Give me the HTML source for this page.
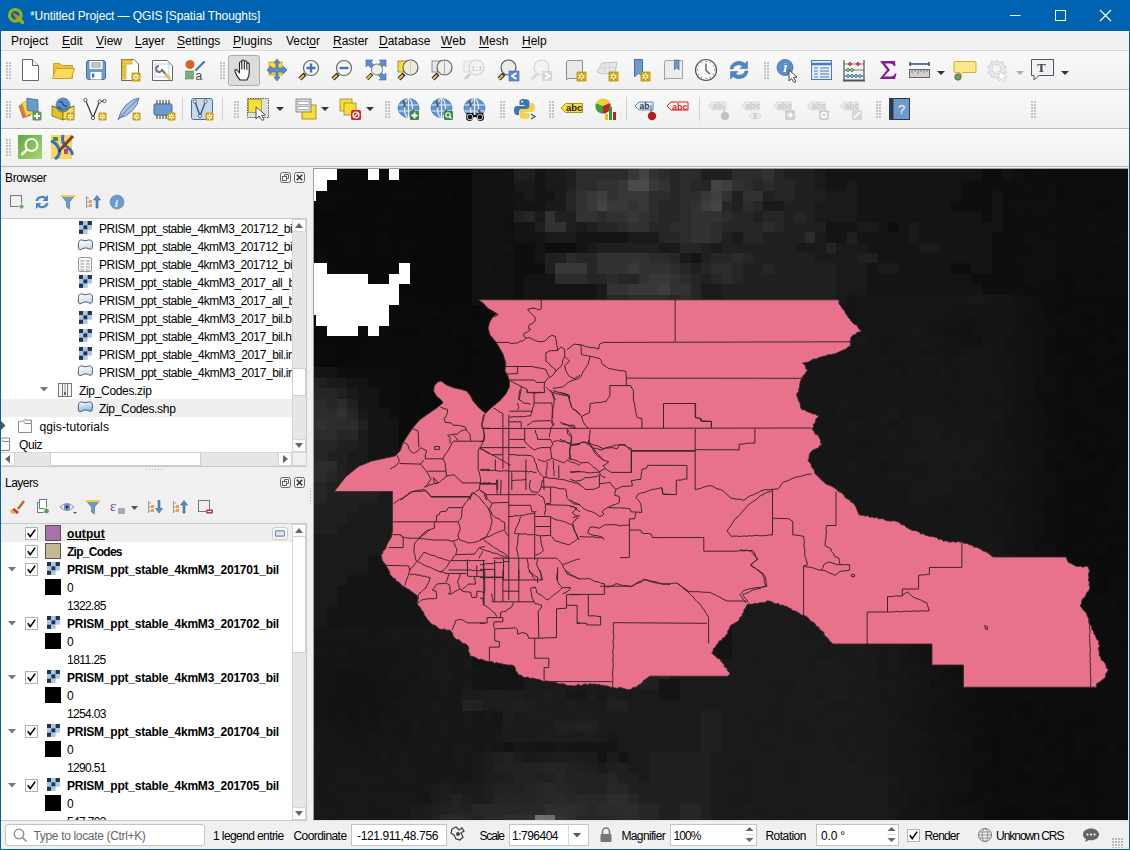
<!DOCTYPE html>
<html><head><meta charset="utf-8">
<style>
*{margin:0;padding:0;box-sizing:border-box}
html,body{width:1130px;height:850px;overflow:hidden;background:#f0f0f0;font-family:"Liberation Sans",sans-serif;font-size:12px;color:#000}
.a{position:absolute}
svg{position:absolute;overflow:visible}
#title{left:0;top:0;width:1130px;height:31px;background:#0063b1;color:#fff}
#menu{left:1px;top:31px;width:1128px;height:20px;background:#f0f0f0;border-top:1px solid #fbf8f3}
#menu span{position:absolute;top:2px;white-space:nowrap}
#menu u{text-decoration:none;border-bottom:1px solid #000;display:inline-block;line-height:11px}
.tb{left:1px;width:1128px;background:linear-gradient(#f9f9f9,#f0f0f0);border-top:1px solid #fff}
.sep{position:absolute;left:1px;width:1128px;height:1px;background:#c4c4c4}
.grip{position:absolute;width:5px;height:17px;background-image:radial-gradient(circle at 1px 1px,#c2c2c2 0.8px,transparent 1px);background-size:3px 3px}
.vsep{position:absolute;width:1px;height:24px;background:#d0d0d0}

</style></head><body>
<div id="title" class="a">
  <svg style="left:7px;top:7px" width="18" height="18" viewBox="0 0 18 18"><circle cx="8.3" cy="8.3" r="5.8" fill="none" stroke="#93b023" stroke-width="3.2"/><path d="M9.5 9.5 L15.5 15.5" stroke="#93b023" stroke-width="3.4" stroke-linecap="round"/><path d="M6.5 6.5 L11 11" stroke="#ee7913" stroke-width="2"/></svg>
  <div class="a" style="left:30px;top:9px;font-size:12px;white-space:nowrap;letter-spacing:-0.1px">*Untitled Project — QGIS [Spatial Thoughts]</div>
  <svg style="left:1010px;top:15px" width="11" height="2"><path d="M0 0.5H10.5" stroke="#fff" stroke-width="1"/></svg>
  <svg style="left:1055px;top:10px" width="11" height="11"><rect x="0.5" y="0.5" width="10" height="10" fill="none" stroke="#fff"/></svg>
  <svg style="left:1100px;top:10px" width="11" height="11"><path d="M0 0L11 11M11 0L0 11" stroke="#fff" stroke-width="1.1"/></svg>
</div>
<div class="a" style="left:0;top:31px;width:1px;height:819px;background:#0063b1"></div>
<div class="a" style="left:1129px;top:31px;width:1px;height:819px;background:#0063b1"></div>
<div id="menu" class="a">
  <span style="left:10px">Pro<u>j</u>ect</span><span style="left:61px"><u>E</u>dit</span><span style="left:95px"><u>V</u>iew</span><span style="left:134px"><u>L</u>ayer</span><span style="left:176px"><u>S</u>ettings</span><span style="left:232px"><u>P</u>lugins</span><span style="left:285px">Vect<u>o</u>r</span><span style="left:332px"><u>R</u>aster</span><span style="left:378px"><u>D</u>atabase</span><span style="left:440px"><u>W</u>eb</span><span style="left:478px"><u>M</u>esh</span><span style="left:521px"><u>H</u>elp</span>
</div>
<div class="sep" style="top:50px;background:#d8d8d8"></div>
<div class="a tb" style="top:51px;height:38px"></div>
<div class="sep" style="top:89px;background:#b9b9b9"></div>
<div class="a tb" style="top:90px;height:38px"></div>
<div class="sep" style="top:128px;background:#b9b9b9"></div>
<div class="a tb" style="top:129px;height:37px"></div>
<div class="sep" style="top:166px;background:#b9b9b9"></div>
<div class="grip" style="left:6px;top:62px"></div>
<svg style="left:18px;top:58px" width="24" height="24" viewBox="0 0 24 24"><path d="M4.5 1.5H14.5L20.5 7.5V22.5H4.5Z" fill="#fff" stroke="#666" stroke-width="1"/><path d="M14.5 1.5V7.5H20.5" fill="#f0f0f0" stroke="#666"/></svg>
<svg style="left:51px;top:58px" width="24" height="24" viewBox="0 0 24 24"><path d="M2.5 5.5H9L11 7.5H21.5V20.5H2.5Z" fill="#e8c440" stroke="#c9a227"/><path d="M4.5 10.5H23.5L20.5 20.5H1.5Z" fill="#fad858" stroke="#c9a227"/></svg>
<svg style="left:84px;top:58px" width="24" height="24" viewBox="0 0 24 24"><rect x="2.5" y="2.5" width="19" height="19" rx="2.5" fill="#6e9acb" stroke="#3f6fa5"/><rect x="5.5" y="3" width="13" height="8" fill="#fff"/><path d="M7 5H17M7 7H17M7 9H17" stroke="#666" stroke-width="0.8"/><rect x="6.5" y="14" width="11" height="7.5" fill="#fff"/><rect x="8" y="15.5" width="2.2" height="4" fill="#3f6fa5"/></svg>
<svg style="left:117px;top:58px" width="24" height="24" viewBox="0 0 24 24"><path d="M4.5 1.5H17L21.5 6V22.5H4.5Z" fill="#fff" stroke="#666"/><path d="M5 2H9V21H5Z" fill="#f2cc3c" stroke="#c9a227" stroke-width="0.8"/><path d="M5 2H15V6H9" fill="#f2cc3c" stroke="#c9a227" stroke-width="0.8"/><path d="M5.5 5H7.5M5.5 8H7.5M5.5 11H7.5M5.5 14H7.5M5.5 17H7.5" stroke="#b08a10" stroke-width="0.6"/><rect x="14.5" y="14.5" width="9" height="9" rx="1.2" fill="#c9a010"/><path d="M19 15.76V22.24M16.21 17.38L21.79 20.62M16.21 20.62L21.79 17.38" stroke="#fff" stroke-width="1.2"/><circle cx="19" cy="19" r="1.53" fill="#c9a010" stroke="#fff" stroke-width="0.8"/></svg>
<svg style="left:151px;top:58px" width="24" height="24" viewBox="0 0 24 24"><path d="M1.5 2.5H16L21.5 8V22.5H1.5Z" fill="#fff" stroke="#666"/><rect x="4" y="6" width="14" height="13" fill="#fff" stroke="#a9c1ea" stroke-width="0.8"/><path d="M8 8A3 3 0 1 0 11 12L19 21" stroke="#777" stroke-width="2.2" fill="none"/><path d="M14 16L19.5 21.5" stroke="#e0c060" stroke-width="2.6"/></svg>
<svg style="left:183px;top:58px" width="24" height="24" viewBox="0 0 24 24"><circle cx="7" cy="6.5" r="4.5" fill="#d9622b"/><path d="M13 12L21 4" stroke="#4a7bbd" stroke-width="2.4" stroke-linecap="round"/><rect x="2.5" y="13" width="8" height="8" fill="#7bac7b" stroke="#5c8c5c" stroke-width="0.6"/><text x="12.5" y="21.5" font-size="12" font-family="Liberation Sans, sans-serif" fill="#444">a</text></svg>
<div class="grip" style="left:220px;top:62px"></div>
<div class="a" style="left:228px;top:55px;width:32px;height:31px;background:#dcdcdc;border:1px solid #adadad;border-radius:3px"></div>
<svg style="left:232px;top:58px" width="24" height="24" viewBox="0 0 24 24"><path d="M8 22C5 19 3.5 15.5 3 13.2C2.6 11.5 4.2 11 5.5 12.5L7.5 15V5C7.5 3.3 9.8 3.3 9.8 5V11V3.2C9.8 1.5 12.3 1.5 12.3 3.2V11V4C12.3 2.3 14.8 2.3 14.8 4V11.5V6C14.8 4.5 17.2 4.5 17.2 6V15C17.2 18 16 20 15 22Z" fill="#fff" stroke="#222" stroke-width="1.1" stroke-linejoin="round"/></svg>
<svg style="left:265px;top:58px" width="24" height="24" viewBox="0 0 24 24"><rect x="4" y="4" width="13" height="13" fill="#f7df35" stroke="#b89a10" stroke-width="0.8"/><path d="M12 1L15 5H13V10H18V8L22 12L18 16V14H13V19H15L12 23L9 19H11V14H6V16L2 12L6 8V10H11V5H9Z" fill="#5b8ccd" stroke="#3b6aa8" stroke-width="0.7"/></svg>
<svg style="left:297px;top:58px" width="24" height="24" viewBox="0 0 24 24"><path d="M8 16L3 21" stroke="#222" stroke-width="4"/><path d="M7 17L3 21" stroke="#e8c547" stroke-width="2.2"/><circle cx="14" cy="10" r="7.5" fill="#f4f4f4" stroke="#666" stroke-width="1.2"/><path d="M14 5.5V14.5M9.5 10H18.5" stroke="#3f75b8" stroke-width="2.4"/></svg>
<svg style="left:330px;top:58px" width="24" height="24" viewBox="0 0 24 24"><path d="M8 16L3 21" stroke="#222" stroke-width="4"/><path d="M7 17L3 21" stroke="#e8c547" stroke-width="2.2"/><circle cx="14" cy="10" r="7.5" fill="#f4f4f4" stroke="#666" stroke-width="1.2"/><path d="M9.5 10H18.5" stroke="#3f75b8" stroke-width="2.4"/></svg>
<svg style="left:364px;top:58px" width="24" height="24" viewBox="0 0 24 24"><path d="M2 2H9L7 4L10 7L7 10L4 7L2 9Z M22 2H15L17 4L14 7L17 10L20 7L22 9Z M22 22H15L17 20L14 17L17 14L20 17L22 15Z" fill="#5b8ccd" stroke="#3b6aa8" stroke-width="0.6"/><circle cx="13" cy="11.5" r="5.5" fill="#eee" stroke="#777"/><path d="M8 16L3 21" stroke="#222" stroke-width="3.6"/><path d="M7.2 16.8L3 21" stroke="#e8c547" stroke-width="2"/></svg>
<svg style="left:396px;top:58px" width="24" height="24" viewBox="0 0 24 24"><rect x="2" y="3" width="9" height="11" fill="#f7df35" stroke="#8a7a20" stroke-width="0.8"/><path d="M8 16L3 21" stroke="#222" stroke-width="4"/><path d="M7 17L3 21" stroke="#e8c547" stroke-width="2.2"/><circle cx="14.5" cy="9.5" r="7.5" fill="#ececdc" stroke="#666" stroke-width="1.2"/><path d="M14.5 2.5V16.5" stroke="#ccc" stroke-width="1"/></svg>
<svg style="left:430px;top:58px" width="24" height="24" viewBox="0 0 24 24"><rect x="2" y="3" width="9" height="11" fill="#e6e6e6" stroke="#777" stroke-width="0.8"/><path d="M8 16L3 21" stroke="#222" stroke-width="4"/><path d="M7 17L3 21" stroke="#e8c547" stroke-width="2.2"/><circle cx="14.5" cy="9.5" r="7.5" fill="#eee" stroke="#666" stroke-width="1.2"/><path d="M14.5 2.5V16.5" stroke="#aaa" stroke-width="1"/></svg>
<svg style="left:462px;top:58px" width="24" height="24" viewBox="0 0 24 24"><rect x="2" y="3" width="9" height="11" fill="#f0f0f0" stroke="#d4d4d4" stroke-width="0.8"/><path d="M8 16L3 21" stroke="#d0d0d0" stroke-width="3"/><circle cx="14.5" cy="9.5" r="7.5" fill="#f3f3f3" stroke="#d0d0d0" stroke-width="1.2"/><text x="9" y="13" font-size="8" font-weight="bold" fill="#d0d0d0" font-family="Liberation Sans">1:1</text></svg>
<svg style="left:496px;top:58px" width="24" height="24" viewBox="0 0 24 24"><path d="M8 16L3 21" stroke="#222" stroke-width="4"/><path d="M7 17L3 21" stroke="#e8c547" stroke-width="2.2"/><circle cx="12.5" cy="9.5" r="7.5" fill="#ececec" stroke="#555" stroke-width="1.2"/><rect x="13" y="13" width="10" height="10" fill="#5b8ccd" stroke="#3b6aa8" stroke-width="0.6"/><path d="M20.5 15L16 18L20.5 21" stroke="#fff" stroke-width="1.8" fill="none"/></svg>
<svg style="left:529px;top:58px" width="24" height="24" viewBox="0 0 24 24"><path d="M8 16L3 21" stroke="#d8d8d8" stroke-width="3"/><circle cx="12.5" cy="9.5" r="7.5" fill="#f3f3f3" stroke="#d4d4d4" stroke-width="1.2"/><rect x="13" y="13" width="10" height="10" fill="#d8d8d8"/><path d="M16 15L20.5 18L16 21" stroke="#fff" stroke-width="1.8" fill="none"/></svg>
<svg style="left:563px;top:58px" width="24" height="24" viewBox="0 0 24 24"><path d="M3.5 4.5Q3.5 2.5 6 2.5H19.5V20.5H6Q3.5 20.5 3.5 22Z" fill="#e9e9e9" stroke="#888" stroke-width="0.9"/><path d="M3.5 4.5V21" stroke="#888" stroke-width="0.9"/><rect x="13.5" y="13.5" width="10" height="10" rx="1.2" fill="#c9a010"/><path d="M18.5 14.9V22.1M15.4 16.7L21.6 20.3M15.4 20.3L21.6 16.7" stroke="#fff" stroke-width="1.2"/><circle cx="18.5" cy="18.5" r="1.7000000000000002" fill="#c9a010" stroke="#fff" stroke-width="0.8"/></svg>
<svg style="left:595px;top:58px" width="24" height="24" viewBox="0 0 24 24"><path d="M2 14L7 5L22 4L20 15L7 16Z" fill="#e6e6e6" stroke="#bbb" stroke-width="0.8"/><path d="M5 10L21 9M10 5L9 16M15 5L14 16" stroke="#ccc" stroke-width="0.6"/><rect x="13.5" y="13.5" width="10" height="10" rx="1.2" fill="#c9a010"/><path d="M18.5 14.9V22.1M15.4 16.7L21.6 20.3M15.4 20.3L21.6 16.7" stroke="#fff" stroke-width="1.2"/><circle cx="18.5" cy="18.5" r="1.7000000000000002" fill="#c9a010" stroke="#fff" stroke-width="0.8"/></svg>
<svg style="left:631px;top:58px" width="24" height="24" viewBox="0 0 24 24"><path d="M3.5 1.5H11.5V19L7.5 15L3.5 19Z" fill="#6e9acb" stroke="#3f6fa5"/><rect x="9.5" y="13.5" width="10" height="10" rx="1.2" fill="#c9a010"/><path d="M14.5 14.9V22.1M11.4 16.7L17.6 20.3M11.4 20.3L17.6 16.7" stroke="#fff" stroke-width="1.2"/><circle cx="14.5" cy="18.5" r="1.7000000000000002" fill="#c9a010" stroke="#fff" stroke-width="0.8"/></svg>
<svg style="left:661px;top:58px" width="24" height="24" viewBox="0 0 24 24"><path d="M3.5 4.5Q3.5 2.5 6 2.5H21.5V20.5H6Q3.5 20.5 3.5 22Z" fill="#ececec" stroke="#999" stroke-width="0.9"/><path d="M13.5 2H18V12L15.8 9.5L13.5 12Z" fill="#6e9acb" stroke="#3f6fa5" stroke-width="0.7"/></svg>
<svg style="left:694px;top:58px" width="24" height="24" viewBox="0 0 24 24"><circle cx="12" cy="12" r="10.5" fill="#fafafa" stroke="#555" stroke-width="1.2"/><path d="M12 5.5V12.5L16 16" stroke="#555" stroke-width="1.3" fill="none"/><g fill="#4a7bbd"><circle cx="12" cy="3.5" r="0.7"/><circle cx="20.5" cy="12" r="0.7"/><circle cx="12" cy="20.5" r="0.7"/><circle cx="3.5" cy="12" r="0.7"/><circle cx="16.2" cy="4.6" r="0.6"/><circle cx="19.4" cy="7.8" r="0.6"/><circle cx="19.4" cy="16.2" r="0.6"/><circle cx="16.2" cy="19.4" r="0.6"/><circle cx="7.8" cy="19.4" r="0.6"/><circle cx="4.6" cy="16.2" r="0.6"/><circle cx="4.6" cy="7.8" r="0.6"/><circle cx="7.8" cy="4.6" r="0.6"/></g></svg>
<svg style="left:727px;top:58px" width="24" height="24" viewBox="0 0 24 24"><path d="M3 11A9 8.5 0 0 1 18 5.5L20.5 3V10.5H13L15.5 8A6 5.5 0 0 0 6 11Z" fill="#4d86c8" stroke="#3b6aa8" stroke-width="0.5"/><path d="M21 13A9 8.5 0 0 1 6 18.5L3.5 21V13.5H11L8.5 16A6 5.5 0 0 0 18 13Z" fill="#4d86c8" stroke="#3b6aa8" stroke-width="0.5"/></svg>
<div class="grip" style="left:764px;top:62px"></div>
<svg style="left:775px;top:58px" width="24" height="24" viewBox="0 0 24 24"><circle cx="10" cy="9.5" r="8" fill="#5b8fcb" stroke="#3f6fa5" stroke-width="0.8"/><path d="M10.5 5.5V5M9.5 8H11L9.5 13H11" stroke="#fff" stroke-width="1.8" fill="none"/><path d="M14 12L14 23L16.5 20.5L19 24.5L21 23.5L18.5 19.5L22 19Z" fill="#fff" stroke="#333" stroke-width="0.9"/></svg>
<svg style="left:809px;top:58px" width="24" height="24" viewBox="0 0 24 24"><rect x="2.5" y="2.5" width="20" height="19" fill="#e4eef9" stroke="#4a7bbd"/><path d="M2.5 6H22.5" stroke="#4a7bbd" stroke-width="2.5"/><path d="M5 10H9M11 10H20M5 13H9M11 13H20M5 16H9M11 16H20M5 19H9M11 19H20" stroke="#4a7bbd" stroke-width="1.2"/></svg>
<svg style="left:842px;top:58px" width="24" height="24" viewBox="0 0 24 24"><path d="M2 2V22M22 2V22" stroke="#555" stroke-width="1.2"/><path d="M1 22.5H23" stroke="#555" stroke-width="2"/><path d="M2 6H22M2 12H22M2 18H22" stroke="#555" stroke-width="0.8"/><g stroke-width="0.8"><path d="M8 4L10 6L8 8L6 6Z M16 4L18 6L16 8L14 6Z" fill="#e05050" stroke="#b03030"/><path d="M6 10L8 12L6 14L4 12Z M10 10L12 12L10 14L8 12Z" fill="#80c080" stroke="#408040"/><path d="M6 16L8 18L6 20L4 18Z M10 16L12 18L10 20L8 18Z M14 16L16 18L14 20L12 18Z M18 16L20 18L18 20L16 18Z" fill="#80b0e0" stroke="#4070b0"/></g></svg>
<svg style="left:876px;top:58px" width="24" height="24" viewBox="0 0 24 24"><path d="M4 3H19L19.5 8H18Q17 5.5 14 5.5H9L14 12L8 18.5H14.5Q18 18.5 19 15.5H20.5L19 21H3.5L11 12Z" fill="#8b1a9c"/></svg>
<svg style="left:907px;top:58px" width="24" height="24" viewBox="0 0 24 24"><path d="M3 6H22M3 4V8M22 4V8" stroke="#2f4f7f" stroke-width="1.5"/><rect x="2.5" y="11.5" width="20" height="8" fill="#d0d0d0" stroke="#666"/><path d="M5 12V15M8 12V14M11 12V16M14 12V14M17 12V15M20 12V14" stroke="#666" stroke-width="0.8"/></svg>
<svg style="left:937px;top:71px" width="8" height="4" viewBox="0 0 8 4"><path d="M0 0H8L4 4Z" fill="#333"/></svg>
<svg style="left:952px;top:58px" width="24" height="24" viewBox="0 0 24 24"><path d="M3 3.5H23Q24 3.5 24 5V13Q24 14.5 23 14.5H11L8 18V14.5H3Q2 14.5 2 13V5Q2 3.5 3 3.5Z" fill="#fbe88a" stroke="#d0b030"/><circle cx="6" cy="19" r="3.2" fill="#6aa06a" stroke="#3a6a3a" stroke-width="0.8"/></svg>
<svg style="left:985px;top:58px" width="24" height="24" viewBox="0 0 24 24"><path d="M12 2L14 4.5L17.5 3.5L18 7L21.5 8.5L19.5 11.5L21.5 14.5L18 16L17 19.5L14 18.5L12 21L10 18.5L6.5 19.5L6 16L2.5 14.5L4.5 11.5L2.5 8.5L6 7L6.5 3.5L10 4.5Z" fill="#e8e8e8" stroke="#d0d0d0"/><circle cx="11.5" cy="11" r="4.5" fill="#f4f4f4" stroke="#d0d0d0"/><path d="M14 13L14 23L16.5 20.5L19 24L21 23L18.5 19.5L22 19Z" fill="#fff" stroke="#ccc" stroke-width="0.9"/></svg>
<svg style="left:1016px;top:71px" width="8" height="4" viewBox="0 0 8 4"><path d="M0 0H8L4 4Z" fill="#aaa"/></svg>
<svg style="left:1030px;top:58px" width="24" height="24" viewBox="0 0 24 24"><path d="M1.5 1.5H23.5V17.5H9L4 22V17.5H1.5Z" fill="#eef2f6" stroke="#555" stroke-width="1"/><text x="7" y="14" font-size="13" font-family="Liberation Serif" font-weight="bold" fill="#444">T</text></svg>
<svg style="left:1061px;top:71px" width="8" height="4" viewBox="0 0 8 4"><path d="M0 0H8L4 4Z" fill="#333"/></svg>
<div class="grip" style="left:6px;top:101px"></div>
<svg style="left:18px;top:97px" width="24" height="24" viewBox="0 0 24 24"><path d="M1 9L8 5L13 18L5 21Z" fill="#e07a3a" stroke="#b05020" stroke-width="0.6"/><path d="M4 6L11 3L15 16L8 19Z" fill="#f7d84a" stroke="#c0a020" stroke-width="0.6"/><path d="M8 2H19L21 14H10Z" fill="#6e9acb" stroke="#3f6fa5" stroke-width="0.8" transform="rotate(8 14 8)"/><rect x="14.5" y="14.5" width="9" height="9" rx="1.5" fill="#5a9a5a"/><path d="M19 16V22M16 19H22" stroke="#fff" stroke-width="1.8"/></svg>
<svg style="left:51px;top:97px" width="24" height="24" viewBox="0 0 24 24"><path d="M1 9L12 13V23L1 19Z" fill="#e4c020" stroke="#706010" stroke-width="0.7"/><path d="M12 13L23 9V19L12 23Z" fill="#f7de4a" stroke="#706010" stroke-width="0.7"/><circle cx="12" cy="8" r="7" fill="#5b8ccd" stroke="#3f6fa5" stroke-width="0.7"/><path d="M8 5Q11 4 12 7T16 9M7 10Q10 11 11 13" stroke="#2f4f7f" stroke-width="1.4" fill="none"/><path d="M1 9L12 13L23 9" fill="none" stroke="#706010" stroke-width="0.7"/><rect x="15.5" y="15.5" width="8" height="8" rx="1.2" fill="#c9a010"/><path d="M19.5 16.62V22.38M17.02 18.06L21.98 20.94M17.02 20.94L21.98 18.06" stroke="#fff" stroke-width="1.2"/><circle cx="19.5" cy="19.5" r="1.36" fill="#c9a010" stroke="#fff" stroke-width="0.8"/></svg>
<svg style="left:83px;top:97px" width="24" height="24" viewBox="0 0 24 24"><path d="M2.5 3L10 21L16.5 4.5L21.5 4" fill="none" stroke="#333" stroke-width="1.2"/><circle cx="2.5" cy="3" r="1.6" fill="#fff" stroke="#333" stroke-width="0.8"/><circle cx="10" cy="21" r="1.6" fill="#fff" stroke="#333" stroke-width="0.8"/><circle cx="16.5" cy="4.5" r="1.6" fill="#fff" stroke="#333" stroke-width="0.8"/><circle cx="21.5" cy="4" r="1.6" fill="#fff" stroke="#333" stroke-width="0.8"/><rect x="15.5" y="15.5" width="8" height="8" rx="1.2" fill="#c9a010"/><path d="M19.5 16.62V22.38M17.02 18.06L21.98 20.94M17.02 20.94L21.98 18.06" stroke="#fff" stroke-width="1.2"/><circle cx="19.5" cy="19.5" r="1.36" fill="#c9a010" stroke="#fff" stroke-width="0.8"/></svg>
<svg style="left:117px;top:97px" width="24" height="24" viewBox="0 0 24 24"><path d="M1 23Q3 14 9 8Q15 2 22 1Q21 8 15 14Q9 20 2 21Z" fill="#a9bfe0" stroke="#4a6a9a" stroke-width="0.8"/><path d="M2 22Q10 12 20 3" stroke="#4a6a9a" stroke-width="0.8" fill="none"/><rect x="15.5" y="15.5" width="8" height="8" rx="1.2" fill="#c9a010"/><path d="M19.5 16.62V22.38M17.02 18.06L21.98 20.94M17.02 20.94L21.98 18.06" stroke="#fff" stroke-width="1.2"/><circle cx="19.5" cy="19.5" r="1.36" fill="#c9a010" stroke="#fff" stroke-width="0.8"/></svg>
<svg style="left:152px;top:97px" width="24" height="24" viewBox="0 0 24 24"><rect x="2" y="7" width="18" height="11" rx="1" fill="#6e9acb" stroke="#3f6fa5"/><path d="M5 3V7M8 3V7M11 3V7M14 3V7M17 3V7M5 18V22M8 18V22M11 18V22M14 18V22" stroke="#333" stroke-width="1"/><rect x="15.5" y="15.5" width="8" height="8" rx="1.2" fill="#c9a010"/><path d="M19.5 16.62V22.38M17.02 18.06L21.98 20.94M17.02 20.94L21.98 18.06" stroke="#fff" stroke-width="1.2"/><circle cx="19.5" cy="19.5" r="1.36" fill="#c9a010" stroke="#fff" stroke-width="0.8"/></svg>
<div class="vsep" style="left:182px;top:97px"></div>
<svg style="left:190px;top:97px" width="24" height="24" viewBox="0 0 24 24"><rect x="1.5" y="1.5" width="21" height="21" rx="2" fill="#c8d8ea" stroke="#3f6fa5" stroke-width="1"/><path d="M5 4.5L10 19L15.5 4.5" fill="none" stroke="#2f4f7f" stroke-width="1.3"/><circle cx="5" cy="4.5" r="1.6" fill="#fff" stroke="#333" stroke-width="0.7"/><circle cx="10" cy="19" r="1.6" fill="#fff" stroke="#333" stroke-width="0.7"/><circle cx="15.5" cy="4.5" r="1.6" fill="#fff" stroke="#333" stroke-width="0.7"/><rect x="15.5" y="15.5" width="8" height="8" rx="1.2" fill="#c9a010"/><path d="M19.5 16.62V22.38M17.02 18.06L21.98 20.94M17.02 20.94L21.98 18.06" stroke="#fff" stroke-width="1.2"/><circle cx="19.5" cy="19.5" r="1.36" fill="#c9a010" stroke="#fff" stroke-width="0.8"/></svg>
<div class="vsep" style="left:222px;top:97px"></div>
<div class="grip" style="left:234px;top:101px"></div>
<svg style="left:246px;top:97px" width="24" height="24" viewBox="0 0 24 24"><rect x="1.5" y="1.5" width="21" height="19" fill="#e0e0e0" stroke="#333" stroke-width="0.8" stroke-dasharray="1.5 1"/><rect x="2.5" y="2.5" width="13" height="13" fill="#f7df35" stroke="#8a7a20" stroke-width="0.6"/><path d="M10 10L10 22L13 19L16 23.5L18 22.5L15.5 18.5L19.5 18Z" fill="#fff" stroke="#444" stroke-width="0.9"/></svg>
<svg style="left:276px;top:107px" width="8" height="4" viewBox="0 0 8 4"><path d="M0 0H8L4 4Z" fill="#333"/></svg>
<svg style="left:294px;top:97px" width="24" height="24" viewBox="0 0 24 24"><rect x="8" y="8" width="14" height="14" fill="#f7df35" stroke="#8a7a20" stroke-width="0.8"/><rect x="2" y="2" width="15" height="13" fill="#dcdcdc" stroke="#777" stroke-width="0.8"/><rect x="4" y="4.5" width="11" height="3" fill="#fff" stroke="#888" stroke-width="0.6"/><rect x="4" y="9.5" width="11" height="3" fill="#fff" stroke="#888" stroke-width="0.6"/></svg>
<svg style="left:321px;top:107px" width="8" height="4" viewBox="0 0 8 4"><path d="M0 0H8L4 4Z" fill="#333"/></svg>
<svg style="left:338px;top:97px" width="24" height="24" viewBox="0 0 24 24"><rect x="2" y="2" width="12" height="12" fill="#f7df35" stroke="#8a7a20" stroke-width="0.7"/><rect x="6" y="6" width="12" height="12" fill="#f7df35" stroke="#8a7a20" stroke-width="0.7"/><rect x="13" y="13" width="10" height="10" rx="1.5" fill="#d02828"/><circle cx="18" cy="18" r="3" fill="none" stroke="#fff" stroke-width="1.2"/><path d="M16 20L20 16" stroke="#fff" stroke-width="1.2"/></svg>
<svg style="left:366px;top:107px" width="8" height="4" viewBox="0 0 8 4"><path d="M0 0H8L4 4Z" fill="#333"/></svg>
<div class="grip" style="left:385px;top:101px"></div>
<svg style="left:397px;top:97px" width="24" height="24" viewBox="0 0 24 24"><ellipse cx="11.5" cy="11" rx="10.5" ry="9.5" fill="#5b95d8" stroke="#3b6aa8" stroke-width="0.7"/><ellipse cx="11.5" cy="11" rx="4" ry="9.5" fill="none" stroke="#eee" stroke-width="1.2"/><path d="M1.5 8H21.5M1.5 14H21.5M11.5 1.5V20.5" stroke="#eee" stroke-width="1.2"/><path d="M6 4Q9 6 7 10M15 13Q18 15 17 18" stroke="#555" stroke-width="2" fill="none"/><rect x="13" y="14" width="9" height="9" rx="1" fill="#3f8a4a"/><path d="M17.5 15.5V21.5M14.5 18.5H20.5" stroke="#fff" stroke-width="1.8"/></svg>
<svg style="left:430px;top:97px" width="24" height="24" viewBox="0 0 24 24"><ellipse cx="11.5" cy="11" rx="10.5" ry="9.5" fill="#5b95d8" stroke="#3b6aa8" stroke-width="0.7"/><ellipse cx="11.5" cy="11" rx="4" ry="9.5" fill="none" stroke="#eee" stroke-width="1.2"/><path d="M1.5 8H21.5M1.5 14H21.5M11.5 1.5V20.5" stroke="#eee" stroke-width="1.2"/><path d="M6 4Q9 6 7 10M15 13Q18 15 17 18" stroke="#555" stroke-width="2" fill="none"/><rect x="14" y="14" width="9" height="9" rx="1" fill="#3f8a4a"/><circle cx="18" cy="18" r="2.2" fill="none" stroke="#fff" stroke-width="1.1"/><path d="M19.5 19.5L21.5 21.5" stroke="#fff" stroke-width="1.2"/></svg>
<svg style="left:463px;top:97px" width="24" height="24" viewBox="0 0 24 24"><ellipse cx="11.5" cy="11" rx="10.5" ry="9.5" fill="#5b95d8" stroke="#3b6aa8" stroke-width="0.7"/><ellipse cx="11.5" cy="11" rx="4" ry="9.5" fill="none" stroke="#eee" stroke-width="1.2"/><path d="M1.5 8H21.5M1.5 14H21.5M11.5 1.5V20.5" stroke="#eee" stroke-width="1.2"/><path d="M6 4Q9 6 7 10M15 13Q18 15 17 18" stroke="#555" stroke-width="2" fill="none"/><path d="M4 16H10L11 18H13L14 16H20L21 20A3.5 3.5 0 0 1 14 21L13 20H11L10 21A3.5 3.5 0 0 1 3 20Z" fill="#111"/><circle cx="7" cy="20" r="2.8" fill="#111" stroke="#fff" stroke-width="0.8"/><circle cx="17" cy="20" r="2.8" fill="#111" stroke="#fff" stroke-width="0.8"/></svg>
<div class="grip" style="left:500px;top:101px"></div>
<svg style="left:513px;top:97px" width="24" height="24" viewBox="0 0 24 24"><path d="M11 2C6 2 6.5 4 6.5 6V8H11.5V9H4C1.5 9 1 11 1 13.5S2 18 4 18H6V15C6 13 7.5 12 9.5 12H14C16 12 16.5 10.5 16.5 9V5C16.5 3 14.5 2 11 2Z" fill="#3d75b0"/><path d="M12 22C17 22 16.5 20 16.5 18V16H11.5V15H19C21.5 15 22 13 22 10.5S21 6 19 6H17V9C17 11 15.5 12 13.5 12H9C7 12 6.5 13.5 6.5 15V19C6.5 21 8.5 22 12 22Z" fill="#f5d24a"/><circle cx="9" cy="4.5" r="0.9" fill="#fff"/><path d="M18 17L22 19.5L18 22" stroke="#444" stroke-width="1.1" fill="none"/></svg>
<div class="grip" style="left:549px;top:101px"></div>
<svg style="left:560px;top:97px" width="24" height="24" viewBox="0 0 24 24"><path d="M1 11L5.5 6.5H22.5V15.5H5.5Z" fill="#f7df35" stroke="#a08a10" stroke-width="0.9"/><text x="6" y="14" font-size="9.5" font-weight="bold" fill="#222" font-family="Liberation Sans">abc</text></svg>
<svg style="left:594px;top:97px" width="24" height="24" viewBox="0 0 24 24"><path d="M9 9L9 1.5A7.5 7.5 0 0 1 16 6Z" fill="#e8d030"/><path d="M9 9L16 6A7.5 7.5 0 0 1 9 16.5Z" fill="#c02020"/><path d="M9 9L9 16.5A7.5 7.5 0 0 1 2 6Z" fill="#3aa040"/><path d="M9 9L2 6A7.5 7.5 0 0 1 9 1.5Z" fill="#e8d030"/><rect x="11" y="17" width="3" height="6" fill="#e8c020"/><rect x="15" y="10" width="3" height="13" fill="#2a9a3a"/><rect x="19" y="15" width="3" height="8" fill="#c02020"/></svg>
<div class="vsep" style="left:626px;top:97px"></div>
<svg style="left:634px;top:97px" width="24" height="24" viewBox="0 0 24 24"><path d="M1 9L5 5H19V13H5Z" fill="#e4eefa" stroke="#4a7bbd" stroke-width="0.9"/><text x="5.5" y="12" font-size="8.5" font-weight="bold" fill="#333" font-family="Liberation Sans">ab</text><path d="M17 8V15" stroke="#888" stroke-width="1.5"/><circle cx="18" cy="19" r="4.2" fill="#b02020"/></svg>
<svg style="left:666px;top:97px" width="24" height="24" viewBox="0 0 24 24"><path d="M1 9L5 5H22V13H5Z" fill="#fff" stroke="#d02020" stroke-width="1"/><text x="6" y="12.5" font-size="9" font-weight="bold" fill="#d02020" font-family="Liberation Sans">abc</text></svg>
<div class="vsep" style="left:699px;top:97px"></div>
<svg style="left:707px;top:97px" width="24" height="24" viewBox="0 0 24 24"><path d="M1 9L5 5H19V13H5Z" fill="#e8e8e0" stroke="#ddd" stroke-width="0.9"/><text x="5.5" y="12" font-size="8.5" font-weight="bold" fill="#c8c8c8" font-family="Liberation Sans">ab</text><path d="M17 8V15" stroke="#ccc" stroke-width="1.5"/><circle cx="18" cy="19" r="4.2" fill="#c8c0c0"/></svg>
<svg style="left:740px;top:97px" width="24" height="24" viewBox="0 0 24 24"><path d="M1 9L5 5H19V13H5Z" fill="#e8e8e0" stroke="#ddd" stroke-width="0.9"/><text x="5.5" y="12" font-size="8.5" font-weight="bold" fill="#c8c8c8" font-family="Liberation Sans">abc</text><path d="M9 19Q15 13 21 19Q15 25 9 19Z" fill="#f6f6f6" stroke="#ccc" stroke-width="0.9"/><circle cx="15" cy="19" r="2" fill="#ccc"/></svg>
<svg style="left:772px;top:97px" width="24" height="24" viewBox="0 0 24 24"><path d="M1 9L5 5H19V13H5Z" fill="#e8e8e0" stroke="#ddd" stroke-width="0.9"/><text x="5.5" y="12" font-size="8.5" font-weight="bold" fill="#c8c8c8" font-family="Liberation Sans">abc</text><rect x="13" y="13" width="10" height="10" rx="1.5" fill="#d0d0d0"/><path d="M15 18H19M17.5 15.5L20 18L17.5 20.5" stroke="#fff" stroke-width="1.6" fill="none"/></svg>
<svg style="left:806px;top:97px" width="24" height="24" viewBox="0 0 24 24"><path d="M1 9L5 5H19V13H5Z" fill="#e8e8e0" stroke="#ddd" stroke-width="0.9"/><text x="5.5" y="12" font-size="8.5" font-weight="bold" fill="#c8c8c8" font-family="Liberation Sans">abc</text><rect x="13" y="13" width="10" height="10" rx="1.5" fill="#d0d0d0"/><circle cx="18" cy="18" r="2.5" fill="none" stroke="#fff" stroke-width="1.4"/></svg>
<svg style="left:839px;top:97px" width="24" height="24" viewBox="0 0 24 24"><path d="M1 9L5 5H19V13H5Z" fill="#e8e8e0" stroke="#ddd" stroke-width="0.9"/><text x="5.5" y="12" font-size="8.5" font-weight="bold" fill="#c8c8c8" font-family="Liberation Sans">abc</text><rect x="13" y="13" width="10" height="10" rx="1.5" fill="#d8d8d0"/><path d="M15 21L21 15" stroke="#fff" stroke-width="1.6"/></svg>
<div class="grip" style="left:876px;top:101px"></div>
<svg style="left:888px;top:97px" width="24" height="24" viewBox="0 0 24 24"><rect x="1.5" y="1.5" width="20" height="21" fill="#6e9acb" stroke="#2a3a4a"/><rect x="1.5" y="1.5" width="4" height="21" fill="#2a3a4a"/><text x="10" y="17" font-size="13" fill="#fff" font-family="Liberation Sans">?</text></svg>
<div class="grip" style="left:1031px;top:101px"></div>
<div class="grip" style="left:6px;top:139px"></div>
<svg style="left:18px;top:135px" width="24" height="24" viewBox="0 0 24 24"><defs><linearGradient id="lg1" x1="0" y1="0" x2="1" y2="1"><stop offset="0" stop-color="#5fa840"/><stop offset="1" stop-color="#a8d870"/></linearGradient></defs><rect x="0" y="0" width="24" height="24" fill="url(#lg1)"/><circle cx="13.5" cy="10" r="6" fill="none" stroke="#fff" stroke-width="2"/><path d="M9 14.5L3.5 20" stroke="#fff" stroke-width="2.5"/></svg>
<svg style="left:51px;top:135px" width="24" height="24" viewBox="0 0 24 24"><rect x="0" y="0" width="21" height="24" fill="#f5d860"/><path d="M0 6Q6 8 8 14T4 24M12 0Q10 8 16 12T21 20" stroke="#3a6ad0" stroke-width="3" fill="none"/><rect x="2" y="2" width="5" height="4" fill="#3a9a3a"/><rect x="13" y="14" width="4" height="5" fill="#c03a8a"/><path d="M10 14L22 1" stroke="#8a4010" stroke-width="3"/><path d="M8 17L10 14" stroke="#222" stroke-width="1.5"/></svg>
<div class="a" style="left:1px;top:167px;width:311px;height:655px;background:#f0f0f0"></div>
<div class="a" style="left:5px;top:171px;font-size:12px;font-weight:400;letter-spacing:-0.359px;white-space:nowrap;color:#000;line-height:14px;">Browser</div>
<svg style="left:280px;top:172px" width="11" height="11" viewBox="0 0 11 11"><rect x="0.5" y="0.5" width="10" height="10" rx="2" fill="#f4f4f4" stroke="#666"/><rect x="2.5" y="4.5" width="4" height="4" fill="none" stroke="#555" stroke-width="0.9"/><path d="M4.5 4.5V2.5H8.5V6.5H6.5" fill="none" stroke="#555" stroke-width="0.9"/></svg>
<svg style="left:294px;top:172px" width="11" height="11" viewBox="0 0 11 11"><rect x="0.5" y="0.5" width="10" height="10" rx="2" fill="#f4f4f4" stroke="#666"/><path d="M2.8 2.8L8.2 8.2M8.2 2.8L2.8 8.2" stroke="#333" stroke-width="1.6"/></svg>
<svg style="left:9px;top:194px" width="16" height="16" viewBox="0 0 16 16"><rect x="1.5" y="1.5" width="11" height="11" fill="none" stroke="#777"/><circle cx="12.5" cy="12.5" r="2.6" fill="#6aaa6a" stroke="#fff" stroke-width="0.8"/></svg>
<svg style="left:34px;top:194px" width="16" height="16" viewBox="0 0 16 16"><path d="M1.5 7A6.5 6 0 0 1 12 3L14 1V7H8.5L10.5 5A4 3.7 0 0 0 4 7Z" fill="#4d86c8"/><path d="M14.5 9A6.5 6 0 0 1 4 13L2 15V9H7.5L5.5 11A4 3.7 0 0 0 12 9Z" fill="#4d86c8"/></svg>
<svg style="left:60px;top:194px" width="16" height="16" viewBox="0 0 16 16"><path d="M1 1.5H15L9.5 8V15L6.5 13V8Z" fill="#6e9acb" stroke="#3f6fa5" stroke-width="0.6"/><rect x="1" y="1" width="14" height="2" fill="#f0d040"/></svg>
<svg style="left:85px;top:194px" width="16" height="16" viewBox="0 0 16 16"><path d="M1.5 2V14M1.5 4H4M1.5 8H4M1.5 12H4" stroke="#999"/><rect x="4" y="6" width="3" height="3" fill="#f0a040"/><rect x="4" y="10" width="3" height="3" fill="#f0a040"/><path d="M11 14V6H8.5L12 1.5L15.5 6H13V14Z" fill="#5b8ccd" stroke="#2f5f95" stroke-width="0.6"/></svg>
<svg style="left:109px;top:194px" width="16" height="16" viewBox="0 0 16 16"><circle cx="8" cy="8" r="7" fill="#6e9acb" stroke="#5a86b8" stroke-width="0.6"/><text x="6" y="12.5" font-size="10" font-style="italic" font-weight="bold" fill="#fff" font-family="Liberation Serif">i</text></svg>
<div class="a" style="left:1px;top:218px;width:306px;height:249px;background:#fff;border:1px solid #c8c8c8;border-left:none"></div>
<div class="a" style="left:1px;top:399px;width:291px;height:18px;background:#efefef"></div>
<div class="a" style="left:1px;top:219px;width:291px;height:233px;overflow:hidden">
<svg style="left:76px;top:1px" width="16" height="16" viewBox="0 0 16 16"><g transform="translate(2 1)"><rect x="0" y="0" width="4.3" height="4.3" fill="#1e3350"/><rect x="4.3" y="0" width="4.3" height="4.3" fill="#a9c6e8"/><rect x="8.6" y="0" width="4.3" height="4.3" fill="#1e3350"/><rect x="0" y="4.3" width="4.3" height="4.3" fill="#a9c6e8"/><rect x="4.3" y="4.3" width="4.3" height="4.3" fill="#1e3350"/><rect x="8.6" y="4.3" width="4.3" height="4.3" fill="#a9c6e8"/><rect x="0" y="8.6" width="4.3" height="4.3" fill="#1e3350"/><rect x="4.3" y="8.6" width="4.3" height="4.3" fill="#a9c6e8"/></g></svg>
<div class="a" style="left:98px;top:3px;font-size:12px;font-weight:400;letter-spacing:-0.489px;white-space:nowrap;color:#000;line-height:14px;">PRISM_ppt_stable_4kmM3_201712_bi</div>
<svg style="left:76px;top:19px" width="16" height="16" viewBox="0 0 16 16"><defs><linearGradient id="vgc9dcf0" x1="0" y1="0" x2="0.3" y2="1"><stop offset="0" stop-color="#fff"/><stop offset="1" stop-color="#c9dcf0"/></linearGradient></defs><path d="M1.5 5.5Q1.5 1.5 5 2Q8 3.5 11.5 2Q15.5 1.5 15.5 5.5Q15.5 9 15 10.5Q14.5 12 12.5 11Q9 9 6 10.5Q2 13 1.5 10.5Q1 8 1.5 5.5Z" fill="url(#vgc9dcf0)" stroke="#3a4a5a" stroke-width="0.9"/></svg>
<div class="a" style="left:98px;top:21px;font-size:12px;font-weight:400;letter-spacing:-0.489px;white-space:nowrap;color:#000;line-height:14px;">PRISM_ppt_stable_4kmM3_201712_bi</div>
<svg style="left:76px;top:37px" width="16" height="16" viewBox="0 0 16 16"><rect x="1.5" y="1.5" width="13" height="14" rx="1.5" fill="#f4f4f4" stroke="#999"/><path d="M3.5 5H7M9 5H12.5M3.5 8H7M9 8H12.5M3.5 11H7M9 11H12.5M3.5 14H7M9 14H12.5" stroke="#999" stroke-width="1"/></svg>
<div class="a" style="left:98px;top:39px;font-size:12px;font-weight:400;letter-spacing:-0.489px;white-space:nowrap;color:#000;line-height:14px;">PRISM_ppt_stable_4kmM3_201712_bi</div>
<svg style="left:76px;top:55px" width="16" height="16" viewBox="0 0 16 16"><g transform="translate(2 1)"><rect x="0" y="0" width="4.3" height="4.3" fill="#1e3350"/><rect x="4.3" y="0" width="4.3" height="4.3" fill="#a9c6e8"/><rect x="8.6" y="0" width="4.3" height="4.3" fill="#1e3350"/><rect x="0" y="4.3" width="4.3" height="4.3" fill="#a9c6e8"/><rect x="4.3" y="4.3" width="4.3" height="4.3" fill="#1e3350"/><rect x="8.6" y="4.3" width="4.3" height="4.3" fill="#a9c6e8"/><rect x="0" y="8.6" width="4.3" height="4.3" fill="#1e3350"/><rect x="4.3" y="8.6" width="4.3" height="4.3" fill="#a9c6e8"/></g></svg>
<div class="a" style="left:98px;top:57px;font-size:12px;font-weight:400;letter-spacing:-0.481px;white-space:nowrap;color:#000;line-height:14px;">PRISM_ppt_stable_4kmM3_2017_all_b</div>
<svg style="left:76px;top:73px" width="16" height="16" viewBox="0 0 16 16"><defs><linearGradient id="vgc9dcf0" x1="0" y1="0" x2="0.3" y2="1"><stop offset="0" stop-color="#fff"/><stop offset="1" stop-color="#c9dcf0"/></linearGradient></defs><path d="M1.5 5.5Q1.5 1.5 5 2Q8 3.5 11.5 2Q15.5 1.5 15.5 5.5Q15.5 9 15 10.5Q14.5 12 12.5 11Q9 9 6 10.5Q2 13 1.5 10.5Q1 8 1.5 5.5Z" fill="url(#vgc9dcf0)" stroke="#3a4a5a" stroke-width="0.9"/></svg>
<div class="a" style="left:98px;top:75px;font-size:12px;font-weight:400;letter-spacing:-0.481px;white-space:nowrap;color:#000;line-height:14px;">PRISM_ppt_stable_4kmM3_2017_all_b</div>
<svg style="left:76px;top:91px" width="16" height="16" viewBox="0 0 16 16"><g transform="translate(2 1)"><rect x="0" y="0" width="4.3" height="4.3" fill="#1e3350"/><rect x="4.3" y="0" width="4.3" height="4.3" fill="#a9c6e8"/><rect x="8.6" y="0" width="4.3" height="4.3" fill="#1e3350"/><rect x="0" y="4.3" width="4.3" height="4.3" fill="#a9c6e8"/><rect x="4.3" y="4.3" width="4.3" height="4.3" fill="#1e3350"/><rect x="8.6" y="4.3" width="4.3" height="4.3" fill="#a9c6e8"/><rect x="0" y="8.6" width="4.3" height="4.3" fill="#1e3350"/><rect x="4.3" y="8.6" width="4.3" height="4.3" fill="#a9c6e8"/></g></svg>
<div class="a" style="left:98px;top:93px;font-size:12px;font-weight:400;letter-spacing:-0.473px;white-space:nowrap;color:#000;line-height:14px;">PRISM_ppt_stable_4kmM3_2017_bil.b</div>
<svg style="left:76px;top:109px" width="16" height="16" viewBox="0 0 16 16"><g transform="translate(2 1)"><rect x="0" y="0" width="4.3" height="4.3" fill="#1e3350"/><rect x="4.3" y="0" width="4.3" height="4.3" fill="#a9c6e8"/><rect x="8.6" y="0" width="4.3" height="4.3" fill="#1e3350"/><rect x="0" y="4.3" width="4.3" height="4.3" fill="#a9c6e8"/><rect x="4.3" y="4.3" width="4.3" height="4.3" fill="#1e3350"/><rect x="8.6" y="4.3" width="4.3" height="4.3" fill="#a9c6e8"/><rect x="0" y="8.6" width="4.3" height="4.3" fill="#1e3350"/><rect x="4.3" y="8.6" width="4.3" height="4.3" fill="#a9c6e8"/></g></svg>
<div class="a" style="left:98px;top:111px;font-size:12px;font-weight:400;letter-spacing:-0.473px;white-space:nowrap;color:#000;line-height:14px;">PRISM_ppt_stable_4kmM3_2017_bil.h</div>
<svg style="left:76px;top:127px" width="16" height="16" viewBox="0 0 16 16"><g transform="translate(2 1)"><rect x="0" y="0" width="4.3" height="4.3" fill="#1e3350"/><rect x="4.3" y="0" width="4.3" height="4.3" fill="#a9c6e8"/><rect x="8.6" y="0" width="4.3" height="4.3" fill="#1e3350"/><rect x="0" y="4.3" width="4.3" height="4.3" fill="#a9c6e8"/><rect x="4.3" y="4.3" width="4.3" height="4.3" fill="#1e3350"/><rect x="8.6" y="4.3" width="4.3" height="4.3" fill="#a9c6e8"/><rect x="0" y="8.6" width="4.3" height="4.3" fill="#1e3350"/><rect x="4.3" y="8.6" width="4.3" height="4.3" fill="#a9c6e8"/></g></svg>
<div class="a" style="left:98px;top:129px;font-size:12px;font-weight:400;letter-spacing:-0.459px;white-space:nowrap;color:#000;line-height:14px;">PRISM_ppt_stable_4kmM3_2017_bil.ir</div>
<svg style="left:76px;top:145px" width="16" height="16" viewBox="0 0 16 16"><defs><linearGradient id="vgc9dcf0" x1="0" y1="0" x2="0.3" y2="1"><stop offset="0" stop-color="#fff"/><stop offset="1" stop-color="#c9dcf0"/></linearGradient></defs><path d="M1.5 5.5Q1.5 1.5 5 2Q8 3.5 11.5 2Q15.5 1.5 15.5 5.5Q15.5 9 15 10.5Q14.5 12 12.5 11Q9 9 6 10.5Q2 13 1.5 10.5Q1 8 1.5 5.5Z" fill="url(#vgc9dcf0)" stroke="#3a4a5a" stroke-width="0.9"/></svg>
<div class="a" style="left:98px;top:147px;font-size:12px;font-weight:400;letter-spacing:-0.459px;white-space:nowrap;color:#000;line-height:14px;">PRISM_ppt_stable_4kmM3_2017_bil.ir</div>
<svg style="left:39px;top:168px" width="8" height="5" viewBox="0 0 8 5"><path d="M0 0H8L4 4.5Z" fill="#777"/></svg>
<svg style="left:56px;top:163px" width="16" height="16" viewBox="0 0 16 16"><rect x="1.5" y="1.5" width="13" height="13" fill="#f4f4f4" stroke="#777"/><path d="M5.5 1.5V14.5M10.5 1.5V14.5" stroke="#777"/><path d="M7 3H9M7 5H9M7 7H9M7 9H9" stroke="#999"/><rect x="7" y="10" width="2" height="3" fill="#666"/></svg>
<div class="a" style="left:78px;top:165px;font-size:12px;font-weight:400;letter-spacing:-0.325px;white-space:nowrap;color:#000;line-height:14px;">Zip_Codes.zip</div>
<svg style="left:76px;top:181px" width="16" height="16" viewBox="0 0 16 16"><defs><linearGradient id="vg8ab6e4" x1="0" y1="0" x2="0.3" y2="1"><stop offset="0" stop-color="#fff"/><stop offset="1" stop-color="#8ab6e4"/></linearGradient></defs><path d="M1.5 5.5Q1.5 1.5 5 2Q8 3.5 11.5 2Q15.5 1.5 15.5 5.5Q15.5 9 15 10.5Q14.5 12 12.5 11Q9 9 6 10.5Q2 13 1.5 10.5Q1 8 1.5 5.5Z" fill="url(#vg8ab6e4)" stroke="#3a4a5a" stroke-width="0.9"/></svg>
<div class="a" style="left:98px;top:183px;font-size:12px;font-weight:400;letter-spacing:-0.325px;white-space:nowrap;color:#000;line-height:14px;">Zip_Codes.shp</div>
<svg style="left:0px;top:202px" width="5" height="9" viewBox="0 0 5 9"><path d="M0 0V9L4.5 4.5Z" fill="#555"/></svg>
<svg style="left:16px;top:199px" width="16" height="16" viewBox="0 0 16 16"><path d="M1.5 3.5H6L7 2H14.5V5" fill="none" stroke="#888"/><path d="M1.5 3.5V14.5H14.5V5.5H8L7 4" fill="#fafafa" stroke="#888"/></svg>
<div class="a" style="left:38.5px;top:201px;font-size:12px;font-weight:400;letter-spacing:0.105px;white-space:nowrap;color:#000;line-height:14px;">qgis-tutorials</div>
<svg style="left:-6px;top:217px" width="16" height="16" viewBox="0 0 16 16"><path d="M1.5 3.5H6L7 2H14.5V5" fill="none" stroke="#888"/><path d="M1.5 3.5V14.5H14.5V5.5H8L7 4" fill="#fafafa" stroke="#888"/></svg>
<div class="a" style="left:18px;top:219px;font-size:12px;font-weight:400;letter-spacing:-0.422px;white-space:nowrap;color:#000;line-height:14px;">Quiz</div>
</div>
<div class="a" style="left:292px;top:219px;width:14px;height:233px;background:#e6e6e6;border-left:1px solid #d6d6d6"></div>
<div class="a" style="left:292px;top:219px;width:14px;height:13px;background:#fdfdfd;border:1px solid #d6d6d6"></div>
<svg style="left:295px;top:223px" width="8" height="5" viewBox="0 0 8 5"><path d="M0 5H8L4 0Z" fill="#666"/></svg>
<div class="a" style="left:292px;top:439px;width:14px;height:13px;background:#fdfdfd;border:1px solid #d6d6d6"></div>
<svg style="left:295px;top:443px" width="8" height="5" viewBox="0 0 8 5"><path d="M0 0H8L4 5Z" fill="#666"/></svg>
<div class="a" style="left:292px;top:368px;width:14px;height:28px;background:#fdfdfd;border:1px solid #d0d0d0"></div>
<div class="a" style="left:1px;top:452px;width:291px;height:14px;background:#e6e6e6;border-top:1px solid #d6d6d6"></div>
<div class="a" style="left:1px;top:452px;width:14px;height:14px;background:#fdfdfd;border:1px solid #d6d6d6;border-left:none"></div>
<svg style="left:5px;top:455px" width="5" height="8" viewBox="0 0 5 8"><path d="M5 0V8L0 4Z" fill="#666"/></svg>
<div class="a" style="left:50px;top:452px;width:151px;height:14px;background:#fdfdfd;border:1px solid #d0d0d0"></div>
<div class="a" style="left:278px;top:452px;width:14px;height:14px;background:#fdfdfd;border:1px solid #d6d6d6"></div>
<svg style="left:283px;top:455px" width="5" height="8" viewBox="0 0 5 8"><path d="M0 0V8L5 4Z" fill="#666"/></svg>
<div class="a" style="left:292px;top:452px;width:15px;height:14px;background:#f0f0f0;border:1px solid #d6d6d6"></div>
<svg style="left:146px;top:469px" width="18" height="2" viewBox="0 0 18 2"><rect x="0" y="0" width="1" height="1" fill="#b8b8b8"/><rect x="3" y="0" width="1" height="1" fill="#b8b8b8"/><rect x="6" y="0" width="1" height="1" fill="#b8b8b8"/><rect x="9" y="0" width="1" height="1" fill="#b8b8b8"/><rect x="12" y="0" width="1" height="1" fill="#b8b8b8"/><rect x="15" y="0" width="1" height="1" fill="#b8b8b8"/></svg>
<svg style="left:310px;top:488px" width="2" height="18" viewBox="0 0 2 18"><rect x="0" y="0" width="1" height="1" fill="#a8a8a8"/><rect x="0" y="3" width="1" height="1" fill="#a8a8a8"/><rect x="0" y="6" width="1" height="1" fill="#a8a8a8"/><rect x="0" y="9" width="1" height="1" fill="#a8a8a8"/><rect x="0" y="12" width="1" height="1" fill="#a8a8a8"/><rect x="0" y="15" width="1" height="1" fill="#a8a8a8"/></svg>
<div class="a" style="left:5px;top:476px;font-size:12px;font-weight:400;letter-spacing:-0.505px;white-space:nowrap;color:#000;line-height:14px;">Layers</div>
<svg style="left:280px;top:477px" width="11" height="11" viewBox="0 0 11 11"><rect x="0.5" y="0.5" width="10" height="10" rx="2" fill="#f4f4f4" stroke="#666"/><rect x="2.5" y="4.5" width="4" height="4" fill="none" stroke="#555" stroke-width="0.9"/><path d="M4.5 4.5V2.5H8.5V6.5H6.5" fill="none" stroke="#555" stroke-width="0.9"/></svg>
<svg style="left:294px;top:477px" width="11" height="11" viewBox="0 0 11 11"><rect x="0.5" y="0.5" width="10" height="10" rx="2" fill="#f4f4f4" stroke="#666"/><path d="M2.8 2.8L8.2 8.2M8.2 2.8L2.8 8.2" stroke="#333" stroke-width="1.6"/></svg>
<svg style="left:9px;top:499px" width="16" height="16" viewBox="0 0 16 16"><path d="M3 11L8 15L10 13L5 9Z" fill="#d03030"/><path d="M2 10L7 14L5 15Q2 15 1 12Z" fill="#e8b040"/><path d="M9 10L15 2" stroke="#b07020" stroke-width="2.4"/></svg>
<svg style="left:34px;top:498px" width="16" height="16" viewBox="0 0 16 16"><rect x="3.5" y="4.5" width="9" height="10" fill="#f4f4f4" stroke="#777"/><rect x="5.5" y="1.5" width="7" height="9" fill="#fff" stroke="#777"/><circle cx="12.5" cy="13" r="2.8" fill="#5aa05a" stroke="#fff" stroke-width="0.7"/></svg>
<svg style="left:59px;top:499px" width="18" height="16" viewBox="0 0 18 16"><path d="M1 8Q8 1 15 8Q8 15 1 8Z" fill="#f0f0f0" stroke="#888"/><circle cx="8" cy="8" r="3.2" fill="#5b8ccd"/><circle cx="8" cy="8" r="1.2" fill="#223"/><path d="M14 13H18L16 15Z" fill="#555"/></svg>
<svg style="left:85px;top:499px" width="16" height="16" viewBox="0 0 16 16"><path d="M1 1.5H15L9.5 8V15L6.5 13V8Z" fill="#6e9acb" stroke="#3f6fa5" stroke-width="0.6"/><rect x="1" y="1" width="14" height="2" fill="#f0d040"/></svg>
<svg style="left:110px;top:499px" width="16" height="16" viewBox="0 0 16 16"><text x="0" y="12" font-size="15" fill="#7a3a9a" font-family="Liberation Serif">ε</text><rect x="8" y="9" width="7" height="6" rx="1" fill="#aaa"/></svg>
<svg style="left:131px;top:506px" width="7" height="4" viewBox="0 0 7 4"><path d="M0 0H7L3.5 4Z" fill="#555"/></svg>
<svg style="left:147px;top:499px" width="16" height="16" viewBox="0 0 16 16"><path d="M1.5 2V14M1.5 4H4M1.5 8H4M1.5 12H4" stroke="#999"/><rect x="4" y="6" width="3" height="3" fill="#f0a040"/><rect x="4" y="10" width="3" height="3" fill="#f0a040"/><path d="M11 1.5V9.5H8.5L12 14L15.5 9.5H13V1.5Z" fill="#5b8ccd" stroke="#2f5f95" stroke-width="0.6"/></svg>
<svg style="left:172px;top:499px" width="16" height="16" viewBox="0 0 16 16"><path d="M1.5 2V14M1.5 4H4M1.5 8H4M1.5 12H4" stroke="#999"/><rect x="4" y="6" width="3" height="3" fill="#f0a040"/><rect x="4" y="10" width="3" height="3" fill="#f0a040"/><path d="M11 14V6H8.5L12 1.5L15.5 6H13V14Z" fill="#5b8ccd" stroke="#2f5f95" stroke-width="0.6"/></svg>
<svg style="left:197px;top:499px" width="16" height="16" viewBox="0 0 16 16"><rect x="1.5" y="1.5" width="11" height="11" fill="none" stroke="#777"/><rect x="9" y="10.5" width="7" height="4" rx="1" fill="#d03030"/><path d="M10.5 12.5H14.5" stroke="#fff"/></svg>
<div class="a" style="left:1px;top:523px;width:306px;height:298px;background:#fff;border:1px solid #c8c8c8;border-left:none"></div>
<div class="a" style="left:1px;top:524px;width:291px;height:18px;background:#efefef"></div>
<div class="a" style="left:1px;top:524px;width:291px;height:296px;overflow:hidden">
<svg style="left:24px;top:3px" width="13" height="13" viewBox="0 0 13 13"><rect x="0.5" y="0.5" width="12" height="12" fill="#fff" stroke="#b0b0b0"/><path d="M2.8 6.2L5.2 9.6L10.2 2.6" fill="none" stroke="#000" stroke-width="1.6"/></svg>
<div class="a" style="left:44px;top:1px;width:16px;height:16px;background:#a971a4;border:1px solid #555"></div>
<div class="a" style="left:66px;top:3px;font-size:12px;font-weight:700;letter-spacing:0.081px;white-space:nowrap;color:#000;line-height:14px;text-decoration:underline;">output</div>
<svg style="left:271px;top:3px" width="16" height="13" viewBox="0 0 16 13"><rect x="0.5" y="0.5" width="15" height="12" rx="2" fill="#f4f4f4" stroke="#ccc"/><rect x="3.5" y="4" width="9" height="5" fill="#dde6ef" stroke="#5a7aa0" stroke-width="0.8"/><path d="M5 3V4M7 3V4M9 3V4M11 3V4M5 9V10M7 9V10M9 9V10M11 9V10" stroke="#5a7aa0" stroke-width="0.7"/></svg>
<svg style="left:24px;top:21px" width="13" height="13" viewBox="0 0 13 13"><rect x="0.5" y="0.5" width="12" height="12" fill="#fff" stroke="#b0b0b0"/><path d="M2.8 6.2L5.2 9.6L10.2 2.6" fill="none" stroke="#000" stroke-width="1.6"/></svg>
<div class="a" style="left:44px;top:19px;width:16px;height:16px;background:#c5b895;border:1px solid #555"></div>
<div class="a" style="left:66px;top:21px;font-size:12px;font-weight:700;letter-spacing:-0.727px;white-space:nowrap;color:#000;line-height:14px;">Zip_Codes</div>
<svg style="left:7px;top:43px" width="8" height="5" viewBox="0 0 8 5"><path d="M0 0H8L4 4.5Z" fill="#777"/></svg>
<svg style="left:24px;top:39px" width="13" height="13" viewBox="0 0 13 13"><rect x="0.5" y="0.5" width="12" height="12" fill="#fff" stroke="#b0b0b0"/><path d="M2.8 6.2L5.2 9.6L10.2 2.6" fill="none" stroke="#000" stroke-width="1.6"/></svg>
<svg style="left:44px;top:37px" width="16" height="16" viewBox="0 0 16 16"><g transform="translate(2 1)"><rect x="0" y="0" width="4.3" height="4.3" fill="#1e3350"/><rect x="4.3" y="0" width="4.3" height="4.3" fill="#a9c6e8"/><rect x="8.6" y="0" width="4.3" height="4.3" fill="#1e3350"/><rect x="0" y="4.3" width="4.3" height="4.3" fill="#a9c6e8"/><rect x="4.3" y="4.3" width="4.3" height="4.3" fill="#1e3350"/><rect x="8.6" y="4.3" width="4.3" height="4.3" fill="#a9c6e8"/><rect x="0" y="8.6" width="4.3" height="4.3" fill="#1e3350"/><rect x="4.3" y="8.6" width="4.3" height="4.3" fill="#a9c6e8"/></g></svg>
<div class="a" style="left:66px;top:39px;font-size:12px;font-weight:700;letter-spacing:-0.226px;white-space:nowrap;color:#000;line-height:14px;">PRISM_ppt_stable_4kmM3_201701_bil</div>
<div class="a" style="left:44px;top:55px;width:16px;height:16px;background:#000"></div>
<div class="a" style="left:66px;top:57px;font-size:12px;font-weight:400;letter-spacing:-0.188px;white-space:nowrap;color:#000;line-height:14px;">0</div>
<div class="a" style="left:66px;top:75px;font-size:12px;font-weight:400;letter-spacing:-0.670px;white-space:nowrap;color:#000;line-height:14px;">1322.85</div>
<svg style="left:7px;top:97px" width="8" height="5" viewBox="0 0 8 5"><path d="M0 0H8L4 4.5Z" fill="#777"/></svg>
<svg style="left:24px;top:93px" width="13" height="13" viewBox="0 0 13 13"><rect x="0.5" y="0.5" width="12" height="12" fill="#fff" stroke="#b0b0b0"/><path d="M2.8 6.2L5.2 9.6L10.2 2.6" fill="none" stroke="#000" stroke-width="1.6"/></svg>
<svg style="left:44px;top:91px" width="16" height="16" viewBox="0 0 16 16"><g transform="translate(2 1)"><rect x="0" y="0" width="4.3" height="4.3" fill="#1e3350"/><rect x="4.3" y="0" width="4.3" height="4.3" fill="#a9c6e8"/><rect x="8.6" y="0" width="4.3" height="4.3" fill="#1e3350"/><rect x="0" y="4.3" width="4.3" height="4.3" fill="#a9c6e8"/><rect x="4.3" y="4.3" width="4.3" height="4.3" fill="#1e3350"/><rect x="8.6" y="4.3" width="4.3" height="4.3" fill="#a9c6e8"/><rect x="0" y="8.6" width="4.3" height="4.3" fill="#1e3350"/><rect x="4.3" y="8.6" width="4.3" height="4.3" fill="#a9c6e8"/></g></svg>
<div class="a" style="left:66px;top:93px;font-size:12px;font-weight:700;letter-spacing:-0.226px;white-space:nowrap;color:#000;line-height:14px;">PRISM_ppt_stable_4kmM3_201702_bil</div>
<div class="a" style="left:44px;top:109px;width:16px;height:16px;background:#000"></div>
<div class="a" style="left:66px;top:111px;font-size:12px;font-weight:400;letter-spacing:-0.188px;white-space:nowrap;color:#000;line-height:14px;">0</div>
<div class="a" style="left:66px;top:129px;font-size:12px;font-weight:400;letter-spacing:-0.543px;white-space:nowrap;color:#000;line-height:14px;">1811.25</div>
<svg style="left:7px;top:151px" width="8" height="5" viewBox="0 0 8 5"><path d="M0 0H8L4 4.5Z" fill="#777"/></svg>
<svg style="left:24px;top:147px" width="13" height="13" viewBox="0 0 13 13"><rect x="0.5" y="0.5" width="12" height="12" fill="#fff" stroke="#b0b0b0"/><path d="M2.8 6.2L5.2 9.6L10.2 2.6" fill="none" stroke="#000" stroke-width="1.6"/></svg>
<svg style="left:44px;top:145px" width="16" height="16" viewBox="0 0 16 16"><g transform="translate(2 1)"><rect x="0" y="0" width="4.3" height="4.3" fill="#1e3350"/><rect x="4.3" y="0" width="4.3" height="4.3" fill="#a9c6e8"/><rect x="8.6" y="0" width="4.3" height="4.3" fill="#1e3350"/><rect x="0" y="4.3" width="4.3" height="4.3" fill="#a9c6e8"/><rect x="4.3" y="4.3" width="4.3" height="4.3" fill="#1e3350"/><rect x="8.6" y="4.3" width="4.3" height="4.3" fill="#a9c6e8"/><rect x="0" y="8.6" width="4.3" height="4.3" fill="#1e3350"/><rect x="4.3" y="8.6" width="4.3" height="4.3" fill="#a9c6e8"/></g></svg>
<div class="a" style="left:66px;top:147px;font-size:12px;font-weight:700;letter-spacing:-0.226px;white-space:nowrap;color:#000;line-height:14px;">PRISM_ppt_stable_4kmM3_201703_bil</div>
<div class="a" style="left:44px;top:163px;width:16px;height:16px;background:#000"></div>
<div class="a" style="left:66px;top:165px;font-size:12px;font-weight:400;letter-spacing:-0.188px;white-space:nowrap;color:#000;line-height:14px;">0</div>
<div class="a" style="left:66px;top:183px;font-size:12px;font-weight:400;letter-spacing:-0.670px;white-space:nowrap;color:#000;line-height:14px;">1254.03</div>
<svg style="left:7px;top:205px" width="8" height="5" viewBox="0 0 8 5"><path d="M0 0H8L4 4.5Z" fill="#777"/></svg>
<svg style="left:24px;top:201px" width="13" height="13" viewBox="0 0 13 13"><rect x="0.5" y="0.5" width="12" height="12" fill="#fff" stroke="#b0b0b0"/><path d="M2.8 6.2L5.2 9.6L10.2 2.6" fill="none" stroke="#000" stroke-width="1.6"/></svg>
<svg style="left:44px;top:199px" width="16" height="16" viewBox="0 0 16 16"><g transform="translate(2 1)"><rect x="0" y="0" width="4.3" height="4.3" fill="#1e3350"/><rect x="4.3" y="0" width="4.3" height="4.3" fill="#a9c6e8"/><rect x="8.6" y="0" width="4.3" height="4.3" fill="#1e3350"/><rect x="0" y="4.3" width="4.3" height="4.3" fill="#a9c6e8"/><rect x="4.3" y="4.3" width="4.3" height="4.3" fill="#1e3350"/><rect x="8.6" y="4.3" width="4.3" height="4.3" fill="#a9c6e8"/><rect x="0" y="8.6" width="4.3" height="4.3" fill="#1e3350"/><rect x="4.3" y="8.6" width="4.3" height="4.3" fill="#a9c6e8"/></g></svg>
<div class="a" style="left:66px;top:201px;font-size:12px;font-weight:700;letter-spacing:-0.226px;white-space:nowrap;color:#000;line-height:14px;">PRISM_ppt_stable_4kmM3_201704_bil</div>
<div class="a" style="left:44px;top:217px;width:16px;height:16px;background:#000"></div>
<div class="a" style="left:66px;top:219px;font-size:12px;font-weight:400;letter-spacing:-0.188px;white-space:nowrap;color:#000;line-height:14px;">0</div>
<div class="a" style="left:66px;top:237px;font-size:12px;font-weight:400;letter-spacing:-0.670px;white-space:nowrap;color:#000;line-height:14px;">1290.51</div>
<svg style="left:7px;top:259px" width="8" height="5" viewBox="0 0 8 5"><path d="M0 0H8L4 4.5Z" fill="#777"/></svg>
<svg style="left:24px;top:255px" width="13" height="13" viewBox="0 0 13 13"><rect x="0.5" y="0.5" width="12" height="12" fill="#fff" stroke="#b0b0b0"/><path d="M2.8 6.2L5.2 9.6L10.2 2.6" fill="none" stroke="#000" stroke-width="1.6"/></svg>
<svg style="left:44px;top:253px" width="16" height="16" viewBox="0 0 16 16"><g transform="translate(2 1)"><rect x="0" y="0" width="4.3" height="4.3" fill="#1e3350"/><rect x="4.3" y="0" width="4.3" height="4.3" fill="#a9c6e8"/><rect x="8.6" y="0" width="4.3" height="4.3" fill="#1e3350"/><rect x="0" y="4.3" width="4.3" height="4.3" fill="#a9c6e8"/><rect x="4.3" y="4.3" width="4.3" height="4.3" fill="#1e3350"/><rect x="8.6" y="4.3" width="4.3" height="4.3" fill="#a9c6e8"/><rect x="0" y="8.6" width="4.3" height="4.3" fill="#1e3350"/><rect x="4.3" y="8.6" width="4.3" height="4.3" fill="#a9c6e8"/></g></svg>
<div class="a" style="left:66px;top:255px;font-size:12px;font-weight:700;letter-spacing:-0.226px;white-space:nowrap;color:#000;line-height:14px;">PRISM_ppt_stable_4kmM3_201705_bil</div>
<div class="a" style="left:44px;top:271px;width:16px;height:16px;background:#000"></div>
<div class="a" style="left:66px;top:273px;font-size:12px;font-weight:400;letter-spacing:-0.188px;white-space:nowrap;color:#000;line-height:14px;">0</div>
<div class="a" style="left:66px;top:291px;font-size:12px;font-weight:400;letter-spacing:-0.670px;white-space:nowrap;color:#000;line-height:14px;">547.703</div>
</div>
<div class="a" style="left:292px;top:524px;width:14px;height:296px;background:#e6e6e6;border-left:1px solid #d6d6d6"></div>
<div class="a" style="left:292px;top:524px;width:14px;height:13px;background:#fdfdfd;border:1px solid #d6d6d6"></div>
<svg style="left:295px;top:528px" width="8" height="5" viewBox="0 0 8 5"><path d="M0 5H8L4 0Z" fill="#666"/></svg>
<div class="a" style="left:292px;top:807px;width:14px;height:13px;background:#fdfdfd;border:1px solid #d6d6d6"></div>
<svg style="left:295px;top:811px" width="8" height="5" viewBox="0 0 8 5"><path d="M0 0H8L4 5Z" fill="#666"/></svg>
<div class="a" style="left:292px;top:536px;width:14px;height:117px;background:#fdfdfd;border:1px solid #d0d0d0"></div>
<div class="a" style="left:313px;top:168px;width:816px;height:653px;overflow:hidden;background:#101010">
<svg style="left:0;top:0" width="816" height="653" shape-rendering="crispEdges"><path d="M-7.2 -1h10.4v13.1h-10.4zM3.2 -1h10.4v13.1h-10.4zM13.6 -1h10.4v13.1h-10.4zM55.2 -1h10.4v13.1h-10.4zM76.0 -1h10.4v13.1h-10.4zM-7.2 12.1h10.4v10.4h-10.4zM3.2 12.1h10.4v10.4h-10.4zM-7.2 22.5h10.4v10.4h-10.4zM-7.2 95.3h10.4v10.4h-10.4zM3.2 95.3h10.4v10.4h-10.4zM86.4 95.3h10.4v10.4h-10.4zM-7.2 105.7h10.4v10.4h-10.4zM3.2 105.7h10.4v10.4h-10.4zM13.6 105.7h10.4v10.4h-10.4zM24.0 105.7h10.4v10.4h-10.4zM34.4 105.7h10.4v10.4h-10.4zM44.8 105.7h10.4v10.4h-10.4zM76.0 105.7h10.4v10.4h-10.4zM86.4 105.7h10.4v10.4h-10.4zM-7.2 116.1h10.4v10.4h-10.4zM3.2 116.1h10.4v10.4h-10.4zM13.6 116.1h10.4v10.4h-10.4zM24.0 116.1h10.4v10.4h-10.4zM34.4 116.1h10.4v10.4h-10.4zM44.8 116.1h10.4v10.4h-10.4zM55.2 116.1h10.4v10.4h-10.4zM65.6 116.1h10.4v10.4h-10.4zM76.0 116.1h10.4v10.4h-10.4zM-7.2 126.5h10.4v10.4h-10.4zM3.2 126.5h10.4v10.4h-10.4zM13.6 126.5h10.4v10.4h-10.4zM24.0 126.5h10.4v10.4h-10.4zM34.4 126.5h10.4v10.4h-10.4zM44.8 126.5h10.4v10.4h-10.4zM55.2 126.5h10.4v10.4h-10.4zM65.6 126.5h10.4v10.4h-10.4zM76.0 126.5h10.4v10.4h-10.4zM-7.2 136.9h10.4v10.4h-10.4zM3.2 136.9h10.4v10.4h-10.4zM13.6 136.9h10.4v10.4h-10.4zM24.0 136.9h10.4v10.4h-10.4zM34.4 136.9h10.4v10.4h-10.4zM44.8 136.9h10.4v10.4h-10.4zM55.2 136.9h10.4v10.4h-10.4zM65.6 136.9h10.4v10.4h-10.4zM3.2 147.3h10.4v10.4h-10.4zM13.6 147.3h10.4v10.4h-10.4zM24.0 147.3h10.4v10.4h-10.4zM34.4 147.3h10.4v10.4h-10.4zM44.8 147.3h10.4v10.4h-10.4zM55.2 147.3h10.4v10.4h-10.4zM65.6 147.3h10.4v10.4h-10.4zM13.6 157.7h10.4v10.4h-10.4zM24.0 157.7h10.4v10.4h-10.4zM34.4 157.7h10.4v10.4h-10.4zM55.2 157.7h10.4v10.4h-10.4z" fill="#ffffff"/><path d="M24.0 -1h10.4v13.1h-10.4zM44.8 -1h10.4v13.1h-10.4zM117.6 -1h10.4v13.1h-10.4zM148.8 -1h10.4v13.1h-10.4zM13.6 12.1h10.4v10.4h-10.4zM24.0 12.1h10.4v10.4h-10.4zM55.2 12.1h10.4v10.4h-10.4zM86.4 12.1h10.4v10.4h-10.4zM117.6 12.1h10.4v10.4h-10.4zM128.0 12.1h10.4v10.4h-10.4zM138.4 12.1h10.4v10.4h-10.4zM55.2 22.5h10.4v10.4h-10.4zM107.2 22.5h10.4v10.4h-10.4zM117.6 22.5h10.4v10.4h-10.4zM148.8 22.5h10.4v10.4h-10.4zM-7.2 32.9h10.4v10.4h-10.4zM24.0 32.9h10.4v10.4h-10.4zM34.4 32.9h10.4v10.4h-10.4zM44.8 32.9h10.4v10.4h-10.4zM55.2 32.9h10.4v10.4h-10.4zM86.4 32.9h10.4v10.4h-10.4zM107.2 32.9h10.4v10.4h-10.4zM117.6 32.9h10.4v10.4h-10.4zM128.0 32.9h10.4v10.4h-10.4zM-7.2 43.3h10.4v10.4h-10.4zM3.2 43.3h10.4v10.4h-10.4zM13.6 43.3h10.4v10.4h-10.4zM24.0 43.3h10.4v10.4h-10.4zM34.4 43.3h10.4v10.4h-10.4zM44.8 43.3h10.4v10.4h-10.4zM55.2 43.3h10.4v10.4h-10.4zM86.4 43.3h10.4v10.4h-10.4zM96.8 43.3h10.4v10.4h-10.4zM107.2 43.3h10.4v10.4h-10.4zM117.6 43.3h10.4v10.4h-10.4zM13.6 53.7h10.4v10.4h-10.4zM24.0 53.7h10.4v10.4h-10.4zM34.4 53.7h10.4v10.4h-10.4zM76.0 53.7h10.4v10.4h-10.4zM86.4 53.7h10.4v10.4h-10.4zM-7.2 64.1h10.4v10.4h-10.4zM3.2 64.1h10.4v10.4h-10.4zM76.0 64.1h10.4v10.4h-10.4zM128.0 64.1h10.4v10.4h-10.4zM-7.2 74.5h10.4v10.4h-10.4zM13.6 74.5h10.4v10.4h-10.4zM24.0 74.5h10.4v10.4h-10.4zM107.2 74.5h10.4v10.4h-10.4zM117.6 74.5h10.4v10.4h-10.4zM128.0 74.5h10.4v10.4h-10.4zM138.4 74.5h10.4v10.4h-10.4zM148.8 74.5h10.4v10.4h-10.4zM-7.2 84.9h10.4v10.4h-10.4zM13.6 84.9h10.4v10.4h-10.4zM55.2 84.9h10.4v10.4h-10.4zM107.2 84.9h10.4v10.4h-10.4zM117.6 84.9h10.4v10.4h-10.4zM128.0 84.9h10.4v10.4h-10.4zM148.8 84.9h10.4v10.4h-10.4zM24.0 95.3h10.4v10.4h-10.4zM34.4 95.3h10.4v10.4h-10.4zM55.2 95.3h10.4v10.4h-10.4zM65.6 95.3h10.4v10.4h-10.4zM76.0 95.3h10.4v10.4h-10.4zM55.2 105.7h10.4v10.4h-10.4zM107.2 105.7h10.4v10.4h-10.4zM138.4 105.7h10.4v10.4h-10.4zM86.4 116.1h10.4v10.4h-10.4zM96.8 116.1h10.4v10.4h-10.4zM107.2 116.1h10.4v10.4h-10.4zM117.6 126.5h10.4v10.4h-10.4zM128.0 126.5h10.4v10.4h-10.4zM-7.2 157.7h10.4v10.4h-10.4zM-7.2 168.1h10.4v10.4h-10.4zM3.2 168.1h10.4v10.4h-10.4zM-7.2 178.5h10.4v10.4h-10.4zM34.4 178.5h10.4v10.4h-10.4zM3.2 188.9h10.4v10.4h-10.4zM24.0 188.9h10.4v10.4h-10.4z" fill="#090909"/><path d="M34.4 -1h10.4v13.1h-10.4zM65.6 -1h10.4v13.1h-10.4zM86.4 -1h10.4v13.1h-10.4zM128.0 -1h10.4v13.1h-10.4zM34.4 12.1h10.4v10.4h-10.4zM44.8 12.1h10.4v10.4h-10.4zM65.6 12.1h10.4v10.4h-10.4zM76.0 12.1h10.4v10.4h-10.4zM96.8 12.1h10.4v10.4h-10.4zM107.2 12.1h10.4v10.4h-10.4zM148.8 12.1h10.4v10.4h-10.4zM3.2 22.5h10.4v10.4h-10.4zM34.4 22.5h10.4v10.4h-10.4zM44.8 22.5h10.4v10.4h-10.4zM65.6 22.5h10.4v10.4h-10.4zM76.0 22.5h10.4v10.4h-10.4zM96.8 22.5h10.4v10.4h-10.4zM128.0 22.5h10.4v10.4h-10.4zM65.6 32.9h10.4v10.4h-10.4zM76.0 32.9h10.4v10.4h-10.4zM138.4 32.9h10.4v10.4h-10.4zM148.8 32.9h10.4v10.4h-10.4zM76.0 43.3h10.4v10.4h-10.4zM138.4 43.3h10.4v10.4h-10.4zM148.8 43.3h10.4v10.4h-10.4zM3.2 53.7h10.4v10.4h-10.4zM44.8 53.7h10.4v10.4h-10.4zM55.2 53.7h10.4v10.4h-10.4zM65.6 53.7h10.4v10.4h-10.4zM96.8 53.7h10.4v10.4h-10.4zM107.2 53.7h10.4v10.4h-10.4zM117.6 53.7h10.4v10.4h-10.4zM128.0 53.7h10.4v10.4h-10.4zM138.4 53.7h10.4v10.4h-10.4zM148.8 53.7h10.4v10.4h-10.4zM13.6 64.1h10.4v10.4h-10.4zM44.8 64.1h10.4v10.4h-10.4zM55.2 64.1h10.4v10.4h-10.4zM86.4 64.1h10.4v10.4h-10.4zM96.8 64.1h10.4v10.4h-10.4zM107.2 64.1h10.4v10.4h-10.4zM117.6 64.1h10.4v10.4h-10.4zM148.8 64.1h10.4v10.4h-10.4zM3.2 74.5h10.4v10.4h-10.4zM44.8 74.5h10.4v10.4h-10.4zM55.2 74.5h10.4v10.4h-10.4zM76.0 74.5h10.4v10.4h-10.4zM96.8 74.5h10.4v10.4h-10.4zM24.0 84.9h10.4v10.4h-10.4zM34.4 84.9h10.4v10.4h-10.4zM44.8 84.9h10.4v10.4h-10.4zM65.6 84.9h10.4v10.4h-10.4zM76.0 84.9h10.4v10.4h-10.4zM86.4 84.9h10.4v10.4h-10.4zM138.4 84.9h10.4v10.4h-10.4zM44.8 95.3h10.4v10.4h-10.4zM96.8 95.3h10.4v10.4h-10.4zM107.2 95.3h10.4v10.4h-10.4zM128.0 95.3h10.4v10.4h-10.4zM138.4 95.3h10.4v10.4h-10.4zM128.0 105.7h10.4v10.4h-10.4zM96.8 126.5h10.4v10.4h-10.4zM107.2 126.5h10.4v10.4h-10.4zM128.0 136.9h10.4v10.4h-10.4zM159.2 136.9h10.4v10.4h-10.4zM-7.2 147.3h10.4v10.4h-10.4zM107.2 147.3h10.4v10.4h-10.4zM117.6 147.3h10.4v10.4h-10.4zM138.4 147.3h10.4v10.4h-10.4zM159.2 147.3h10.4v10.4h-10.4zM190.4 147.3h10.4v10.4h-10.4zM3.2 157.7h10.4v10.4h-10.4zM76.0 157.7h10.4v10.4h-10.4zM86.4 157.7h10.4v10.4h-10.4zM96.8 157.7h10.4v10.4h-10.4zM128.0 157.7h10.4v10.4h-10.4zM169.6 157.7h10.4v10.4h-10.4zM180.0 157.7h10.4v10.4h-10.4zM190.4 157.7h10.4v10.4h-10.4zM13.6 168.1h10.4v10.4h-10.4zM24.0 168.1h10.4v10.4h-10.4zM34.4 168.1h10.4v10.4h-10.4zM44.8 168.1h10.4v10.4h-10.4zM65.6 168.1h10.4v10.4h-10.4zM138.4 168.1h10.4v10.4h-10.4zM148.8 168.1h10.4v10.4h-10.4zM190.4 168.1h10.4v10.4h-10.4zM24.0 178.5h10.4v10.4h-10.4zM76.0 178.5h10.4v10.4h-10.4zM107.2 178.5h10.4v10.4h-10.4zM148.8 178.5h10.4v10.4h-10.4zM159.2 178.5h10.4v10.4h-10.4zM169.6 178.5h10.4v10.4h-10.4zM190.4 178.5h10.4v10.4h-10.4zM13.6 188.9h10.4v10.4h-10.4zM34.4 188.9h10.4v10.4h-10.4zM44.8 188.9h10.4v10.4h-10.4zM55.2 188.9h10.4v10.4h-10.4zM65.6 188.9h10.4v10.4h-10.4zM76.0 188.9h10.4v10.4h-10.4zM148.8 188.9h10.4v10.4h-10.4zM190.4 188.9h10.4v10.4h-10.4zM138.4 199.3h10.4v10.4h-10.4zM148.8 199.3h10.4v10.4h-10.4zM190.4 199.3h10.4v10.4h-10.4zM86.4 209.7h10.4v10.4h-10.4zM107.2 209.7h10.4v10.4h-10.4zM117.6 209.7h10.4v10.4h-10.4zM138.4 209.7h10.4v10.4h-10.4zM169.6 209.7h10.4v10.4h-10.4zM190.4 209.7h10.4v10.4h-10.4zM96.8 220.1h10.4v10.4h-10.4zM117.6 220.1h10.4v10.4h-10.4zM138.4 220.1h10.4v10.4h-10.4zM117.6 230.5h10.4v10.4h-10.4zM180.0 230.5h10.4v10.4h-10.4zM190.4 230.5h10.4v10.4h-10.4zM107.2 240.9h10.4v10.4h-10.4zM148.8 240.9h10.4v10.4h-10.4zM159.2 240.9h10.4v10.4h-10.4zM169.6 240.9h10.4v10.4h-10.4zM180.0 240.9h10.4v10.4h-10.4zM107.2 251.3h10.4v10.4h-10.4zM128.0 251.3h10.4v10.4h-10.4zM138.4 251.3h10.4v10.4h-10.4zM148.8 251.3h10.4v10.4h-10.4zM117.6 261.7h10.4v10.4h-10.4zM86.4 272.1h10.4v10.4h-10.4zM96.8 272.1h10.4v10.4h-10.4zM159.2 272.1h10.4v10.4h-10.4zM96.8 282.5h10.4v10.4h-10.4zM107.2 282.5h10.4v10.4h-10.4zM117.6 282.5h10.4v10.4h-10.4zM138.4 282.5h10.4v10.4h-10.4zM159.2 282.5h10.4v10.4h-10.4zM190.4 292.9h10.4v10.4h-10.4zM107.2 303.3h10.4v10.4h-10.4zM138.4 303.3h10.4v10.4h-10.4zM148.8 303.3h10.4v10.4h-10.4zM180.0 303.3h10.4v10.4h-10.4zM107.2 313.7h10.4v10.4h-10.4zM148.8 313.7h10.4v10.4h-10.4zM159.2 313.7h10.4v10.4h-10.4z" fill="#0a0a0a"/><path d="M96.8 -1h10.4v13.1h-10.4zM107.2 -1h10.4v13.1h-10.4zM138.4 -1h10.4v13.1h-10.4zM138.4 22.5h10.4v10.4h-10.4zM96.8 32.9h10.4v10.4h-10.4zM128.0 43.3h10.4v10.4h-10.4zM138.4 64.1h10.4v10.4h-10.4zM96.8 84.9h10.4v10.4h-10.4zM117.6 95.3h10.4v10.4h-10.4zM148.8 95.3h10.4v10.4h-10.4zM96.8 105.7h10.4v10.4h-10.4zM117.6 105.7h10.4v10.4h-10.4zM148.8 105.7h10.4v10.4h-10.4zM117.6 116.1h10.4v10.4h-10.4zM128.0 116.1h10.4v10.4h-10.4zM138.4 116.1h10.4v10.4h-10.4zM148.8 116.1h10.4v10.4h-10.4zM138.4 126.5h10.4v10.4h-10.4zM148.8 126.5h10.4v10.4h-10.4z" fill="#080808"/><path d="M159.2 -1h10.4v13.1h-10.4zM180.0 -1h10.4v13.1h-10.4zM159.2 12.1h10.4v10.4h-10.4zM190.4 22.5h10.4v10.4h-10.4zM159.2 32.9h10.4v10.4h-10.4zM169.6 32.9h10.4v10.4h-10.4zM180.0 32.9h10.4v10.4h-10.4zM159.2 43.3h10.4v10.4h-10.4zM169.6 43.3h10.4v10.4h-10.4zM169.6 53.7h10.4v10.4h-10.4zM169.6 64.1h10.4v10.4h-10.4zM159.2 84.9h10.4v10.4h-10.4zM169.6 84.9h10.4v10.4h-10.4zM180.0 105.7h10.4v10.4h-10.4zM180.0 116.1h10.4v10.4h-10.4zM169.6 126.5h10.4v10.4h-10.4zM700.0 126.5h10.4v10.4h-10.4zM637.6 157.7h10.4v10.4h-10.4zM648.0 168.1h10.4v10.4h-10.4zM658.4 168.1h10.4v10.4h-10.4zM700.0 178.5h10.4v10.4h-10.4zM700.0 188.9h10.4v10.4h-10.4zM710.4 209.7h10.4v10.4h-10.4zM710.4 220.1h10.4v10.4h-10.4zM700.0 230.5h10.4v10.4h-10.4zM700.0 240.9h10.4v10.4h-10.4zM710.4 240.9h10.4v10.4h-10.4zM700.0 251.3h10.4v10.4h-10.4zM710.4 251.3h10.4v10.4h-10.4zM700.0 261.7h10.4v10.4h-10.4zM710.4 272.1h10.4v10.4h-10.4zM710.4 282.5h10.4v10.4h-10.4zM710.4 313.7h10.4v10.4h-10.4zM700.0 324.1h10.4v10.4h-10.4zM710.4 324.1h10.4v10.4h-10.4zM710.4 334.5h10.4v10.4h-10.4zM700.0 376.1h10.4v10.4h-10.4zM710.4 376.1h10.4v10.4h-10.4zM700.0 386.5h10.4v10.4h-10.4zM710.4 386.5h10.4v10.4h-10.4zM700.0 396.9h10.4v10.4h-10.4zM710.4 396.9h10.4v10.4h-10.4zM710.4 417.7h10.4v10.4h-10.4zM616.8 428.1h10.4v10.4h-10.4zM627.2 428.1h10.4v10.4h-10.4zM616.8 438.5h10.4v10.4h-10.4zM627.2 438.5h10.4v10.4h-10.4zM616.8 448.9h10.4v10.4h-10.4zM637.6 459.3h10.4v10.4h-10.4zM616.8 490.5h10.4v10.4h-10.4zM627.2 490.5h10.4v10.4h-10.4zM24.0 500.9h10.4v10.4h-10.4zM24.0 511.3h10.4v10.4h-10.4zM44.8 511.3h10.4v10.4h-10.4zM616.8 511.3h10.4v10.4h-10.4zM627.2 511.3h10.4v10.4h-10.4zM637.6 511.3h10.4v10.4h-10.4zM24.0 521.7h10.4v10.4h-10.4zM44.8 521.7h10.4v10.4h-10.4zM13.6 532.1h10.4v10.4h-10.4zM24.0 532.1h10.4v10.4h-10.4zM55.2 532.1h10.4v10.4h-10.4zM616.8 532.1h10.4v10.4h-10.4zM34.4 542.5h10.4v10.4h-10.4zM616.8 542.5h10.4v10.4h-10.4zM627.2 542.5h10.4v10.4h-10.4zM616.8 552.9h10.4v10.4h-10.4zM627.2 563.3h10.4v10.4h-10.4zM637.6 563.3h10.4v10.4h-10.4zM616.8 573.7h10.4v10.4h-10.4zM627.2 573.7h10.4v10.4h-10.4zM637.6 573.7h10.4v10.4h-10.4zM616.8 594.5h10.4v10.4h-10.4zM627.2 594.5h10.4v10.4h-10.4zM637.6 594.5h10.4v10.4h-10.4zM627.2 625.7h10.4v10.4h-10.4z" fill="#121212"/><path d="M169.6 -1h10.4v13.1h-10.4zM180.0 12.1h10.4v10.4h-10.4zM180.0 64.1h10.4v10.4h-10.4zM190.4 74.5h10.4v10.4h-10.4zM180.0 84.9h10.4v10.4h-10.4zM159.2 95.3h10.4v10.4h-10.4zM169.6 95.3h10.4v10.4h-10.4zM190.4 95.3h10.4v10.4h-10.4zM169.6 105.7h10.4v10.4h-10.4zM221.6 136.9h10.4v10.4h-10.4zM325.6 136.9h10.4v10.4h-10.4zM336.0 136.9h10.4v10.4h-10.4zM346.4 136.9h10.4v10.4h-10.4zM367.2 136.9h10.4v10.4h-10.4zM440.0 136.9h10.4v10.4h-10.4zM689.6 136.9h10.4v10.4h-10.4zM700.0 136.9h10.4v10.4h-10.4zM242.4 147.3h10.4v10.4h-10.4zM273.6 147.3h10.4v10.4h-10.4zM284.0 147.3h10.4v10.4h-10.4zM325.6 147.3h10.4v10.4h-10.4zM367.2 147.3h10.4v10.4h-10.4zM398.4 147.3h10.4v10.4h-10.4zM440.0 147.3h10.4v10.4h-10.4zM648.0 147.3h10.4v10.4h-10.4zM658.4 147.3h10.4v10.4h-10.4zM700.0 147.3h10.4v10.4h-10.4zM211.2 157.7h10.4v10.4h-10.4zM221.6 157.7h10.4v10.4h-10.4zM232.0 157.7h10.4v10.4h-10.4zM325.6 157.7h10.4v10.4h-10.4zM336.0 157.7h10.4v10.4h-10.4zM356.8 157.7h10.4v10.4h-10.4zM398.4 157.7h10.4v10.4h-10.4zM408.8 157.7h10.4v10.4h-10.4zM419.2 157.7h10.4v10.4h-10.4zM627.2 157.7h10.4v10.4h-10.4zM658.4 157.7h10.4v10.4h-10.4zM700.0 157.7h10.4v10.4h-10.4zM232.0 168.1h10.4v10.4h-10.4zM263.2 168.1h10.4v10.4h-10.4zM273.6 168.1h10.4v10.4h-10.4zM315.2 168.1h10.4v10.4h-10.4zM356.8 168.1h10.4v10.4h-10.4zM398.4 168.1h10.4v10.4h-10.4zM408.8 168.1h10.4v10.4h-10.4zM460.8 168.1h10.4v10.4h-10.4zM689.6 168.1h10.4v10.4h-10.4zM700.0 168.1h10.4v10.4h-10.4zM232.0 178.5h10.4v10.4h-10.4zM263.2 178.5h10.4v10.4h-10.4zM294.4 178.5h10.4v10.4h-10.4zM304.8 178.5h10.4v10.4h-10.4zM356.8 178.5h10.4v10.4h-10.4zM367.2 178.5h10.4v10.4h-10.4zM419.2 178.5h10.4v10.4h-10.4zM460.8 178.5h10.4v10.4h-10.4zM689.6 178.5h10.4v10.4h-10.4zM242.4 188.9h10.4v10.4h-10.4zM263.2 188.9h10.4v10.4h-10.4zM273.6 188.9h10.4v10.4h-10.4zM346.4 188.9h10.4v10.4h-10.4zM377.6 188.9h10.4v10.4h-10.4zM408.8 188.9h10.4v10.4h-10.4zM429.6 188.9h10.4v10.4h-10.4zM440.0 188.9h10.4v10.4h-10.4zM450.4 188.9h10.4v10.4h-10.4zM232.0 199.3h10.4v10.4h-10.4zM242.4 199.3h10.4v10.4h-10.4zM273.6 199.3h10.4v10.4h-10.4zM315.2 199.3h10.4v10.4h-10.4zM325.6 199.3h10.4v10.4h-10.4zM367.2 199.3h10.4v10.4h-10.4zM429.6 199.3h10.4v10.4h-10.4zM450.4 199.3h10.4v10.4h-10.4zM700.0 199.3h10.4v10.4h-10.4zM232.0 209.7h10.4v10.4h-10.4zM273.6 209.7h10.4v10.4h-10.4zM325.6 209.7h10.4v10.4h-10.4zM377.6 209.7h10.4v10.4h-10.4zM408.8 209.7h10.4v10.4h-10.4zM440.0 209.7h10.4v10.4h-10.4zM460.8 209.7h10.4v10.4h-10.4zM700.0 209.7h10.4v10.4h-10.4zM200.8 220.1h10.4v10.4h-10.4zM211.2 220.1h10.4v10.4h-10.4zM221.6 220.1h10.4v10.4h-10.4zM273.6 220.1h10.4v10.4h-10.4zM284.0 220.1h10.4v10.4h-10.4zM304.8 220.1h10.4v10.4h-10.4zM315.2 220.1h10.4v10.4h-10.4zM336.0 220.1h10.4v10.4h-10.4zM356.8 220.1h10.4v10.4h-10.4zM388.0 220.1h10.4v10.4h-10.4zM419.2 220.1h10.4v10.4h-10.4zM440.0 220.1h10.4v10.4h-10.4zM450.4 220.1h10.4v10.4h-10.4zM460.8 220.1h10.4v10.4h-10.4zM689.6 220.1h10.4v10.4h-10.4zM700.0 220.1h10.4v10.4h-10.4zM200.8 230.5h10.4v10.4h-10.4zM211.2 230.5h10.4v10.4h-10.4zM273.6 230.5h10.4v10.4h-10.4zM325.6 230.5h10.4v10.4h-10.4zM356.8 230.5h10.4v10.4h-10.4zM377.6 230.5h10.4v10.4h-10.4zM388.0 230.5h10.4v10.4h-10.4zM398.4 230.5h10.4v10.4h-10.4zM242.4 240.9h10.4v10.4h-10.4zM252.8 240.9h10.4v10.4h-10.4zM263.2 240.9h10.4v10.4h-10.4zM284.0 240.9h10.4v10.4h-10.4zM315.2 240.9h10.4v10.4h-10.4zM325.6 240.9h10.4v10.4h-10.4zM336.0 240.9h10.4v10.4h-10.4zM419.2 240.9h10.4v10.4h-10.4zM200.8 251.3h10.4v10.4h-10.4zM284.0 251.3h10.4v10.4h-10.4zM325.6 251.3h10.4v10.4h-10.4zM367.2 251.3h10.4v10.4h-10.4zM398.4 251.3h10.4v10.4h-10.4zM408.8 251.3h10.4v10.4h-10.4zM450.4 251.3h10.4v10.4h-10.4zM460.8 251.3h10.4v10.4h-10.4zM689.6 251.3h10.4v10.4h-10.4zM232.0 261.7h10.4v10.4h-10.4zM284.0 261.7h10.4v10.4h-10.4zM356.8 261.7h10.4v10.4h-10.4zM419.2 261.7h10.4v10.4h-10.4zM440.0 261.7h10.4v10.4h-10.4zM689.6 261.7h10.4v10.4h-10.4zM252.8 272.1h10.4v10.4h-10.4zM294.4 272.1h10.4v10.4h-10.4zM315.2 272.1h10.4v10.4h-10.4zM336.0 272.1h10.4v10.4h-10.4zM346.4 272.1h10.4v10.4h-10.4zM367.2 272.1h10.4v10.4h-10.4zM377.6 272.1h10.4v10.4h-10.4zM700.0 272.1h10.4v10.4h-10.4zM211.2 282.5h10.4v10.4h-10.4zM304.8 282.5h10.4v10.4h-10.4zM336.0 282.5h10.4v10.4h-10.4zM429.6 282.5h10.4v10.4h-10.4zM700.0 282.5h10.4v10.4h-10.4zM232.0 292.9h10.4v10.4h-10.4zM242.4 292.9h10.4v10.4h-10.4zM252.8 292.9h10.4v10.4h-10.4zM336.0 292.9h10.4v10.4h-10.4zM408.8 292.9h10.4v10.4h-10.4zM429.6 292.9h10.4v10.4h-10.4zM440.0 292.9h10.4v10.4h-10.4zM689.6 292.9h10.4v10.4h-10.4zM700.0 292.9h10.4v10.4h-10.4zM211.2 303.3h10.4v10.4h-10.4zM242.4 303.3h10.4v10.4h-10.4zM294.4 303.3h10.4v10.4h-10.4zM419.2 303.3h10.4v10.4h-10.4zM200.8 313.7h10.4v10.4h-10.4zM232.0 313.7h10.4v10.4h-10.4zM304.8 313.7h10.4v10.4h-10.4zM315.2 313.7h10.4v10.4h-10.4zM325.6 313.7h10.4v10.4h-10.4zM388.0 313.7h10.4v10.4h-10.4zM398.4 313.7h10.4v10.4h-10.4zM429.6 313.7h10.4v10.4h-10.4zM460.8 313.7h10.4v10.4h-10.4zM689.6 313.7h10.4v10.4h-10.4zM700.0 313.7h10.4v10.4h-10.4zM138.4 324.1h10.4v10.4h-10.4zM169.6 324.1h10.4v10.4h-10.4zM180.0 324.1h10.4v10.4h-10.4zM190.4 324.1h10.4v10.4h-10.4zM242.4 324.1h10.4v10.4h-10.4zM294.4 324.1h10.4v10.4h-10.4zM304.8 324.1h10.4v10.4h-10.4zM377.6 324.1h10.4v10.4h-10.4zM398.4 324.1h10.4v10.4h-10.4zM408.8 324.1h10.4v10.4h-10.4zM429.6 324.1h10.4v10.4h-10.4zM440.0 324.1h10.4v10.4h-10.4zM450.4 324.1h10.4v10.4h-10.4zM689.6 324.1h10.4v10.4h-10.4zM117.6 334.5h10.4v10.4h-10.4zM138.4 334.5h10.4v10.4h-10.4zM169.6 334.5h10.4v10.4h-10.4zM190.4 334.5h10.4v10.4h-10.4zM200.8 334.5h10.4v10.4h-10.4zM211.2 334.5h10.4v10.4h-10.4zM263.2 334.5h10.4v10.4h-10.4zM273.6 334.5h10.4v10.4h-10.4zM294.4 334.5h10.4v10.4h-10.4zM336.0 334.5h10.4v10.4h-10.4zM367.2 334.5h10.4v10.4h-10.4zM377.6 334.5h10.4v10.4h-10.4zM408.8 334.5h10.4v10.4h-10.4zM440.0 334.5h10.4v10.4h-10.4zM460.8 334.5h10.4v10.4h-10.4zM700.0 334.5h10.4v10.4h-10.4zM107.2 344.9h10.4v10.4h-10.4zM148.8 344.9h10.4v10.4h-10.4zM232.0 344.9h10.4v10.4h-10.4zM304.8 344.9h10.4v10.4h-10.4zM325.6 344.9h10.4v10.4h-10.4zM336.0 344.9h10.4v10.4h-10.4zM346.4 344.9h10.4v10.4h-10.4zM356.8 344.9h10.4v10.4h-10.4zM377.6 344.9h10.4v10.4h-10.4zM388.0 344.9h10.4v10.4h-10.4zM408.8 344.9h10.4v10.4h-10.4zM419.2 344.9h10.4v10.4h-10.4zM700.0 344.9h10.4v10.4h-10.4zM96.8 355.3h10.4v10.4h-10.4zM138.4 355.3h10.4v10.4h-10.4zM190.4 355.3h10.4v10.4h-10.4zM221.6 355.3h10.4v10.4h-10.4zM232.0 355.3h10.4v10.4h-10.4zM315.2 355.3h10.4v10.4h-10.4zM336.0 355.3h10.4v10.4h-10.4zM356.8 355.3h10.4v10.4h-10.4zM398.4 355.3h10.4v10.4h-10.4zM440.0 355.3h10.4v10.4h-10.4zM700.0 355.3h10.4v10.4h-10.4zM96.8 365.7h10.4v10.4h-10.4zM128.0 365.7h10.4v10.4h-10.4zM169.6 365.7h10.4v10.4h-10.4zM180.0 365.7h10.4v10.4h-10.4zM211.2 365.7h10.4v10.4h-10.4zM252.8 365.7h10.4v10.4h-10.4zM263.2 365.7h10.4v10.4h-10.4zM294.4 365.7h10.4v10.4h-10.4zM450.4 365.7h10.4v10.4h-10.4zM700.0 365.7h10.4v10.4h-10.4zM86.4 376.1h10.4v10.4h-10.4zM117.6 376.1h10.4v10.4h-10.4zM128.0 376.1h10.4v10.4h-10.4zM304.8 376.1h10.4v10.4h-10.4zM450.4 376.1h10.4v10.4h-10.4zM689.6 376.1h10.4v10.4h-10.4zM86.4 386.5h10.4v10.4h-10.4zM148.8 386.5h10.4v10.4h-10.4zM159.2 386.5h10.4v10.4h-10.4zM180.0 386.5h10.4v10.4h-10.4zM190.4 386.5h10.4v10.4h-10.4zM200.8 386.5h10.4v10.4h-10.4zM252.8 386.5h10.4v10.4h-10.4zM263.2 386.5h10.4v10.4h-10.4zM315.2 386.5h10.4v10.4h-10.4zM325.6 386.5h10.4v10.4h-10.4zM336.0 386.5h10.4v10.4h-10.4zM398.4 386.5h10.4v10.4h-10.4zM460.8 386.5h10.4v10.4h-10.4zM86.4 396.9h10.4v10.4h-10.4zM96.8 396.9h10.4v10.4h-10.4zM107.2 396.9h10.4v10.4h-10.4zM117.6 396.9h10.4v10.4h-10.4zM128.0 396.9h10.4v10.4h-10.4zM159.2 396.9h10.4v10.4h-10.4zM180.0 396.9h10.4v10.4h-10.4zM190.4 396.9h10.4v10.4h-10.4zM211.2 396.9h10.4v10.4h-10.4zM252.8 396.9h10.4v10.4h-10.4zM304.8 396.9h10.4v10.4h-10.4zM336.0 396.9h10.4v10.4h-10.4zM356.8 396.9h10.4v10.4h-10.4zM377.6 396.9h10.4v10.4h-10.4zM419.2 396.9h10.4v10.4h-10.4zM440.0 396.9h10.4v10.4h-10.4zM460.8 396.9h10.4v10.4h-10.4zM689.6 396.9h10.4v10.4h-10.4zM138.4 407.3h10.4v10.4h-10.4zM180.0 407.3h10.4v10.4h-10.4zM190.4 407.3h10.4v10.4h-10.4zM232.0 407.3h10.4v10.4h-10.4zM242.4 407.3h10.4v10.4h-10.4zM252.8 407.3h10.4v10.4h-10.4zM263.2 407.3h10.4v10.4h-10.4zM294.4 407.3h10.4v10.4h-10.4zM325.6 407.3h10.4v10.4h-10.4zM367.2 407.3h10.4v10.4h-10.4zM408.8 407.3h10.4v10.4h-10.4zM440.0 407.3h10.4v10.4h-10.4zM450.4 407.3h10.4v10.4h-10.4zM700.0 407.3h10.4v10.4h-10.4zM128.0 417.7h10.4v10.4h-10.4zM138.4 417.7h10.4v10.4h-10.4zM169.6 417.7h10.4v10.4h-10.4zM190.4 417.7h10.4v10.4h-10.4zM221.6 417.7h10.4v10.4h-10.4zM232.0 417.7h10.4v10.4h-10.4zM304.8 417.7h10.4v10.4h-10.4zM367.2 417.7h10.4v10.4h-10.4zM689.6 417.7h10.4v10.4h-10.4zM700.0 417.7h10.4v10.4h-10.4zM107.2 428.1h10.4v10.4h-10.4zM117.6 428.1h10.4v10.4h-10.4zM128.0 428.1h10.4v10.4h-10.4zM138.4 428.1h10.4v10.4h-10.4zM180.0 428.1h10.4v10.4h-10.4zM221.6 428.1h10.4v10.4h-10.4zM273.6 428.1h10.4v10.4h-10.4zM346.4 428.1h10.4v10.4h-10.4zM356.8 428.1h10.4v10.4h-10.4zM606.4 428.1h10.4v10.4h-10.4zM117.6 438.5h10.4v10.4h-10.4zM128.0 438.5h10.4v10.4h-10.4zM232.0 438.5h10.4v10.4h-10.4zM346.4 438.5h10.4v10.4h-10.4zM356.8 438.5h10.4v10.4h-10.4zM388.0 438.5h10.4v10.4h-10.4zM606.4 438.5h10.4v10.4h-10.4zM96.8 448.9h10.4v10.4h-10.4zM128.0 448.9h10.4v10.4h-10.4zM169.6 448.9h10.4v10.4h-10.4zM190.4 448.9h10.4v10.4h-10.4zM200.8 448.9h10.4v10.4h-10.4zM221.6 448.9h10.4v10.4h-10.4zM242.4 448.9h10.4v10.4h-10.4zM346.4 448.9h10.4v10.4h-10.4zM408.8 448.9h10.4v10.4h-10.4zM169.6 459.3h10.4v10.4h-10.4zM190.4 459.3h10.4v10.4h-10.4zM221.6 459.3h10.4v10.4h-10.4zM232.0 459.3h10.4v10.4h-10.4zM294.4 459.3h10.4v10.4h-10.4zM325.6 459.3h10.4v10.4h-10.4zM356.8 459.3h10.4v10.4h-10.4zM367.2 459.3h10.4v10.4h-10.4zM388.0 459.3h10.4v10.4h-10.4zM398.4 459.3h10.4v10.4h-10.4zM616.8 459.3h10.4v10.4h-10.4zM200.8 469.7h10.4v10.4h-10.4zM211.2 469.7h10.4v10.4h-10.4zM284.0 469.7h10.4v10.4h-10.4zM315.2 469.7h10.4v10.4h-10.4zM325.6 469.7h10.4v10.4h-10.4zM336.0 469.7h10.4v10.4h-10.4zM346.4 469.7h10.4v10.4h-10.4zM356.8 469.7h10.4v10.4h-10.4zM377.6 469.7h10.4v10.4h-10.4zM398.4 469.7h10.4v10.4h-10.4zM606.4 469.7h10.4v10.4h-10.4zM616.8 469.7h10.4v10.4h-10.4zM627.2 469.7h10.4v10.4h-10.4zM221.6 480.1h10.4v10.4h-10.4zM304.8 480.1h10.4v10.4h-10.4zM336.0 480.1h10.4v10.4h-10.4zM346.4 480.1h10.4v10.4h-10.4zM408.8 480.1h10.4v10.4h-10.4zM606.4 480.1h10.4v10.4h-10.4zM627.2 480.1h10.4v10.4h-10.4zM159.2 490.5h10.4v10.4h-10.4zM180.0 490.5h10.4v10.4h-10.4zM211.2 490.5h10.4v10.4h-10.4zM242.4 490.5h10.4v10.4h-10.4zM284.0 490.5h10.4v10.4h-10.4zM606.4 490.5h10.4v10.4h-10.4zM3.2 500.9h10.4v10.4h-10.4zM34.4 500.9h10.4v10.4h-10.4zM44.8 500.9h10.4v10.4h-10.4zM65.6 500.9h10.4v10.4h-10.4zM190.4 500.9h10.4v10.4h-10.4zM200.8 500.9h10.4v10.4h-10.4zM211.2 500.9h10.4v10.4h-10.4zM221.6 500.9h10.4v10.4h-10.4zM232.0 500.9h10.4v10.4h-10.4zM284.0 500.9h10.4v10.4h-10.4zM616.8 500.9h10.4v10.4h-10.4zM34.4 511.3h10.4v10.4h-10.4zM55.2 511.3h10.4v10.4h-10.4zM13.6 521.7h10.4v10.4h-10.4zM55.2 521.7h10.4v10.4h-10.4zM76.0 521.7h10.4v10.4h-10.4zM627.2 521.7h10.4v10.4h-10.4zM44.8 532.1h10.4v10.4h-10.4zM65.6 532.1h10.4v10.4h-10.4zM627.2 532.1h10.4v10.4h-10.4zM13.6 542.5h10.4v10.4h-10.4zM55.2 542.5h10.4v10.4h-10.4zM34.4 552.9h10.4v10.4h-10.4zM44.8 552.9h10.4v10.4h-10.4zM606.4 552.9h10.4v10.4h-10.4zM627.2 552.9h10.4v10.4h-10.4zM616.8 563.3h10.4v10.4h-10.4zM190.4 573.7h10.4v10.4h-10.4zM627.2 604.9h10.4v10.4h-10.4zM627.2 615.3h10.4v10.4h-10.4zM606.4 625.7h10.4v10.4h-10.4zM616.8 625.7h10.4v10.4h-10.4zM606.4 636.1h10.4v10.4h-10.4zM616.8 646.5h10.4v10.4h-10.4z" fill="#131313"/><path d="M190.4 -1h10.4v13.1h-10.4zM169.6 12.1h10.4v10.4h-10.4zM190.4 12.1h10.4v10.4h-10.4zM159.2 22.5h10.4v10.4h-10.4zM169.6 22.5h10.4v10.4h-10.4zM180.0 22.5h10.4v10.4h-10.4zM190.4 32.9h10.4v10.4h-10.4zM180.0 43.3h10.4v10.4h-10.4zM190.4 43.3h10.4v10.4h-10.4zM159.2 53.7h10.4v10.4h-10.4zM180.0 53.7h10.4v10.4h-10.4zM159.2 64.1h10.4v10.4h-10.4zM190.4 64.1h10.4v10.4h-10.4zM159.2 74.5h10.4v10.4h-10.4zM169.6 74.5h10.4v10.4h-10.4zM180.0 74.5h10.4v10.4h-10.4zM190.4 84.9h10.4v10.4h-10.4zM180.0 95.3h10.4v10.4h-10.4zM159.2 105.7h10.4v10.4h-10.4zM190.4 105.7h10.4v10.4h-10.4zM159.2 116.1h10.4v10.4h-10.4zM169.6 116.1h10.4v10.4h-10.4zM190.4 116.1h10.4v10.4h-10.4zM159.2 126.5h10.4v10.4h-10.4zM180.0 126.5h10.4v10.4h-10.4zM190.4 126.5h10.4v10.4h-10.4zM710.4 126.5h10.4v10.4h-10.4zM710.4 136.9h10.4v10.4h-10.4zM648.0 157.7h10.4v10.4h-10.4zM710.4 157.7h10.4v10.4h-10.4zM710.4 168.1h10.4v10.4h-10.4zM710.4 178.5h10.4v10.4h-10.4zM710.4 188.9h10.4v10.4h-10.4zM710.4 199.3h10.4v10.4h-10.4zM710.4 261.7h10.4v10.4h-10.4zM720.8 282.5h10.4v10.4h-10.4zM710.4 292.9h10.4v10.4h-10.4zM710.4 303.3h10.4v10.4h-10.4zM710.4 344.9h10.4v10.4h-10.4zM720.8 344.9h10.4v10.4h-10.4zM710.4 355.3h10.4v10.4h-10.4zM710.4 365.7h10.4v10.4h-10.4zM627.2 448.9h10.4v10.4h-10.4zM637.6 448.9h10.4v10.4h-10.4zM648.0 448.9h10.4v10.4h-10.4zM627.2 459.3h10.4v10.4h-10.4zM648.0 459.3h10.4v10.4h-10.4zM637.6 469.7h10.4v10.4h-10.4zM648.0 469.7h10.4v10.4h-10.4zM627.2 500.9h10.4v10.4h-10.4zM648.0 511.3h10.4v10.4h-10.4zM34.4 521.7h10.4v10.4h-10.4zM34.4 532.1h10.4v10.4h-10.4zM637.6 532.1h10.4v10.4h-10.4zM648.0 563.3h10.4v10.4h-10.4zM627.2 584.1h10.4v10.4h-10.4zM637.6 584.1h10.4v10.4h-10.4zM637.6 604.9h10.4v10.4h-10.4zM648.0 604.9h10.4v10.4h-10.4zM637.6 615.3h10.4v10.4h-10.4zM648.0 615.3h10.4v10.4h-10.4zM627.2 636.1h10.4v10.4h-10.4zM637.6 636.1h10.4v10.4h-10.4zM648.0 636.1h10.4v10.4h-10.4zM627.2 646.5h10.4v10.4h-10.4zM637.6 646.5h10.4v10.4h-10.4zM648.0 646.5h10.4v10.4h-10.4z" fill="#111111"/><path d="M200.8 -1h10.4v13.1h-10.4zM211.2 -1h10.4v13.1h-10.4zM252.8 -1h10.4v13.1h-10.4zM388.0 -1h10.4v13.1h-10.4zM398.4 -1h10.4v13.1h-10.4zM408.8 -1h10.4v13.1h-10.4zM471.2 -1h10.4v13.1h-10.4zM481.6 -1h10.4v13.1h-10.4zM492.0 -1h10.4v13.1h-10.4zM252.8 12.1h10.4v10.4h-10.4zM481.6 12.1h10.4v10.4h-10.4zM492.0 12.1h10.4v10.4h-10.4zM419.2 22.5h10.4v10.4h-10.4zM450.4 22.5h10.4v10.4h-10.4zM481.6 22.5h10.4v10.4h-10.4zM492.0 22.5h10.4v10.4h-10.4zM502.4 22.5h10.4v10.4h-10.4zM419.2 32.9h10.4v10.4h-10.4zM471.2 32.9h10.4v10.4h-10.4zM481.6 32.9h10.4v10.4h-10.4zM492.0 32.9h10.4v10.4h-10.4zM200.8 43.3h10.4v10.4h-10.4zM242.4 43.3h10.4v10.4h-10.4zM252.8 43.3h10.4v10.4h-10.4zM440.0 43.3h10.4v10.4h-10.4zM471.2 43.3h10.4v10.4h-10.4zM492.0 43.3h10.4v10.4h-10.4zM221.6 53.7h10.4v10.4h-10.4zM252.8 53.7h10.4v10.4h-10.4zM273.6 53.7h10.4v10.4h-10.4zM471.2 53.7h10.4v10.4h-10.4zM481.6 53.7h10.4v10.4h-10.4zM492.0 53.7h10.4v10.4h-10.4zM502.4 53.7h10.4v10.4h-10.4zM408.8 64.1h10.4v10.4h-10.4zM450.4 64.1h10.4v10.4h-10.4zM460.8 64.1h10.4v10.4h-10.4zM471.2 64.1h10.4v10.4h-10.4zM481.6 64.1h10.4v10.4h-10.4zM533.6 64.1h10.4v10.4h-10.4zM284.0 74.5h10.4v10.4h-10.4zM294.4 74.5h10.4v10.4h-10.4zM304.8 74.5h10.4v10.4h-10.4zM315.2 74.5h10.4v10.4h-10.4zM325.6 74.5h10.4v10.4h-10.4zM336.0 74.5h10.4v10.4h-10.4zM388.0 74.5h10.4v10.4h-10.4zM408.8 74.5h10.4v10.4h-10.4zM419.2 74.5h10.4v10.4h-10.4zM429.6 74.5h10.4v10.4h-10.4zM440.0 74.5h10.4v10.4h-10.4zM450.4 74.5h10.4v10.4h-10.4zM460.8 74.5h10.4v10.4h-10.4zM471.2 74.5h10.4v10.4h-10.4zM232.0 84.9h10.4v10.4h-10.4zM242.4 84.9h10.4v10.4h-10.4zM388.0 84.9h10.4v10.4h-10.4zM440.0 84.9h10.4v10.4h-10.4zM450.4 84.9h10.4v10.4h-10.4zM460.8 84.9h10.4v10.4h-10.4zM471.2 84.9h10.4v10.4h-10.4zM481.6 84.9h10.4v10.4h-10.4zM492.0 84.9h10.4v10.4h-10.4zM544.0 84.9h10.4v10.4h-10.4zM554.4 84.9h10.4v10.4h-10.4zM232.0 95.3h10.4v10.4h-10.4zM377.6 95.3h10.4v10.4h-10.4zM429.6 95.3h10.4v10.4h-10.4zM440.0 95.3h10.4v10.4h-10.4zM460.8 95.3h10.4v10.4h-10.4zM471.2 95.3h10.4v10.4h-10.4zM481.6 95.3h10.4v10.4h-10.4zM492.0 95.3h10.4v10.4h-10.4zM502.4 95.3h10.4v10.4h-10.4zM512.8 95.3h10.4v10.4h-10.4zM388.0 105.7h10.4v10.4h-10.4zM429.6 105.7h10.4v10.4h-10.4zM440.0 105.7h10.4v10.4h-10.4zM450.4 105.7h10.4v10.4h-10.4zM460.8 105.7h10.4v10.4h-10.4zM471.2 105.7h10.4v10.4h-10.4zM481.6 105.7h10.4v10.4h-10.4zM492.0 105.7h10.4v10.4h-10.4zM502.4 105.7h10.4v10.4h-10.4zM512.8 105.7h10.4v10.4h-10.4zM408.8 116.1h10.4v10.4h-10.4zM419.2 116.1h10.4v10.4h-10.4zM429.6 116.1h10.4v10.4h-10.4zM440.0 116.1h10.4v10.4h-10.4zM450.4 116.1h10.4v10.4h-10.4zM460.8 116.1h10.4v10.4h-10.4zM471.2 116.1h10.4v10.4h-10.4zM481.6 116.1h10.4v10.4h-10.4zM492.0 116.1h10.4v10.4h-10.4zM502.4 116.1h10.4v10.4h-10.4zM512.8 116.1h10.4v10.4h-10.4zM408.8 126.5h10.4v10.4h-10.4zM419.2 126.5h10.4v10.4h-10.4zM429.6 126.5h10.4v10.4h-10.4zM440.0 126.5h10.4v10.4h-10.4zM450.4 126.5h10.4v10.4h-10.4zM460.8 126.5h10.4v10.4h-10.4zM471.2 126.5h10.4v10.4h-10.4zM481.6 126.5h10.4v10.4h-10.4zM492.0 126.5h10.4v10.4h-10.4zM502.4 126.5h10.4v10.4h-10.4zM512.8 126.5h10.4v10.4h-10.4zM-7.2 209.7h10.4v10.4h-10.4zM3.2 209.7h10.4v10.4h-10.4zM24.0 220.1h10.4v10.4h-10.4zM34.4 230.5h10.4v10.4h-10.4zM44.8 251.3h10.4v10.4h-10.4zM24.0 272.1h10.4v10.4h-10.4zM34.4 272.1h10.4v10.4h-10.4zM13.6 282.5h10.4v10.4h-10.4zM24.0 282.5h10.4v10.4h-10.4zM24.0 292.9h10.4v10.4h-10.4zM24.0 303.3h10.4v10.4h-10.4zM13.6 313.7h10.4v10.4h-10.4zM13.6 324.1h10.4v10.4h-10.4zM24.0 324.1h10.4v10.4h-10.4zM34.4 324.1h10.4v10.4h-10.4zM44.8 324.1h10.4v10.4h-10.4zM55.2 324.1h10.4v10.4h-10.4zM-7.2 334.5h10.4v10.4h-10.4zM3.2 334.5h10.4v10.4h-10.4zM13.6 334.5h10.4v10.4h-10.4zM24.0 334.5h10.4v10.4h-10.4zM34.4 334.5h10.4v10.4h-10.4zM-7.2 344.9h10.4v10.4h-10.4zM3.2 344.9h10.4v10.4h-10.4zM13.6 344.9h10.4v10.4h-10.4zM24.0 344.9h10.4v10.4h-10.4zM-7.2 355.3h10.4v10.4h-10.4zM3.2 355.3h10.4v10.4h-10.4zM13.6 355.3h10.4v10.4h-10.4zM346.4 490.5h10.4v10.4h-10.4zM356.8 490.5h10.4v10.4h-10.4zM325.6 500.9h10.4v10.4h-10.4zM336.0 500.9h10.4v10.4h-10.4zM325.6 511.3h10.4v10.4h-10.4zM336.0 511.3h10.4v10.4h-10.4zM200.8 532.1h10.4v10.4h-10.4zM304.8 532.1h10.4v10.4h-10.4zM388.0 542.5h10.4v10.4h-10.4zM398.4 542.5h10.4v10.4h-10.4zM388.0 552.9h10.4v10.4h-10.4zM398.4 552.9h10.4v10.4h-10.4zM388.0 563.3h10.4v10.4h-10.4zM398.4 563.3h10.4v10.4h-10.4zM388.0 573.7h10.4v10.4h-10.4zM398.4 573.7h10.4v10.4h-10.4zM336.0 584.1h10.4v10.4h-10.4zM346.4 584.1h10.4v10.4h-10.4zM356.8 584.1h10.4v10.4h-10.4zM367.2 584.1h10.4v10.4h-10.4zM377.6 584.1h10.4v10.4h-10.4zM388.0 584.1h10.4v10.4h-10.4zM263.2 594.5h10.4v10.4h-10.4zM304.8 594.5h10.4v10.4h-10.4zM336.0 594.5h10.4v10.4h-10.4zM346.4 594.5h10.4v10.4h-10.4zM356.8 594.5h10.4v10.4h-10.4zM367.2 594.5h10.4v10.4h-10.4zM377.6 594.5h10.4v10.4h-10.4zM388.0 594.5h10.4v10.4h-10.4zM304.8 604.9h10.4v10.4h-10.4zM315.2 604.9h10.4v10.4h-10.4zM336.0 604.9h10.4v10.4h-10.4zM346.4 604.9h10.4v10.4h-10.4zM356.8 604.9h10.4v10.4h-10.4zM367.2 604.9h10.4v10.4h-10.4zM377.6 604.9h10.4v10.4h-10.4zM388.0 604.9h10.4v10.4h-10.4zM315.2 615.3h10.4v10.4h-10.4zM325.6 615.3h10.4v10.4h-10.4zM336.0 615.3h10.4v10.4h-10.4zM346.4 615.3h10.4v10.4h-10.4zM356.8 615.3h10.4v10.4h-10.4zM367.2 615.3h10.4v10.4h-10.4zM377.6 615.3h10.4v10.4h-10.4zM388.0 615.3h10.4v10.4h-10.4zM325.6 625.7h10.4v10.4h-10.4zM336.0 625.7h10.4v10.4h-10.4zM346.4 625.7h10.4v10.4h-10.4zM356.8 625.7h10.4v10.4h-10.4zM367.2 625.7h10.4v10.4h-10.4zM377.6 625.7h10.4v10.4h-10.4zM388.0 625.7h10.4v10.4h-10.4zM346.4 636.1h10.4v10.4h-10.4zM356.8 636.1h10.4v10.4h-10.4zM388.0 636.1h10.4v10.4h-10.4zM346.4 646.5h10.4v10.4h-10.4zM356.8 646.5h10.4v10.4h-10.4zM388.0 646.5h10.4v10.4h-10.4z" fill="#202020"/><path d="M221.6 -1h10.4v13.1h-10.4zM512.8 -1h10.4v13.1h-10.4zM523.2 -1h10.4v13.1h-10.4zM533.6 -1h10.4v13.1h-10.4zM544.0 -1h10.4v13.1h-10.4zM554.4 -1h10.4v13.1h-10.4zM564.8 -1h10.4v13.1h-10.4zM575.2 -1h10.4v13.1h-10.4zM585.6 -1h10.4v13.1h-10.4zM596.0 -1h10.4v13.1h-10.4zM606.4 -1h10.4v13.1h-10.4zM616.8 -1h10.4v13.1h-10.4zM627.2 -1h10.4v13.1h-10.4zM637.6 -1h10.4v13.1h-10.4zM648.0 -1h10.4v13.1h-10.4zM658.4 -1h10.4v13.1h-10.4zM689.6 -1h10.4v13.1h-10.4zM221.6 12.1h10.4v10.4h-10.4zM512.8 12.1h10.4v10.4h-10.4zM523.2 12.1h10.4v10.4h-10.4zM544.0 12.1h10.4v10.4h-10.4zM554.4 12.1h10.4v10.4h-10.4zM564.8 12.1h10.4v10.4h-10.4zM575.2 12.1h10.4v10.4h-10.4zM585.6 12.1h10.4v10.4h-10.4zM596.0 12.1h10.4v10.4h-10.4zM606.4 12.1h10.4v10.4h-10.4zM616.8 12.1h10.4v10.4h-10.4zM627.2 12.1h10.4v10.4h-10.4zM637.6 12.1h10.4v10.4h-10.4zM200.8 22.5h10.4v10.4h-10.4zM221.6 22.5h10.4v10.4h-10.4zM232.0 22.5h10.4v10.4h-10.4zM544.0 22.5h10.4v10.4h-10.4zM554.4 22.5h10.4v10.4h-10.4zM564.8 22.5h10.4v10.4h-10.4zM575.2 22.5h10.4v10.4h-10.4zM585.6 22.5h10.4v10.4h-10.4zM596.0 22.5h10.4v10.4h-10.4zM606.4 22.5h10.4v10.4h-10.4zM616.8 22.5h10.4v10.4h-10.4zM627.2 22.5h10.4v10.4h-10.4zM637.6 22.5h10.4v10.4h-10.4zM679.2 22.5h10.4v10.4h-10.4zM200.8 32.9h10.4v10.4h-10.4zM211.2 32.9h10.4v10.4h-10.4zM221.6 32.9h10.4v10.4h-10.4zM544.0 32.9h10.4v10.4h-10.4zM554.4 32.9h10.4v10.4h-10.4zM564.8 32.9h10.4v10.4h-10.4zM575.2 32.9h10.4v10.4h-10.4zM585.6 32.9h10.4v10.4h-10.4zM596.0 32.9h10.4v10.4h-10.4zM606.4 32.9h10.4v10.4h-10.4zM616.8 32.9h10.4v10.4h-10.4zM627.2 32.9h10.4v10.4h-10.4zM679.2 32.9h10.4v10.4h-10.4zM544.0 43.3h10.4v10.4h-10.4zM554.4 43.3h10.4v10.4h-10.4zM564.8 43.3h10.4v10.4h-10.4zM575.2 43.3h10.4v10.4h-10.4zM585.6 43.3h10.4v10.4h-10.4zM596.0 43.3h10.4v10.4h-10.4zM606.4 43.3h10.4v10.4h-10.4zM616.8 43.3h10.4v10.4h-10.4zM627.2 43.3h10.4v10.4h-10.4zM637.6 43.3h10.4v10.4h-10.4zM648.0 43.3h10.4v10.4h-10.4zM658.4 43.3h10.4v10.4h-10.4zM679.2 43.3h10.4v10.4h-10.4zM200.8 53.7h10.4v10.4h-10.4zM211.2 53.7h10.4v10.4h-10.4zM512.8 53.7h10.4v10.4h-10.4zM523.2 53.7h10.4v10.4h-10.4zM533.6 53.7h10.4v10.4h-10.4zM564.8 53.7h10.4v10.4h-10.4zM585.6 53.7h10.4v10.4h-10.4zM606.4 53.7h10.4v10.4h-10.4zM616.8 53.7h10.4v10.4h-10.4zM627.2 53.7h10.4v10.4h-10.4zM637.6 53.7h10.4v10.4h-10.4zM648.0 53.7h10.4v10.4h-10.4zM658.4 53.7h10.4v10.4h-10.4zM668.8 53.7h10.4v10.4h-10.4zM679.2 53.7h10.4v10.4h-10.4zM200.8 64.1h10.4v10.4h-10.4zM211.2 64.1h10.4v10.4h-10.4zM221.6 64.1h10.4v10.4h-10.4zM263.2 64.1h10.4v10.4h-10.4zM273.6 64.1h10.4v10.4h-10.4zM284.0 64.1h10.4v10.4h-10.4zM294.4 64.1h10.4v10.4h-10.4zM304.8 64.1h10.4v10.4h-10.4zM512.8 64.1h10.4v10.4h-10.4zM523.2 64.1h10.4v10.4h-10.4zM544.0 64.1h10.4v10.4h-10.4zM554.4 64.1h10.4v10.4h-10.4zM564.8 64.1h10.4v10.4h-10.4zM575.2 64.1h10.4v10.4h-10.4zM585.6 64.1h10.4v10.4h-10.4zM606.4 64.1h10.4v10.4h-10.4zM616.8 64.1h10.4v10.4h-10.4zM627.2 64.1h10.4v10.4h-10.4zM637.6 64.1h10.4v10.4h-10.4zM648.0 64.1h10.4v10.4h-10.4zM658.4 64.1h10.4v10.4h-10.4zM668.8 64.1h10.4v10.4h-10.4zM221.6 74.5h10.4v10.4h-10.4zM263.2 74.5h10.4v10.4h-10.4zM554.4 74.5h10.4v10.4h-10.4zM564.8 74.5h10.4v10.4h-10.4zM575.2 74.5h10.4v10.4h-10.4zM585.6 74.5h10.4v10.4h-10.4zM596.0 74.5h10.4v10.4h-10.4zM627.2 74.5h10.4v10.4h-10.4zM637.6 74.5h10.4v10.4h-10.4zM648.0 74.5h10.4v10.4h-10.4zM658.4 74.5h10.4v10.4h-10.4zM668.8 74.5h10.4v10.4h-10.4zM221.6 84.9h10.4v10.4h-10.4zM377.6 84.9h10.4v10.4h-10.4zM564.8 84.9h10.4v10.4h-10.4zM575.2 84.9h10.4v10.4h-10.4zM585.6 84.9h10.4v10.4h-10.4zM596.0 84.9h10.4v10.4h-10.4zM606.4 84.9h10.4v10.4h-10.4zM616.8 84.9h10.4v10.4h-10.4zM627.2 84.9h10.4v10.4h-10.4zM637.6 84.9h10.4v10.4h-10.4zM648.0 84.9h10.4v10.4h-10.4zM658.4 84.9h10.4v10.4h-10.4zM668.8 84.9h10.4v10.4h-10.4zM554.4 95.3h10.4v10.4h-10.4zM585.6 95.3h10.4v10.4h-10.4zM596.0 95.3h10.4v10.4h-10.4zM606.4 95.3h10.4v10.4h-10.4zM616.8 95.3h10.4v10.4h-10.4zM627.2 95.3h10.4v10.4h-10.4zM658.4 95.3h10.4v10.4h-10.4zM668.8 95.3h10.4v10.4h-10.4zM211.2 105.7h10.4v10.4h-10.4zM221.6 105.7h10.4v10.4h-10.4zM232.0 105.7h10.4v10.4h-10.4zM554.4 105.7h10.4v10.4h-10.4zM564.8 105.7h10.4v10.4h-10.4zM575.2 105.7h10.4v10.4h-10.4zM585.6 105.7h10.4v10.4h-10.4zM596.0 105.7h10.4v10.4h-10.4zM606.4 105.7h10.4v10.4h-10.4zM616.8 105.7h10.4v10.4h-10.4zM627.2 105.7h10.4v10.4h-10.4zM637.6 105.7h10.4v10.4h-10.4zM648.0 105.7h10.4v10.4h-10.4zM211.2 116.1h10.4v10.4h-10.4zM221.6 116.1h10.4v10.4h-10.4zM232.0 116.1h10.4v10.4h-10.4zM242.4 116.1h10.4v10.4h-10.4zM252.8 116.1h10.4v10.4h-10.4zM263.2 116.1h10.4v10.4h-10.4zM273.6 116.1h10.4v10.4h-10.4zM554.4 116.1h10.4v10.4h-10.4zM564.8 116.1h10.4v10.4h-10.4zM575.2 116.1h10.4v10.4h-10.4zM585.6 116.1h10.4v10.4h-10.4zM596.0 116.1h10.4v10.4h-10.4zM606.4 116.1h10.4v10.4h-10.4zM616.8 116.1h10.4v10.4h-10.4zM627.2 116.1h10.4v10.4h-10.4zM637.6 116.1h10.4v10.4h-10.4zM648.0 116.1h10.4v10.4h-10.4zM658.4 116.1h10.4v10.4h-10.4zM211.2 126.5h10.4v10.4h-10.4zM221.6 126.5h10.4v10.4h-10.4zM232.0 126.5h10.4v10.4h-10.4zM242.4 126.5h10.4v10.4h-10.4zM252.8 126.5h10.4v10.4h-10.4zM263.2 126.5h10.4v10.4h-10.4zM273.6 126.5h10.4v10.4h-10.4zM232.0 136.9h10.4v10.4h-10.4zM242.4 136.9h10.4v10.4h-10.4zM284.0 136.9h10.4v10.4h-10.4zM304.8 136.9h10.4v10.4h-10.4zM315.2 136.9h10.4v10.4h-10.4zM356.8 136.9h10.4v10.4h-10.4zM388.0 136.9h10.4v10.4h-10.4zM398.4 136.9h10.4v10.4h-10.4zM408.8 136.9h10.4v10.4h-10.4zM419.2 136.9h10.4v10.4h-10.4zM429.6 136.9h10.4v10.4h-10.4zM668.8 136.9h10.4v10.4h-10.4zM211.2 147.3h10.4v10.4h-10.4zM232.0 147.3h10.4v10.4h-10.4zM263.2 147.3h10.4v10.4h-10.4zM294.4 147.3h10.4v10.4h-10.4zM304.8 147.3h10.4v10.4h-10.4zM315.2 147.3h10.4v10.4h-10.4zM336.0 147.3h10.4v10.4h-10.4zM346.4 147.3h10.4v10.4h-10.4zM450.4 147.3h10.4v10.4h-10.4zM460.8 147.3h10.4v10.4h-10.4zM637.6 147.3h10.4v10.4h-10.4zM689.6 147.3h10.4v10.4h-10.4zM200.8 157.7h10.4v10.4h-10.4zM242.4 157.7h10.4v10.4h-10.4zM273.6 157.7h10.4v10.4h-10.4zM284.0 157.7h10.4v10.4h-10.4zM294.4 157.7h10.4v10.4h-10.4zM304.8 157.7h10.4v10.4h-10.4zM315.2 157.7h10.4v10.4h-10.4zM367.2 157.7h10.4v10.4h-10.4zM377.6 157.7h10.4v10.4h-10.4zM429.6 157.7h10.4v10.4h-10.4zM440.0 157.7h10.4v10.4h-10.4zM616.8 157.7h10.4v10.4h-10.4zM668.8 157.7h10.4v10.4h-10.4zM679.2 157.7h10.4v10.4h-10.4zM200.8 168.1h10.4v10.4h-10.4zM211.2 168.1h10.4v10.4h-10.4zM221.6 168.1h10.4v10.4h-10.4zM242.4 168.1h10.4v10.4h-10.4zM284.0 168.1h10.4v10.4h-10.4zM294.4 168.1h10.4v10.4h-10.4zM304.8 168.1h10.4v10.4h-10.4zM346.4 168.1h10.4v10.4h-10.4zM377.6 168.1h10.4v10.4h-10.4zM429.6 168.1h10.4v10.4h-10.4zM450.4 168.1h10.4v10.4h-10.4zM637.6 168.1h10.4v10.4h-10.4zM221.6 178.5h10.4v10.4h-10.4zM252.8 178.5h10.4v10.4h-10.4zM284.0 178.5h10.4v10.4h-10.4zM336.0 178.5h10.4v10.4h-10.4zM377.6 178.5h10.4v10.4h-10.4zM408.8 178.5h10.4v10.4h-10.4zM429.6 178.5h10.4v10.4h-10.4zM440.0 178.5h10.4v10.4h-10.4zM637.6 178.5h10.4v10.4h-10.4zM200.8 188.9h10.4v10.4h-10.4zM252.8 188.9h10.4v10.4h-10.4zM294.4 188.9h10.4v10.4h-10.4zM315.2 188.9h10.4v10.4h-10.4zM336.0 188.9h10.4v10.4h-10.4zM388.0 188.9h10.4v10.4h-10.4zM398.4 188.9h10.4v10.4h-10.4zM419.2 188.9h10.4v10.4h-10.4zM460.8 188.9h10.4v10.4h-10.4zM-7.2 199.3h10.4v10.4h-10.4zM3.2 199.3h10.4v10.4h-10.4zM13.6 199.3h10.4v10.4h-10.4zM200.8 199.3h10.4v10.4h-10.4zM211.2 199.3h10.4v10.4h-10.4zM221.6 199.3h10.4v10.4h-10.4zM252.8 199.3h10.4v10.4h-10.4zM284.0 199.3h10.4v10.4h-10.4zM356.8 199.3h10.4v10.4h-10.4zM388.0 199.3h10.4v10.4h-10.4zM408.8 199.3h10.4v10.4h-10.4zM460.8 199.3h10.4v10.4h-10.4zM689.6 199.3h10.4v10.4h-10.4zM34.4 209.7h10.4v10.4h-10.4zM44.8 209.7h10.4v10.4h-10.4zM221.6 209.7h10.4v10.4h-10.4zM242.4 209.7h10.4v10.4h-10.4zM252.8 209.7h10.4v10.4h-10.4zM346.4 209.7h10.4v10.4h-10.4zM419.2 209.7h10.4v10.4h-10.4zM689.6 209.7h10.4v10.4h-10.4zM44.8 220.1h10.4v10.4h-10.4zM55.2 220.1h10.4v10.4h-10.4zM232.0 220.1h10.4v10.4h-10.4zM242.4 220.1h10.4v10.4h-10.4zM252.8 220.1h10.4v10.4h-10.4zM294.4 220.1h10.4v10.4h-10.4zM325.6 220.1h10.4v10.4h-10.4zM346.4 220.1h10.4v10.4h-10.4zM367.2 220.1h10.4v10.4h-10.4zM377.6 220.1h10.4v10.4h-10.4zM398.4 220.1h10.4v10.4h-10.4zM408.8 220.1h10.4v10.4h-10.4zM44.8 230.5h10.4v10.4h-10.4zM55.2 230.5h10.4v10.4h-10.4zM221.6 230.5h10.4v10.4h-10.4zM242.4 230.5h10.4v10.4h-10.4zM284.0 230.5h10.4v10.4h-10.4zM294.4 230.5h10.4v10.4h-10.4zM315.2 230.5h10.4v10.4h-10.4zM336.0 230.5h10.4v10.4h-10.4zM440.0 230.5h10.4v10.4h-10.4zM460.8 230.5h10.4v10.4h-10.4zM679.2 230.5h10.4v10.4h-10.4zM55.2 240.9h10.4v10.4h-10.4zM65.6 240.9h10.4v10.4h-10.4zM211.2 240.9h10.4v10.4h-10.4zM232.0 240.9h10.4v10.4h-10.4zM294.4 240.9h10.4v10.4h-10.4zM304.8 240.9h10.4v10.4h-10.4zM356.8 240.9h10.4v10.4h-10.4zM367.2 240.9h10.4v10.4h-10.4zM388.0 240.9h10.4v10.4h-10.4zM408.8 240.9h10.4v10.4h-10.4zM429.6 240.9h10.4v10.4h-10.4zM440.0 240.9h10.4v10.4h-10.4zM460.8 240.9h10.4v10.4h-10.4zM689.6 240.9h10.4v10.4h-10.4zM55.2 251.3h10.4v10.4h-10.4zM65.6 251.3h10.4v10.4h-10.4zM76.0 251.3h10.4v10.4h-10.4zM211.2 251.3h10.4v10.4h-10.4zM221.6 251.3h10.4v10.4h-10.4zM252.8 251.3h10.4v10.4h-10.4zM263.2 251.3h10.4v10.4h-10.4zM273.6 251.3h10.4v10.4h-10.4zM304.8 251.3h10.4v10.4h-10.4zM336.0 251.3h10.4v10.4h-10.4zM356.8 251.3h10.4v10.4h-10.4zM377.6 251.3h10.4v10.4h-10.4zM419.2 251.3h10.4v10.4h-10.4zM429.6 251.3h10.4v10.4h-10.4zM55.2 261.7h10.4v10.4h-10.4zM65.6 261.7h10.4v10.4h-10.4zM76.0 261.7h10.4v10.4h-10.4zM200.8 261.7h10.4v10.4h-10.4zM211.2 261.7h10.4v10.4h-10.4zM221.6 261.7h10.4v10.4h-10.4zM242.4 261.7h10.4v10.4h-10.4zM273.6 261.7h10.4v10.4h-10.4zM294.4 261.7h10.4v10.4h-10.4zM304.8 261.7h10.4v10.4h-10.4zM315.2 261.7h10.4v10.4h-10.4zM325.6 261.7h10.4v10.4h-10.4zM336.0 261.7h10.4v10.4h-10.4zM367.2 261.7h10.4v10.4h-10.4zM388.0 261.7h10.4v10.4h-10.4zM398.4 261.7h10.4v10.4h-10.4zM429.6 261.7h10.4v10.4h-10.4zM55.2 272.1h10.4v10.4h-10.4zM65.6 272.1h10.4v10.4h-10.4zM76.0 272.1h10.4v10.4h-10.4zM221.6 272.1h10.4v10.4h-10.4zM232.0 272.1h10.4v10.4h-10.4zM242.4 272.1h10.4v10.4h-10.4zM273.6 272.1h10.4v10.4h-10.4zM304.8 272.1h10.4v10.4h-10.4zM325.6 272.1h10.4v10.4h-10.4zM388.0 272.1h10.4v10.4h-10.4zM398.4 272.1h10.4v10.4h-10.4zM408.8 272.1h10.4v10.4h-10.4zM419.2 272.1h10.4v10.4h-10.4zM429.6 272.1h10.4v10.4h-10.4zM440.0 272.1h10.4v10.4h-10.4zM55.2 282.5h10.4v10.4h-10.4zM65.6 282.5h10.4v10.4h-10.4zM76.0 282.5h10.4v10.4h-10.4zM232.0 282.5h10.4v10.4h-10.4zM242.4 282.5h10.4v10.4h-10.4zM252.8 282.5h10.4v10.4h-10.4zM273.6 282.5h10.4v10.4h-10.4zM284.0 282.5h10.4v10.4h-10.4zM315.2 282.5h10.4v10.4h-10.4zM325.6 282.5h10.4v10.4h-10.4zM346.4 282.5h10.4v10.4h-10.4zM356.8 282.5h10.4v10.4h-10.4zM377.6 282.5h10.4v10.4h-10.4zM398.4 282.5h10.4v10.4h-10.4zM408.8 282.5h10.4v10.4h-10.4zM450.4 282.5h10.4v10.4h-10.4zM460.8 282.5h10.4v10.4h-10.4zM689.6 282.5h10.4v10.4h-10.4zM55.2 292.9h10.4v10.4h-10.4zM65.6 292.9h10.4v10.4h-10.4zM76.0 292.9h10.4v10.4h-10.4zM200.8 292.9h10.4v10.4h-10.4zM211.2 292.9h10.4v10.4h-10.4zM284.0 292.9h10.4v10.4h-10.4zM294.4 292.9h10.4v10.4h-10.4zM325.6 292.9h10.4v10.4h-10.4zM346.4 292.9h10.4v10.4h-10.4zM356.8 292.9h10.4v10.4h-10.4zM367.2 292.9h10.4v10.4h-10.4zM377.6 292.9h10.4v10.4h-10.4zM388.0 292.9h10.4v10.4h-10.4zM419.2 292.9h10.4v10.4h-10.4zM460.8 292.9h10.4v10.4h-10.4zM55.2 303.3h10.4v10.4h-10.4zM65.6 303.3h10.4v10.4h-10.4zM76.0 303.3h10.4v10.4h-10.4zM232.0 303.3h10.4v10.4h-10.4zM252.8 303.3h10.4v10.4h-10.4zM263.2 303.3h10.4v10.4h-10.4zM273.6 303.3h10.4v10.4h-10.4zM284.0 303.3h10.4v10.4h-10.4zM315.2 303.3h10.4v10.4h-10.4zM325.6 303.3h10.4v10.4h-10.4zM336.0 303.3h10.4v10.4h-10.4zM346.4 303.3h10.4v10.4h-10.4zM356.8 303.3h10.4v10.4h-10.4zM398.4 303.3h10.4v10.4h-10.4zM408.8 303.3h10.4v10.4h-10.4zM440.0 303.3h10.4v10.4h-10.4zM460.8 303.3h10.4v10.4h-10.4zM700.0 303.3h10.4v10.4h-10.4zM55.2 313.7h10.4v10.4h-10.4zM65.6 313.7h10.4v10.4h-10.4zM76.0 313.7h10.4v10.4h-10.4zM242.4 313.7h10.4v10.4h-10.4zM273.6 313.7h10.4v10.4h-10.4zM284.0 313.7h10.4v10.4h-10.4zM294.4 313.7h10.4v10.4h-10.4zM336.0 313.7h10.4v10.4h-10.4zM346.4 313.7h10.4v10.4h-10.4zM356.8 313.7h10.4v10.4h-10.4zM367.2 313.7h10.4v10.4h-10.4zM377.6 313.7h10.4v10.4h-10.4zM419.2 313.7h10.4v10.4h-10.4zM440.0 313.7h10.4v10.4h-10.4zM679.2 313.7h10.4v10.4h-10.4zM86.4 324.1h10.4v10.4h-10.4zM107.2 324.1h10.4v10.4h-10.4zM117.6 324.1h10.4v10.4h-10.4zM128.0 324.1h10.4v10.4h-10.4zM200.8 324.1h10.4v10.4h-10.4zM273.6 324.1h10.4v10.4h-10.4zM336.0 324.1h10.4v10.4h-10.4zM346.4 324.1h10.4v10.4h-10.4zM356.8 324.1h10.4v10.4h-10.4zM388.0 324.1h10.4v10.4h-10.4zM419.2 324.1h10.4v10.4h-10.4zM460.8 324.1h10.4v10.4h-10.4zM86.4 334.5h10.4v10.4h-10.4zM96.8 334.5h10.4v10.4h-10.4zM159.2 334.5h10.4v10.4h-10.4zM180.0 334.5h10.4v10.4h-10.4zM221.6 334.5h10.4v10.4h-10.4zM315.2 334.5h10.4v10.4h-10.4zM356.8 334.5h10.4v10.4h-10.4zM398.4 334.5h10.4v10.4h-10.4zM419.2 334.5h10.4v10.4h-10.4zM450.4 334.5h10.4v10.4h-10.4zM689.6 334.5h10.4v10.4h-10.4zM86.4 344.9h10.4v10.4h-10.4zM96.8 344.9h10.4v10.4h-10.4zM117.6 344.9h10.4v10.4h-10.4zM128.0 344.9h10.4v10.4h-10.4zM138.4 344.9h10.4v10.4h-10.4zM190.4 344.9h10.4v10.4h-10.4zM211.2 344.9h10.4v10.4h-10.4zM263.2 344.9h10.4v10.4h-10.4zM273.6 344.9h10.4v10.4h-10.4zM284.0 344.9h10.4v10.4h-10.4zM294.4 344.9h10.4v10.4h-10.4zM398.4 344.9h10.4v10.4h-10.4zM429.6 344.9h10.4v10.4h-10.4zM440.0 344.9h10.4v10.4h-10.4zM450.4 344.9h10.4v10.4h-10.4zM460.8 344.9h10.4v10.4h-10.4zM107.2 355.3h10.4v10.4h-10.4zM148.8 355.3h10.4v10.4h-10.4zM159.2 355.3h10.4v10.4h-10.4zM169.6 355.3h10.4v10.4h-10.4zM180.0 355.3h10.4v10.4h-10.4zM200.8 355.3h10.4v10.4h-10.4zM211.2 355.3h10.4v10.4h-10.4zM273.6 355.3h10.4v10.4h-10.4zM325.6 355.3h10.4v10.4h-10.4zM346.4 355.3h10.4v10.4h-10.4zM367.2 355.3h10.4v10.4h-10.4zM388.0 355.3h10.4v10.4h-10.4zM408.8 355.3h10.4v10.4h-10.4zM419.2 355.3h10.4v10.4h-10.4zM450.4 355.3h10.4v10.4h-10.4zM460.8 355.3h10.4v10.4h-10.4zM107.2 365.7h10.4v10.4h-10.4zM117.6 365.7h10.4v10.4h-10.4zM148.8 365.7h10.4v10.4h-10.4zM200.8 365.7h10.4v10.4h-10.4zM221.6 365.7h10.4v10.4h-10.4zM232.0 365.7h10.4v10.4h-10.4zM304.8 365.7h10.4v10.4h-10.4zM315.2 365.7h10.4v10.4h-10.4zM325.6 365.7h10.4v10.4h-10.4zM336.0 365.7h10.4v10.4h-10.4zM367.2 365.7h10.4v10.4h-10.4zM408.8 365.7h10.4v10.4h-10.4zM689.6 365.7h10.4v10.4h-10.4zM96.8 376.1h10.4v10.4h-10.4zM138.4 376.1h10.4v10.4h-10.4zM148.8 376.1h10.4v10.4h-10.4zM180.0 376.1h10.4v10.4h-10.4zM200.8 376.1h10.4v10.4h-10.4zM211.2 376.1h10.4v10.4h-10.4zM221.6 376.1h10.4v10.4h-10.4zM232.0 376.1h10.4v10.4h-10.4zM242.4 376.1h10.4v10.4h-10.4zM252.8 376.1h10.4v10.4h-10.4zM263.2 376.1h10.4v10.4h-10.4zM284.0 376.1h10.4v10.4h-10.4zM294.4 376.1h10.4v10.4h-10.4zM315.2 376.1h10.4v10.4h-10.4zM325.6 376.1h10.4v10.4h-10.4zM336.0 376.1h10.4v10.4h-10.4zM346.4 376.1h10.4v10.4h-10.4zM377.6 376.1h10.4v10.4h-10.4zM388.0 376.1h10.4v10.4h-10.4zM398.4 376.1h10.4v10.4h-10.4zM419.2 376.1h10.4v10.4h-10.4zM429.6 376.1h10.4v10.4h-10.4zM460.8 376.1h10.4v10.4h-10.4zM55.2 386.5h10.4v10.4h-10.4zM65.6 386.5h10.4v10.4h-10.4zM76.0 386.5h10.4v10.4h-10.4zM96.8 386.5h10.4v10.4h-10.4zM107.2 386.5h10.4v10.4h-10.4zM128.0 386.5h10.4v10.4h-10.4zM138.4 386.5h10.4v10.4h-10.4zM211.2 386.5h10.4v10.4h-10.4zM232.0 386.5h10.4v10.4h-10.4zM284.0 386.5h10.4v10.4h-10.4zM304.8 386.5h10.4v10.4h-10.4zM356.8 386.5h10.4v10.4h-10.4zM367.2 386.5h10.4v10.4h-10.4zM377.6 386.5h10.4v10.4h-10.4zM388.0 386.5h10.4v10.4h-10.4zM419.2 386.5h10.4v10.4h-10.4zM440.0 386.5h10.4v10.4h-10.4zM450.4 386.5h10.4v10.4h-10.4zM689.6 386.5h10.4v10.4h-10.4zM55.2 396.9h10.4v10.4h-10.4zM65.6 396.9h10.4v10.4h-10.4zM76.0 396.9h10.4v10.4h-10.4zM138.4 396.9h10.4v10.4h-10.4zM148.8 396.9h10.4v10.4h-10.4zM169.6 396.9h10.4v10.4h-10.4zM221.6 396.9h10.4v10.4h-10.4zM263.2 396.9h10.4v10.4h-10.4zM284.0 396.9h10.4v10.4h-10.4zM325.6 396.9h10.4v10.4h-10.4zM346.4 396.9h10.4v10.4h-10.4zM367.2 396.9h10.4v10.4h-10.4zM398.4 396.9h10.4v10.4h-10.4zM408.8 396.9h10.4v10.4h-10.4zM429.6 396.9h10.4v10.4h-10.4zM34.4 407.3h10.4v10.4h-10.4zM44.8 407.3h10.4v10.4h-10.4zM55.2 407.3h10.4v10.4h-10.4zM65.6 407.3h10.4v10.4h-10.4zM76.0 407.3h10.4v10.4h-10.4zM86.4 407.3h10.4v10.4h-10.4zM96.8 407.3h10.4v10.4h-10.4zM107.2 407.3h10.4v10.4h-10.4zM117.6 407.3h10.4v10.4h-10.4zM128.0 407.3h10.4v10.4h-10.4zM159.2 407.3h10.4v10.4h-10.4zM169.6 407.3h10.4v10.4h-10.4zM273.6 407.3h10.4v10.4h-10.4zM284.0 407.3h10.4v10.4h-10.4zM304.8 407.3h10.4v10.4h-10.4zM315.2 407.3h10.4v10.4h-10.4zM346.4 407.3h10.4v10.4h-10.4zM377.6 407.3h10.4v10.4h-10.4zM388.0 407.3h10.4v10.4h-10.4zM398.4 407.3h10.4v10.4h-10.4zM689.6 407.3h10.4v10.4h-10.4zM24.0 417.7h10.4v10.4h-10.4zM34.4 417.7h10.4v10.4h-10.4zM44.8 417.7h10.4v10.4h-10.4zM55.2 417.7h10.4v10.4h-10.4zM65.6 417.7h10.4v10.4h-10.4zM76.0 417.7h10.4v10.4h-10.4zM86.4 417.7h10.4v10.4h-10.4zM107.2 417.7h10.4v10.4h-10.4zM117.6 417.7h10.4v10.4h-10.4zM148.8 417.7h10.4v10.4h-10.4zM159.2 417.7h10.4v10.4h-10.4zM180.0 417.7h10.4v10.4h-10.4zM200.8 417.7h10.4v10.4h-10.4zM211.2 417.7h10.4v10.4h-10.4zM242.4 417.7h10.4v10.4h-10.4zM252.8 417.7h10.4v10.4h-10.4zM273.6 417.7h10.4v10.4h-10.4zM284.0 417.7h10.4v10.4h-10.4zM315.2 417.7h10.4v10.4h-10.4zM325.6 417.7h10.4v10.4h-10.4zM346.4 417.7h10.4v10.4h-10.4zM377.6 417.7h10.4v10.4h-10.4zM388.0 417.7h10.4v10.4h-10.4zM398.4 417.7h10.4v10.4h-10.4zM24.0 428.1h10.4v10.4h-10.4zM34.4 428.1h10.4v10.4h-10.4zM44.8 428.1h10.4v10.4h-10.4zM55.2 428.1h10.4v10.4h-10.4zM65.6 428.1h10.4v10.4h-10.4zM76.0 428.1h10.4v10.4h-10.4zM96.8 428.1h10.4v10.4h-10.4zM169.6 428.1h10.4v10.4h-10.4zM190.4 428.1h10.4v10.4h-10.4zM263.2 428.1h10.4v10.4h-10.4zM294.4 428.1h10.4v10.4h-10.4zM304.8 428.1h10.4v10.4h-10.4zM315.2 428.1h10.4v10.4h-10.4zM325.6 428.1h10.4v10.4h-10.4zM367.2 428.1h10.4v10.4h-10.4zM377.6 428.1h10.4v10.4h-10.4zM398.4 428.1h10.4v10.4h-10.4zM13.6 438.5h10.4v10.4h-10.4zM24.0 438.5h10.4v10.4h-10.4zM34.4 438.5h10.4v10.4h-10.4zM44.8 438.5h10.4v10.4h-10.4zM55.2 438.5h10.4v10.4h-10.4zM65.6 438.5h10.4v10.4h-10.4zM76.0 438.5h10.4v10.4h-10.4zM86.4 438.5h10.4v10.4h-10.4zM96.8 438.5h10.4v10.4h-10.4zM107.2 438.5h10.4v10.4h-10.4zM138.4 438.5h10.4v10.4h-10.4zM148.8 438.5h10.4v10.4h-10.4zM211.2 438.5h10.4v10.4h-10.4zM242.4 438.5h10.4v10.4h-10.4zM252.8 438.5h10.4v10.4h-10.4zM263.2 438.5h10.4v10.4h-10.4zM273.6 438.5h10.4v10.4h-10.4zM294.4 438.5h10.4v10.4h-10.4zM304.8 438.5h10.4v10.4h-10.4zM315.2 438.5h10.4v10.4h-10.4zM325.6 438.5h10.4v10.4h-10.4zM367.2 438.5h10.4v10.4h-10.4zM377.6 438.5h10.4v10.4h-10.4zM398.4 438.5h10.4v10.4h-10.4zM408.8 438.5h10.4v10.4h-10.4zM13.6 448.9h10.4v10.4h-10.4zM24.0 448.9h10.4v10.4h-10.4zM34.4 448.9h10.4v10.4h-10.4zM44.8 448.9h10.4v10.4h-10.4zM55.2 448.9h10.4v10.4h-10.4zM65.6 448.9h10.4v10.4h-10.4zM76.0 448.9h10.4v10.4h-10.4zM117.6 448.9h10.4v10.4h-10.4zM148.8 448.9h10.4v10.4h-10.4zM211.2 448.9h10.4v10.4h-10.4zM232.0 448.9h10.4v10.4h-10.4zM252.8 448.9h10.4v10.4h-10.4zM263.2 448.9h10.4v10.4h-10.4zM273.6 448.9h10.4v10.4h-10.4zM294.4 448.9h10.4v10.4h-10.4zM315.2 448.9h10.4v10.4h-10.4zM367.2 448.9h10.4v10.4h-10.4zM388.0 448.9h10.4v10.4h-10.4zM606.4 448.9h10.4v10.4h-10.4zM159.2 459.3h10.4v10.4h-10.4zM180.0 459.3h10.4v10.4h-10.4zM211.2 459.3h10.4v10.4h-10.4zM242.4 459.3h10.4v10.4h-10.4zM252.8 459.3h10.4v10.4h-10.4zM263.2 459.3h10.4v10.4h-10.4zM273.6 459.3h10.4v10.4h-10.4zM284.0 459.3h10.4v10.4h-10.4zM304.8 459.3h10.4v10.4h-10.4zM315.2 459.3h10.4v10.4h-10.4zM336.0 459.3h10.4v10.4h-10.4zM377.6 459.3h10.4v10.4h-10.4zM408.8 459.3h10.4v10.4h-10.4zM606.4 459.3h10.4v10.4h-10.4zM34.4 469.7h10.4v10.4h-10.4zM169.6 469.7h10.4v10.4h-10.4zM190.4 469.7h10.4v10.4h-10.4zM221.6 469.7h10.4v10.4h-10.4zM242.4 469.7h10.4v10.4h-10.4zM263.2 469.7h10.4v10.4h-10.4zM294.4 469.7h10.4v10.4h-10.4zM367.2 469.7h10.4v10.4h-10.4zM388.0 469.7h10.4v10.4h-10.4zM408.8 469.7h10.4v10.4h-10.4zM596.0 469.7h10.4v10.4h-10.4zM34.4 480.1h10.4v10.4h-10.4zM159.2 480.1h10.4v10.4h-10.4zM169.6 480.1h10.4v10.4h-10.4zM180.0 480.1h10.4v10.4h-10.4zM190.4 480.1h10.4v10.4h-10.4zM200.8 480.1h10.4v10.4h-10.4zM263.2 480.1h10.4v10.4h-10.4zM294.4 480.1h10.4v10.4h-10.4zM315.2 480.1h10.4v10.4h-10.4zM356.8 480.1h10.4v10.4h-10.4zM367.2 480.1h10.4v10.4h-10.4zM388.0 480.1h10.4v10.4h-10.4zM596.0 480.1h10.4v10.4h-10.4zM616.8 480.1h10.4v10.4h-10.4zM-7.2 490.5h10.4v10.4h-10.4zM13.6 490.5h10.4v10.4h-10.4zM44.8 490.5h10.4v10.4h-10.4zM55.2 490.5h10.4v10.4h-10.4zM65.6 490.5h10.4v10.4h-10.4zM169.6 490.5h10.4v10.4h-10.4zM252.8 490.5h10.4v10.4h-10.4zM263.2 490.5h10.4v10.4h-10.4zM294.4 490.5h10.4v10.4h-10.4zM304.8 490.5h10.4v10.4h-10.4zM315.2 490.5h10.4v10.4h-10.4zM13.6 500.9h10.4v10.4h-10.4zM55.2 500.9h10.4v10.4h-10.4zM242.4 500.9h10.4v10.4h-10.4zM252.8 500.9h10.4v10.4h-10.4zM263.2 500.9h10.4v10.4h-10.4zM273.6 500.9h10.4v10.4h-10.4zM294.4 500.9h10.4v10.4h-10.4zM304.8 500.9h10.4v10.4h-10.4zM315.2 500.9h10.4v10.4h-10.4zM606.4 500.9h10.4v10.4h-10.4zM-7.2 511.3h10.4v10.4h-10.4zM3.2 511.3h10.4v10.4h-10.4zM13.6 511.3h10.4v10.4h-10.4zM65.6 511.3h10.4v10.4h-10.4zM159.2 511.3h10.4v10.4h-10.4zM169.6 511.3h10.4v10.4h-10.4zM180.0 511.3h10.4v10.4h-10.4zM190.4 511.3h10.4v10.4h-10.4zM200.8 511.3h10.4v10.4h-10.4zM346.4 511.3h10.4v10.4h-10.4zM356.8 511.3h10.4v10.4h-10.4zM-7.2 521.7h10.4v10.4h-10.4zM3.2 521.7h10.4v10.4h-10.4zM65.6 521.7h10.4v10.4h-10.4zM346.4 521.7h10.4v10.4h-10.4zM356.8 521.7h10.4v10.4h-10.4zM606.4 521.7h10.4v10.4h-10.4zM616.8 521.7h10.4v10.4h-10.4zM24.0 542.5h10.4v10.4h-10.4zM44.8 542.5h10.4v10.4h-10.4zM606.4 542.5h10.4v10.4h-10.4zM24.0 552.9h10.4v10.4h-10.4zM55.2 552.9h10.4v10.4h-10.4zM44.8 563.3h10.4v10.4h-10.4zM221.6 573.7h10.4v10.4h-10.4zM263.2 573.7h10.4v10.4h-10.4zM294.4 573.7h10.4v10.4h-10.4zM606.4 573.7h10.4v10.4h-10.4zM284.0 584.1h10.4v10.4h-10.4zM304.8 584.1h10.4v10.4h-10.4zM616.8 584.1h10.4v10.4h-10.4zM616.8 604.9h10.4v10.4h-10.4zM616.8 615.3h10.4v10.4h-10.4zM596.0 625.7h10.4v10.4h-10.4zM596.0 636.1h10.4v10.4h-10.4zM616.8 636.1h10.4v10.4h-10.4zM606.4 646.5h10.4v10.4h-10.4z" fill="#141414"/><path d="M232.0 -1h10.4v13.1h-10.4zM242.4 -1h10.4v13.1h-10.4zM502.4 -1h10.4v13.1h-10.4zM200.8 12.1h10.4v10.4h-10.4zM211.2 12.1h10.4v10.4h-10.4zM232.0 12.1h10.4v10.4h-10.4zM242.4 12.1h10.4v10.4h-10.4zM502.4 12.1h10.4v10.4h-10.4zM533.6 12.1h10.4v10.4h-10.4zM211.2 22.5h10.4v10.4h-10.4zM242.4 22.5h10.4v10.4h-10.4zM512.8 22.5h10.4v10.4h-10.4zM523.2 22.5h10.4v10.4h-10.4zM533.6 22.5h10.4v10.4h-10.4zM232.0 32.9h10.4v10.4h-10.4zM242.4 32.9h10.4v10.4h-10.4zM450.4 32.9h10.4v10.4h-10.4zM460.8 32.9h10.4v10.4h-10.4zM502.4 32.9h10.4v10.4h-10.4zM512.8 32.9h10.4v10.4h-10.4zM523.2 32.9h10.4v10.4h-10.4zM533.6 32.9h10.4v10.4h-10.4zM221.6 43.3h10.4v10.4h-10.4zM502.4 43.3h10.4v10.4h-10.4zM512.8 43.3h10.4v10.4h-10.4zM523.2 43.3h10.4v10.4h-10.4zM533.6 43.3h10.4v10.4h-10.4zM263.2 53.7h10.4v10.4h-10.4zM544.0 53.7h10.4v10.4h-10.4zM554.4 53.7h10.4v10.4h-10.4zM596.0 53.7h10.4v10.4h-10.4zM232.0 64.1h10.4v10.4h-10.4zM242.4 64.1h10.4v10.4h-10.4zM252.8 64.1h10.4v10.4h-10.4zM315.2 64.1h10.4v10.4h-10.4zM325.6 64.1h10.4v10.4h-10.4zM336.0 64.1h10.4v10.4h-10.4zM419.2 64.1h10.4v10.4h-10.4zM502.4 64.1h10.4v10.4h-10.4zM596.0 64.1h10.4v10.4h-10.4zM273.6 74.5h10.4v10.4h-10.4zM346.4 74.5h10.4v10.4h-10.4zM356.8 74.5h10.4v10.4h-10.4zM398.4 74.5h10.4v10.4h-10.4zM481.6 74.5h10.4v10.4h-10.4zM492.0 74.5h10.4v10.4h-10.4zM502.4 74.5h10.4v10.4h-10.4zM523.2 74.5h10.4v10.4h-10.4zM533.6 74.5h10.4v10.4h-10.4zM544.0 74.5h10.4v10.4h-10.4zM606.4 74.5h10.4v10.4h-10.4zM616.8 74.5h10.4v10.4h-10.4zM367.2 84.9h10.4v10.4h-10.4zM502.4 84.9h10.4v10.4h-10.4zM512.8 84.9h10.4v10.4h-10.4zM523.2 84.9h10.4v10.4h-10.4zM533.6 84.9h10.4v10.4h-10.4zM523.2 95.3h10.4v10.4h-10.4zM533.6 95.3h10.4v10.4h-10.4zM544.0 95.3h10.4v10.4h-10.4zM564.8 95.3h10.4v10.4h-10.4zM575.2 95.3h10.4v10.4h-10.4zM523.2 105.7h10.4v10.4h-10.4zM533.6 105.7h10.4v10.4h-10.4zM544.0 105.7h10.4v10.4h-10.4zM284.0 116.1h10.4v10.4h-10.4zM388.0 116.1h10.4v10.4h-10.4zM398.4 116.1h10.4v10.4h-10.4zM523.2 116.1h10.4v10.4h-10.4zM533.6 116.1h10.4v10.4h-10.4zM544.0 116.1h10.4v10.4h-10.4zM284.0 126.5h10.4v10.4h-10.4zM388.0 126.5h10.4v10.4h-10.4zM398.4 126.5h10.4v10.4h-10.4zM523.2 126.5h10.4v10.4h-10.4zM13.6 209.7h10.4v10.4h-10.4zM24.0 209.7h10.4v10.4h-10.4zM34.4 220.1h10.4v10.4h-10.4zM44.8 240.9h10.4v10.4h-10.4zM44.8 261.7h10.4v10.4h-10.4zM44.8 272.1h10.4v10.4h-10.4zM34.4 282.5h10.4v10.4h-10.4zM44.8 282.5h10.4v10.4h-10.4zM34.4 292.9h10.4v10.4h-10.4zM44.8 292.9h10.4v10.4h-10.4zM34.4 303.3h10.4v10.4h-10.4zM44.8 303.3h10.4v10.4h-10.4zM24.0 313.7h10.4v10.4h-10.4zM34.4 313.7h10.4v10.4h-10.4zM44.8 313.7h10.4v10.4h-10.4zM65.6 324.1h10.4v10.4h-10.4zM76.0 324.1h10.4v10.4h-10.4zM44.8 334.5h10.4v10.4h-10.4zM55.2 334.5h10.4v10.4h-10.4zM65.6 334.5h10.4v10.4h-10.4zM76.0 334.5h10.4v10.4h-10.4zM34.4 344.9h10.4v10.4h-10.4zM44.8 344.9h10.4v10.4h-10.4zM55.2 344.9h10.4v10.4h-10.4zM65.6 344.9h10.4v10.4h-10.4zM76.0 344.9h10.4v10.4h-10.4zM24.0 355.3h10.4v10.4h-10.4zM34.4 355.3h10.4v10.4h-10.4zM44.8 355.3h10.4v10.4h-10.4zM55.2 355.3h10.4v10.4h-10.4zM65.6 355.3h10.4v10.4h-10.4zM76.0 355.3h10.4v10.4h-10.4zM-7.2 365.7h10.4v10.4h-10.4zM3.2 365.7h10.4v10.4h-10.4zM13.6 365.7h10.4v10.4h-10.4zM24.0 365.7h10.4v10.4h-10.4zM34.4 365.7h10.4v10.4h-10.4zM44.8 365.7h10.4v10.4h-10.4zM55.2 365.7h10.4v10.4h-10.4zM65.6 365.7h10.4v10.4h-10.4zM76.0 365.7h10.4v10.4h-10.4zM-7.2 376.1h10.4v10.4h-10.4zM3.2 376.1h10.4v10.4h-10.4zM13.6 376.1h10.4v10.4h-10.4zM24.0 376.1h10.4v10.4h-10.4zM34.4 376.1h10.4v10.4h-10.4zM44.8 376.1h10.4v10.4h-10.4zM55.2 376.1h10.4v10.4h-10.4zM65.6 376.1h10.4v10.4h-10.4zM76.0 376.1h10.4v10.4h-10.4zM-7.2 386.5h10.4v10.4h-10.4zM3.2 386.5h10.4v10.4h-10.4zM13.6 386.5h10.4v10.4h-10.4zM24.0 386.5h10.4v10.4h-10.4zM34.4 386.5h10.4v10.4h-10.4zM44.8 386.5h10.4v10.4h-10.4zM-7.2 396.9h10.4v10.4h-10.4zM3.2 396.9h10.4v10.4h-10.4zM13.6 396.9h10.4v10.4h-10.4zM24.0 396.9h10.4v10.4h-10.4zM34.4 396.9h10.4v10.4h-10.4zM44.8 396.9h10.4v10.4h-10.4zM-7.2 407.3h10.4v10.4h-10.4zM3.2 407.3h10.4v10.4h-10.4zM13.6 407.3h10.4v10.4h-10.4zM24.0 407.3h10.4v10.4h-10.4zM-7.2 417.7h10.4v10.4h-10.4zM3.2 417.7h10.4v10.4h-10.4zM13.6 417.7h10.4v10.4h-10.4zM419.2 417.7h10.4v10.4h-10.4zM429.6 417.7h10.4v10.4h-10.4zM440.0 417.7h10.4v10.4h-10.4zM450.4 417.7h10.4v10.4h-10.4zM460.8 417.7h10.4v10.4h-10.4zM471.2 417.7h10.4v10.4h-10.4zM481.6 417.7h10.4v10.4h-10.4zM-7.2 428.1h10.4v10.4h-10.4zM3.2 428.1h10.4v10.4h-10.4zM13.6 428.1h10.4v10.4h-10.4zM419.2 428.1h10.4v10.4h-10.4zM429.6 428.1h10.4v10.4h-10.4zM440.0 428.1h10.4v10.4h-10.4zM450.4 428.1h10.4v10.4h-10.4zM460.8 428.1h10.4v10.4h-10.4zM471.2 428.1h10.4v10.4h-10.4zM481.6 428.1h10.4v10.4h-10.4zM502.4 428.1h10.4v10.4h-10.4zM512.8 428.1h10.4v10.4h-10.4zM533.6 428.1h10.4v10.4h-10.4zM544.0 428.1h10.4v10.4h-10.4zM-7.2 438.5h10.4v10.4h-10.4zM3.2 438.5h10.4v10.4h-10.4zM419.2 438.5h10.4v10.4h-10.4zM429.6 438.5h10.4v10.4h-10.4zM440.0 438.5h10.4v10.4h-10.4zM450.4 438.5h10.4v10.4h-10.4zM460.8 438.5h10.4v10.4h-10.4zM471.2 438.5h10.4v10.4h-10.4zM481.6 438.5h10.4v10.4h-10.4zM492.0 438.5h10.4v10.4h-10.4zM502.4 438.5h10.4v10.4h-10.4zM512.8 438.5h10.4v10.4h-10.4zM523.2 438.5h10.4v10.4h-10.4zM533.6 438.5h10.4v10.4h-10.4zM-7.2 448.9h10.4v10.4h-10.4zM3.2 448.9h10.4v10.4h-10.4zM419.2 448.9h10.4v10.4h-10.4zM429.6 448.9h10.4v10.4h-10.4zM440.0 448.9h10.4v10.4h-10.4zM450.4 448.9h10.4v10.4h-10.4zM460.8 448.9h10.4v10.4h-10.4zM471.2 448.9h10.4v10.4h-10.4zM481.6 448.9h10.4v10.4h-10.4zM492.0 448.9h10.4v10.4h-10.4zM544.0 448.9h10.4v10.4h-10.4zM419.2 459.3h10.4v10.4h-10.4zM429.6 459.3h10.4v10.4h-10.4zM440.0 459.3h10.4v10.4h-10.4zM450.4 459.3h10.4v10.4h-10.4zM460.8 459.3h10.4v10.4h-10.4zM471.2 459.3h10.4v10.4h-10.4zM481.6 459.3h10.4v10.4h-10.4zM502.4 459.3h10.4v10.4h-10.4zM512.8 459.3h10.4v10.4h-10.4zM419.2 469.7h10.4v10.4h-10.4zM429.6 469.7h10.4v10.4h-10.4zM440.0 469.7h10.4v10.4h-10.4zM450.4 469.7h10.4v10.4h-10.4zM460.8 469.7h10.4v10.4h-10.4zM471.2 469.7h10.4v10.4h-10.4zM481.6 469.7h10.4v10.4h-10.4zM502.4 469.7h10.4v10.4h-10.4zM544.0 469.7h10.4v10.4h-10.4zM419.2 480.1h10.4v10.4h-10.4zM429.6 480.1h10.4v10.4h-10.4zM440.0 480.1h10.4v10.4h-10.4zM450.4 480.1h10.4v10.4h-10.4zM460.8 480.1h10.4v10.4h-10.4zM471.2 480.1h10.4v10.4h-10.4zM481.6 480.1h10.4v10.4h-10.4zM544.0 480.1h10.4v10.4h-10.4zM367.2 490.5h10.4v10.4h-10.4zM377.6 490.5h10.4v10.4h-10.4zM388.0 490.5h10.4v10.4h-10.4zM398.4 490.5h10.4v10.4h-10.4zM408.8 490.5h10.4v10.4h-10.4zM419.2 490.5h10.4v10.4h-10.4zM460.8 490.5h10.4v10.4h-10.4zM523.2 490.5h10.4v10.4h-10.4zM554.4 490.5h10.4v10.4h-10.4zM356.8 500.9h10.4v10.4h-10.4zM367.2 500.9h10.4v10.4h-10.4zM377.6 500.9h10.4v10.4h-10.4zM388.0 500.9h10.4v10.4h-10.4zM398.4 500.9h10.4v10.4h-10.4zM408.8 500.9h10.4v10.4h-10.4zM419.2 500.9h10.4v10.4h-10.4zM429.6 500.9h10.4v10.4h-10.4zM471.2 500.9h10.4v10.4h-10.4zM481.6 500.9h10.4v10.4h-10.4zM492.0 500.9h10.4v10.4h-10.4zM512.8 500.9h10.4v10.4h-10.4zM523.2 500.9h10.4v10.4h-10.4zM533.6 500.9h10.4v10.4h-10.4zM554.4 500.9h10.4v10.4h-10.4zM211.2 511.3h10.4v10.4h-10.4zM221.6 511.3h10.4v10.4h-10.4zM232.0 511.3h10.4v10.4h-10.4zM242.4 511.3h10.4v10.4h-10.4zM252.8 511.3h10.4v10.4h-10.4zM263.2 511.3h10.4v10.4h-10.4zM273.6 511.3h10.4v10.4h-10.4zM284.0 511.3h10.4v10.4h-10.4zM294.4 511.3h10.4v10.4h-10.4zM304.8 511.3h10.4v10.4h-10.4zM315.2 511.3h10.4v10.4h-10.4zM367.2 511.3h10.4v10.4h-10.4zM377.6 511.3h10.4v10.4h-10.4zM388.0 511.3h10.4v10.4h-10.4zM398.4 511.3h10.4v10.4h-10.4zM408.8 511.3h10.4v10.4h-10.4zM419.2 511.3h10.4v10.4h-10.4zM440.0 511.3h10.4v10.4h-10.4zM450.4 511.3h10.4v10.4h-10.4zM492.0 511.3h10.4v10.4h-10.4zM502.4 511.3h10.4v10.4h-10.4zM512.8 511.3h10.4v10.4h-10.4zM554.4 511.3h10.4v10.4h-10.4zM304.8 521.7h10.4v10.4h-10.4zM315.2 521.7h10.4v10.4h-10.4zM325.6 521.7h10.4v10.4h-10.4zM336.0 521.7h10.4v10.4h-10.4zM367.2 521.7h10.4v10.4h-10.4zM377.6 521.7h10.4v10.4h-10.4zM388.0 521.7h10.4v10.4h-10.4zM398.4 521.7h10.4v10.4h-10.4zM408.8 521.7h10.4v10.4h-10.4zM419.2 521.7h10.4v10.4h-10.4zM429.6 521.7h10.4v10.4h-10.4zM440.0 521.7h10.4v10.4h-10.4zM460.8 521.7h10.4v10.4h-10.4zM471.2 521.7h10.4v10.4h-10.4zM481.6 521.7h10.4v10.4h-10.4zM533.6 521.7h10.4v10.4h-10.4zM544.0 521.7h10.4v10.4h-10.4zM315.2 532.1h10.4v10.4h-10.4zM325.6 532.1h10.4v10.4h-10.4zM336.0 532.1h10.4v10.4h-10.4zM346.4 532.1h10.4v10.4h-10.4zM356.8 532.1h10.4v10.4h-10.4zM367.2 532.1h10.4v10.4h-10.4zM377.6 532.1h10.4v10.4h-10.4zM388.0 532.1h10.4v10.4h-10.4zM398.4 532.1h10.4v10.4h-10.4zM408.8 532.1h10.4v10.4h-10.4zM429.6 532.1h10.4v10.4h-10.4zM440.0 532.1h10.4v10.4h-10.4zM450.4 532.1h10.4v10.4h-10.4zM471.2 532.1h10.4v10.4h-10.4zM544.0 532.1h10.4v10.4h-10.4zM304.8 542.5h10.4v10.4h-10.4zM315.2 542.5h10.4v10.4h-10.4zM325.6 542.5h10.4v10.4h-10.4zM336.0 542.5h10.4v10.4h-10.4zM346.4 542.5h10.4v10.4h-10.4zM356.8 542.5h10.4v10.4h-10.4zM367.2 542.5h10.4v10.4h-10.4zM377.6 542.5h10.4v10.4h-10.4zM408.8 542.5h10.4v10.4h-10.4zM419.2 542.5h10.4v10.4h-10.4zM450.4 542.5h10.4v10.4h-10.4zM471.2 542.5h10.4v10.4h-10.4zM481.6 542.5h10.4v10.4h-10.4zM492.0 542.5h10.4v10.4h-10.4zM523.2 542.5h10.4v10.4h-10.4zM554.4 542.5h10.4v10.4h-10.4zM304.8 552.9h10.4v10.4h-10.4zM315.2 552.9h10.4v10.4h-10.4zM325.6 552.9h10.4v10.4h-10.4zM336.0 552.9h10.4v10.4h-10.4zM346.4 552.9h10.4v10.4h-10.4zM356.8 552.9h10.4v10.4h-10.4zM367.2 552.9h10.4v10.4h-10.4zM377.6 552.9h10.4v10.4h-10.4zM408.8 552.9h10.4v10.4h-10.4zM419.2 552.9h10.4v10.4h-10.4zM429.6 552.9h10.4v10.4h-10.4zM450.4 552.9h10.4v10.4h-10.4zM471.2 552.9h10.4v10.4h-10.4zM492.0 552.9h10.4v10.4h-10.4zM502.4 552.9h10.4v10.4h-10.4zM512.8 552.9h10.4v10.4h-10.4zM523.2 552.9h10.4v10.4h-10.4zM554.4 552.9h10.4v10.4h-10.4zM304.8 563.3h10.4v10.4h-10.4zM315.2 563.3h10.4v10.4h-10.4zM325.6 563.3h10.4v10.4h-10.4zM336.0 563.3h10.4v10.4h-10.4zM346.4 563.3h10.4v10.4h-10.4zM356.8 563.3h10.4v10.4h-10.4zM367.2 563.3h10.4v10.4h-10.4zM377.6 563.3h10.4v10.4h-10.4zM408.8 563.3h10.4v10.4h-10.4zM419.2 563.3h10.4v10.4h-10.4zM460.8 563.3h10.4v10.4h-10.4zM471.2 563.3h10.4v10.4h-10.4zM512.8 563.3h10.4v10.4h-10.4zM533.6 563.3h10.4v10.4h-10.4zM304.8 573.7h10.4v10.4h-10.4zM315.2 573.7h10.4v10.4h-10.4zM325.6 573.7h10.4v10.4h-10.4zM336.0 573.7h10.4v10.4h-10.4zM346.4 573.7h10.4v10.4h-10.4zM356.8 573.7h10.4v10.4h-10.4zM367.2 573.7h10.4v10.4h-10.4zM377.6 573.7h10.4v10.4h-10.4zM408.8 573.7h10.4v10.4h-10.4zM440.0 573.7h10.4v10.4h-10.4zM460.8 573.7h10.4v10.4h-10.4zM481.6 573.7h10.4v10.4h-10.4zM492.0 573.7h10.4v10.4h-10.4zM533.6 573.7h10.4v10.4h-10.4zM315.2 584.1h10.4v10.4h-10.4zM325.6 584.1h10.4v10.4h-10.4zM398.4 584.1h10.4v10.4h-10.4zM408.8 584.1h10.4v10.4h-10.4zM429.6 584.1h10.4v10.4h-10.4zM440.0 584.1h10.4v10.4h-10.4zM450.4 584.1h10.4v10.4h-10.4zM460.8 584.1h10.4v10.4h-10.4zM471.2 584.1h10.4v10.4h-10.4zM481.6 584.1h10.4v10.4h-10.4zM502.4 584.1h10.4v10.4h-10.4zM512.8 584.1h10.4v10.4h-10.4zM554.4 584.1h10.4v10.4h-10.4zM315.2 594.5h10.4v10.4h-10.4zM325.6 594.5h10.4v10.4h-10.4zM398.4 594.5h10.4v10.4h-10.4zM408.8 594.5h10.4v10.4h-10.4zM440.0 594.5h10.4v10.4h-10.4zM450.4 594.5h10.4v10.4h-10.4zM502.4 594.5h10.4v10.4h-10.4zM523.2 594.5h10.4v10.4h-10.4zM544.0 594.5h10.4v10.4h-10.4zM325.6 604.9h10.4v10.4h-10.4zM398.4 604.9h10.4v10.4h-10.4zM408.8 604.9h10.4v10.4h-10.4zM419.2 604.9h10.4v10.4h-10.4zM481.6 604.9h10.4v10.4h-10.4zM492.0 604.9h10.4v10.4h-10.4zM502.4 604.9h10.4v10.4h-10.4zM512.8 604.9h10.4v10.4h-10.4zM523.2 604.9h10.4v10.4h-10.4zM533.6 604.9h10.4v10.4h-10.4zM544.0 604.9h10.4v10.4h-10.4zM554.4 604.9h10.4v10.4h-10.4zM564.8 604.9h10.4v10.4h-10.4zM398.4 615.3h10.4v10.4h-10.4zM408.8 615.3h10.4v10.4h-10.4zM419.2 615.3h10.4v10.4h-10.4zM440.0 615.3h10.4v10.4h-10.4zM460.8 615.3h10.4v10.4h-10.4zM471.2 615.3h10.4v10.4h-10.4zM481.6 615.3h10.4v10.4h-10.4zM492.0 615.3h10.4v10.4h-10.4zM502.4 615.3h10.4v10.4h-10.4zM512.8 615.3h10.4v10.4h-10.4zM523.2 615.3h10.4v10.4h-10.4zM533.6 615.3h10.4v10.4h-10.4zM544.0 615.3h10.4v10.4h-10.4zM554.4 615.3h10.4v10.4h-10.4zM564.8 615.3h10.4v10.4h-10.4zM398.4 625.7h10.4v10.4h-10.4zM408.8 625.7h10.4v10.4h-10.4zM450.4 625.7h10.4v10.4h-10.4zM492.0 625.7h10.4v10.4h-10.4zM502.4 625.7h10.4v10.4h-10.4zM512.8 625.7h10.4v10.4h-10.4zM523.2 625.7h10.4v10.4h-10.4zM533.6 625.7h10.4v10.4h-10.4zM544.0 625.7h10.4v10.4h-10.4zM554.4 625.7h10.4v10.4h-10.4zM564.8 625.7h10.4v10.4h-10.4zM398.4 636.1h10.4v10.4h-10.4zM408.8 636.1h10.4v10.4h-10.4zM419.2 636.1h10.4v10.4h-10.4zM450.4 636.1h10.4v10.4h-10.4zM460.8 636.1h10.4v10.4h-10.4zM471.2 636.1h10.4v10.4h-10.4zM492.0 636.1h10.4v10.4h-10.4zM502.4 636.1h10.4v10.4h-10.4zM512.8 636.1h10.4v10.4h-10.4zM523.2 636.1h10.4v10.4h-10.4zM533.6 636.1h10.4v10.4h-10.4zM544.0 636.1h10.4v10.4h-10.4zM554.4 636.1h10.4v10.4h-10.4zM564.8 636.1h10.4v10.4h-10.4zM398.4 646.5h10.4v10.4h-10.4zM408.8 646.5h10.4v10.4h-10.4zM450.4 646.5h10.4v10.4h-10.4zM471.2 646.5h10.4v10.4h-10.4zM492.0 646.5h10.4v10.4h-10.4zM502.4 646.5h10.4v10.4h-10.4zM512.8 646.5h10.4v10.4h-10.4zM523.2 646.5h10.4v10.4h-10.4zM533.6 646.5h10.4v10.4h-10.4zM544.0 646.5h10.4v10.4h-10.4zM554.4 646.5h10.4v10.4h-10.4zM564.8 646.5h10.4v10.4h-10.4z" fill="#1a1a1a"/><path d="M263.2 -1h10.4v13.1h-10.4zM273.6 -1h10.4v13.1h-10.4zM284.0 -1h10.4v13.1h-10.4zM294.4 -1h10.4v13.1h-10.4zM304.8 -1h10.4v13.1h-10.4zM346.4 -1h10.4v13.1h-10.4zM367.2 -1h10.4v13.1h-10.4zM377.6 -1h10.4v13.1h-10.4zM419.2 -1h10.4v13.1h-10.4zM429.6 -1h10.4v13.1h-10.4zM440.0 -1h10.4v13.1h-10.4zM263.2 12.1h10.4v10.4h-10.4zM273.6 12.1h10.4v10.4h-10.4zM367.2 12.1h10.4v10.4h-10.4zM429.6 12.1h10.4v10.4h-10.4zM450.4 12.1h10.4v10.4h-10.4zM336.0 22.5h10.4v10.4h-10.4zM346.4 22.5h10.4v10.4h-10.4zM367.2 22.5h10.4v10.4h-10.4zM377.6 22.5h10.4v10.4h-10.4zM336.0 32.9h10.4v10.4h-10.4zM367.2 32.9h10.4v10.4h-10.4zM429.6 32.9h10.4v10.4h-10.4zM284.0 43.3h10.4v10.4h-10.4zM336.0 43.3h10.4v10.4h-10.4zM367.2 43.3h10.4v10.4h-10.4zM408.8 43.3h10.4v10.4h-10.4zM304.8 53.7h10.4v10.4h-10.4zM356.8 53.7h10.4v10.4h-10.4zM367.2 53.7h10.4v10.4h-10.4zM398.4 53.7h10.4v10.4h-10.4zM450.4 53.7h10.4v10.4h-10.4zM367.2 64.1h10.4v10.4h-10.4zM398.4 64.1h10.4v10.4h-10.4zM492.0 64.1h10.4v10.4h-10.4zM252.8 84.9h10.4v10.4h-10.4zM336.0 84.9h10.4v10.4h-10.4zM346.4 84.9h10.4v10.4h-10.4zM419.2 84.9h10.4v10.4h-10.4zM356.8 95.3h10.4v10.4h-10.4zM398.4 95.3h10.4v10.4h-10.4zM408.8 95.3h10.4v10.4h-10.4zM242.4 105.7h10.4v10.4h-10.4zM252.8 105.7h10.4v10.4h-10.4zM263.2 105.7h10.4v10.4h-10.4zM294.4 105.7h10.4v10.4h-10.4zM367.2 105.7h10.4v10.4h-10.4zM408.8 105.7h10.4v10.4h-10.4zM315.2 126.5h10.4v10.4h-10.4zM325.6 126.5h10.4v10.4h-10.4zM336.0 126.5h10.4v10.4h-10.4zM346.4 126.5h10.4v10.4h-10.4zM367.2 126.5h10.4v10.4h-10.4zM-7.2 230.5h10.4v10.4h-10.4zM3.2 230.5h10.4v10.4h-10.4zM24.0 230.5h10.4v10.4h-10.4zM-7.2 240.9h10.4v10.4h-10.4zM3.2 240.9h10.4v10.4h-10.4zM13.6 240.9h10.4v10.4h-10.4zM-7.2 251.3h10.4v10.4h-10.4zM13.6 251.3h10.4v10.4h-10.4zM24.0 251.3h10.4v10.4h-10.4zM34.4 251.3h10.4v10.4h-10.4zM-7.2 261.7h10.4v10.4h-10.4zM3.2 261.7h10.4v10.4h-10.4zM13.6 261.7h10.4v10.4h-10.4zM-7.2 292.9h10.4v10.4h-10.4zM3.2 292.9h10.4v10.4h-10.4zM13.6 292.9h10.4v10.4h-10.4zM-7.2 303.3h10.4v10.4h-10.4zM3.2 303.3h10.4v10.4h-10.4zM304.8 625.7h10.4v10.4h-10.4zM304.8 636.1h10.4v10.4h-10.4zM315.2 636.1h10.4v10.4h-10.4zM304.8 646.5h10.4v10.4h-10.4zM315.2 646.5h10.4v10.4h-10.4z" fill="#2c2c2c"/><path d="M315.2 -1h10.4v13.1h-10.4zM304.8 12.1h10.4v10.4h-10.4zM336.0 12.1h10.4v10.4h-10.4zM273.6 22.5h10.4v10.4h-10.4zM304.8 22.5h10.4v10.4h-10.4zM315.2 22.5h10.4v10.4h-10.4zM325.6 22.5h10.4v10.4h-10.4zM388.0 22.5h10.4v10.4h-10.4zM273.6 32.9h10.4v10.4h-10.4zM294.4 32.9h10.4v10.4h-10.4zM304.8 32.9h10.4v10.4h-10.4zM325.6 32.9h10.4v10.4h-10.4zM315.2 43.3h10.4v10.4h-10.4zM242.4 95.3h10.4v10.4h-10.4zM252.8 95.3h10.4v10.4h-10.4zM263.2 95.3h10.4v10.4h-10.4zM315.2 95.3h10.4v10.4h-10.4zM336.0 105.7h10.4v10.4h-10.4zM346.4 105.7h10.4v10.4h-10.4zM315.2 116.1h10.4v10.4h-10.4zM325.6 116.1h10.4v10.4h-10.4zM336.0 116.1h10.4v10.4h-10.4z" fill="#383838"/><path d="M325.6 -1h10.4v13.1h-10.4zM398.4 12.1h10.4v10.4h-10.4zM284.0 32.9h10.4v10.4h-10.4zM398.4 32.9h10.4v10.4h-10.4z" fill="#444444"/><path d="M336.0 -1h10.4v13.1h-10.4zM450.4 -1h10.4v13.1h-10.4zM284.0 12.1h10.4v10.4h-10.4zM294.4 12.1h10.4v10.4h-10.4zM346.4 12.1h10.4v10.4h-10.4zM419.2 12.1h10.4v10.4h-10.4zM263.2 22.5h10.4v10.4h-10.4zM294.4 22.5h10.4v10.4h-10.4zM408.8 22.5h10.4v10.4h-10.4zM429.6 22.5h10.4v10.4h-10.4zM440.0 22.5h10.4v10.4h-10.4zM263.2 32.9h10.4v10.4h-10.4zM315.2 32.9h10.4v10.4h-10.4zM377.6 32.9h10.4v10.4h-10.4zM232.0 43.3h10.4v10.4h-10.4zM263.2 43.3h10.4v10.4h-10.4zM273.6 43.3h10.4v10.4h-10.4zM294.4 43.3h10.4v10.4h-10.4zM304.8 43.3h10.4v10.4h-10.4zM325.6 43.3h10.4v10.4h-10.4zM377.6 43.3h10.4v10.4h-10.4zM388.0 43.3h10.4v10.4h-10.4zM398.4 43.3h10.4v10.4h-10.4zM232.0 53.7h10.4v10.4h-10.4zM242.4 53.7h10.4v10.4h-10.4zM315.2 53.7h10.4v10.4h-10.4zM325.6 53.7h10.4v10.4h-10.4zM377.6 53.7h10.4v10.4h-10.4zM388.0 53.7h10.4v10.4h-10.4zM377.6 64.1h10.4v10.4h-10.4zM388.0 64.1h10.4v10.4h-10.4zM284.0 84.9h10.4v10.4h-10.4zM294.4 84.9h10.4v10.4h-10.4zM304.8 84.9h10.4v10.4h-10.4zM315.2 84.9h10.4v10.4h-10.4zM325.6 84.9h10.4v10.4h-10.4zM284.0 95.3h10.4v10.4h-10.4zM294.4 95.3h10.4v10.4h-10.4zM304.8 95.3h10.4v10.4h-10.4zM325.6 95.3h10.4v10.4h-10.4zM336.0 95.3h10.4v10.4h-10.4zM346.4 95.3h10.4v10.4h-10.4zM325.6 105.7h10.4v10.4h-10.4zM356.8 105.7h10.4v10.4h-10.4zM294.4 116.1h10.4v10.4h-10.4zM304.8 116.1h10.4v10.4h-10.4zM356.8 116.1h10.4v10.4h-10.4zM367.2 116.1h10.4v10.4h-10.4zM24.0 240.9h10.4v10.4h-10.4zM3.2 251.3h10.4v10.4h-10.4z" fill="#323232"/><path d="M356.8 -1h10.4v13.1h-10.4zM460.8 -1h10.4v13.1h-10.4zM356.8 12.1h10.4v10.4h-10.4zM377.6 12.1h10.4v10.4h-10.4zM388.0 12.1h10.4v10.4h-10.4zM440.0 12.1h10.4v10.4h-10.4zM460.8 12.1h10.4v10.4h-10.4zM471.2 12.1h10.4v10.4h-10.4zM252.8 22.5h10.4v10.4h-10.4zM356.8 22.5h10.4v10.4h-10.4zM460.8 22.5h10.4v10.4h-10.4zM471.2 22.5h10.4v10.4h-10.4zM252.8 32.9h10.4v10.4h-10.4zM346.4 32.9h10.4v10.4h-10.4zM356.8 32.9h10.4v10.4h-10.4zM408.8 32.9h10.4v10.4h-10.4zM440.0 32.9h10.4v10.4h-10.4zM211.2 43.3h10.4v10.4h-10.4zM346.4 43.3h10.4v10.4h-10.4zM356.8 43.3h10.4v10.4h-10.4zM419.2 43.3h10.4v10.4h-10.4zM429.6 43.3h10.4v10.4h-10.4zM450.4 43.3h10.4v10.4h-10.4zM460.8 43.3h10.4v10.4h-10.4zM481.6 43.3h10.4v10.4h-10.4zM284.0 53.7h10.4v10.4h-10.4zM294.4 53.7h10.4v10.4h-10.4zM336.0 53.7h10.4v10.4h-10.4zM346.4 53.7h10.4v10.4h-10.4zM408.8 53.7h10.4v10.4h-10.4zM419.2 53.7h10.4v10.4h-10.4zM429.6 53.7h10.4v10.4h-10.4zM440.0 53.7h10.4v10.4h-10.4zM460.8 53.7h10.4v10.4h-10.4zM346.4 64.1h10.4v10.4h-10.4zM356.8 64.1h10.4v10.4h-10.4zM429.6 64.1h10.4v10.4h-10.4zM440.0 64.1h10.4v10.4h-10.4zM367.2 74.5h10.4v10.4h-10.4zM377.6 74.5h10.4v10.4h-10.4zM512.8 74.5h10.4v10.4h-10.4zM263.2 84.9h10.4v10.4h-10.4zM273.6 84.9h10.4v10.4h-10.4zM356.8 84.9h10.4v10.4h-10.4zM398.4 84.9h10.4v10.4h-10.4zM408.8 84.9h10.4v10.4h-10.4zM429.6 84.9h10.4v10.4h-10.4zM273.6 95.3h10.4v10.4h-10.4zM367.2 95.3h10.4v10.4h-10.4zM388.0 95.3h10.4v10.4h-10.4zM419.2 95.3h10.4v10.4h-10.4zM450.4 95.3h10.4v10.4h-10.4zM273.6 105.7h10.4v10.4h-10.4zM284.0 105.7h10.4v10.4h-10.4zM304.8 105.7h10.4v10.4h-10.4zM315.2 105.7h10.4v10.4h-10.4zM377.6 105.7h10.4v10.4h-10.4zM398.4 105.7h10.4v10.4h-10.4zM419.2 105.7h10.4v10.4h-10.4zM377.6 116.1h10.4v10.4h-10.4zM294.4 126.5h10.4v10.4h-10.4zM304.8 126.5h10.4v10.4h-10.4zM356.8 126.5h10.4v10.4h-10.4zM377.6 126.5h10.4v10.4h-10.4zM-7.2 220.1h10.4v10.4h-10.4zM3.2 220.1h10.4v10.4h-10.4zM13.6 220.1h10.4v10.4h-10.4zM13.6 230.5h10.4v10.4h-10.4zM34.4 240.9h10.4v10.4h-10.4zM24.0 261.7h10.4v10.4h-10.4zM34.4 261.7h10.4v10.4h-10.4zM-7.2 272.1h10.4v10.4h-10.4zM3.2 272.1h10.4v10.4h-10.4zM13.6 272.1h10.4v10.4h-10.4zM-7.2 282.5h10.4v10.4h-10.4zM3.2 282.5h10.4v10.4h-10.4zM13.6 303.3h10.4v10.4h-10.4zM-7.2 313.7h10.4v10.4h-10.4zM3.2 313.7h10.4v10.4h-10.4zM-7.2 324.1h10.4v10.4h-10.4zM3.2 324.1h10.4v10.4h-10.4zM325.6 490.5h10.4v10.4h-10.4zM336.0 490.5h10.4v10.4h-10.4zM346.4 500.9h10.4v10.4h-10.4zM232.0 594.5h10.4v10.4h-10.4zM242.4 615.3h10.4v10.4h-10.4zM304.8 615.3h10.4v10.4h-10.4zM315.2 625.7h10.4v10.4h-10.4zM325.6 636.1h10.4v10.4h-10.4zM336.0 636.1h10.4v10.4h-10.4zM367.2 636.1h10.4v10.4h-10.4zM377.6 636.1h10.4v10.4h-10.4zM325.6 646.5h10.4v10.4h-10.4zM336.0 646.5h10.4v10.4h-10.4zM367.2 646.5h10.4v10.4h-10.4zM377.6 646.5h10.4v10.4h-10.4z" fill="#262626"/><path d="M668.8 -1h10.4v13.1h-10.4zM679.2 -1h10.4v13.1h-10.4zM710.4 -1h10.4v13.1h-10.4zM731.2 -1h10.4v13.1h-10.4zM772.8 -1h10.4v13.1h-10.4zM793.6 -1h10.4v13.1h-10.4zM804.0 -1h10.4v13.1h-10.4zM648.0 12.1h10.4v10.4h-10.4zM658.4 12.1h10.4v10.4h-10.4zM668.8 12.1h10.4v10.4h-10.4zM679.2 12.1h10.4v10.4h-10.4zM689.6 12.1h10.4v10.4h-10.4zM700.0 12.1h10.4v10.4h-10.4zM720.8 12.1h10.4v10.4h-10.4zM752.0 12.1h10.4v10.4h-10.4zM762.4 12.1h10.4v10.4h-10.4zM772.8 12.1h10.4v10.4h-10.4zM783.2 12.1h10.4v10.4h-10.4zM804.0 12.1h10.4v10.4h-10.4zM814.4 12.1h10.4v10.4h-10.4zM648.0 22.5h10.4v10.4h-10.4zM658.4 22.5h10.4v10.4h-10.4zM668.8 22.5h10.4v10.4h-10.4zM689.6 22.5h10.4v10.4h-10.4zM700.0 22.5h10.4v10.4h-10.4zM710.4 22.5h10.4v10.4h-10.4zM720.8 22.5h10.4v10.4h-10.4zM762.4 22.5h10.4v10.4h-10.4zM772.8 22.5h10.4v10.4h-10.4zM783.2 22.5h10.4v10.4h-10.4zM793.6 22.5h10.4v10.4h-10.4zM637.6 32.9h10.4v10.4h-10.4zM648.0 32.9h10.4v10.4h-10.4zM658.4 32.9h10.4v10.4h-10.4zM668.8 32.9h10.4v10.4h-10.4zM689.6 32.9h10.4v10.4h-10.4zM772.8 32.9h10.4v10.4h-10.4zM668.8 43.3h10.4v10.4h-10.4zM689.6 43.3h10.4v10.4h-10.4zM700.0 43.3h10.4v10.4h-10.4zM710.4 43.3h10.4v10.4h-10.4zM731.2 43.3h10.4v10.4h-10.4zM752.0 43.3h10.4v10.4h-10.4zM783.2 43.3h10.4v10.4h-10.4zM575.2 53.7h10.4v10.4h-10.4zM689.6 53.7h10.4v10.4h-10.4zM710.4 53.7h10.4v10.4h-10.4zM720.8 53.7h10.4v10.4h-10.4zM741.6 53.7h10.4v10.4h-10.4zM762.4 53.7h10.4v10.4h-10.4zM783.2 53.7h10.4v10.4h-10.4zM679.2 64.1h10.4v10.4h-10.4zM689.6 64.1h10.4v10.4h-10.4zM700.0 64.1h10.4v10.4h-10.4zM731.2 64.1h10.4v10.4h-10.4zM762.4 64.1h10.4v10.4h-10.4zM772.8 64.1h10.4v10.4h-10.4zM793.6 64.1h10.4v10.4h-10.4zM814.4 64.1h10.4v10.4h-10.4zM200.8 74.5h10.4v10.4h-10.4zM211.2 74.5h10.4v10.4h-10.4zM232.0 74.5h10.4v10.4h-10.4zM242.4 74.5h10.4v10.4h-10.4zM252.8 74.5h10.4v10.4h-10.4zM679.2 74.5h10.4v10.4h-10.4zM689.6 74.5h10.4v10.4h-10.4zM700.0 74.5h10.4v10.4h-10.4zM710.4 74.5h10.4v10.4h-10.4zM752.0 74.5h10.4v10.4h-10.4zM200.8 84.9h10.4v10.4h-10.4zM211.2 84.9h10.4v10.4h-10.4zM679.2 84.9h10.4v10.4h-10.4zM689.6 84.9h10.4v10.4h-10.4zM772.8 84.9h10.4v10.4h-10.4zM783.2 84.9h10.4v10.4h-10.4zM793.6 84.9h10.4v10.4h-10.4zM804.0 84.9h10.4v10.4h-10.4zM200.8 95.3h10.4v10.4h-10.4zM211.2 95.3h10.4v10.4h-10.4zM221.6 95.3h10.4v10.4h-10.4zM637.6 95.3h10.4v10.4h-10.4zM648.0 95.3h10.4v10.4h-10.4zM679.2 95.3h10.4v10.4h-10.4zM689.6 95.3h10.4v10.4h-10.4zM700.0 95.3h10.4v10.4h-10.4zM804.0 95.3h10.4v10.4h-10.4zM200.8 105.7h10.4v10.4h-10.4zM658.4 105.7h10.4v10.4h-10.4zM668.8 105.7h10.4v10.4h-10.4zM679.2 105.7h10.4v10.4h-10.4zM689.6 105.7h10.4v10.4h-10.4zM700.0 105.7h10.4v10.4h-10.4zM762.4 105.7h10.4v10.4h-10.4zM793.6 105.7h10.4v10.4h-10.4zM804.0 105.7h10.4v10.4h-10.4zM814.4 105.7h10.4v10.4h-10.4zM200.8 116.1h10.4v10.4h-10.4zM668.8 116.1h10.4v10.4h-10.4zM679.2 116.1h10.4v10.4h-10.4zM689.6 116.1h10.4v10.4h-10.4zM710.4 116.1h10.4v10.4h-10.4zM720.8 116.1h10.4v10.4h-10.4zM762.4 116.1h10.4v10.4h-10.4zM772.8 116.1h10.4v10.4h-10.4zM804.0 116.1h10.4v10.4h-10.4zM200.8 126.5h10.4v10.4h-10.4zM731.2 126.5h10.4v10.4h-10.4zM731.2 147.3h10.4v10.4h-10.4zM741.6 147.3h10.4v10.4h-10.4zM731.2 168.1h10.4v10.4h-10.4zM731.2 178.5h10.4v10.4h-10.4zM731.2 188.9h10.4v10.4h-10.4zM741.6 188.9h10.4v10.4h-10.4zM24.0 199.3h10.4v10.4h-10.4zM34.4 199.3h10.4v10.4h-10.4zM44.8 199.3h10.4v10.4h-10.4zM55.2 199.3h10.4v10.4h-10.4zM65.6 199.3h10.4v10.4h-10.4zM76.0 199.3h10.4v10.4h-10.4zM731.2 199.3h10.4v10.4h-10.4zM55.2 209.7h10.4v10.4h-10.4zM65.6 209.7h10.4v10.4h-10.4zM76.0 209.7h10.4v10.4h-10.4zM65.6 220.1h10.4v10.4h-10.4zM76.0 220.1h10.4v10.4h-10.4zM731.2 220.1h10.4v10.4h-10.4zM65.6 230.5h10.4v10.4h-10.4zM76.0 230.5h10.4v10.4h-10.4zM741.6 230.5h10.4v10.4h-10.4zM76.0 240.9h10.4v10.4h-10.4zM731.2 240.9h10.4v10.4h-10.4zM731.2 261.7h10.4v10.4h-10.4zM741.6 272.1h10.4v10.4h-10.4zM741.6 282.5h10.4v10.4h-10.4zM731.2 292.9h10.4v10.4h-10.4zM741.6 303.3h10.4v10.4h-10.4zM741.6 313.7h10.4v10.4h-10.4zM731.2 324.1h10.4v10.4h-10.4zM741.6 324.1h10.4v10.4h-10.4zM741.6 334.5h10.4v10.4h-10.4zM731.2 355.3h10.4v10.4h-10.4zM731.2 365.7h10.4v10.4h-10.4zM731.2 396.9h10.4v10.4h-10.4zM741.6 396.9h10.4v10.4h-10.4zM731.2 407.3h10.4v10.4h-10.4zM731.2 417.7h10.4v10.4h-10.4zM658.4 428.1h10.4v10.4h-10.4zM679.2 428.1h10.4v10.4h-10.4zM783.2 428.1h10.4v10.4h-10.4zM793.6 428.1h10.4v10.4h-10.4zM762.4 438.5h10.4v10.4h-10.4zM814.4 438.5h10.4v10.4h-10.4zM700.0 448.9h10.4v10.4h-10.4zM772.8 448.9h10.4v10.4h-10.4zM804.0 448.9h10.4v10.4h-10.4zM814.4 448.9h10.4v10.4h-10.4zM668.8 459.3h10.4v10.4h-10.4zM793.6 459.3h10.4v10.4h-10.4zM658.4 469.7h10.4v10.4h-10.4zM679.2 480.1h10.4v10.4h-10.4zM720.8 480.1h10.4v10.4h-10.4zM752.0 480.1h10.4v10.4h-10.4zM814.4 480.1h10.4v10.4h-10.4zM668.8 490.5h10.4v10.4h-10.4zM679.2 490.5h10.4v10.4h-10.4zM689.6 490.5h10.4v10.4h-10.4zM720.8 490.5h10.4v10.4h-10.4zM804.0 490.5h10.4v10.4h-10.4zM679.2 500.9h10.4v10.4h-10.4zM752.0 500.9h10.4v10.4h-10.4zM783.2 500.9h10.4v10.4h-10.4zM814.4 500.9h10.4v10.4h-10.4zM658.4 511.3h10.4v10.4h-10.4zM710.4 511.3h10.4v10.4h-10.4zM762.4 511.3h10.4v10.4h-10.4zM804.0 511.3h10.4v10.4h-10.4zM668.8 521.7h10.4v10.4h-10.4zM679.2 521.7h10.4v10.4h-10.4zM710.4 521.7h10.4v10.4h-10.4zM752.0 521.7h10.4v10.4h-10.4zM658.4 532.1h10.4v10.4h-10.4zM668.8 532.1h10.4v10.4h-10.4zM720.8 532.1h10.4v10.4h-10.4zM752.0 532.1h10.4v10.4h-10.4zM783.2 532.1h10.4v10.4h-10.4zM804.0 532.1h10.4v10.4h-10.4zM668.8 542.5h10.4v10.4h-10.4zM700.0 542.5h10.4v10.4h-10.4zM720.8 542.5h10.4v10.4h-10.4zM731.2 542.5h10.4v10.4h-10.4zM741.6 542.5h10.4v10.4h-10.4zM804.0 542.5h10.4v10.4h-10.4zM783.2 552.9h10.4v10.4h-10.4zM804.0 552.9h10.4v10.4h-10.4zM668.8 563.3h10.4v10.4h-10.4zM700.0 563.3h10.4v10.4h-10.4zM762.4 563.3h10.4v10.4h-10.4zM804.0 563.3h10.4v10.4h-10.4zM814.4 563.3h10.4v10.4h-10.4zM658.4 573.7h10.4v10.4h-10.4zM720.8 573.7h10.4v10.4h-10.4zM762.4 573.7h10.4v10.4h-10.4zM793.6 573.7h10.4v10.4h-10.4zM804.0 584.1h10.4v10.4h-10.4zM658.4 594.5h10.4v10.4h-10.4zM668.8 594.5h10.4v10.4h-10.4zM710.4 594.5h10.4v10.4h-10.4zM741.6 594.5h10.4v10.4h-10.4zM658.4 604.9h10.4v10.4h-10.4zM668.8 604.9h10.4v10.4h-10.4zM731.2 604.9h10.4v10.4h-10.4zM793.6 604.9h10.4v10.4h-10.4zM804.0 604.9h10.4v10.4h-10.4zM658.4 615.3h10.4v10.4h-10.4zM668.8 615.3h10.4v10.4h-10.4zM658.4 625.7h10.4v10.4h-10.4zM689.6 625.7h10.4v10.4h-10.4zM700.0 625.7h10.4v10.4h-10.4zM741.6 625.7h10.4v10.4h-10.4zM752.0 625.7h10.4v10.4h-10.4zM668.8 636.1h10.4v10.4h-10.4zM710.4 636.1h10.4v10.4h-10.4zM720.8 636.1h10.4v10.4h-10.4zM762.4 636.1h10.4v10.4h-10.4zM793.6 636.1h10.4v10.4h-10.4zM814.4 636.1h10.4v10.4h-10.4zM731.2 646.5h10.4v10.4h-10.4z" fill="#0e0e0e"/><path d="M700.0 -1h10.4v13.1h-10.4zM700.0 32.9h10.4v10.4h-10.4zM190.4 53.7h10.4v10.4h-10.4zM710.4 64.1h10.4v10.4h-10.4zM731.2 74.5h10.4v10.4h-10.4zM720.8 95.3h10.4v10.4h-10.4zM710.4 105.7h10.4v10.4h-10.4zM720.8 136.9h10.4v10.4h-10.4zM710.4 147.3h10.4v10.4h-10.4zM720.8 147.3h10.4v10.4h-10.4zM720.8 168.1h10.4v10.4h-10.4zM720.8 178.5h10.4v10.4h-10.4zM720.8 188.9h10.4v10.4h-10.4zM720.8 199.3h10.4v10.4h-10.4zM731.2 209.7h10.4v10.4h-10.4zM710.4 230.5h10.4v10.4h-10.4zM720.8 240.9h10.4v10.4h-10.4zM720.8 251.3h10.4v10.4h-10.4zM720.8 261.7h10.4v10.4h-10.4zM720.8 272.1h10.4v10.4h-10.4zM720.8 292.9h10.4v10.4h-10.4zM720.8 313.7h10.4v10.4h-10.4zM731.2 313.7h10.4v10.4h-10.4zM720.8 324.1h10.4v10.4h-10.4zM720.8 334.5h10.4v10.4h-10.4zM720.8 355.3h10.4v10.4h-10.4zM710.4 407.3h10.4v10.4h-10.4zM720.8 407.3h10.4v10.4h-10.4zM720.8 417.7h10.4v10.4h-10.4zM637.6 428.1h10.4v10.4h-10.4zM648.0 428.1h10.4v10.4h-10.4zM637.6 438.5h10.4v10.4h-10.4zM648.0 438.5h10.4v10.4h-10.4zM658.4 459.3h10.4v10.4h-10.4zM637.6 480.1h10.4v10.4h-10.4zM658.4 480.1h10.4v10.4h-10.4zM637.6 490.5h10.4v10.4h-10.4zM648.0 490.5h10.4v10.4h-10.4zM658.4 490.5h10.4v10.4h-10.4zM637.6 500.9h10.4v10.4h-10.4zM658.4 500.9h10.4v10.4h-10.4zM637.6 521.7h10.4v10.4h-10.4zM648.0 521.7h10.4v10.4h-10.4zM637.6 542.5h10.4v10.4h-10.4zM648.0 542.5h10.4v10.4h-10.4zM637.6 552.9h10.4v10.4h-10.4zM648.0 552.9h10.4v10.4h-10.4zM648.0 573.7h10.4v10.4h-10.4zM658.4 584.1h10.4v10.4h-10.4zM648.0 594.5h10.4v10.4h-10.4zM637.6 625.7h10.4v10.4h-10.4zM658.4 636.1h10.4v10.4h-10.4zM658.4 646.5h10.4v10.4h-10.4z" fill="#101010"/><path d="M720.8 -1h10.4v13.1h-10.4zM710.4 12.1h10.4v10.4h-10.4zM731.2 12.1h10.4v10.4h-10.4zM731.2 22.5h10.4v10.4h-10.4zM710.4 32.9h10.4v10.4h-10.4zM720.8 32.9h10.4v10.4h-10.4zM731.2 32.9h10.4v10.4h-10.4zM720.8 43.3h10.4v10.4h-10.4zM814.4 43.3h10.4v10.4h-10.4zM731.2 53.7h10.4v10.4h-10.4zM772.8 53.7h10.4v10.4h-10.4zM720.8 64.1h10.4v10.4h-10.4zM804.0 64.1h10.4v10.4h-10.4zM720.8 74.5h10.4v10.4h-10.4zM700.0 84.9h10.4v10.4h-10.4zM710.4 84.9h10.4v10.4h-10.4zM720.8 84.9h10.4v10.4h-10.4zM731.2 84.9h10.4v10.4h-10.4zM710.4 95.3h10.4v10.4h-10.4zM731.2 95.3h10.4v10.4h-10.4zM720.8 105.7h10.4v10.4h-10.4zM731.2 105.7h10.4v10.4h-10.4zM700.0 116.1h10.4v10.4h-10.4zM720.8 126.5h10.4v10.4h-10.4zM720.8 157.7h10.4v10.4h-10.4zM731.2 157.7h10.4v10.4h-10.4zM720.8 209.7h10.4v10.4h-10.4zM720.8 220.1h10.4v10.4h-10.4zM720.8 230.5h10.4v10.4h-10.4zM731.2 251.3h10.4v10.4h-10.4zM731.2 272.1h10.4v10.4h-10.4zM720.8 303.3h10.4v10.4h-10.4zM731.2 303.3h10.4v10.4h-10.4zM731.2 344.9h10.4v10.4h-10.4zM720.8 365.7h10.4v10.4h-10.4zM720.8 376.1h10.4v10.4h-10.4zM731.2 376.1h10.4v10.4h-10.4zM720.8 386.5h10.4v10.4h-10.4zM731.2 386.5h10.4v10.4h-10.4zM720.8 396.9h10.4v10.4h-10.4zM668.8 428.1h10.4v10.4h-10.4zM658.4 438.5h10.4v10.4h-10.4zM658.4 448.9h10.4v10.4h-10.4zM648.0 480.1h10.4v10.4h-10.4zM648.0 500.9h10.4v10.4h-10.4zM668.8 500.9h10.4v10.4h-10.4zM658.4 521.7h10.4v10.4h-10.4zM648.0 532.1h10.4v10.4h-10.4zM658.4 542.5h10.4v10.4h-10.4zM658.4 552.9h10.4v10.4h-10.4zM658.4 563.3h10.4v10.4h-10.4zM648.0 584.1h10.4v10.4h-10.4zM668.8 584.1h10.4v10.4h-10.4zM648.0 625.7h10.4v10.4h-10.4zM668.8 625.7h10.4v10.4h-10.4z" fill="#0f0f0f"/><path d="M741.6 -1h10.4v13.1h-10.4zM762.4 -1h10.4v13.1h-10.4zM783.2 -1h10.4v13.1h-10.4zM814.4 -1h10.4v13.1h-10.4zM793.6 12.1h10.4v10.4h-10.4zM752.0 22.5h10.4v10.4h-10.4zM804.0 22.5h10.4v10.4h-10.4zM814.4 22.5h10.4v10.4h-10.4zM741.6 32.9h10.4v10.4h-10.4zM752.0 32.9h10.4v10.4h-10.4zM804.0 32.9h10.4v10.4h-10.4zM814.4 32.9h10.4v10.4h-10.4zM762.4 43.3h10.4v10.4h-10.4zM772.8 43.3h10.4v10.4h-10.4zM804.0 43.3h10.4v10.4h-10.4zM700.0 53.7h10.4v10.4h-10.4zM752.0 53.7h10.4v10.4h-10.4zM793.6 53.7h10.4v10.4h-10.4zM804.0 53.7h10.4v10.4h-10.4zM814.4 53.7h10.4v10.4h-10.4zM741.6 64.1h10.4v10.4h-10.4zM752.0 64.1h10.4v10.4h-10.4zM783.2 64.1h10.4v10.4h-10.4zM741.6 74.5h10.4v10.4h-10.4zM762.4 74.5h10.4v10.4h-10.4zM772.8 74.5h10.4v10.4h-10.4zM783.2 74.5h10.4v10.4h-10.4zM804.0 74.5h10.4v10.4h-10.4zM814.4 74.5h10.4v10.4h-10.4zM741.6 84.9h10.4v10.4h-10.4zM752.0 84.9h10.4v10.4h-10.4zM762.4 84.9h10.4v10.4h-10.4zM814.4 84.9h10.4v10.4h-10.4zM741.6 95.3h10.4v10.4h-10.4zM752.0 95.3h10.4v10.4h-10.4zM762.4 95.3h10.4v10.4h-10.4zM772.8 95.3h10.4v10.4h-10.4zM783.2 95.3h10.4v10.4h-10.4zM793.6 95.3h10.4v10.4h-10.4zM772.8 105.7h10.4v10.4h-10.4zM731.2 116.1h10.4v10.4h-10.4zM741.6 116.1h10.4v10.4h-10.4zM783.2 116.1h10.4v10.4h-10.4zM793.6 116.1h10.4v10.4h-10.4zM741.6 126.5h10.4v10.4h-10.4zM731.2 136.9h10.4v10.4h-10.4zM762.4 136.9h10.4v10.4h-10.4zM772.8 136.9h10.4v10.4h-10.4zM783.2 136.9h10.4v10.4h-10.4zM752.0 147.3h10.4v10.4h-10.4zM783.2 147.3h10.4v10.4h-10.4zM752.0 157.7h10.4v10.4h-10.4zM762.4 157.7h10.4v10.4h-10.4zM804.0 157.7h10.4v10.4h-10.4zM814.4 157.7h10.4v10.4h-10.4zM783.2 168.1h10.4v10.4h-10.4zM804.0 168.1h10.4v10.4h-10.4zM772.8 178.5h10.4v10.4h-10.4zM783.2 178.5h10.4v10.4h-10.4zM793.6 178.5h10.4v10.4h-10.4zM804.0 178.5h10.4v10.4h-10.4zM752.0 188.9h10.4v10.4h-10.4zM783.2 188.9h10.4v10.4h-10.4zM814.4 188.9h10.4v10.4h-10.4zM741.6 199.3h10.4v10.4h-10.4zM793.6 199.3h10.4v10.4h-10.4zM804.0 199.3h10.4v10.4h-10.4zM741.6 209.7h10.4v10.4h-10.4zM762.4 209.7h10.4v10.4h-10.4zM783.2 209.7h10.4v10.4h-10.4zM814.4 209.7h10.4v10.4h-10.4zM741.6 220.1h10.4v10.4h-10.4zM762.4 220.1h10.4v10.4h-10.4zM772.8 220.1h10.4v10.4h-10.4zM731.2 230.5h10.4v10.4h-10.4zM752.0 230.5h10.4v10.4h-10.4zM762.4 230.5h10.4v10.4h-10.4zM772.8 230.5h10.4v10.4h-10.4zM814.4 230.5h10.4v10.4h-10.4zM741.6 240.9h10.4v10.4h-10.4zM762.4 240.9h10.4v10.4h-10.4zM772.8 240.9h10.4v10.4h-10.4zM783.2 240.9h10.4v10.4h-10.4zM793.6 240.9h10.4v10.4h-10.4zM741.6 251.3h10.4v10.4h-10.4zM793.6 251.3h10.4v10.4h-10.4zM804.0 251.3h10.4v10.4h-10.4zM741.6 261.7h10.4v10.4h-10.4zM762.4 261.7h10.4v10.4h-10.4zM772.8 261.7h10.4v10.4h-10.4zM804.0 261.7h10.4v10.4h-10.4zM752.0 272.1h10.4v10.4h-10.4zM772.8 272.1h10.4v10.4h-10.4zM793.6 272.1h10.4v10.4h-10.4zM814.4 272.1h10.4v10.4h-10.4zM731.2 282.5h10.4v10.4h-10.4zM752.0 282.5h10.4v10.4h-10.4zM814.4 282.5h10.4v10.4h-10.4zM752.0 292.9h10.4v10.4h-10.4zM762.4 292.9h10.4v10.4h-10.4zM772.8 292.9h10.4v10.4h-10.4zM783.2 292.9h10.4v10.4h-10.4zM804.0 292.9h10.4v10.4h-10.4zM814.4 292.9h10.4v10.4h-10.4zM752.0 303.3h10.4v10.4h-10.4zM762.4 303.3h10.4v10.4h-10.4zM804.0 303.3h10.4v10.4h-10.4zM793.6 313.7h10.4v10.4h-10.4zM793.6 324.1h10.4v10.4h-10.4zM731.2 334.5h10.4v10.4h-10.4zM762.4 334.5h10.4v10.4h-10.4zM793.6 334.5h10.4v10.4h-10.4zM741.6 344.9h10.4v10.4h-10.4zM783.2 344.9h10.4v10.4h-10.4zM793.6 344.9h10.4v10.4h-10.4zM804.0 344.9h10.4v10.4h-10.4zM814.4 344.9h10.4v10.4h-10.4zM741.6 355.3h10.4v10.4h-10.4zM741.6 365.7h10.4v10.4h-10.4zM772.8 365.7h10.4v10.4h-10.4zM793.6 365.7h10.4v10.4h-10.4zM804.0 365.7h10.4v10.4h-10.4zM814.4 365.7h10.4v10.4h-10.4zM762.4 376.1h10.4v10.4h-10.4zM783.2 376.1h10.4v10.4h-10.4zM804.0 386.5h10.4v10.4h-10.4zM752.0 396.9h10.4v10.4h-10.4zM762.4 396.9h10.4v10.4h-10.4zM772.8 396.9h10.4v10.4h-10.4zM814.4 396.9h10.4v10.4h-10.4zM741.6 407.3h10.4v10.4h-10.4zM752.0 407.3h10.4v10.4h-10.4zM772.8 407.3h10.4v10.4h-10.4zM793.6 407.3h10.4v10.4h-10.4zM804.0 407.3h10.4v10.4h-10.4zM741.6 417.7h10.4v10.4h-10.4zM793.6 417.7h10.4v10.4h-10.4zM804.0 417.7h10.4v10.4h-10.4zM814.4 417.7h10.4v10.4h-10.4zM689.6 428.1h10.4v10.4h-10.4zM700.0 428.1h10.4v10.4h-10.4zM720.8 428.1h10.4v10.4h-10.4zM731.2 428.1h10.4v10.4h-10.4zM741.6 428.1h10.4v10.4h-10.4zM762.4 428.1h10.4v10.4h-10.4zM772.8 428.1h10.4v10.4h-10.4zM668.8 438.5h10.4v10.4h-10.4zM679.2 438.5h10.4v10.4h-10.4zM700.0 438.5h10.4v10.4h-10.4zM710.4 438.5h10.4v10.4h-10.4zM731.2 438.5h10.4v10.4h-10.4zM752.0 438.5h10.4v10.4h-10.4zM772.8 438.5h10.4v10.4h-10.4zM783.2 438.5h10.4v10.4h-10.4zM793.6 438.5h10.4v10.4h-10.4zM668.8 448.9h10.4v10.4h-10.4zM720.8 448.9h10.4v10.4h-10.4zM741.6 448.9h10.4v10.4h-10.4zM752.0 448.9h10.4v10.4h-10.4zM783.2 448.9h10.4v10.4h-10.4zM793.6 448.9h10.4v10.4h-10.4zM689.6 459.3h10.4v10.4h-10.4zM700.0 459.3h10.4v10.4h-10.4zM710.4 459.3h10.4v10.4h-10.4zM720.8 459.3h10.4v10.4h-10.4zM741.6 459.3h10.4v10.4h-10.4zM752.0 459.3h10.4v10.4h-10.4zM804.0 459.3h10.4v10.4h-10.4zM668.8 469.7h10.4v10.4h-10.4zM679.2 469.7h10.4v10.4h-10.4zM689.6 469.7h10.4v10.4h-10.4zM700.0 469.7h10.4v10.4h-10.4zM710.4 469.7h10.4v10.4h-10.4zM741.6 469.7h10.4v10.4h-10.4zM762.4 469.7h10.4v10.4h-10.4zM783.2 469.7h10.4v10.4h-10.4zM793.6 469.7h10.4v10.4h-10.4zM814.4 469.7h10.4v10.4h-10.4zM668.8 480.1h10.4v10.4h-10.4zM689.6 480.1h10.4v10.4h-10.4zM700.0 480.1h10.4v10.4h-10.4zM731.2 480.1h10.4v10.4h-10.4zM772.8 480.1h10.4v10.4h-10.4zM793.6 480.1h10.4v10.4h-10.4zM804.0 480.1h10.4v10.4h-10.4zM731.2 490.5h10.4v10.4h-10.4zM752.0 490.5h10.4v10.4h-10.4zM772.8 490.5h10.4v10.4h-10.4zM700.0 500.9h10.4v10.4h-10.4zM720.8 500.9h10.4v10.4h-10.4zM731.2 500.9h10.4v10.4h-10.4zM772.8 500.9h10.4v10.4h-10.4zM793.6 500.9h10.4v10.4h-10.4zM804.0 500.9h10.4v10.4h-10.4zM668.8 511.3h10.4v10.4h-10.4zM720.8 511.3h10.4v10.4h-10.4zM731.2 511.3h10.4v10.4h-10.4zM752.0 511.3h10.4v10.4h-10.4zM772.8 511.3h10.4v10.4h-10.4zM783.2 511.3h10.4v10.4h-10.4zM793.6 511.3h10.4v10.4h-10.4zM814.4 511.3h10.4v10.4h-10.4zM689.6 521.7h10.4v10.4h-10.4zM700.0 521.7h10.4v10.4h-10.4zM720.8 521.7h10.4v10.4h-10.4zM731.2 521.7h10.4v10.4h-10.4zM741.6 521.7h10.4v10.4h-10.4zM762.4 521.7h10.4v10.4h-10.4zM772.8 521.7h10.4v10.4h-10.4zM783.2 521.7h10.4v10.4h-10.4zM804.0 521.7h10.4v10.4h-10.4zM814.4 521.7h10.4v10.4h-10.4zM679.2 532.1h10.4v10.4h-10.4zM689.6 532.1h10.4v10.4h-10.4zM741.6 532.1h10.4v10.4h-10.4zM762.4 532.1h10.4v10.4h-10.4zM772.8 532.1h10.4v10.4h-10.4zM793.6 532.1h10.4v10.4h-10.4zM679.2 542.5h10.4v10.4h-10.4zM752.0 542.5h10.4v10.4h-10.4zM783.2 542.5h10.4v10.4h-10.4zM793.6 542.5h10.4v10.4h-10.4zM668.8 552.9h10.4v10.4h-10.4zM679.2 552.9h10.4v10.4h-10.4zM700.0 552.9h10.4v10.4h-10.4zM710.4 552.9h10.4v10.4h-10.4zM741.6 552.9h10.4v10.4h-10.4zM793.6 552.9h10.4v10.4h-10.4zM689.6 563.3h10.4v10.4h-10.4zM710.4 563.3h10.4v10.4h-10.4zM731.2 563.3h10.4v10.4h-10.4zM772.8 563.3h10.4v10.4h-10.4zM783.2 563.3h10.4v10.4h-10.4zM668.8 573.7h10.4v10.4h-10.4zM689.6 573.7h10.4v10.4h-10.4zM700.0 573.7h10.4v10.4h-10.4zM710.4 573.7h10.4v10.4h-10.4zM741.6 573.7h10.4v10.4h-10.4zM689.6 584.1h10.4v10.4h-10.4zM700.0 584.1h10.4v10.4h-10.4zM720.8 584.1h10.4v10.4h-10.4zM731.2 584.1h10.4v10.4h-10.4zM741.6 584.1h10.4v10.4h-10.4zM762.4 584.1h10.4v10.4h-10.4zM783.2 584.1h10.4v10.4h-10.4zM793.6 584.1h10.4v10.4h-10.4zM814.4 584.1h10.4v10.4h-10.4zM689.6 594.5h10.4v10.4h-10.4zM720.8 594.5h10.4v10.4h-10.4zM783.2 594.5h10.4v10.4h-10.4zM793.6 594.5h10.4v10.4h-10.4zM804.0 594.5h10.4v10.4h-10.4zM814.4 594.5h10.4v10.4h-10.4zM679.2 604.9h10.4v10.4h-10.4zM689.6 604.9h10.4v10.4h-10.4zM720.8 604.9h10.4v10.4h-10.4zM783.2 604.9h10.4v10.4h-10.4zM689.6 615.3h10.4v10.4h-10.4zM700.0 615.3h10.4v10.4h-10.4zM710.4 615.3h10.4v10.4h-10.4zM720.8 615.3h10.4v10.4h-10.4zM752.0 615.3h10.4v10.4h-10.4zM783.2 615.3h10.4v10.4h-10.4zM793.6 615.3h10.4v10.4h-10.4zM804.0 615.3h10.4v10.4h-10.4zM679.2 625.7h10.4v10.4h-10.4zM710.4 625.7h10.4v10.4h-10.4zM720.8 625.7h10.4v10.4h-10.4zM731.2 625.7h10.4v10.4h-10.4zM793.6 625.7h10.4v10.4h-10.4zM804.0 625.7h10.4v10.4h-10.4zM679.2 636.1h10.4v10.4h-10.4zM783.2 636.1h10.4v10.4h-10.4zM804.0 636.1h10.4v10.4h-10.4zM668.8 646.5h10.4v10.4h-10.4zM700.0 646.5h10.4v10.4h-10.4zM720.8 646.5h10.4v10.4h-10.4zM741.6 646.5h10.4v10.4h-10.4zM783.2 646.5h10.4v10.4h-10.4zM793.6 646.5h10.4v10.4h-10.4zM804.0 646.5h10.4v10.4h-10.4zM814.4 646.5h10.4v10.4h-10.4z" fill="#0d0d0d"/><path d="M752.0 -1h10.4v13.1h-10.4zM741.6 12.1h10.4v10.4h-10.4zM741.6 22.5h10.4v10.4h-10.4zM762.4 32.9h10.4v10.4h-10.4zM783.2 32.9h10.4v10.4h-10.4zM793.6 32.9h10.4v10.4h-10.4zM741.6 43.3h10.4v10.4h-10.4zM793.6 43.3h10.4v10.4h-10.4zM793.6 74.5h10.4v10.4h-10.4zM814.4 95.3h10.4v10.4h-10.4zM741.6 105.7h10.4v10.4h-10.4zM752.0 105.7h10.4v10.4h-10.4zM783.2 105.7h10.4v10.4h-10.4zM752.0 116.1h10.4v10.4h-10.4zM814.4 116.1h10.4v10.4h-10.4zM86.4 126.5h10.4v10.4h-10.4zM752.0 126.5h10.4v10.4h-10.4zM772.8 126.5h10.4v10.4h-10.4zM793.6 126.5h10.4v10.4h-10.4zM814.4 126.5h10.4v10.4h-10.4zM76.0 136.9h10.4v10.4h-10.4zM86.4 136.9h10.4v10.4h-10.4zM117.6 136.9h10.4v10.4h-10.4zM138.4 136.9h10.4v10.4h-10.4zM169.6 136.9h10.4v10.4h-10.4zM180.0 136.9h10.4v10.4h-10.4zM741.6 136.9h10.4v10.4h-10.4zM752.0 136.9h10.4v10.4h-10.4zM793.6 136.9h10.4v10.4h-10.4zM804.0 136.9h10.4v10.4h-10.4zM814.4 136.9h10.4v10.4h-10.4zM76.0 147.3h10.4v10.4h-10.4zM86.4 147.3h10.4v10.4h-10.4zM128.0 147.3h10.4v10.4h-10.4zM180.0 147.3h10.4v10.4h-10.4zM762.4 147.3h10.4v10.4h-10.4zM804.0 147.3h10.4v10.4h-10.4zM814.4 147.3h10.4v10.4h-10.4zM107.2 157.7h10.4v10.4h-10.4zM138.4 157.7h10.4v10.4h-10.4zM148.8 157.7h10.4v10.4h-10.4zM741.6 157.7h10.4v10.4h-10.4zM772.8 157.7h10.4v10.4h-10.4zM793.6 157.7h10.4v10.4h-10.4zM96.8 168.1h10.4v10.4h-10.4zM117.6 168.1h10.4v10.4h-10.4zM159.2 168.1h10.4v10.4h-10.4zM741.6 168.1h10.4v10.4h-10.4zM762.4 168.1h10.4v10.4h-10.4zM772.8 168.1h10.4v10.4h-10.4zM65.6 178.5h10.4v10.4h-10.4zM96.8 178.5h10.4v10.4h-10.4zM128.0 178.5h10.4v10.4h-10.4zM138.4 178.5h10.4v10.4h-10.4zM180.0 178.5h10.4v10.4h-10.4zM741.6 178.5h10.4v10.4h-10.4zM752.0 178.5h10.4v10.4h-10.4zM762.4 178.5h10.4v10.4h-10.4zM86.4 188.9h10.4v10.4h-10.4zM128.0 188.9h10.4v10.4h-10.4zM159.2 188.9h10.4v10.4h-10.4zM180.0 188.9h10.4v10.4h-10.4zM762.4 188.9h10.4v10.4h-10.4zM96.8 199.3h10.4v10.4h-10.4zM117.6 199.3h10.4v10.4h-10.4zM180.0 199.3h10.4v10.4h-10.4zM762.4 199.3h10.4v10.4h-10.4zM772.8 199.3h10.4v10.4h-10.4zM783.2 199.3h10.4v10.4h-10.4zM814.4 199.3h10.4v10.4h-10.4zM752.0 209.7h10.4v10.4h-10.4zM772.8 209.7h10.4v10.4h-10.4zM793.6 209.7h10.4v10.4h-10.4zM804.0 209.7h10.4v10.4h-10.4zM107.2 220.1h10.4v10.4h-10.4zM128.0 220.1h10.4v10.4h-10.4zM159.2 220.1h10.4v10.4h-10.4zM752.0 220.1h10.4v10.4h-10.4zM793.6 220.1h10.4v10.4h-10.4zM804.0 220.1h10.4v10.4h-10.4zM86.4 230.5h10.4v10.4h-10.4zM96.8 230.5h10.4v10.4h-10.4zM107.2 230.5h10.4v10.4h-10.4zM128.0 230.5h10.4v10.4h-10.4zM138.4 230.5h10.4v10.4h-10.4zM159.2 230.5h10.4v10.4h-10.4zM793.6 230.5h10.4v10.4h-10.4zM804.0 230.5h10.4v10.4h-10.4zM86.4 240.9h10.4v10.4h-10.4zM96.8 240.9h10.4v10.4h-10.4zM117.6 240.9h10.4v10.4h-10.4zM128.0 240.9h10.4v10.4h-10.4zM138.4 240.9h10.4v10.4h-10.4zM190.4 240.9h10.4v10.4h-10.4zM804.0 240.9h10.4v10.4h-10.4zM814.4 240.9h10.4v10.4h-10.4zM96.8 251.3h10.4v10.4h-10.4zM117.6 251.3h10.4v10.4h-10.4zM159.2 251.3h10.4v10.4h-10.4zM190.4 251.3h10.4v10.4h-10.4zM752.0 251.3h10.4v10.4h-10.4zM772.8 251.3h10.4v10.4h-10.4zM783.2 251.3h10.4v10.4h-10.4zM814.4 251.3h10.4v10.4h-10.4zM96.8 261.7h10.4v10.4h-10.4zM128.0 261.7h10.4v10.4h-10.4zM138.4 261.7h10.4v10.4h-10.4zM148.8 261.7h10.4v10.4h-10.4zM169.6 261.7h10.4v10.4h-10.4zM752.0 261.7h10.4v10.4h-10.4zM783.2 261.7h10.4v10.4h-10.4zM793.6 261.7h10.4v10.4h-10.4zM814.4 261.7h10.4v10.4h-10.4zM107.2 272.1h10.4v10.4h-10.4zM117.6 272.1h10.4v10.4h-10.4zM169.6 272.1h10.4v10.4h-10.4zM783.2 272.1h10.4v10.4h-10.4zM804.0 272.1h10.4v10.4h-10.4zM762.4 282.5h10.4v10.4h-10.4zM783.2 282.5h10.4v10.4h-10.4zM107.2 292.9h10.4v10.4h-10.4zM117.6 292.9h10.4v10.4h-10.4zM741.6 292.9h10.4v10.4h-10.4zM96.8 303.3h10.4v10.4h-10.4zM117.6 303.3h10.4v10.4h-10.4zM128.0 303.3h10.4v10.4h-10.4zM169.6 303.3h10.4v10.4h-10.4zM772.8 303.3h10.4v10.4h-10.4zM793.6 303.3h10.4v10.4h-10.4zM86.4 313.7h10.4v10.4h-10.4zM96.8 313.7h10.4v10.4h-10.4zM169.6 313.7h10.4v10.4h-10.4zM180.0 313.7h10.4v10.4h-10.4zM762.4 313.7h10.4v10.4h-10.4zM772.8 313.7h10.4v10.4h-10.4zM804.0 313.7h10.4v10.4h-10.4zM814.4 313.7h10.4v10.4h-10.4zM752.0 324.1h10.4v10.4h-10.4zM762.4 324.1h10.4v10.4h-10.4zM783.2 324.1h10.4v10.4h-10.4zM804.0 324.1h10.4v10.4h-10.4zM752.0 334.5h10.4v10.4h-10.4zM772.8 334.5h10.4v10.4h-10.4zM804.0 334.5h10.4v10.4h-10.4zM752.0 344.9h10.4v10.4h-10.4zM762.4 344.9h10.4v10.4h-10.4zM772.8 344.9h10.4v10.4h-10.4zM752.0 355.3h10.4v10.4h-10.4zM762.4 355.3h10.4v10.4h-10.4zM772.8 355.3h10.4v10.4h-10.4zM783.2 355.3h10.4v10.4h-10.4zM793.6 355.3h10.4v10.4h-10.4zM814.4 355.3h10.4v10.4h-10.4zM752.0 365.7h10.4v10.4h-10.4zM783.2 365.7h10.4v10.4h-10.4zM741.6 376.1h10.4v10.4h-10.4zM752.0 376.1h10.4v10.4h-10.4zM772.8 376.1h10.4v10.4h-10.4zM804.0 376.1h10.4v10.4h-10.4zM814.4 376.1h10.4v10.4h-10.4zM741.6 386.5h10.4v10.4h-10.4zM752.0 386.5h10.4v10.4h-10.4zM762.4 386.5h10.4v10.4h-10.4zM772.8 386.5h10.4v10.4h-10.4zM814.4 386.5h10.4v10.4h-10.4zM793.6 396.9h10.4v10.4h-10.4zM814.4 407.3h10.4v10.4h-10.4zM752.0 417.7h10.4v10.4h-10.4zM772.8 417.7h10.4v10.4h-10.4zM710.4 428.1h10.4v10.4h-10.4zM752.0 428.1h10.4v10.4h-10.4zM804.0 428.1h10.4v10.4h-10.4zM814.4 428.1h10.4v10.4h-10.4zM689.6 438.5h10.4v10.4h-10.4zM720.8 438.5h10.4v10.4h-10.4zM741.6 438.5h10.4v10.4h-10.4zM804.0 438.5h10.4v10.4h-10.4zM679.2 448.9h10.4v10.4h-10.4zM689.6 448.9h10.4v10.4h-10.4zM710.4 448.9h10.4v10.4h-10.4zM731.2 448.9h10.4v10.4h-10.4zM762.4 448.9h10.4v10.4h-10.4zM679.2 459.3h10.4v10.4h-10.4zM731.2 459.3h10.4v10.4h-10.4zM762.4 459.3h10.4v10.4h-10.4zM772.8 459.3h10.4v10.4h-10.4zM783.2 459.3h10.4v10.4h-10.4zM814.4 459.3h10.4v10.4h-10.4zM720.8 469.7h10.4v10.4h-10.4zM731.2 469.7h10.4v10.4h-10.4zM752.0 469.7h10.4v10.4h-10.4zM772.8 469.7h10.4v10.4h-10.4zM804.0 469.7h10.4v10.4h-10.4zM710.4 480.1h10.4v10.4h-10.4zM741.6 480.1h10.4v10.4h-10.4zM762.4 480.1h10.4v10.4h-10.4zM783.2 480.1h10.4v10.4h-10.4zM700.0 490.5h10.4v10.4h-10.4zM710.4 490.5h10.4v10.4h-10.4zM741.6 490.5h10.4v10.4h-10.4zM762.4 490.5h10.4v10.4h-10.4zM783.2 490.5h10.4v10.4h-10.4zM793.6 490.5h10.4v10.4h-10.4zM814.4 490.5h10.4v10.4h-10.4zM689.6 500.9h10.4v10.4h-10.4zM710.4 500.9h10.4v10.4h-10.4zM741.6 500.9h10.4v10.4h-10.4zM762.4 500.9h10.4v10.4h-10.4zM679.2 511.3h10.4v10.4h-10.4zM689.6 511.3h10.4v10.4h-10.4zM700.0 511.3h10.4v10.4h-10.4zM741.6 511.3h10.4v10.4h-10.4zM793.6 521.7h10.4v10.4h-10.4zM700.0 532.1h10.4v10.4h-10.4zM710.4 532.1h10.4v10.4h-10.4zM731.2 532.1h10.4v10.4h-10.4zM814.4 532.1h10.4v10.4h-10.4zM689.6 542.5h10.4v10.4h-10.4zM710.4 542.5h10.4v10.4h-10.4zM762.4 542.5h10.4v10.4h-10.4zM772.8 542.5h10.4v10.4h-10.4zM814.4 542.5h10.4v10.4h-10.4zM689.6 552.9h10.4v10.4h-10.4zM720.8 552.9h10.4v10.4h-10.4zM731.2 552.9h10.4v10.4h-10.4zM752.0 552.9h10.4v10.4h-10.4zM762.4 552.9h10.4v10.4h-10.4zM772.8 552.9h10.4v10.4h-10.4zM814.4 552.9h10.4v10.4h-10.4zM679.2 563.3h10.4v10.4h-10.4zM720.8 563.3h10.4v10.4h-10.4zM741.6 563.3h10.4v10.4h-10.4zM752.0 563.3h10.4v10.4h-10.4zM793.6 563.3h10.4v10.4h-10.4zM679.2 573.7h10.4v10.4h-10.4zM731.2 573.7h10.4v10.4h-10.4zM752.0 573.7h10.4v10.4h-10.4zM772.8 573.7h10.4v10.4h-10.4zM783.2 573.7h10.4v10.4h-10.4zM804.0 573.7h10.4v10.4h-10.4zM814.4 573.7h10.4v10.4h-10.4zM679.2 584.1h10.4v10.4h-10.4zM710.4 584.1h10.4v10.4h-10.4zM752.0 584.1h10.4v10.4h-10.4zM772.8 584.1h10.4v10.4h-10.4zM679.2 594.5h10.4v10.4h-10.4zM700.0 594.5h10.4v10.4h-10.4zM731.2 594.5h10.4v10.4h-10.4zM752.0 594.5h10.4v10.4h-10.4zM762.4 594.5h10.4v10.4h-10.4zM772.8 594.5h10.4v10.4h-10.4zM700.0 604.9h10.4v10.4h-10.4zM710.4 604.9h10.4v10.4h-10.4zM741.6 604.9h10.4v10.4h-10.4zM752.0 604.9h10.4v10.4h-10.4zM762.4 604.9h10.4v10.4h-10.4zM772.8 604.9h10.4v10.4h-10.4zM814.4 604.9h10.4v10.4h-10.4zM679.2 615.3h10.4v10.4h-10.4zM731.2 615.3h10.4v10.4h-10.4zM741.6 615.3h10.4v10.4h-10.4zM762.4 615.3h10.4v10.4h-10.4zM772.8 615.3h10.4v10.4h-10.4zM814.4 615.3h10.4v10.4h-10.4zM762.4 625.7h10.4v10.4h-10.4zM772.8 625.7h10.4v10.4h-10.4zM783.2 625.7h10.4v10.4h-10.4zM814.4 625.7h10.4v10.4h-10.4zM689.6 636.1h10.4v10.4h-10.4zM700.0 636.1h10.4v10.4h-10.4zM731.2 636.1h10.4v10.4h-10.4zM741.6 636.1h10.4v10.4h-10.4zM752.0 636.1h10.4v10.4h-10.4zM772.8 636.1h10.4v10.4h-10.4zM679.2 646.5h10.4v10.4h-10.4zM689.6 646.5h10.4v10.4h-10.4zM710.4 646.5h10.4v10.4h-10.4zM752.0 646.5h10.4v10.4h-10.4zM762.4 646.5h10.4v10.4h-10.4zM772.8 646.5h10.4v10.4h-10.4z" fill="#0c0c0c"/><path d="M315.2 12.1h10.4v10.4h-10.4zM325.6 12.1h10.4v10.4h-10.4z" fill="#4a4a4a"/><path d="M408.8 12.1h10.4v10.4h-10.4zM284.0 22.5h10.4v10.4h-10.4zM398.4 22.5h10.4v10.4h-10.4zM388.0 32.9h10.4v10.4h-10.4zM346.4 116.1h10.4v10.4h-10.4z" fill="#3e3e3e"/><path d="M13.6 22.5h10.4v10.4h-10.4zM24.0 22.5h10.4v10.4h-10.4zM86.4 22.5h10.4v10.4h-10.4zM3.2 32.9h10.4v10.4h-10.4zM13.6 32.9h10.4v10.4h-10.4zM65.6 43.3h10.4v10.4h-10.4zM-7.2 53.7h10.4v10.4h-10.4zM24.0 64.1h10.4v10.4h-10.4zM34.4 64.1h10.4v10.4h-10.4zM65.6 64.1h10.4v10.4h-10.4zM34.4 74.5h10.4v10.4h-10.4zM65.6 74.5h10.4v10.4h-10.4zM86.4 74.5h10.4v10.4h-10.4zM3.2 84.9h10.4v10.4h-10.4zM13.6 95.3h10.4v10.4h-10.4zM65.6 105.7h10.4v10.4h-10.4zM762.4 126.5h10.4v10.4h-10.4zM783.2 126.5h10.4v10.4h-10.4zM804.0 126.5h10.4v10.4h-10.4zM96.8 136.9h10.4v10.4h-10.4zM107.2 136.9h10.4v10.4h-10.4zM148.8 136.9h10.4v10.4h-10.4zM190.4 136.9h10.4v10.4h-10.4zM96.8 147.3h10.4v10.4h-10.4zM148.8 147.3h10.4v10.4h-10.4zM169.6 147.3h10.4v10.4h-10.4zM772.8 147.3h10.4v10.4h-10.4zM793.6 147.3h10.4v10.4h-10.4zM44.8 157.7h10.4v10.4h-10.4zM65.6 157.7h10.4v10.4h-10.4zM117.6 157.7h10.4v10.4h-10.4zM159.2 157.7h10.4v10.4h-10.4zM783.2 157.7h10.4v10.4h-10.4zM55.2 168.1h10.4v10.4h-10.4zM76.0 168.1h10.4v10.4h-10.4zM86.4 168.1h10.4v10.4h-10.4zM107.2 168.1h10.4v10.4h-10.4zM128.0 168.1h10.4v10.4h-10.4zM169.6 168.1h10.4v10.4h-10.4zM180.0 168.1h10.4v10.4h-10.4zM752.0 168.1h10.4v10.4h-10.4zM793.6 168.1h10.4v10.4h-10.4zM814.4 168.1h10.4v10.4h-10.4zM3.2 178.5h10.4v10.4h-10.4zM13.6 178.5h10.4v10.4h-10.4zM44.8 178.5h10.4v10.4h-10.4zM55.2 178.5h10.4v10.4h-10.4zM86.4 178.5h10.4v10.4h-10.4zM117.6 178.5h10.4v10.4h-10.4zM814.4 178.5h10.4v10.4h-10.4zM-7.2 188.9h10.4v10.4h-10.4zM96.8 188.9h10.4v10.4h-10.4zM107.2 188.9h10.4v10.4h-10.4zM117.6 188.9h10.4v10.4h-10.4zM138.4 188.9h10.4v10.4h-10.4zM169.6 188.9h10.4v10.4h-10.4zM772.8 188.9h10.4v10.4h-10.4zM793.6 188.9h10.4v10.4h-10.4zM804.0 188.9h10.4v10.4h-10.4zM86.4 199.3h10.4v10.4h-10.4zM107.2 199.3h10.4v10.4h-10.4zM128.0 199.3h10.4v10.4h-10.4zM159.2 199.3h10.4v10.4h-10.4zM169.6 199.3h10.4v10.4h-10.4zM752.0 199.3h10.4v10.4h-10.4zM96.8 209.7h10.4v10.4h-10.4zM128.0 209.7h10.4v10.4h-10.4zM148.8 209.7h10.4v10.4h-10.4zM159.2 209.7h10.4v10.4h-10.4zM180.0 209.7h10.4v10.4h-10.4zM86.4 220.1h10.4v10.4h-10.4zM148.8 220.1h10.4v10.4h-10.4zM169.6 220.1h10.4v10.4h-10.4zM180.0 220.1h10.4v10.4h-10.4zM190.4 220.1h10.4v10.4h-10.4zM783.2 220.1h10.4v10.4h-10.4zM814.4 220.1h10.4v10.4h-10.4zM148.8 230.5h10.4v10.4h-10.4zM169.6 230.5h10.4v10.4h-10.4zM783.2 230.5h10.4v10.4h-10.4zM752.0 240.9h10.4v10.4h-10.4zM86.4 251.3h10.4v10.4h-10.4zM169.6 251.3h10.4v10.4h-10.4zM180.0 251.3h10.4v10.4h-10.4zM762.4 251.3h10.4v10.4h-10.4zM86.4 261.7h10.4v10.4h-10.4zM107.2 261.7h10.4v10.4h-10.4zM159.2 261.7h10.4v10.4h-10.4zM180.0 261.7h10.4v10.4h-10.4zM190.4 261.7h10.4v10.4h-10.4zM128.0 272.1h10.4v10.4h-10.4zM138.4 272.1h10.4v10.4h-10.4zM148.8 272.1h10.4v10.4h-10.4zM180.0 272.1h10.4v10.4h-10.4zM190.4 272.1h10.4v10.4h-10.4zM762.4 272.1h10.4v10.4h-10.4zM86.4 282.5h10.4v10.4h-10.4zM128.0 282.5h10.4v10.4h-10.4zM148.8 282.5h10.4v10.4h-10.4zM169.6 282.5h10.4v10.4h-10.4zM180.0 282.5h10.4v10.4h-10.4zM190.4 282.5h10.4v10.4h-10.4zM772.8 282.5h10.4v10.4h-10.4zM793.6 282.5h10.4v10.4h-10.4zM804.0 282.5h10.4v10.4h-10.4zM86.4 292.9h10.4v10.4h-10.4zM96.8 292.9h10.4v10.4h-10.4zM128.0 292.9h10.4v10.4h-10.4zM138.4 292.9h10.4v10.4h-10.4zM148.8 292.9h10.4v10.4h-10.4zM159.2 292.9h10.4v10.4h-10.4zM169.6 292.9h10.4v10.4h-10.4zM180.0 292.9h10.4v10.4h-10.4zM793.6 292.9h10.4v10.4h-10.4zM86.4 303.3h10.4v10.4h-10.4zM159.2 303.3h10.4v10.4h-10.4zM190.4 303.3h10.4v10.4h-10.4zM783.2 303.3h10.4v10.4h-10.4zM814.4 303.3h10.4v10.4h-10.4zM117.6 313.7h10.4v10.4h-10.4zM128.0 313.7h10.4v10.4h-10.4zM138.4 313.7h10.4v10.4h-10.4zM190.4 313.7h10.4v10.4h-10.4zM752.0 313.7h10.4v10.4h-10.4zM783.2 313.7h10.4v10.4h-10.4zM772.8 324.1h10.4v10.4h-10.4zM814.4 324.1h10.4v10.4h-10.4zM783.2 334.5h10.4v10.4h-10.4zM814.4 334.5h10.4v10.4h-10.4zM804.0 355.3h10.4v10.4h-10.4zM762.4 365.7h10.4v10.4h-10.4zM793.6 376.1h10.4v10.4h-10.4zM783.2 386.5h10.4v10.4h-10.4zM793.6 386.5h10.4v10.4h-10.4zM783.2 396.9h10.4v10.4h-10.4zM804.0 396.9h10.4v10.4h-10.4zM762.4 407.3h10.4v10.4h-10.4zM783.2 407.3h10.4v10.4h-10.4zM762.4 417.7h10.4v10.4h-10.4zM783.2 417.7h10.4v10.4h-10.4z" fill="#0b0b0b"/><path d="M533.6 126.5h10.4v10.4h-10.4zM679.2 126.5h10.4v10.4h-10.4zM689.6 126.5h10.4v10.4h-10.4zM200.8 136.9h10.4v10.4h-10.4zM211.2 136.9h10.4v10.4h-10.4zM252.8 136.9h10.4v10.4h-10.4zM263.2 136.9h10.4v10.4h-10.4zM273.6 136.9h10.4v10.4h-10.4zM294.4 136.9h10.4v10.4h-10.4zM377.6 136.9h10.4v10.4h-10.4zM450.4 136.9h10.4v10.4h-10.4zM460.8 136.9h10.4v10.4h-10.4zM502.4 136.9h10.4v10.4h-10.4zM533.6 136.9h10.4v10.4h-10.4zM637.6 136.9h10.4v10.4h-10.4zM648.0 136.9h10.4v10.4h-10.4zM658.4 136.9h10.4v10.4h-10.4zM679.2 136.9h10.4v10.4h-10.4zM200.8 147.3h10.4v10.4h-10.4zM221.6 147.3h10.4v10.4h-10.4zM252.8 147.3h10.4v10.4h-10.4zM356.8 147.3h10.4v10.4h-10.4zM377.6 147.3h10.4v10.4h-10.4zM388.0 147.3h10.4v10.4h-10.4zM408.8 147.3h10.4v10.4h-10.4zM419.2 147.3h10.4v10.4h-10.4zM429.6 147.3h10.4v10.4h-10.4zM523.2 147.3h10.4v10.4h-10.4zM533.6 147.3h10.4v10.4h-10.4zM616.8 147.3h10.4v10.4h-10.4zM627.2 147.3h10.4v10.4h-10.4zM668.8 147.3h10.4v10.4h-10.4zM679.2 147.3h10.4v10.4h-10.4zM252.8 157.7h10.4v10.4h-10.4zM263.2 157.7h10.4v10.4h-10.4zM346.4 157.7h10.4v10.4h-10.4zM388.0 157.7h10.4v10.4h-10.4zM450.4 157.7h10.4v10.4h-10.4zM460.8 157.7h10.4v10.4h-10.4zM481.6 157.7h10.4v10.4h-10.4zM492.0 157.7h10.4v10.4h-10.4zM544.0 157.7h10.4v10.4h-10.4zM689.6 157.7h10.4v10.4h-10.4zM252.8 168.1h10.4v10.4h-10.4zM325.6 168.1h10.4v10.4h-10.4zM336.0 168.1h10.4v10.4h-10.4zM367.2 168.1h10.4v10.4h-10.4zM388.0 168.1h10.4v10.4h-10.4zM419.2 168.1h10.4v10.4h-10.4zM440.0 168.1h10.4v10.4h-10.4zM564.8 168.1h10.4v10.4h-10.4zM575.2 168.1h10.4v10.4h-10.4zM627.2 168.1h10.4v10.4h-10.4zM668.8 168.1h10.4v10.4h-10.4zM679.2 168.1h10.4v10.4h-10.4zM200.8 178.5h10.4v10.4h-10.4zM211.2 178.5h10.4v10.4h-10.4zM242.4 178.5h10.4v10.4h-10.4zM273.6 178.5h10.4v10.4h-10.4zM315.2 178.5h10.4v10.4h-10.4zM325.6 178.5h10.4v10.4h-10.4zM346.4 178.5h10.4v10.4h-10.4zM388.0 178.5h10.4v10.4h-10.4zM398.4 178.5h10.4v10.4h-10.4zM450.4 178.5h10.4v10.4h-10.4zM564.8 178.5h10.4v10.4h-10.4zM606.4 178.5h10.4v10.4h-10.4zM616.8 178.5h10.4v10.4h-10.4zM627.2 178.5h10.4v10.4h-10.4zM648.0 178.5h10.4v10.4h-10.4zM658.4 178.5h10.4v10.4h-10.4zM679.2 178.5h10.4v10.4h-10.4zM211.2 188.9h10.4v10.4h-10.4zM221.6 188.9h10.4v10.4h-10.4zM232.0 188.9h10.4v10.4h-10.4zM284.0 188.9h10.4v10.4h-10.4zM304.8 188.9h10.4v10.4h-10.4zM325.6 188.9h10.4v10.4h-10.4zM356.8 188.9h10.4v10.4h-10.4zM367.2 188.9h10.4v10.4h-10.4zM492.0 188.9h10.4v10.4h-10.4zM575.2 188.9h10.4v10.4h-10.4zM585.6 188.9h10.4v10.4h-10.4zM627.2 188.9h10.4v10.4h-10.4zM679.2 188.9h10.4v10.4h-10.4zM689.6 188.9h10.4v10.4h-10.4zM263.2 199.3h10.4v10.4h-10.4zM294.4 199.3h10.4v10.4h-10.4zM304.8 199.3h10.4v10.4h-10.4zM336.0 199.3h10.4v10.4h-10.4zM346.4 199.3h10.4v10.4h-10.4zM377.6 199.3h10.4v10.4h-10.4zM398.4 199.3h10.4v10.4h-10.4zM419.2 199.3h10.4v10.4h-10.4zM440.0 199.3h10.4v10.4h-10.4zM544.0 199.3h10.4v10.4h-10.4zM585.6 199.3h10.4v10.4h-10.4zM616.8 199.3h10.4v10.4h-10.4zM637.6 199.3h10.4v10.4h-10.4zM679.2 199.3h10.4v10.4h-10.4zM200.8 209.7h10.4v10.4h-10.4zM211.2 209.7h10.4v10.4h-10.4zM263.2 209.7h10.4v10.4h-10.4zM284.0 209.7h10.4v10.4h-10.4zM294.4 209.7h10.4v10.4h-10.4zM304.8 209.7h10.4v10.4h-10.4zM315.2 209.7h10.4v10.4h-10.4zM336.0 209.7h10.4v10.4h-10.4zM356.8 209.7h10.4v10.4h-10.4zM367.2 209.7h10.4v10.4h-10.4zM388.0 209.7h10.4v10.4h-10.4zM398.4 209.7h10.4v10.4h-10.4zM429.6 209.7h10.4v10.4h-10.4zM450.4 209.7h10.4v10.4h-10.4zM554.4 209.7h10.4v10.4h-10.4zM637.6 209.7h10.4v10.4h-10.4zM263.2 220.1h10.4v10.4h-10.4zM429.6 220.1h10.4v10.4h-10.4zM523.2 220.1h10.4v10.4h-10.4zM627.2 220.1h10.4v10.4h-10.4zM668.8 220.1h10.4v10.4h-10.4zM232.0 230.5h10.4v10.4h-10.4zM252.8 230.5h10.4v10.4h-10.4zM263.2 230.5h10.4v10.4h-10.4zM304.8 230.5h10.4v10.4h-10.4zM346.4 230.5h10.4v10.4h-10.4zM367.2 230.5h10.4v10.4h-10.4zM408.8 230.5h10.4v10.4h-10.4zM419.2 230.5h10.4v10.4h-10.4zM429.6 230.5h10.4v10.4h-10.4zM450.4 230.5h10.4v10.4h-10.4zM637.6 230.5h10.4v10.4h-10.4zM668.8 230.5h10.4v10.4h-10.4zM689.6 230.5h10.4v10.4h-10.4zM200.8 240.9h10.4v10.4h-10.4zM221.6 240.9h10.4v10.4h-10.4zM273.6 240.9h10.4v10.4h-10.4zM346.4 240.9h10.4v10.4h-10.4zM377.6 240.9h10.4v10.4h-10.4zM398.4 240.9h10.4v10.4h-10.4zM450.4 240.9h10.4v10.4h-10.4zM512.8 240.9h10.4v10.4h-10.4zM544.0 240.9h10.4v10.4h-10.4zM585.6 240.9h10.4v10.4h-10.4zM232.0 251.3h10.4v10.4h-10.4zM242.4 251.3h10.4v10.4h-10.4zM294.4 251.3h10.4v10.4h-10.4zM315.2 251.3h10.4v10.4h-10.4zM346.4 251.3h10.4v10.4h-10.4zM388.0 251.3h10.4v10.4h-10.4zM440.0 251.3h10.4v10.4h-10.4zM554.4 251.3h10.4v10.4h-10.4zM575.2 251.3h10.4v10.4h-10.4zM658.4 251.3h10.4v10.4h-10.4zM679.2 251.3h10.4v10.4h-10.4zM252.8 261.7h10.4v10.4h-10.4zM263.2 261.7h10.4v10.4h-10.4zM346.4 261.7h10.4v10.4h-10.4zM377.6 261.7h10.4v10.4h-10.4zM408.8 261.7h10.4v10.4h-10.4zM450.4 261.7h10.4v10.4h-10.4zM460.8 261.7h10.4v10.4h-10.4zM481.6 261.7h10.4v10.4h-10.4zM679.2 261.7h10.4v10.4h-10.4zM200.8 272.1h10.4v10.4h-10.4zM211.2 272.1h10.4v10.4h-10.4zM263.2 272.1h10.4v10.4h-10.4zM284.0 272.1h10.4v10.4h-10.4zM356.8 272.1h10.4v10.4h-10.4zM450.4 272.1h10.4v10.4h-10.4zM460.8 272.1h10.4v10.4h-10.4zM471.2 272.1h10.4v10.4h-10.4zM544.0 272.1h10.4v10.4h-10.4zM554.4 272.1h10.4v10.4h-10.4zM679.2 272.1h10.4v10.4h-10.4zM689.6 272.1h10.4v10.4h-10.4zM200.8 282.5h10.4v10.4h-10.4zM221.6 282.5h10.4v10.4h-10.4zM263.2 282.5h10.4v10.4h-10.4zM294.4 282.5h10.4v10.4h-10.4zM367.2 282.5h10.4v10.4h-10.4zM388.0 282.5h10.4v10.4h-10.4zM419.2 282.5h10.4v10.4h-10.4zM440.0 282.5h10.4v10.4h-10.4zM679.2 282.5h10.4v10.4h-10.4zM221.6 292.9h10.4v10.4h-10.4zM263.2 292.9h10.4v10.4h-10.4zM273.6 292.9h10.4v10.4h-10.4zM304.8 292.9h10.4v10.4h-10.4zM315.2 292.9h10.4v10.4h-10.4zM398.4 292.9h10.4v10.4h-10.4zM450.4 292.9h10.4v10.4h-10.4zM492.0 292.9h10.4v10.4h-10.4zM564.8 292.9h10.4v10.4h-10.4zM679.2 292.9h10.4v10.4h-10.4zM200.8 303.3h10.4v10.4h-10.4zM221.6 303.3h10.4v10.4h-10.4zM304.8 303.3h10.4v10.4h-10.4zM367.2 303.3h10.4v10.4h-10.4zM377.6 303.3h10.4v10.4h-10.4zM388.0 303.3h10.4v10.4h-10.4zM429.6 303.3h10.4v10.4h-10.4zM450.4 303.3h10.4v10.4h-10.4zM668.8 303.3h10.4v10.4h-10.4zM689.6 303.3h10.4v10.4h-10.4zM211.2 313.7h10.4v10.4h-10.4zM221.6 313.7h10.4v10.4h-10.4zM252.8 313.7h10.4v10.4h-10.4zM263.2 313.7h10.4v10.4h-10.4zM408.8 313.7h10.4v10.4h-10.4zM450.4 313.7h10.4v10.4h-10.4zM502.4 313.7h10.4v10.4h-10.4zM512.8 313.7h10.4v10.4h-10.4zM96.8 324.1h10.4v10.4h-10.4zM148.8 324.1h10.4v10.4h-10.4zM159.2 324.1h10.4v10.4h-10.4zM211.2 324.1h10.4v10.4h-10.4zM221.6 324.1h10.4v10.4h-10.4zM232.0 324.1h10.4v10.4h-10.4zM252.8 324.1h10.4v10.4h-10.4zM263.2 324.1h10.4v10.4h-10.4zM284.0 324.1h10.4v10.4h-10.4zM315.2 324.1h10.4v10.4h-10.4zM325.6 324.1h10.4v10.4h-10.4zM367.2 324.1h10.4v10.4h-10.4zM471.2 324.1h10.4v10.4h-10.4zM502.4 324.1h10.4v10.4h-10.4zM585.6 324.1h10.4v10.4h-10.4zM679.2 324.1h10.4v10.4h-10.4zM107.2 334.5h10.4v10.4h-10.4zM128.0 334.5h10.4v10.4h-10.4zM148.8 334.5h10.4v10.4h-10.4zM232.0 334.5h10.4v10.4h-10.4zM242.4 334.5h10.4v10.4h-10.4zM252.8 334.5h10.4v10.4h-10.4zM284.0 334.5h10.4v10.4h-10.4zM304.8 334.5h10.4v10.4h-10.4zM325.6 334.5h10.4v10.4h-10.4zM346.4 334.5h10.4v10.4h-10.4zM388.0 334.5h10.4v10.4h-10.4zM429.6 334.5h10.4v10.4h-10.4zM512.8 334.5h10.4v10.4h-10.4zM523.2 334.5h10.4v10.4h-10.4zM627.2 334.5h10.4v10.4h-10.4zM668.8 334.5h10.4v10.4h-10.4zM159.2 344.9h10.4v10.4h-10.4zM169.6 344.9h10.4v10.4h-10.4zM180.0 344.9h10.4v10.4h-10.4zM200.8 344.9h10.4v10.4h-10.4zM221.6 344.9h10.4v10.4h-10.4zM242.4 344.9h10.4v10.4h-10.4zM252.8 344.9h10.4v10.4h-10.4zM315.2 344.9h10.4v10.4h-10.4zM367.2 344.9h10.4v10.4h-10.4zM471.2 344.9h10.4v10.4h-10.4zM502.4 344.9h10.4v10.4h-10.4zM512.8 344.9h10.4v10.4h-10.4zM554.4 344.9h10.4v10.4h-10.4zM679.2 344.9h10.4v10.4h-10.4zM689.6 344.9h10.4v10.4h-10.4zM86.4 355.3h10.4v10.4h-10.4zM117.6 355.3h10.4v10.4h-10.4zM128.0 355.3h10.4v10.4h-10.4zM242.4 355.3h10.4v10.4h-10.4zM252.8 355.3h10.4v10.4h-10.4zM263.2 355.3h10.4v10.4h-10.4zM284.0 355.3h10.4v10.4h-10.4zM294.4 355.3h10.4v10.4h-10.4zM304.8 355.3h10.4v10.4h-10.4zM377.6 355.3h10.4v10.4h-10.4zM429.6 355.3h10.4v10.4h-10.4zM471.2 355.3h10.4v10.4h-10.4zM554.4 355.3h10.4v10.4h-10.4zM616.8 355.3h10.4v10.4h-10.4zM679.2 355.3h10.4v10.4h-10.4zM689.6 355.3h10.4v10.4h-10.4zM86.4 365.7h10.4v10.4h-10.4zM138.4 365.7h10.4v10.4h-10.4zM159.2 365.7h10.4v10.4h-10.4zM190.4 365.7h10.4v10.4h-10.4zM242.4 365.7h10.4v10.4h-10.4zM273.6 365.7h10.4v10.4h-10.4zM284.0 365.7h10.4v10.4h-10.4zM346.4 365.7h10.4v10.4h-10.4zM356.8 365.7h10.4v10.4h-10.4zM377.6 365.7h10.4v10.4h-10.4zM388.0 365.7h10.4v10.4h-10.4zM398.4 365.7h10.4v10.4h-10.4zM419.2 365.7h10.4v10.4h-10.4zM429.6 365.7h10.4v10.4h-10.4zM440.0 365.7h10.4v10.4h-10.4zM460.8 365.7h10.4v10.4h-10.4zM471.2 365.7h10.4v10.4h-10.4zM107.2 376.1h10.4v10.4h-10.4zM159.2 376.1h10.4v10.4h-10.4zM169.6 376.1h10.4v10.4h-10.4zM190.4 376.1h10.4v10.4h-10.4zM273.6 376.1h10.4v10.4h-10.4zM356.8 376.1h10.4v10.4h-10.4zM367.2 376.1h10.4v10.4h-10.4zM408.8 376.1h10.4v10.4h-10.4zM440.0 376.1h10.4v10.4h-10.4zM502.4 376.1h10.4v10.4h-10.4zM117.6 386.5h10.4v10.4h-10.4zM169.6 386.5h10.4v10.4h-10.4zM221.6 386.5h10.4v10.4h-10.4zM242.4 386.5h10.4v10.4h-10.4zM273.6 386.5h10.4v10.4h-10.4zM294.4 386.5h10.4v10.4h-10.4zM346.4 386.5h10.4v10.4h-10.4zM408.8 386.5h10.4v10.4h-10.4zM429.6 386.5h10.4v10.4h-10.4zM471.2 386.5h10.4v10.4h-10.4zM679.2 386.5h10.4v10.4h-10.4zM200.8 396.9h10.4v10.4h-10.4zM232.0 396.9h10.4v10.4h-10.4zM242.4 396.9h10.4v10.4h-10.4zM273.6 396.9h10.4v10.4h-10.4zM294.4 396.9h10.4v10.4h-10.4zM315.2 396.9h10.4v10.4h-10.4zM388.0 396.9h10.4v10.4h-10.4zM450.4 396.9h10.4v10.4h-10.4zM564.8 396.9h10.4v10.4h-10.4zM616.8 396.9h10.4v10.4h-10.4zM668.8 396.9h10.4v10.4h-10.4zM679.2 396.9h10.4v10.4h-10.4zM148.8 407.3h10.4v10.4h-10.4zM200.8 407.3h10.4v10.4h-10.4zM211.2 407.3h10.4v10.4h-10.4zM221.6 407.3h10.4v10.4h-10.4zM336.0 407.3h10.4v10.4h-10.4zM356.8 407.3h10.4v10.4h-10.4zM419.2 407.3h10.4v10.4h-10.4zM429.6 407.3h10.4v10.4h-10.4zM460.8 407.3h10.4v10.4h-10.4zM481.6 407.3h10.4v10.4h-10.4zM502.4 407.3h10.4v10.4h-10.4zM554.4 407.3h10.4v10.4h-10.4zM616.8 407.3h10.4v10.4h-10.4zM96.8 417.7h10.4v10.4h-10.4zM263.2 417.7h10.4v10.4h-10.4zM294.4 417.7h10.4v10.4h-10.4zM336.0 417.7h10.4v10.4h-10.4zM356.8 417.7h10.4v10.4h-10.4zM408.8 417.7h10.4v10.4h-10.4zM502.4 417.7h10.4v10.4h-10.4zM544.0 417.7h10.4v10.4h-10.4zM596.0 417.7h10.4v10.4h-10.4zM648.0 417.7h10.4v10.4h-10.4zM658.4 417.7h10.4v10.4h-10.4zM86.4 428.1h10.4v10.4h-10.4zM148.8 428.1h10.4v10.4h-10.4zM159.2 428.1h10.4v10.4h-10.4zM200.8 428.1h10.4v10.4h-10.4zM211.2 428.1h10.4v10.4h-10.4zM232.0 428.1h10.4v10.4h-10.4zM242.4 428.1h10.4v10.4h-10.4zM252.8 428.1h10.4v10.4h-10.4zM284.0 428.1h10.4v10.4h-10.4zM336.0 428.1h10.4v10.4h-10.4zM388.0 428.1h10.4v10.4h-10.4zM408.8 428.1h10.4v10.4h-10.4zM159.2 438.5h10.4v10.4h-10.4zM169.6 438.5h10.4v10.4h-10.4zM180.0 438.5h10.4v10.4h-10.4zM190.4 438.5h10.4v10.4h-10.4zM200.8 438.5h10.4v10.4h-10.4zM221.6 438.5h10.4v10.4h-10.4zM284.0 438.5h10.4v10.4h-10.4zM336.0 438.5h10.4v10.4h-10.4zM585.6 438.5h10.4v10.4h-10.4zM86.4 448.9h10.4v10.4h-10.4zM107.2 448.9h10.4v10.4h-10.4zM138.4 448.9h10.4v10.4h-10.4zM159.2 448.9h10.4v10.4h-10.4zM180.0 448.9h10.4v10.4h-10.4zM284.0 448.9h10.4v10.4h-10.4zM304.8 448.9h10.4v10.4h-10.4zM325.6 448.9h10.4v10.4h-10.4zM336.0 448.9h10.4v10.4h-10.4zM356.8 448.9h10.4v10.4h-10.4zM377.6 448.9h10.4v10.4h-10.4zM398.4 448.9h10.4v10.4h-10.4zM585.6 448.9h10.4v10.4h-10.4zM55.2 459.3h10.4v10.4h-10.4zM200.8 459.3h10.4v10.4h-10.4zM346.4 459.3h10.4v10.4h-10.4zM596.0 459.3h10.4v10.4h-10.4zM3.2 469.7h10.4v10.4h-10.4zM13.6 469.7h10.4v10.4h-10.4zM24.0 469.7h10.4v10.4h-10.4zM159.2 469.7h10.4v10.4h-10.4zM180.0 469.7h10.4v10.4h-10.4zM232.0 469.7h10.4v10.4h-10.4zM252.8 469.7h10.4v10.4h-10.4zM273.6 469.7h10.4v10.4h-10.4zM304.8 469.7h10.4v10.4h-10.4zM-7.2 480.1h10.4v10.4h-10.4zM13.6 480.1h10.4v10.4h-10.4zM44.8 480.1h10.4v10.4h-10.4zM55.2 480.1h10.4v10.4h-10.4zM65.6 480.1h10.4v10.4h-10.4zM76.0 480.1h10.4v10.4h-10.4zM211.2 480.1h10.4v10.4h-10.4zM232.0 480.1h10.4v10.4h-10.4zM242.4 480.1h10.4v10.4h-10.4zM252.8 480.1h10.4v10.4h-10.4zM273.6 480.1h10.4v10.4h-10.4zM284.0 480.1h10.4v10.4h-10.4zM325.6 480.1h10.4v10.4h-10.4zM377.6 480.1h10.4v10.4h-10.4zM398.4 480.1h10.4v10.4h-10.4zM3.2 490.5h10.4v10.4h-10.4zM24.0 490.5h10.4v10.4h-10.4zM34.4 490.5h10.4v10.4h-10.4zM76.0 490.5h10.4v10.4h-10.4zM190.4 490.5h10.4v10.4h-10.4zM200.8 490.5h10.4v10.4h-10.4zM221.6 490.5h10.4v10.4h-10.4zM232.0 490.5h10.4v10.4h-10.4zM273.6 490.5h10.4v10.4h-10.4zM585.6 490.5h10.4v10.4h-10.4zM96.8 500.9h10.4v10.4h-10.4zM159.2 500.9h10.4v10.4h-10.4zM169.6 500.9h10.4v10.4h-10.4zM180.0 500.9h10.4v10.4h-10.4zM596.0 500.9h10.4v10.4h-10.4zM76.0 511.3h10.4v10.4h-10.4zM86.4 511.3h10.4v10.4h-10.4zM606.4 511.3h10.4v10.4h-10.4zM86.4 521.7h10.4v10.4h-10.4zM596.0 521.7h10.4v10.4h-10.4zM-7.2 532.1h10.4v10.4h-10.4zM3.2 532.1h10.4v10.4h-10.4zM76.0 532.1h10.4v10.4h-10.4zM596.0 532.1h10.4v10.4h-10.4zM606.4 532.1h10.4v10.4h-10.4zM-7.2 542.5h10.4v10.4h-10.4zM3.2 542.5h10.4v10.4h-10.4zM65.6 542.5h10.4v10.4h-10.4zM76.0 542.5h10.4v10.4h-10.4zM585.6 542.5h10.4v10.4h-10.4zM596.0 542.5h10.4v10.4h-10.4zM-7.2 552.9h10.4v10.4h-10.4zM13.6 552.9h10.4v10.4h-10.4zM86.4 552.9h10.4v10.4h-10.4zM596.0 552.9h10.4v10.4h-10.4zM3.2 563.3h10.4v10.4h-10.4zM24.0 563.3h10.4v10.4h-10.4zM34.4 563.3h10.4v10.4h-10.4zM65.6 563.3h10.4v10.4h-10.4zM76.0 563.3h10.4v10.4h-10.4zM86.4 563.3h10.4v10.4h-10.4zM606.4 563.3h10.4v10.4h-10.4zM44.8 573.7h10.4v10.4h-10.4zM232.0 573.7h10.4v10.4h-10.4zM252.8 573.7h10.4v10.4h-10.4zM273.6 573.7h10.4v10.4h-10.4zM284.0 573.7h10.4v10.4h-10.4zM596.0 573.7h10.4v10.4h-10.4zM606.4 584.1h10.4v10.4h-10.4zM606.4 594.5h10.4v10.4h-10.4zM606.4 604.9h10.4v10.4h-10.4zM585.6 615.3h10.4v10.4h-10.4zM606.4 615.3h10.4v10.4h-10.4zM585.6 646.5h10.4v10.4h-10.4z" fill="#151515"/><path d="M544.0 126.5h10.4v10.4h-10.4zM554.4 126.5h10.4v10.4h-10.4zM564.8 126.5h10.4v10.4h-10.4zM648.0 126.5h10.4v10.4h-10.4zM668.8 126.5h10.4v10.4h-10.4zM492.0 136.9h10.4v10.4h-10.4zM512.8 136.9h10.4v10.4h-10.4zM554.4 136.9h10.4v10.4h-10.4zM575.2 136.9h10.4v10.4h-10.4zM481.6 147.3h10.4v10.4h-10.4zM544.0 147.3h10.4v10.4h-10.4zM564.8 147.3h10.4v10.4h-10.4zM471.2 157.7h10.4v10.4h-10.4zM502.4 157.7h10.4v10.4h-10.4zM512.8 157.7h10.4v10.4h-10.4zM533.6 157.7h10.4v10.4h-10.4zM564.8 157.7h10.4v10.4h-10.4zM575.2 157.7h10.4v10.4h-10.4zM585.6 157.7h10.4v10.4h-10.4zM492.0 168.1h10.4v10.4h-10.4zM502.4 168.1h10.4v10.4h-10.4zM596.0 168.1h10.4v10.4h-10.4zM606.4 168.1h10.4v10.4h-10.4zM471.2 178.5h10.4v10.4h-10.4zM481.6 178.5h10.4v10.4h-10.4zM492.0 178.5h10.4v10.4h-10.4zM502.4 178.5h10.4v10.4h-10.4zM512.8 178.5h10.4v10.4h-10.4zM554.4 178.5h10.4v10.4h-10.4zM585.6 178.5h10.4v10.4h-10.4zM471.2 188.9h10.4v10.4h-10.4zM512.8 188.9h10.4v10.4h-10.4zM554.4 188.9h10.4v10.4h-10.4zM564.8 188.9h10.4v10.4h-10.4zM606.4 188.9h10.4v10.4h-10.4zM616.8 188.9h10.4v10.4h-10.4zM648.0 188.9h10.4v10.4h-10.4zM471.2 199.3h10.4v10.4h-10.4zM481.6 199.3h10.4v10.4h-10.4zM564.8 199.3h10.4v10.4h-10.4zM575.2 199.3h10.4v10.4h-10.4zM596.0 199.3h10.4v10.4h-10.4zM606.4 199.3h10.4v10.4h-10.4zM627.2 199.3h10.4v10.4h-10.4zM648.0 199.3h10.4v10.4h-10.4zM658.4 199.3h10.4v10.4h-10.4zM668.8 199.3h10.4v10.4h-10.4zM471.2 209.7h10.4v10.4h-10.4zM502.4 209.7h10.4v10.4h-10.4zM585.6 209.7h10.4v10.4h-10.4zM596.0 209.7h10.4v10.4h-10.4zM606.4 209.7h10.4v10.4h-10.4zM627.2 209.7h10.4v10.4h-10.4zM658.4 209.7h10.4v10.4h-10.4zM471.2 220.1h10.4v10.4h-10.4zM481.6 220.1h10.4v10.4h-10.4zM492.0 220.1h10.4v10.4h-10.4zM533.6 220.1h10.4v10.4h-10.4zM544.0 220.1h10.4v10.4h-10.4zM564.8 220.1h10.4v10.4h-10.4zM585.6 220.1h10.4v10.4h-10.4zM596.0 220.1h10.4v10.4h-10.4zM616.8 220.1h10.4v10.4h-10.4zM481.6 230.5h10.4v10.4h-10.4zM492.0 230.5h10.4v10.4h-10.4zM502.4 230.5h10.4v10.4h-10.4zM512.8 230.5h10.4v10.4h-10.4zM544.0 230.5h10.4v10.4h-10.4zM554.4 230.5h10.4v10.4h-10.4zM564.8 230.5h10.4v10.4h-10.4zM585.6 230.5h10.4v10.4h-10.4zM596.0 230.5h10.4v10.4h-10.4zM627.2 230.5h10.4v10.4h-10.4zM648.0 230.5h10.4v10.4h-10.4zM471.2 240.9h10.4v10.4h-10.4zM502.4 240.9h10.4v10.4h-10.4zM523.2 240.9h10.4v10.4h-10.4zM564.8 240.9h10.4v10.4h-10.4zM596.0 240.9h10.4v10.4h-10.4zM606.4 240.9h10.4v10.4h-10.4zM637.6 240.9h10.4v10.4h-10.4zM658.4 240.9h10.4v10.4h-10.4zM679.2 240.9h10.4v10.4h-10.4zM544.0 251.3h10.4v10.4h-10.4zM585.6 251.3h10.4v10.4h-10.4zM627.2 251.3h10.4v10.4h-10.4zM637.6 251.3h10.4v10.4h-10.4zM648.0 251.3h10.4v10.4h-10.4zM492.0 261.7h10.4v10.4h-10.4zM512.8 261.7h10.4v10.4h-10.4zM533.6 261.7h10.4v10.4h-10.4zM544.0 261.7h10.4v10.4h-10.4zM585.6 261.7h10.4v10.4h-10.4zM627.2 261.7h10.4v10.4h-10.4zM648.0 261.7h10.4v10.4h-10.4zM481.6 272.1h10.4v10.4h-10.4zM492.0 272.1h10.4v10.4h-10.4zM502.4 272.1h10.4v10.4h-10.4zM523.2 272.1h10.4v10.4h-10.4zM533.6 272.1h10.4v10.4h-10.4zM564.8 272.1h10.4v10.4h-10.4zM575.2 272.1h10.4v10.4h-10.4zM585.6 272.1h10.4v10.4h-10.4zM596.0 272.1h10.4v10.4h-10.4zM648.0 272.1h10.4v10.4h-10.4zM668.8 272.1h10.4v10.4h-10.4zM471.2 282.5h10.4v10.4h-10.4zM512.8 282.5h10.4v10.4h-10.4zM554.4 282.5h10.4v10.4h-10.4zM564.8 282.5h10.4v10.4h-10.4zM575.2 282.5h10.4v10.4h-10.4zM471.2 292.9h10.4v10.4h-10.4zM512.8 292.9h10.4v10.4h-10.4zM523.2 292.9h10.4v10.4h-10.4zM575.2 292.9h10.4v10.4h-10.4zM585.6 292.9h10.4v10.4h-10.4zM596.0 292.9h10.4v10.4h-10.4zM606.4 292.9h10.4v10.4h-10.4zM637.6 292.9h10.4v10.4h-10.4zM668.8 292.9h10.4v10.4h-10.4zM471.2 303.3h10.4v10.4h-10.4zM492.0 303.3h10.4v10.4h-10.4zM502.4 303.3h10.4v10.4h-10.4zM533.6 303.3h10.4v10.4h-10.4zM554.4 303.3h10.4v10.4h-10.4zM564.8 303.3h10.4v10.4h-10.4zM596.0 303.3h10.4v10.4h-10.4zM606.4 303.3h10.4v10.4h-10.4zM471.2 313.7h10.4v10.4h-10.4zM533.6 313.7h10.4v10.4h-10.4zM554.4 313.7h10.4v10.4h-10.4zM575.2 313.7h10.4v10.4h-10.4zM585.6 313.7h10.4v10.4h-10.4zM637.6 313.7h10.4v10.4h-10.4zM481.6 324.1h10.4v10.4h-10.4zM512.8 324.1h10.4v10.4h-10.4zM533.6 324.1h10.4v10.4h-10.4zM544.0 324.1h10.4v10.4h-10.4zM554.4 324.1h10.4v10.4h-10.4zM616.8 324.1h10.4v10.4h-10.4zM627.2 324.1h10.4v10.4h-10.4zM648.0 324.1h10.4v10.4h-10.4zM668.8 324.1h10.4v10.4h-10.4zM481.6 334.5h10.4v10.4h-10.4zM492.0 334.5h10.4v10.4h-10.4zM533.6 334.5h10.4v10.4h-10.4zM575.2 334.5h10.4v10.4h-10.4zM585.6 334.5h10.4v10.4h-10.4zM596.0 334.5h10.4v10.4h-10.4zM606.4 334.5h10.4v10.4h-10.4zM637.6 334.5h10.4v10.4h-10.4zM658.4 334.5h10.4v10.4h-10.4zM481.6 344.9h10.4v10.4h-10.4zM492.0 344.9h10.4v10.4h-10.4zM585.6 344.9h10.4v10.4h-10.4zM596.0 344.9h10.4v10.4h-10.4zM616.8 344.9h10.4v10.4h-10.4zM627.2 344.9h10.4v10.4h-10.4zM648.0 344.9h10.4v10.4h-10.4zM658.4 344.9h10.4v10.4h-10.4zM481.6 355.3h10.4v10.4h-10.4zM492.0 355.3h10.4v10.4h-10.4zM627.2 355.3h10.4v10.4h-10.4zM637.6 355.3h10.4v10.4h-10.4zM648.0 355.3h10.4v10.4h-10.4zM658.4 355.3h10.4v10.4h-10.4zM668.8 355.3h10.4v10.4h-10.4zM481.6 365.7h10.4v10.4h-10.4zM492.0 365.7h10.4v10.4h-10.4zM523.2 365.7h10.4v10.4h-10.4zM544.0 365.7h10.4v10.4h-10.4zM554.4 365.7h10.4v10.4h-10.4zM564.8 365.7h10.4v10.4h-10.4zM606.4 365.7h10.4v10.4h-10.4zM637.6 365.7h10.4v10.4h-10.4zM668.8 365.7h10.4v10.4h-10.4zM481.6 376.1h10.4v10.4h-10.4zM512.8 376.1h10.4v10.4h-10.4zM523.2 376.1h10.4v10.4h-10.4zM533.6 376.1h10.4v10.4h-10.4zM554.4 376.1h10.4v10.4h-10.4zM637.6 376.1h10.4v10.4h-10.4zM648.0 376.1h10.4v10.4h-10.4zM481.6 386.5h10.4v10.4h-10.4zM492.0 386.5h10.4v10.4h-10.4zM512.8 386.5h10.4v10.4h-10.4zM523.2 386.5h10.4v10.4h-10.4zM544.0 386.5h10.4v10.4h-10.4zM575.2 386.5h10.4v10.4h-10.4zM606.4 386.5h10.4v10.4h-10.4zM637.6 386.5h10.4v10.4h-10.4zM658.4 386.5h10.4v10.4h-10.4zM481.6 396.9h10.4v10.4h-10.4zM502.4 396.9h10.4v10.4h-10.4zM523.2 396.9h10.4v10.4h-10.4zM533.6 396.9h10.4v10.4h-10.4zM585.6 396.9h10.4v10.4h-10.4zM606.4 396.9h10.4v10.4h-10.4zM627.2 396.9h10.4v10.4h-10.4zM471.2 407.3h10.4v10.4h-10.4zM512.8 407.3h10.4v10.4h-10.4zM533.6 407.3h10.4v10.4h-10.4zM544.0 407.3h10.4v10.4h-10.4zM564.8 407.3h10.4v10.4h-10.4zM585.6 407.3h10.4v10.4h-10.4zM596.0 407.3h10.4v10.4h-10.4zM627.2 407.3h10.4v10.4h-10.4zM648.0 407.3h10.4v10.4h-10.4zM658.4 407.3h10.4v10.4h-10.4zM668.8 407.3h10.4v10.4h-10.4zM492.0 417.7h10.4v10.4h-10.4zM575.2 417.7h10.4v10.4h-10.4zM575.2 438.5h10.4v10.4h-10.4zM34.4 459.3h10.4v10.4h-10.4zM44.8 459.3h10.4v10.4h-10.4zM96.8 459.3h10.4v10.4h-10.4zM117.6 459.3h10.4v10.4h-10.4zM138.4 459.3h10.4v10.4h-10.4zM585.6 459.3h10.4v10.4h-10.4zM76.0 469.7h10.4v10.4h-10.4zM96.8 469.7h10.4v10.4h-10.4zM107.2 469.7h10.4v10.4h-10.4zM117.6 469.7h10.4v10.4h-10.4zM128.0 469.7h10.4v10.4h-10.4zM117.6 480.1h10.4v10.4h-10.4zM138.4 480.1h10.4v10.4h-10.4zM564.8 480.1h10.4v10.4h-10.4zM107.2 490.5h10.4v10.4h-10.4zM138.4 490.5h10.4v10.4h-10.4zM564.8 490.5h10.4v10.4h-10.4zM107.2 500.9h10.4v10.4h-10.4zM138.4 500.9h10.4v10.4h-10.4zM148.8 500.9h10.4v10.4h-10.4zM564.8 500.9h10.4v10.4h-10.4zM575.2 500.9h10.4v10.4h-10.4zM585.6 500.9h10.4v10.4h-10.4zM107.2 511.3h10.4v10.4h-10.4zM117.6 511.3h10.4v10.4h-10.4zM138.4 511.3h10.4v10.4h-10.4zM585.6 511.3h10.4v10.4h-10.4zM96.8 521.7h10.4v10.4h-10.4zM252.8 521.7h10.4v10.4h-10.4zM284.0 521.7h10.4v10.4h-10.4zM564.8 521.7h10.4v10.4h-10.4zM107.2 532.1h10.4v10.4h-10.4zM128.0 532.1h10.4v10.4h-10.4zM575.2 532.1h10.4v10.4h-10.4zM96.8 542.5h10.4v10.4h-10.4zM107.2 542.5h10.4v10.4h-10.4zM117.6 542.5h10.4v10.4h-10.4zM128.0 542.5h10.4v10.4h-10.4zM575.2 542.5h10.4v10.4h-10.4zM117.6 552.9h10.4v10.4h-10.4zM138.4 552.9h10.4v10.4h-10.4zM159.2 552.9h10.4v10.4h-10.4zM180.0 552.9h10.4v10.4h-10.4zM585.6 552.9h10.4v10.4h-10.4zM-7.2 563.3h10.4v10.4h-10.4zM96.8 563.3h10.4v10.4h-10.4zM107.2 563.3h10.4v10.4h-10.4zM117.6 563.3h10.4v10.4h-10.4zM148.8 563.3h10.4v10.4h-10.4zM169.6 563.3h10.4v10.4h-10.4zM575.2 563.3h10.4v10.4h-10.4zM585.6 563.3h10.4v10.4h-10.4zM-7.2 573.7h10.4v10.4h-10.4zM3.2 573.7h10.4v10.4h-10.4zM65.6 573.7h10.4v10.4h-10.4zM76.0 573.7h10.4v10.4h-10.4zM107.2 573.7h10.4v10.4h-10.4zM200.8 573.7h10.4v10.4h-10.4zM242.4 573.7h10.4v10.4h-10.4zM575.2 573.7h10.4v10.4h-10.4zM3.2 584.1h10.4v10.4h-10.4zM13.6 584.1h10.4v10.4h-10.4zM44.8 584.1h10.4v10.4h-10.4zM107.2 584.1h10.4v10.4h-10.4zM148.8 584.1h10.4v10.4h-10.4zM575.2 584.1h10.4v10.4h-10.4zM585.6 584.1h10.4v10.4h-10.4zM13.6 594.5h10.4v10.4h-10.4zM34.4 594.5h10.4v10.4h-10.4zM44.8 594.5h10.4v10.4h-10.4zM55.2 594.5h10.4v10.4h-10.4zM65.6 594.5h10.4v10.4h-10.4zM107.2 594.5h10.4v10.4h-10.4zM128.0 594.5h10.4v10.4h-10.4zM575.2 594.5h10.4v10.4h-10.4zM3.2 604.9h10.4v10.4h-10.4zM13.6 604.9h10.4v10.4h-10.4zM76.0 604.9h10.4v10.4h-10.4zM107.2 604.9h10.4v10.4h-10.4zM117.6 604.9h10.4v10.4h-10.4zM138.4 604.9h10.4v10.4h-10.4zM3.2 615.3h10.4v10.4h-10.4zM24.0 615.3h10.4v10.4h-10.4zM55.2 615.3h10.4v10.4h-10.4zM65.6 615.3h10.4v10.4h-10.4zM76.0 615.3h10.4v10.4h-10.4zM86.4 615.3h10.4v10.4h-10.4zM96.8 615.3h10.4v10.4h-10.4zM575.2 615.3h10.4v10.4h-10.4zM3.2 625.7h10.4v10.4h-10.4zM13.6 625.7h10.4v10.4h-10.4zM575.2 625.7h10.4v10.4h-10.4zM585.6 625.7h10.4v10.4h-10.4zM24.0 636.1h10.4v10.4h-10.4zM55.2 636.1h10.4v10.4h-10.4zM65.6 636.1h10.4v10.4h-10.4zM-7.2 646.5h10.4v10.4h-10.4zM3.2 646.5h10.4v10.4h-10.4zM34.4 646.5h10.4v10.4h-10.4zM65.6 646.5h10.4v10.4h-10.4zM86.4 646.5h10.4v10.4h-10.4zM575.2 646.5h10.4v10.4h-10.4z" fill="#171717"/><path d="M575.2 126.5h10.4v10.4h-10.4zM585.6 126.5h10.4v10.4h-10.4zM596.0 126.5h10.4v10.4h-10.4zM606.4 126.5h10.4v10.4h-10.4zM616.8 126.5h10.4v10.4h-10.4zM627.2 126.5h10.4v10.4h-10.4zM637.6 126.5h10.4v10.4h-10.4zM471.2 136.9h10.4v10.4h-10.4zM481.6 136.9h10.4v10.4h-10.4zM523.2 136.9h10.4v10.4h-10.4zM544.0 136.9h10.4v10.4h-10.4zM564.8 136.9h10.4v10.4h-10.4zM596.0 136.9h10.4v10.4h-10.4zM606.4 136.9h10.4v10.4h-10.4zM616.8 136.9h10.4v10.4h-10.4zM627.2 136.9h10.4v10.4h-10.4zM492.0 147.3h10.4v10.4h-10.4zM502.4 147.3h10.4v10.4h-10.4zM512.8 147.3h10.4v10.4h-10.4zM554.4 147.3h10.4v10.4h-10.4zM575.2 147.3h10.4v10.4h-10.4zM585.6 147.3h10.4v10.4h-10.4zM596.0 147.3h10.4v10.4h-10.4zM606.4 147.3h10.4v10.4h-10.4zM523.2 157.7h10.4v10.4h-10.4zM554.4 157.7h10.4v10.4h-10.4zM606.4 157.7h10.4v10.4h-10.4zM471.2 168.1h10.4v10.4h-10.4zM481.6 168.1h10.4v10.4h-10.4zM512.8 168.1h10.4v10.4h-10.4zM523.2 168.1h10.4v10.4h-10.4zM533.6 168.1h10.4v10.4h-10.4zM554.4 168.1h10.4v10.4h-10.4zM585.6 168.1h10.4v10.4h-10.4zM616.8 168.1h10.4v10.4h-10.4zM523.2 178.5h10.4v10.4h-10.4zM533.6 178.5h10.4v10.4h-10.4zM544.0 178.5h10.4v10.4h-10.4zM575.2 178.5h10.4v10.4h-10.4zM596.0 178.5h10.4v10.4h-10.4zM668.8 178.5h10.4v10.4h-10.4zM481.6 188.9h10.4v10.4h-10.4zM502.4 188.9h10.4v10.4h-10.4zM523.2 188.9h10.4v10.4h-10.4zM533.6 188.9h10.4v10.4h-10.4zM544.0 188.9h10.4v10.4h-10.4zM596.0 188.9h10.4v10.4h-10.4zM637.6 188.9h10.4v10.4h-10.4zM658.4 188.9h10.4v10.4h-10.4zM668.8 188.9h10.4v10.4h-10.4zM492.0 199.3h10.4v10.4h-10.4zM502.4 199.3h10.4v10.4h-10.4zM512.8 199.3h10.4v10.4h-10.4zM523.2 199.3h10.4v10.4h-10.4zM533.6 199.3h10.4v10.4h-10.4zM554.4 199.3h10.4v10.4h-10.4zM481.6 209.7h10.4v10.4h-10.4zM492.0 209.7h10.4v10.4h-10.4zM512.8 209.7h10.4v10.4h-10.4zM523.2 209.7h10.4v10.4h-10.4zM533.6 209.7h10.4v10.4h-10.4zM544.0 209.7h10.4v10.4h-10.4zM564.8 209.7h10.4v10.4h-10.4zM575.2 209.7h10.4v10.4h-10.4zM616.8 209.7h10.4v10.4h-10.4zM648.0 209.7h10.4v10.4h-10.4zM668.8 209.7h10.4v10.4h-10.4zM679.2 209.7h10.4v10.4h-10.4zM502.4 220.1h10.4v10.4h-10.4zM512.8 220.1h10.4v10.4h-10.4zM554.4 220.1h10.4v10.4h-10.4zM575.2 220.1h10.4v10.4h-10.4zM606.4 220.1h10.4v10.4h-10.4zM637.6 220.1h10.4v10.4h-10.4zM648.0 220.1h10.4v10.4h-10.4zM658.4 220.1h10.4v10.4h-10.4zM679.2 220.1h10.4v10.4h-10.4zM471.2 230.5h10.4v10.4h-10.4zM533.6 230.5h10.4v10.4h-10.4zM575.2 230.5h10.4v10.4h-10.4zM606.4 230.5h10.4v10.4h-10.4zM616.8 230.5h10.4v10.4h-10.4zM658.4 230.5h10.4v10.4h-10.4zM481.6 240.9h10.4v10.4h-10.4zM492.0 240.9h10.4v10.4h-10.4zM533.6 240.9h10.4v10.4h-10.4zM554.4 240.9h10.4v10.4h-10.4zM627.2 240.9h10.4v10.4h-10.4zM648.0 240.9h10.4v10.4h-10.4zM668.8 240.9h10.4v10.4h-10.4zM471.2 251.3h10.4v10.4h-10.4zM481.6 251.3h10.4v10.4h-10.4zM492.0 251.3h10.4v10.4h-10.4zM502.4 251.3h10.4v10.4h-10.4zM512.8 251.3h10.4v10.4h-10.4zM523.2 251.3h10.4v10.4h-10.4zM668.8 251.3h10.4v10.4h-10.4zM471.2 261.7h10.4v10.4h-10.4zM502.4 261.7h10.4v10.4h-10.4zM523.2 261.7h10.4v10.4h-10.4zM554.4 261.7h10.4v10.4h-10.4zM564.8 261.7h10.4v10.4h-10.4zM658.4 261.7h10.4v10.4h-10.4zM668.8 261.7h10.4v10.4h-10.4zM512.8 272.1h10.4v10.4h-10.4zM481.6 282.5h10.4v10.4h-10.4zM492.0 282.5h10.4v10.4h-10.4zM502.4 282.5h10.4v10.4h-10.4zM523.2 282.5h10.4v10.4h-10.4zM533.6 282.5h10.4v10.4h-10.4zM544.0 282.5h10.4v10.4h-10.4zM668.8 282.5h10.4v10.4h-10.4zM481.6 292.9h10.4v10.4h-10.4zM502.4 292.9h10.4v10.4h-10.4zM544.0 292.9h10.4v10.4h-10.4zM554.4 292.9h10.4v10.4h-10.4zM658.4 292.9h10.4v10.4h-10.4zM512.8 303.3h10.4v10.4h-10.4zM523.2 303.3h10.4v10.4h-10.4zM544.0 303.3h10.4v10.4h-10.4zM679.2 303.3h10.4v10.4h-10.4zM481.6 313.7h10.4v10.4h-10.4zM492.0 313.7h10.4v10.4h-10.4zM544.0 313.7h10.4v10.4h-10.4zM564.8 313.7h10.4v10.4h-10.4zM648.0 313.7h10.4v10.4h-10.4zM658.4 313.7h10.4v10.4h-10.4zM668.8 313.7h10.4v10.4h-10.4zM492.0 324.1h10.4v10.4h-10.4zM523.2 324.1h10.4v10.4h-10.4zM564.8 324.1h10.4v10.4h-10.4zM575.2 324.1h10.4v10.4h-10.4zM637.6 324.1h10.4v10.4h-10.4zM658.4 324.1h10.4v10.4h-10.4zM471.2 334.5h10.4v10.4h-10.4zM502.4 334.5h10.4v10.4h-10.4zM544.0 334.5h10.4v10.4h-10.4zM554.4 334.5h10.4v10.4h-10.4zM564.8 334.5h10.4v10.4h-10.4zM616.8 334.5h10.4v10.4h-10.4zM648.0 334.5h10.4v10.4h-10.4zM679.2 334.5h10.4v10.4h-10.4zM523.2 344.9h10.4v10.4h-10.4zM533.6 344.9h10.4v10.4h-10.4zM544.0 344.9h10.4v10.4h-10.4zM564.8 344.9h10.4v10.4h-10.4zM575.2 344.9h10.4v10.4h-10.4zM606.4 344.9h10.4v10.4h-10.4zM637.6 344.9h10.4v10.4h-10.4zM668.8 344.9h10.4v10.4h-10.4zM502.4 355.3h10.4v10.4h-10.4zM512.8 355.3h10.4v10.4h-10.4zM523.2 355.3h10.4v10.4h-10.4zM533.6 355.3h10.4v10.4h-10.4zM544.0 355.3h10.4v10.4h-10.4zM564.8 355.3h10.4v10.4h-10.4zM575.2 355.3h10.4v10.4h-10.4zM585.6 355.3h10.4v10.4h-10.4zM596.0 355.3h10.4v10.4h-10.4zM606.4 355.3h10.4v10.4h-10.4zM502.4 365.7h10.4v10.4h-10.4zM533.6 365.7h10.4v10.4h-10.4zM575.2 365.7h10.4v10.4h-10.4zM585.6 365.7h10.4v10.4h-10.4zM596.0 365.7h10.4v10.4h-10.4zM616.8 365.7h10.4v10.4h-10.4zM627.2 365.7h10.4v10.4h-10.4zM648.0 365.7h10.4v10.4h-10.4zM658.4 365.7h10.4v10.4h-10.4zM679.2 365.7h10.4v10.4h-10.4zM492.0 376.1h10.4v10.4h-10.4zM564.8 376.1h10.4v10.4h-10.4zM575.2 376.1h10.4v10.4h-10.4zM585.6 376.1h10.4v10.4h-10.4zM596.0 376.1h10.4v10.4h-10.4zM606.4 376.1h10.4v10.4h-10.4zM616.8 376.1h10.4v10.4h-10.4zM627.2 376.1h10.4v10.4h-10.4zM658.4 376.1h10.4v10.4h-10.4zM679.2 376.1h10.4v10.4h-10.4zM502.4 386.5h10.4v10.4h-10.4zM533.6 386.5h10.4v10.4h-10.4zM564.8 386.5h10.4v10.4h-10.4zM585.6 386.5h10.4v10.4h-10.4zM596.0 386.5h10.4v10.4h-10.4zM616.8 386.5h10.4v10.4h-10.4zM627.2 386.5h10.4v10.4h-10.4zM648.0 386.5h10.4v10.4h-10.4zM668.8 386.5h10.4v10.4h-10.4zM471.2 396.9h10.4v10.4h-10.4zM492.0 396.9h10.4v10.4h-10.4zM512.8 396.9h10.4v10.4h-10.4zM544.0 396.9h10.4v10.4h-10.4zM554.4 396.9h10.4v10.4h-10.4zM575.2 396.9h10.4v10.4h-10.4zM596.0 396.9h10.4v10.4h-10.4zM637.6 396.9h10.4v10.4h-10.4zM648.0 396.9h10.4v10.4h-10.4zM658.4 396.9h10.4v10.4h-10.4zM492.0 407.3h10.4v10.4h-10.4zM523.2 407.3h10.4v10.4h-10.4zM575.2 407.3h10.4v10.4h-10.4zM606.4 407.3h10.4v10.4h-10.4zM637.6 407.3h10.4v10.4h-10.4zM679.2 407.3h10.4v10.4h-10.4zM512.8 417.7h10.4v10.4h-10.4zM523.2 417.7h10.4v10.4h-10.4zM533.6 417.7h10.4v10.4h-10.4zM554.4 417.7h10.4v10.4h-10.4zM564.8 417.7h10.4v10.4h-10.4zM585.6 417.7h10.4v10.4h-10.4zM606.4 417.7h10.4v10.4h-10.4zM616.8 417.7h10.4v10.4h-10.4zM627.2 417.7h10.4v10.4h-10.4zM637.6 417.7h10.4v10.4h-10.4zM679.2 417.7h10.4v10.4h-10.4zM575.2 428.1h10.4v10.4h-10.4zM585.6 428.1h10.4v10.4h-10.4zM596.0 428.1h10.4v10.4h-10.4zM596.0 438.5h10.4v10.4h-10.4zM596.0 448.9h10.4v10.4h-10.4zM-7.2 459.3h10.4v10.4h-10.4zM3.2 459.3h10.4v10.4h-10.4zM13.6 459.3h10.4v10.4h-10.4zM24.0 459.3h10.4v10.4h-10.4zM65.6 459.3h10.4v10.4h-10.4zM-7.2 469.7h10.4v10.4h-10.4zM44.8 469.7h10.4v10.4h-10.4zM55.2 469.7h10.4v10.4h-10.4zM65.6 469.7h10.4v10.4h-10.4zM86.4 469.7h10.4v10.4h-10.4zM585.6 469.7h10.4v10.4h-10.4zM3.2 480.1h10.4v10.4h-10.4zM24.0 480.1h10.4v10.4h-10.4zM86.4 480.1h10.4v10.4h-10.4zM96.8 480.1h10.4v10.4h-10.4zM585.6 480.1h10.4v10.4h-10.4zM86.4 490.5h10.4v10.4h-10.4zM96.8 490.5h10.4v10.4h-10.4zM596.0 490.5h10.4v10.4h-10.4zM-7.2 500.9h10.4v10.4h-10.4zM76.0 500.9h10.4v10.4h-10.4zM86.4 500.9h10.4v10.4h-10.4zM96.8 511.3h10.4v10.4h-10.4zM596.0 511.3h10.4v10.4h-10.4zM107.2 521.7h10.4v10.4h-10.4zM117.6 521.7h10.4v10.4h-10.4zM138.4 521.7h10.4v10.4h-10.4zM263.2 521.7h10.4v10.4h-10.4zM585.6 521.7h10.4v10.4h-10.4zM86.4 532.1h10.4v10.4h-10.4zM96.8 532.1h10.4v10.4h-10.4zM138.4 532.1h10.4v10.4h-10.4zM585.6 532.1h10.4v10.4h-10.4zM86.4 542.5h10.4v10.4h-10.4zM138.4 542.5h10.4v10.4h-10.4zM159.2 542.5h10.4v10.4h-10.4zM180.0 542.5h10.4v10.4h-10.4zM3.2 552.9h10.4v10.4h-10.4zM65.6 552.9h10.4v10.4h-10.4zM76.0 552.9h10.4v10.4h-10.4zM107.2 552.9h10.4v10.4h-10.4zM169.6 552.9h10.4v10.4h-10.4zM13.6 563.3h10.4v10.4h-10.4zM55.2 563.3h10.4v10.4h-10.4zM138.4 563.3h10.4v10.4h-10.4zM159.2 563.3h10.4v10.4h-10.4zM596.0 563.3h10.4v10.4h-10.4zM13.6 573.7h10.4v10.4h-10.4zM24.0 573.7h10.4v10.4h-10.4zM34.4 573.7h10.4v10.4h-10.4zM55.2 573.7h10.4v10.4h-10.4zM86.4 573.7h10.4v10.4h-10.4zM128.0 573.7h10.4v10.4h-10.4zM159.2 573.7h10.4v10.4h-10.4zM180.0 573.7h10.4v10.4h-10.4zM211.2 573.7h10.4v10.4h-10.4zM585.6 573.7h10.4v10.4h-10.4zM24.0 584.1h10.4v10.4h-10.4zM34.4 584.1h10.4v10.4h-10.4zM55.2 584.1h10.4v10.4h-10.4zM76.0 584.1h10.4v10.4h-10.4zM96.8 584.1h10.4v10.4h-10.4zM117.6 584.1h10.4v10.4h-10.4zM128.0 584.1h10.4v10.4h-10.4zM596.0 584.1h10.4v10.4h-10.4zM117.6 594.5h10.4v10.4h-10.4zM148.8 594.5h10.4v10.4h-10.4zM585.6 594.5h10.4v10.4h-10.4zM596.0 594.5h10.4v10.4h-10.4zM148.8 604.9h10.4v10.4h-10.4zM585.6 604.9h10.4v10.4h-10.4zM596.0 604.9h10.4v10.4h-10.4zM34.4 615.3h10.4v10.4h-10.4zM596.0 615.3h10.4v10.4h-10.4zM107.2 625.7h10.4v10.4h-10.4zM585.6 636.1h10.4v10.4h-10.4zM13.6 646.5h10.4v10.4h-10.4zM596.0 646.5h10.4v10.4h-10.4z" fill="#161616"/><path d="M658.4 126.5h10.4v10.4h-10.4zM585.6 136.9h10.4v10.4h-10.4zM471.2 147.3h10.4v10.4h-10.4zM596.0 157.7h10.4v10.4h-10.4zM544.0 168.1h10.4v10.4h-10.4zM523.2 230.5h10.4v10.4h-10.4zM575.2 240.9h10.4v10.4h-10.4zM616.8 240.9h10.4v10.4h-10.4zM533.6 251.3h10.4v10.4h-10.4zM564.8 251.3h10.4v10.4h-10.4zM596.0 251.3h10.4v10.4h-10.4zM606.4 251.3h10.4v10.4h-10.4zM616.8 251.3h10.4v10.4h-10.4zM575.2 261.7h10.4v10.4h-10.4zM596.0 261.7h10.4v10.4h-10.4zM606.4 261.7h10.4v10.4h-10.4zM606.4 272.1h10.4v10.4h-10.4zM616.8 272.1h10.4v10.4h-10.4zM637.6 272.1h10.4v10.4h-10.4zM658.4 272.1h10.4v10.4h-10.4zM585.6 282.5h10.4v10.4h-10.4zM596.0 282.5h10.4v10.4h-10.4zM648.0 282.5h10.4v10.4h-10.4zM658.4 282.5h10.4v10.4h-10.4zM533.6 292.9h10.4v10.4h-10.4zM616.8 292.9h10.4v10.4h-10.4zM481.6 303.3h10.4v10.4h-10.4zM575.2 303.3h10.4v10.4h-10.4zM585.6 303.3h10.4v10.4h-10.4zM616.8 303.3h10.4v10.4h-10.4zM627.2 303.3h10.4v10.4h-10.4zM637.6 303.3h10.4v10.4h-10.4zM648.0 303.3h10.4v10.4h-10.4zM658.4 303.3h10.4v10.4h-10.4zM523.2 313.7h10.4v10.4h-10.4zM596.0 313.7h10.4v10.4h-10.4zM606.4 313.7h10.4v10.4h-10.4zM616.8 313.7h10.4v10.4h-10.4zM596.0 324.1h10.4v10.4h-10.4zM606.4 324.1h10.4v10.4h-10.4zM512.8 365.7h10.4v10.4h-10.4zM471.2 376.1h10.4v10.4h-10.4zM544.0 376.1h10.4v10.4h-10.4zM668.8 376.1h10.4v10.4h-10.4zM554.4 386.5h10.4v10.4h-10.4zM668.8 417.7h10.4v10.4h-10.4zM554.4 428.1h10.4v10.4h-10.4zM554.4 438.5h10.4v10.4h-10.4zM554.4 448.9h10.4v10.4h-10.4zM564.8 448.9h10.4v10.4h-10.4zM575.2 448.9h10.4v10.4h-10.4zM76.0 459.3h10.4v10.4h-10.4zM86.4 459.3h10.4v10.4h-10.4zM107.2 459.3h10.4v10.4h-10.4zM128.0 459.3h10.4v10.4h-10.4zM148.8 459.3h10.4v10.4h-10.4zM575.2 459.3h10.4v10.4h-10.4zM138.4 469.7h10.4v10.4h-10.4zM148.8 469.7h10.4v10.4h-10.4zM554.4 469.7h10.4v10.4h-10.4zM575.2 469.7h10.4v10.4h-10.4zM107.2 480.1h10.4v10.4h-10.4zM128.0 480.1h10.4v10.4h-10.4zM148.8 480.1h10.4v10.4h-10.4zM575.2 480.1h10.4v10.4h-10.4zM117.6 490.5h10.4v10.4h-10.4zM128.0 490.5h10.4v10.4h-10.4zM575.2 490.5h10.4v10.4h-10.4zM117.6 500.9h10.4v10.4h-10.4zM128.0 511.3h10.4v10.4h-10.4zM564.8 511.3h10.4v10.4h-10.4zM575.2 511.3h10.4v10.4h-10.4zM128.0 521.7h10.4v10.4h-10.4zM575.2 521.7h10.4v10.4h-10.4zM117.6 532.1h10.4v10.4h-10.4zM564.8 532.1h10.4v10.4h-10.4zM148.8 542.5h10.4v10.4h-10.4zM169.6 542.5h10.4v10.4h-10.4zM96.8 552.9h10.4v10.4h-10.4zM128.0 552.9h10.4v10.4h-10.4zM148.8 552.9h10.4v10.4h-10.4zM564.8 552.9h10.4v10.4h-10.4zM575.2 552.9h10.4v10.4h-10.4zM128.0 563.3h10.4v10.4h-10.4zM180.0 563.3h10.4v10.4h-10.4zM294.4 563.3h10.4v10.4h-10.4zM564.8 563.3h10.4v10.4h-10.4zM96.8 573.7h10.4v10.4h-10.4zM117.6 573.7h10.4v10.4h-10.4zM138.4 573.7h10.4v10.4h-10.4zM148.8 573.7h10.4v10.4h-10.4zM169.6 573.7h10.4v10.4h-10.4zM554.4 573.7h10.4v10.4h-10.4zM-7.2 584.1h10.4v10.4h-10.4zM65.6 584.1h10.4v10.4h-10.4zM86.4 584.1h10.4v10.4h-10.4zM138.4 584.1h10.4v10.4h-10.4zM159.2 584.1h10.4v10.4h-10.4zM211.2 584.1h10.4v10.4h-10.4zM564.8 584.1h10.4v10.4h-10.4zM-7.2 594.5h10.4v10.4h-10.4zM3.2 594.5h10.4v10.4h-10.4zM24.0 594.5h10.4v10.4h-10.4zM76.0 594.5h10.4v10.4h-10.4zM86.4 594.5h10.4v10.4h-10.4zM96.8 594.5h10.4v10.4h-10.4zM138.4 594.5h10.4v10.4h-10.4zM159.2 594.5h10.4v10.4h-10.4zM554.4 594.5h10.4v10.4h-10.4zM-7.2 604.9h10.4v10.4h-10.4zM24.0 604.9h10.4v10.4h-10.4zM44.8 604.9h10.4v10.4h-10.4zM55.2 604.9h10.4v10.4h-10.4zM65.6 604.9h10.4v10.4h-10.4zM96.8 604.9h10.4v10.4h-10.4zM128.0 604.9h10.4v10.4h-10.4zM159.2 604.9h10.4v10.4h-10.4zM575.2 604.9h10.4v10.4h-10.4zM-7.2 615.3h10.4v10.4h-10.4zM13.6 615.3h10.4v10.4h-10.4zM44.8 615.3h10.4v10.4h-10.4zM107.2 615.3h10.4v10.4h-10.4zM-7.2 625.7h10.4v10.4h-10.4zM24.0 625.7h10.4v10.4h-10.4zM34.4 625.7h10.4v10.4h-10.4zM55.2 625.7h10.4v10.4h-10.4zM86.4 625.7h10.4v10.4h-10.4zM96.8 625.7h10.4v10.4h-10.4zM-7.2 636.1h10.4v10.4h-10.4zM3.2 636.1h10.4v10.4h-10.4zM13.6 636.1h10.4v10.4h-10.4zM44.8 636.1h10.4v10.4h-10.4zM76.0 636.1h10.4v10.4h-10.4zM575.2 636.1h10.4v10.4h-10.4zM24.0 646.5h10.4v10.4h-10.4zM55.2 646.5h10.4v10.4h-10.4zM76.0 646.5h10.4v10.4h-10.4z" fill="#181818"/><path d="M616.8 261.7h10.4v10.4h-10.4zM637.6 261.7h10.4v10.4h-10.4zM627.2 272.1h10.4v10.4h-10.4zM606.4 282.5h10.4v10.4h-10.4zM616.8 282.5h10.4v10.4h-10.4zM627.2 282.5h10.4v10.4h-10.4zM637.6 282.5h10.4v10.4h-10.4zM627.2 292.9h10.4v10.4h-10.4zM648.0 292.9h10.4v10.4h-10.4zM627.2 313.7h10.4v10.4h-10.4zM523.2 428.1h10.4v10.4h-10.4zM564.8 428.1h10.4v10.4h-10.4zM544.0 438.5h10.4v10.4h-10.4zM564.8 438.5h10.4v10.4h-10.4zM533.6 448.9h10.4v10.4h-10.4zM492.0 459.3h10.4v10.4h-10.4zM544.0 459.3h10.4v10.4h-10.4zM554.4 459.3h10.4v10.4h-10.4zM564.8 459.3h10.4v10.4h-10.4zM512.8 469.7h10.4v10.4h-10.4zM564.8 469.7h10.4v10.4h-10.4zM502.4 480.1h10.4v10.4h-10.4zM512.8 480.1h10.4v10.4h-10.4zM523.2 480.1h10.4v10.4h-10.4zM533.6 480.1h10.4v10.4h-10.4zM554.4 480.1h10.4v10.4h-10.4zM148.8 490.5h10.4v10.4h-10.4zM440.0 490.5h10.4v10.4h-10.4zM492.0 490.5h10.4v10.4h-10.4zM533.6 490.5h10.4v10.4h-10.4zM544.0 490.5h10.4v10.4h-10.4zM128.0 500.9h10.4v10.4h-10.4zM544.0 500.9h10.4v10.4h-10.4zM148.8 511.3h10.4v10.4h-10.4zM460.8 511.3h10.4v10.4h-10.4zM471.2 511.3h10.4v10.4h-10.4zM533.6 511.3h10.4v10.4h-10.4zM544.0 511.3h10.4v10.4h-10.4zM502.4 521.7h10.4v10.4h-10.4zM554.4 521.7h10.4v10.4h-10.4zM460.8 532.1h10.4v10.4h-10.4zM512.8 532.1h10.4v10.4h-10.4zM523.2 532.1h10.4v10.4h-10.4zM533.6 532.1h10.4v10.4h-10.4zM554.4 532.1h10.4v10.4h-10.4zM429.6 542.5h10.4v10.4h-10.4zM460.8 542.5h10.4v10.4h-10.4zM502.4 542.5h10.4v10.4h-10.4zM544.0 542.5h10.4v10.4h-10.4zM564.8 542.5h10.4v10.4h-10.4zM440.0 552.9h10.4v10.4h-10.4zM460.8 552.9h10.4v10.4h-10.4zM481.6 552.9h10.4v10.4h-10.4zM533.6 552.9h10.4v10.4h-10.4zM544.0 552.9h10.4v10.4h-10.4zM440.0 563.3h10.4v10.4h-10.4zM481.6 563.3h10.4v10.4h-10.4zM492.0 563.3h10.4v10.4h-10.4zM523.2 563.3h10.4v10.4h-10.4zM544.0 563.3h10.4v10.4h-10.4zM554.4 563.3h10.4v10.4h-10.4zM450.4 573.7h10.4v10.4h-10.4zM523.2 573.7h10.4v10.4h-10.4zM544.0 573.7h10.4v10.4h-10.4zM564.8 573.7h10.4v10.4h-10.4zM533.6 584.1h10.4v10.4h-10.4zM419.2 594.5h10.4v10.4h-10.4zM429.6 594.5h10.4v10.4h-10.4zM471.2 594.5h10.4v10.4h-10.4zM481.6 594.5h10.4v10.4h-10.4zM564.8 594.5h10.4v10.4h-10.4zM34.4 604.9h10.4v10.4h-10.4zM86.4 604.9h10.4v10.4h-10.4zM429.6 604.9h10.4v10.4h-10.4zM471.2 604.9h10.4v10.4h-10.4zM429.6 615.3h10.4v10.4h-10.4zM44.8 625.7h10.4v10.4h-10.4zM65.6 625.7h10.4v10.4h-10.4zM76.0 625.7h10.4v10.4h-10.4zM419.2 625.7h10.4v10.4h-10.4zM429.6 625.7h10.4v10.4h-10.4zM34.4 636.1h10.4v10.4h-10.4zM86.4 636.1h10.4v10.4h-10.4zM440.0 636.1h10.4v10.4h-10.4zM481.6 636.1h10.4v10.4h-10.4zM44.8 646.5h10.4v10.4h-10.4zM419.2 646.5h10.4v10.4h-10.4zM460.8 646.5h10.4v10.4h-10.4zM481.6 646.5h10.4v10.4h-10.4z" fill="#191919"/><path d="M492.0 428.1h10.4v10.4h-10.4zM502.4 448.9h10.4v10.4h-10.4zM512.8 448.9h10.4v10.4h-10.4zM523.2 448.9h10.4v10.4h-10.4zM523.2 459.3h10.4v10.4h-10.4zM533.6 459.3h10.4v10.4h-10.4zM492.0 469.7h10.4v10.4h-10.4zM523.2 469.7h10.4v10.4h-10.4zM533.6 469.7h10.4v10.4h-10.4zM492.0 480.1h10.4v10.4h-10.4zM429.6 490.5h10.4v10.4h-10.4zM450.4 490.5h10.4v10.4h-10.4zM471.2 490.5h10.4v10.4h-10.4zM481.6 490.5h10.4v10.4h-10.4zM502.4 490.5h10.4v10.4h-10.4zM512.8 490.5h10.4v10.4h-10.4zM440.0 500.9h10.4v10.4h-10.4zM450.4 500.9h10.4v10.4h-10.4zM460.8 500.9h10.4v10.4h-10.4zM502.4 500.9h10.4v10.4h-10.4zM429.6 511.3h10.4v10.4h-10.4zM481.6 511.3h10.4v10.4h-10.4zM523.2 511.3h10.4v10.4h-10.4zM148.8 521.7h10.4v10.4h-10.4zM159.2 521.7h10.4v10.4h-10.4zM211.2 521.7h10.4v10.4h-10.4zM450.4 521.7h10.4v10.4h-10.4zM492.0 521.7h10.4v10.4h-10.4zM512.8 521.7h10.4v10.4h-10.4zM523.2 521.7h10.4v10.4h-10.4zM221.6 532.1h10.4v10.4h-10.4zM242.4 532.1h10.4v10.4h-10.4zM263.2 532.1h10.4v10.4h-10.4zM273.6 532.1h10.4v10.4h-10.4zM284.0 532.1h10.4v10.4h-10.4zM419.2 532.1h10.4v10.4h-10.4zM481.6 532.1h10.4v10.4h-10.4zM492.0 532.1h10.4v10.4h-10.4zM502.4 532.1h10.4v10.4h-10.4zM200.8 542.5h10.4v10.4h-10.4zM252.8 542.5h10.4v10.4h-10.4zM284.0 542.5h10.4v10.4h-10.4zM294.4 542.5h10.4v10.4h-10.4zM440.0 542.5h10.4v10.4h-10.4zM512.8 542.5h10.4v10.4h-10.4zM533.6 542.5h10.4v10.4h-10.4zM200.8 552.9h10.4v10.4h-10.4zM221.6 552.9h10.4v10.4h-10.4zM200.8 563.3h10.4v10.4h-10.4zM211.2 563.3h10.4v10.4h-10.4zM284.0 563.3h10.4v10.4h-10.4zM429.6 563.3h10.4v10.4h-10.4zM450.4 563.3h10.4v10.4h-10.4zM502.4 563.3h10.4v10.4h-10.4zM419.2 573.7h10.4v10.4h-10.4zM429.6 573.7h10.4v10.4h-10.4zM471.2 573.7h10.4v10.4h-10.4zM502.4 573.7h10.4v10.4h-10.4zM512.8 573.7h10.4v10.4h-10.4zM169.6 584.1h10.4v10.4h-10.4zM273.6 584.1h10.4v10.4h-10.4zM419.2 584.1h10.4v10.4h-10.4zM492.0 584.1h10.4v10.4h-10.4zM523.2 584.1h10.4v10.4h-10.4zM544.0 584.1h10.4v10.4h-10.4zM169.6 594.5h10.4v10.4h-10.4zM284.0 594.5h10.4v10.4h-10.4zM460.8 594.5h10.4v10.4h-10.4zM492.0 594.5h10.4v10.4h-10.4zM512.8 594.5h10.4v10.4h-10.4zM533.6 594.5h10.4v10.4h-10.4zM440.0 604.9h10.4v10.4h-10.4zM450.4 604.9h10.4v10.4h-10.4zM460.8 604.9h10.4v10.4h-10.4zM117.6 615.3h10.4v10.4h-10.4zM138.4 615.3h10.4v10.4h-10.4zM148.8 615.3h10.4v10.4h-10.4zM450.4 615.3h10.4v10.4h-10.4zM117.6 625.7h10.4v10.4h-10.4zM440.0 625.7h10.4v10.4h-10.4zM460.8 625.7h10.4v10.4h-10.4zM471.2 625.7h10.4v10.4h-10.4zM481.6 625.7h10.4v10.4h-10.4zM429.6 636.1h10.4v10.4h-10.4zM107.2 646.5h10.4v10.4h-10.4zM429.6 646.5h10.4v10.4h-10.4zM440.0 646.5h10.4v10.4h-10.4z" fill="#1b1b1b"/><path d="M169.6 521.7h10.4v10.4h-10.4zM200.8 521.7h10.4v10.4h-10.4zM232.0 521.7h10.4v10.4h-10.4zM180.0 532.1h10.4v10.4h-10.4zM190.4 532.1h10.4v10.4h-10.4zM252.8 532.1h10.4v10.4h-10.4zM221.6 542.5h10.4v10.4h-10.4zM263.2 542.5h10.4v10.4h-10.4zM232.0 563.3h10.4v10.4h-10.4zM273.6 563.3h10.4v10.4h-10.4zM242.4 584.1h10.4v10.4h-10.4zM252.8 584.1h10.4v10.4h-10.4zM128.0 615.3h10.4v10.4h-10.4z" fill="#1d1d1d"/><path d="M180.0 521.7h10.4v10.4h-10.4zM211.2 532.1h10.4v10.4h-10.4zM190.4 542.5h10.4v10.4h-10.4zM242.4 563.3h10.4v10.4h-10.4zM180.0 584.1h10.4v10.4h-10.4zM273.6 594.5h10.4v10.4h-10.4zM169.6 615.3h10.4v10.4h-10.4zM128.0 625.7h10.4v10.4h-10.4zM169.6 625.7h10.4v10.4h-10.4zM117.6 636.1h10.4v10.4h-10.4z" fill="#1e1e1e"/><path d="M190.4 521.7h10.4v10.4h-10.4zM221.6 521.7h10.4v10.4h-10.4zM242.4 521.7h10.4v10.4h-10.4zM273.6 521.7h10.4v10.4h-10.4zM294.4 521.7h10.4v10.4h-10.4zM169.6 532.1h10.4v10.4h-10.4zM232.0 532.1h10.4v10.4h-10.4zM211.2 542.5h10.4v10.4h-10.4zM232.0 542.5h10.4v10.4h-10.4zM242.4 542.5h10.4v10.4h-10.4zM273.6 542.5h10.4v10.4h-10.4zM190.4 552.9h10.4v10.4h-10.4zM211.2 552.9h10.4v10.4h-10.4zM232.0 552.9h10.4v10.4h-10.4zM284.0 552.9h10.4v10.4h-10.4zM294.4 552.9h10.4v10.4h-10.4zM190.4 563.3h10.4v10.4h-10.4zM221.6 563.3h10.4v10.4h-10.4zM252.8 563.3h10.4v10.4h-10.4zM263.2 563.3h10.4v10.4h-10.4zM200.8 584.1h10.4v10.4h-10.4zM221.6 584.1h10.4v10.4h-10.4zM232.0 584.1h10.4v10.4h-10.4zM263.2 584.1h10.4v10.4h-10.4zM294.4 584.1h10.4v10.4h-10.4zM169.6 604.9h10.4v10.4h-10.4zM180.0 604.9h10.4v10.4h-10.4zM159.2 615.3h10.4v10.4h-10.4zM159.2 625.7h10.4v10.4h-10.4zM96.8 636.1h10.4v10.4h-10.4zM107.2 636.1h10.4v10.4h-10.4zM96.8 646.5h10.4v10.4h-10.4z" fill="#1c1c1c"/><path d="M148.8 532.1h10.4v10.4h-10.4zM159.2 532.1h10.4v10.4h-10.4zM263.2 552.9h10.4v10.4h-10.4zM211.2 594.5h10.4v10.4h-10.4zM252.8 604.9h10.4v10.4h-10.4zM273.6 604.9h10.4v10.4h-10.4zM284.0 604.9h10.4v10.4h-10.4zM190.4 615.3h10.4v10.4h-10.4zM273.6 615.3h10.4v10.4h-10.4zM148.8 636.1h10.4v10.4h-10.4zM117.6 646.5h10.4v10.4h-10.4z" fill="#222222"/><path d="M294.4 532.1h10.4v10.4h-10.4zM242.4 552.9h10.4v10.4h-10.4zM252.8 552.9h10.4v10.4h-10.4zM273.6 552.9h10.4v10.4h-10.4zM190.4 584.1h10.4v10.4h-10.4zM180.0 594.5h10.4v10.4h-10.4zM190.4 594.5h10.4v10.4h-10.4zM200.8 594.5h10.4v10.4h-10.4zM252.8 594.5h10.4v10.4h-10.4zM211.2 604.9h10.4v10.4h-10.4zM221.6 604.9h10.4v10.4h-10.4zM232.0 604.9h10.4v10.4h-10.4zM180.0 615.3h10.4v10.4h-10.4zM200.8 615.3h10.4v10.4h-10.4zM263.2 615.3h10.4v10.4h-10.4zM284.0 615.3h10.4v10.4h-10.4zM128.0 636.1h10.4v10.4h-10.4z" fill="#212121"/><path d="M221.6 594.5h10.4v10.4h-10.4zM200.8 604.9h10.4v10.4h-10.4zM263.2 604.9h10.4v10.4h-10.4zM211.2 615.3h10.4v10.4h-10.4zM138.4 625.7h10.4v10.4h-10.4zM211.2 625.7h10.4v10.4h-10.4zM138.4 636.1h10.4v10.4h-10.4zM159.2 646.5h10.4v10.4h-10.4z" fill="#232323"/><path d="M242.4 594.5h10.4v10.4h-10.4zM180.0 625.7h10.4v10.4h-10.4zM190.4 625.7h10.4v10.4h-10.4z" fill="#242424"/><path d="M294.4 594.5h10.4v10.4h-10.4zM190.4 604.9h10.4v10.4h-10.4zM148.8 625.7h10.4v10.4h-10.4z" fill="#1f1f1f"/><path d="M242.4 604.9h10.4v10.4h-10.4zM294.4 604.9h10.4v10.4h-10.4zM252.8 615.3h10.4v10.4h-10.4zM200.8 625.7h10.4v10.4h-10.4z" fill="#252525"/><path d="M221.6 615.3h10.4v10.4h-10.4zM221.6 625.7h10.4v10.4h-10.4zM232.0 625.7h10.4v10.4h-10.4zM252.8 625.7h10.4v10.4h-10.4zM159.2 636.1h10.4v10.4h-10.4zM180.0 636.1h10.4v10.4h-10.4zM190.4 636.1h10.4v10.4h-10.4zM273.6 636.1h10.4v10.4h-10.4zM148.8 646.5h10.4v10.4h-10.4zM263.2 646.5h10.4v10.4h-10.4zM284.0 646.5h10.4v10.4h-10.4z" fill="#272727"/><path d="M232.0 615.3h10.4v10.4h-10.4zM263.2 625.7h10.4v10.4h-10.4zM273.6 625.7h10.4v10.4h-10.4zM128.0 646.5h10.4v10.4h-10.4zM138.4 646.5h10.4v10.4h-10.4zM180.0 646.5h10.4v10.4h-10.4z" fill="#292929"/><path d="M294.4 615.3h10.4v10.4h-10.4zM284.0 625.7h10.4v10.4h-10.4zM169.6 636.1h10.4v10.4h-10.4zM200.8 636.1h10.4v10.4h-10.4zM211.2 636.1h10.4v10.4h-10.4zM221.6 636.1h10.4v10.4h-10.4zM169.6 646.5h10.4v10.4h-10.4zM273.6 646.5h10.4v10.4h-10.4zM294.4 646.5h10.4v10.4h-10.4z" fill="#282828"/><path d="M242.4 625.7h10.4v10.4h-10.4z" fill="#2a2a2a"/><path d="M294.4 625.7h10.4v10.4h-10.4zM252.8 636.1h10.4v10.4h-10.4z" fill="#2d2d2d"/><path d="M232.0 636.1h10.4v10.4h-10.4zM242.4 636.1h10.4v10.4h-10.4zM190.4 646.5h10.4v10.4h-10.4zM200.8 646.5h10.4v10.4h-10.4zM211.2 646.5h10.4v10.4h-10.4zM252.8 646.5h10.4v10.4h-10.4z" fill="#2e2e2e"/><path d="M263.2 636.1h10.4v10.4h-10.4zM284.0 636.1h10.4v10.4h-10.4zM294.4 636.1h10.4v10.4h-10.4z" fill="#2b2b2b"/><path d="M221.6 646.5h10.4v10.4h-10.4z" fill="#717171"/><path d="M232.0 646.5h10.4v10.4h-10.4z" fill="#6f6f6f"/><path d="M242.4 646.5h10.4v10.4h-10.4z" fill="#333333"/></svg>
<svg style="left:0;top:0" width="816" height="653"><path d="M21.2 323.6 L32.9 308.6 L45.8 298.3 L58.7 293.0 L82.0 288.0 L87.2 282.8 L89.8 275.0 L100.0 259.5 L107.0 251.6 L115.8 245.4 L124.7 239.2 L130.0 234.7 L128.2 232.1 L123.8 228.5 L120.7 223.2 L121.2 217.9 L124.7 213.9 L128.2 213.1 L133.5 217.0 L140.6 219.7 L148.6 221.5 L153.9 223.2 L157.4 227.7 L160.1 233.0 L165.4 239.2 L172.5 245.4 L177.8 240.1 L186.6 233.0 L192.8 225.9 L196.4 218.8 L196.4 212.6 L194.6 207.3 L192.0 202.9 L192.8 195.0 L190.0 186.0 L183.0 174.0 L177.0 167.0 L175.0 160.0 L176.5 154.7 L179.0 150.0 L184.0 145.6 L178.0 142.0 L175.0 140.5 L170.0 135.0 L165.5 131.8 L526.0 131.8 L526.0 136.0 L527.6 137.6 L528.7 139.6 L530.1 141.4 L531.7 143.0 L532.5 145.5 L534.2 147.5 L535.5 149.7 L537.3 151.5 L538.4 153.6 L540.1 155.2 L541.9 156.6 L544.4 157.4 L545.1 159.8 L546.5 161.6 L548.6 162.8 L546.5 164.0 L544.0 164.3 L542.5 166.5 L540.1 167.0 L538.0 169.5 L537.3 172.7 L537.4 175.5 L537.3 178.3 L535.0 179.0 L533.3 180.8 L531.2 181.8 L528.9 182.6 L526.7 183.7 L524.5 184.6 L522.4 185.8 L519.9 186.1 L517.6 186.8 L515.0 186.7 L512.8 187.9 L510.3 188.2 L508.0 189.1 L505.6 189.7 L503.4 191.0 L500.8 190.9 L498.6 192.0 L496.5 193.5 L494.1 194.3 L491.7 194.7 L489.3 195.3 L491.4 196.5 L492.5 198.5 L493.0 201.0 L495.0 202.3 L493.0 203.6 L492.4 206.0 L490.3 207.3 L489.3 209.4 L488.1 211.7 L487.2 214.2 L486.7 216.7 L486.5 219.3 L485.7 221.4 L485.8 223.7 L483.8 225.4 L483.7 227.7 L484.9 229.9 L485.4 232.5 L486.7 234.7 L487.4 237.1 L487.6 239.8 L489.3 241.8 L491.6 241.9 L493.5 243.3 L495.6 244.2 L497.8 244.7 L499.7 246.1 L502.1 245.9 L503.9 247.5 L506.3 247.5 L504.6 249.4 L502.8 251.3 L502.6 254.3 L500.6 256.0 L500.4 258.9 L499.2 261.6 L501.3 263.5 L502.2 266.3 L505.2 267.3 L506.3 270.0 L507.6 272.2 L507.7 274.8 L509.0 277.0 L506.7 277.4 L505.6 279.8 L503.5 280.6 L501.4 281.4 L499.5 282.5 L497.8 284.0 L496.7 286.0 L496.0 288.2 L496.1 290.6 L495.0 292.6 L496.6 294.4 L498.1 296.2 L498.3 298.8 L500.2 300.4 L501.4 302.4 L501.5 305.1 L503.4 306.7 L504.9 308.5 L506.7 310.1 L508.4 311.9 L510.2 313.5 L512.0 315.0 L513.8 316.5 L516.2 317.2 L518.4 318.1 L520.4 319.3 L522.5 320.5 L524.1 322.2 L526.0 323.7 L528.2 324.6 L530.0 326.0 L531.3 327.9 L532.5 330.0 L534.6 331.0 L536.8 331.9 L538.0 334.0 L540.1 335.0 L541.8 337.1 L543.1 339.3 L544.0 341.8 L545.0 344.2 L546.0 346.6 L548.1 347.3 L550.4 347.3 L552.4 348.2 L554.8 347.5 L556.7 349.4 L559.1 348.8 L561.1 350.1 L563.5 349.0 L565.4 350.9 L567.7 350.7 L570.2 350.7 L572.3 352.3 L574.7 352.8 L577.1 353.1 L579.6 352.9 L582.1 352.9 L584.4 353.7 L586.6 354.8 L588.4 356.8 L591.3 357.0 L593.0 359.1 L595.2 360.3 L597.5 361.5 L599.5 362.5 L601.9 362.5 L604.0 363.2 L606.1 363.8 L607.7 366.1 L610.2 365.8 L612.1 367.0 L614.3 367.7 L616.4 368.3 L618.9 368.5 L621.3 368.9 L623.7 369.5 L625.7 371.6 L628.4 371.0 L630.3 373.2 L633.0 372.8 L635.3 373.7 L637.6 374.2 L640.0 373.2 L642.3 374.4 L644.7 373.5 L647.0 374.0 L649.4 374.4 L651.7 375.4 L654.2 375.4 L656.4 376.7 L658.9 377.2 L660.9 379.1 L663.6 379.2 L665.9 380.3 L668.2 381.4 L669.8 383.0 L672.2 383.3 L674.1 384.5 L676.0 385.7 L677.6 387.3 L680.0 389.0 L753.0 389.0 L755.3 394.4 L757.8 395.4 L760.1 396.6 L762.4 398.0 L765.0 398.5 L767.6 398.3 L770.1 399.3 L772.8 398.0 L775.3 399.0 L776.5 402.6 L775.9 404.9 L775.3 407.2 L776.1 409.7 L775.3 412.0 L776.4 414.3 L776.0 416.7 L776.9 419.0 L776.5 421.5 L775.1 423.4 L773.4 425.0 L772.8 427.6 L771.4 429.4 L769.4 430.9 L768.6 433.3 L768.4 435.8 L767.0 438.0 L768.8 439.6 L769.9 441.7 L771.8 443.2 L773.3 445.1 L774.1 447.4 L775.1 449.7 L775.8 452.1 L775.8 454.7 L777.2 456.8 L778.8 458.9 L778.9 461.5 L780.5 463.2 L780.9 465.7 L782.4 467.5 L783.1 469.7 L784.1 471.8 L786.0 473.3 L785.4 475.6 L786.7 478.0 L785.2 480.3 L786.0 482.7 L786.5 485.0 L786.0 487.4 L787.8 489.1 L788.1 491.8 L790.4 493.2 L791.9 495.0 L793.0 497.2 L793.3 499.9 L795.3 501.5 L794.2 503.9 L792.6 506.1 L792.5 509.0 L790.6 511.0 L788.3 512.6 L786.1 514.4 L783.6 515.7 L783.6 519.2 L650.5 519.2 L650.5 497.0 L619.0 497.0 L619.0 476.0 L520.3 476.0 L518.0 474.6 L516.3 472.5 L515.0 470.4 L513.0 468.8 L511.1 467.1 L510.8 464.2 L508.6 462.9 L506.6 461.3 L505.5 459.0 L503.1 458.1 L502.0 455.6 L500.1 454.2 L497.7 453.3 L496.4 451.1 L494.6 449.5 L492.7 448.1 L490.4 447.3 L488.1 446.8 L486.2 445.3 L484.2 444.1 L482.1 442.9 L479.6 442.7 L478.0 440.6 L475.7 440.0 L473.9 438.5 L471.6 438.1 L469.6 437.1 L467.2 437.2 L465.4 435.5 L462.9 436.0 L460.8 435.2 L459.0 433.8 L456.8 433.2 L454.2 432.8 L452.0 434.6 L449.5 434.8 L447.0 434.6 L444.7 435.7 L442.2 435.3 L439.9 436.1 L437.5 436.3 L435.0 436.0 L433.5 437.8 L432.7 439.9 L431.0 441.5 L430.8 444.0 L429.3 445.7 L429.2 448.3 L426.7 449.4 L426.3 451.8 L424.7 453.6 L422.6 454.6 L420.7 455.9 L418.4 456.7 L417.0 458.7 L416.3 461.0 L414.7 463.0 L414.8 465.6 L413.0 467.1 L411.9 469.2 L409.4 470.1 L408.6 472.5 L406.0 473.1 L405.0 475.4 L403.3 477.0 L402.6 479.3 L400.3 480.7 L400.1 483.3 L398.7 485.2 L400.7 486.7 L402.6 488.2 L404.1 490.2 L406.7 490.9 L408.0 493.2 L409.5 494.9 L411.1 496.5 L411.4 499.0 L413.9 500.0 L414.3 502.5 L416.1 503.9 L417.0 506.0 L414.8 508.2 L336.6 508.2 L334.7 509.8 L332.7 511.2 L330.6 512.5 L329.3 514.8 L327.2 516.2 L325.0 517.4 L323.1 519.3 L320.1 519.3 L318.2 521.3 L315.8 521.7 L313.5 521.4 L311.3 520.5 L309.0 520.1 L306.7 519.3 L304.2 520.5 L302.0 519.9 L299.7 519.2 L297.3 519.3 L295.1 518.1 L292.8 517.9 L290.5 517.4 L288.2 517.3 L286.0 516.3 L283.6 516.5 L281.4 515.9 L279.0 516.3 L276.7 515.6 L274.4 516.9 L272.1 515.8 L269.8 516.9 L267.5 517.6 L265.2 516.2 L262.9 517.7 L260.6 518.0 L258.3 517.6 L256.0 517.7 L253.7 517.4 L251.6 516.1 L249.2 515.7 L246.8 516.0 L244.5 515.3 L242.3 514.2 L240.0 513.8 L237.7 513.6 L235.3 513.3 L233.0 512.8 L230.6 513.2 L228.4 512.6 L226.2 511.5 L223.9 511.3 L221.6 510.6 L219.4 510.1 L217.0 510.5 L214.9 509.0 L212.2 509.6 L209.8 509.1 L207.9 507.0 L205.4 507.0 L204.4 504.6 L202.6 502.7 L202.3 499.9 L200.8 497.8 L198.5 497.0 L195.8 497.1 L193.2 496.8 L190.6 496.3 L188.0 495.7 L185.8 495.3 L183.7 494.6 L181.3 495.3 L179.3 493.7 L177.0 493.6 L174.8 493.4 L172.6 493.0 L170.5 492.0 L168.3 491.1 L165.6 491.7 L163.7 490.2 L161.6 489.1 L159.3 488.4 L157.0 488.0 L156.6 485.3 L155.2 482.9 L155.9 480.0 L154.5 477.6 L152.6 475.9 L149.9 475.4 L147.9 473.8 L146.3 471.7 L143.4 471.6 L141.5 469.8 L140.1 467.9 L139.6 465.4 L138.3 463.6 L136.4 462.0 L133.7 462.2 L131.2 461.0 L128.6 461.4 L126.0 460.8 L124.1 459.0 L122.2 457.3 L119.4 456.7 L117.5 455.0 L115.7 453.0 L114.0 451.0 L112.7 448.7 L111.1 446.7 L110.5 444.0 L108.7 442.6 L107.8 440.5 L106.5 438.6 L104.7 437.2 L104.0 434.9 L104.8 432.3 L105.3 429.7 L104.1 427.4 L101.9 426.1 L100.0 424.5 L98.0 423.4 L96.4 421.6 L94.2 420.8 L92.4 419.4 L89.4 417.9 L87.2 415.5 L85.5 414.0 L83.2 413.1 L82.3 410.7 L79.9 409.9 L78.5 408.1 L76.9 406.4 L76.8 404.0 L75.6 402.0 L74.3 400.0 L73.5 397.7 L71.9 396.0 L70.5 394.0 L69.0 392.2 L68.8 389.5 L67.8 387.0 L69.8 385.5 L69.9 382.8 L72.1 381.5 L73.0 379.3 L74.0 376.5 L75.2 373.9 L76.9 371.5 L78.3 369.1 L78.7 366.4 L79.4 363.7 L79.4 323.6Z" fill="#e8718b" stroke="#3a2a30" stroke-width="0.9" stroke-linejoin="round"/>
<path d="M362.2 131.8 L362.2 173.6 M290.3 174.4 L539.0 173.8 M228.2 131.8 L228.2 140.8 L225.8 142.0 L223.6 140.8 L221.1 140.2 L217.8 140.5 L214.6 141.4 L216.6 143.8 L218.8 146.1 L222.3 149.6 L221.7 153.8 L219.2 155.5 L216.4 156.7 L215.2 160.2 L217.6 161.4 L214.6 163.8 L210.5 166.1 L211.1 168.5 L212.9 170.2 M182.3 174.4 L195.2 174.4 L198.2 175.5 L204.6 174.9 L207.4 173.3 L210.5 172.6 L212.9 170.2 L216.4 169.6 L219.3 171.1 L222.3 172.6 L227.0 173.8 L231.7 173.2 L233.6 171.5 L235.2 169.6 L238.8 167.3 L242.3 168.5 L242.9 171.2 L243.5 173.9 L243.5 176.7 L244.5 179.6 L244.6 182.6 M178.8 143.8 L182.1 145.0 L185.2 146.7 L181.1 149.0 M244.6 182.6 L237.6 182.6 L235.2 183.6 L232.9 184.9 L232.9 193.2 L235.6 195.2 L237.6 197.9 L240.1 199.5 L242.3 201.4 L242.3 203.8 L244.1 201.7 L246.4 200.0 L248.2 197.9 L249.5 195.7 L249.5 193.0 L250.5 190.7 L251.7 188.5 L251.7 181.4 L248.2 179.0 L246.1 180.5 L244.6 182.6 M242.3 203.8 L239.9 207.3 L236.4 209.6 L235.6 207.1 L234.1 204.9 L232.9 201.4 L228.2 200.2 L225.0 199.9 L221.9 199.2 L218.8 198.5 L192.9 198.5 M204.6 199.0 L204.6 205.5 L192.9 206.1 M196.4 212.0 L221.1 212.0 L223.5 214.4 L231.7 214.4 L233.5 212.0 L235.2 209.6 M197.6 213.2 L200.3 214.4 L202.9 215.8 L205.6 217.2 L208.2 218.5 L211.2 219.8 L214.1 221.4 L214.1 224.4 L221.1 225.0 L231.7 224.4 L231.1 219.1 L231.7 214.4 M208.2 218.5 L208.1 221.3 L207.6 224.0 L207.1 226.7 L206.6 229.4 L205.8 232.0 M221.1 225.0 L221.1 235.0 M232.9 219.1 L235.2 221.4 L237.5 223.3 L239.9 225.0 L240.9 228.6 L242.3 232.0 M251.7 188.5 L254.2 190.7 L256.4 193.2 L253.9 195.4 L251.7 197.9 L252.9 202.6 L254.5 205.7 L256.4 208.5 L258.8 209.5 L261.1 210.8 L264.0 209.0 L267.0 207.3 M254.1 181.4 L257.6 179.0 L261.1 176.1 L267.0 176.7 L269.8 177.2 L272.4 178.6 L275.2 179.0 L277.8 179.6 L280.5 179.6 L283.1 180.2 L285.6 181.0 L286.5 176.2 L290.3 174.4 M239.9 220.2 L243.1 220.0 L246.2 219.4 L249.4 219.1 L252.4 216.9 L255.2 214.4 L258.1 213.0 L261.1 212.0 L264.2 211.0 L267.0 209.6 L268.7 207.1 L269.7 204.1 L271.5 201.6 L273.4 198.8 L275.2 196.0 L275.6 193.4 L276.6 191.0 L277.1 188.5 M239.9 222.6 L243.0 223.7 L246.2 224.5 L249.4 225.0 L253.0 225.9 L256.4 227.3 L256.4 232.0 M267.7 177.2 L268.4 180.3 L268.2 183.5 L268.6 186.6 L271.4 187.3 L274.3 187.5 L277.1 188.5 L280.3 188.9 L283.4 189.8 L286.5 190.4 L288.1 192.4 L288.9 194.9 L290.3 197.0 L293.3 198.7 L296.0 200.7 L298.9 201.0 L301.6 201.6 L304.4 202.1 L307.2 202.8 L310.2 202.6 L312.9 203.5 L313.3 210.1 L313.3 217.6 M313.3 210.1 L491.0 210.3 M296.9 217.6 L317.6 217.6 L318.8 220.1 L320.4 222.4 L320.4 231.8 L321.3 234.9 L321.9 238.0 L322.3 241.2 L322.8 244.0 L323.4 246.8 L324.2 249.6 L328.9 250.6 L328.9 260.0 M296.9 217.6 L296.9 228.0 L294.9 230.7 L293.1 233.6 L290.4 233.6 L287.8 234.5 L285.1 234.7 L282.4 234.7 L279.8 235.4 L277.1 235.5 L277.1 238.7 L276.7 241.8 L276.2 244.9 L273.6 245.9 L271.0 247.2 L268.6 248.7 L269.4 251.6 L270.5 254.4 L272.5 257.5 L275.2 260.0 M247.0 224.2 L249.7 225.7 L252.7 226.6 L255.5 228.0 L256.4 230.8 L256.7 233.7 L258.0 236.4 L258.3 239.3 L260.7 241.3 L263.5 242.8 L265.8 245.0 L268.6 248.7 M350.5 235.5 L382.2 235.5 L382.2 249.6 L384.8 249.9 L387.2 251.0 L388.2 253.4 L398.5 253.4 L398.5 260.0 M350.5 235.5 L350.5 260.0 M367.0 235.5 L382.6 235.5 L382.6 249.4 L385.4 250.0 L388.2 250.5 L388.2 252.8 L398.3 253.4 L398.3 259.5 M169.4 260.5 L499.0 260.0 M277.1 261.9 L277.2 264.5 L276.4 267.1 L276.2 269.7 L276.4 272.4 L276.2 275.0 L278.3 277.7 L280.0 280.7 L282.0 282.4 L283.4 284.5 L285.1 286.4 L287.0 288.2 L288.4 290.2 L290.3 292.0 M276.2 275.0 L278.5 276.0 L280.8 277.1 L283.4 277.5 L285.7 278.4 L288.0 279.7 L290.3 280.7 L292.9 279.9 L295.5 279.0 L298.3 278.6 L300.8 277.5 L303.5 277.0 L311.0 277.0 L313.6 278.7 L316.0 280.7 L318.5 282.6 L381.6 282.6 M382.2 261.0 L382.2 321.8 M382.2 281.7 L426.2 281.8 L426.2 276.2 L428.7 276.1 L431.3 275.9 L433.8 275.3 L436.3 275.1 L441.9 275.1 L441.9 260.6 M318.5 282.6 L318.5 304.4 M247.0 254.4 L249.8 255.3 L252.6 256.2 L254.8 257.5 L257.2 258.5 L259.6 259.1 L262.0 260.0 M254.5 261.9 L256.7 264.5 L258.3 267.5 L258.3 275.0 L257.7 277.5 L256.9 280.0 L256.4 282.6 L256.9 285.7 L257.5 288.8 L257.4 292.0 M247.0 271.3 L249.7 272.7 L252.6 273.2 L255.2 275.4 L258.3 277.0 L260.9 276.1 L263.6 275.8 L266.2 275.4 L268.8 274.5 L271.5 274.1 L276.2 275.0 M189.9 245.5 L189.9 300.8 M195.8 246.7 L195.8 312.0 M180.5 240.2 L183.0 241.2 L185.1 243.0 L187.4 244.4 L189.9 245.5 M171.7 246.7 L170.8 249.8 L170.1 253.1 L168.8 256.1 L169.6 258.7 L170.6 261.3 L170.6 264.2 L171.7 266.7 L171.1 272.6 L167.0 273.8 M167.0 279.6 L212.9 279.6 M167.0 280.8 L169.5 281.6 L171.8 283.0 L174.0 284.6 L176.6 285.2 L178.8 286.7 L181.7 288.0 L184.5 289.5 L187.0 291.4 L189.8 292.6 L192.3 294.4 L194.8 296.1 L197.6 297.3 M178.8 286.7 L189.9 286.7 M196.4 286.7 L199.2 286.6 L202.0 286.7 L204.8 287.4 L207.6 287.2 L210.4 287.3 L213.2 287.3 L216.0 287.5 L218.8 287.9 L221.1 290.2 L221.6 293.3 L223.2 296.0 L223.9 299.0 L224.6 302.0 L226.4 304.5 L228.3 307.0 L230.5 309.1 L231.1 322.0 M182.3 291.4 L182.3 302.0 M167.0 302.0 L169.7 302.5 L172.3 302.2 L175.0 302.7 L177.7 302.5 L180.4 302.4 L183.0 302.6 L185.7 303.0 L188.4 303.1 L191.1 302.6 L193.7 302.8 L196.4 303.2 L212.9 303.2 L215.5 303.9 L218.2 303.4 L220.8 304.4 L223.5 304.4 M198.8 304.4 L198.8 322.0 M212.9 291.4 L212.9 322.0 M196.4 271.4 L211.7 271.4 M211.7 260.8 L211.7 273.8 L214.2 276.0 L216.4 278.5 L218.9 280.1 L221.1 282.0 L224.6 280.6 L228.2 279.6 L237.6 279.6 L239.9 276.1 L238.7 273.8 L237.6 271.4 L224.6 271.4 L224.3 268.2 L222.8 265.2 L222.3 262.0 M214.1 257.3 L217.2 255.5 L219.9 253.2 L237.6 252.6 L238.9 254.9 L239.9 257.3 M218.8 244.4 L219.3 241.2 L220.5 238.2 L221.1 235.0 L238.8 235.0 L239.1 237.5 L239.4 240.0 L239.4 242.6 L239.2 245.2 L239.4 247.7 L239.9 250.2 M196.4 253.8 L208.2 253.8 L208.2 259.6 M196.4 249.1 L199.1 249.0 L201.7 248.4 L204.4 248.9 L207.0 248.6 L209.7 248.7 L212.3 248.6 L214.9 247.9 L217.6 247.9 L218.8 243.2 L196.4 243.2 M204.6 235.0 L205.8 239.6 L204.6 242.0 M207.0 222.0 L206.3 225.1 L205.9 228.2 L205.8 231.4 L208.3 233.0 L210.5 235.0 L214.1 235.4 L217.6 236.1 M214.1 222.0 L214.1 224.4 L231.7 224.4 M237.6 222.0 L238.6 224.3 L239.5 226.7 L240.3 229.0 L241.1 231.4 L241.1 234.4 L240.7 237.3 L239.8 240.2 L239.9 243.2 L239.6 245.9 L239.0 248.7 L238.8 251.4 L239.6 253.9 L241.1 256.1 L239.2 258.3 L237.6 260.8 L237.4 263.6 L236.4 266.3 L236.4 269.1 M239.9 224.4 L242.4 225.3 L244.9 226.0 L247.5 226.4 L250.0 227.0 L252.6 227.6 L255.2 227.9 L256.3 230.8 L256.9 233.8 L258.0 236.6 L258.8 239.6 L260.6 241.6 L263.1 242.9 L264.9 245.0 L267.0 246.7 M249.4 256.1 L252.9 256.6 L256.4 257.3 L261.1 257.3 L262.3 260.2 M254.1 260.8 L254.4 263.8 L255.2 266.7 L258.8 269.1 L258.5 271.9 L257.7 274.5 L257.6 277.3 L260.8 277.2 L263.9 276.8 L267.0 276.1 M239.9 273.8 L244.6 272.6 L249.4 273.8 L252.2 273.8 L254.8 274.9 L257.6 274.9 M237.6 279.6 L237.7 282.3 L238.0 284.9 L238.4 287.6 L238.8 290.2 L236.6 291.8 L233.9 292.3 L231.7 293.8 L228.2 292.6 L224.6 291.4 M238.8 290.2 L241.7 291.4 L244.6 292.6 L247.6 293.6 L250.5 294.9 L252.6 293.5 L254.6 292.0 L256.4 290.2 L257.0 287.7 L256.6 285.0 L257.0 282.4 L257.1 279.9 L257.6 277.3 M234.1 293.8 L234.3 296.4 L233.9 298.9 L233.9 301.5 L233.0 304.0 L233.3 306.6 L232.9 309.1 M239.9 292.6 L240.5 295.1 L240.7 297.7 L240.3 300.3 L241.0 302.8 L240.9 305.3 L241.1 307.9 M245.8 297.3 L245.8 310.2 M230.5 309.1 L233.2 309.3 L235.9 310.0 L238.6 310.5 L241.3 310.2 L244.0 310.9 L246.7 311.4 L249.4 311.4 L252.5 312.2 L255.6 313.3 L258.8 313.8 L261.5 314.8 L264.3 315.2 L267.0 316.1 M255.2 292.6 L257.4 293.9 L259.9 294.5 L262.4 295.1 L264.6 296.4 L267.0 297.3 M257.6 304.4 L260.8 304.3 L263.9 303.6 L267.0 303.2 M184.6 311.4 L184.6 322.0 M167.0 316.1 L184.6 316.1 M198.8 312.6 L201.6 312.3 L204.4 312.0 L207.3 312.2 L210.1 311.8 L212.9 311.4 M195.8 312.0 L195.8 432.0 M172.9 326.7 L223.5 326.7 M172.9 326.7 L174.1 330.8 L176.6 333.0 L178.8 335.5 L177.7 338.5 L176.4 341.4 L178.1 343.7 L179.2 346.4 L181.1 348.5 L183.7 350.1 L186.6 351.2 L188.9 353.3 L191.7 354.4 L191.7 361.4 L189.4 362.8 L186.7 363.4 L184.3 364.6 L181.7 365.5 L179.4 366.8 L177.0 368.1 L174.4 368.8 L171.8 369.6 L169.4 370.7 L167.0 372.0 M178.8 334.9 L195.2 334.4 M167.0 322.6 L169.4 323.6 L171.7 324.9 L172.9 326.7 M167.0 315.5 L183.5 315.5 M183.5 312.0 L184.1 326.1 M188.2 312.0 L187.6 326.1 M195.2 337.3 L217.6 337.3 L218.4 340.5 L218.8 343.8 L223.5 343.8 M195.2 348.5 L197.8 348.5 L200.4 348.3 L203.0 347.5 L205.6 347.9 L208.2 347.3 L211.1 347.3 L213.8 346.3 L216.6 345.8 L219.5 345.6 L222.3 345.0 M208.2 348.5 L206.8 350.7 L206.4 353.3 L205.3 355.6 L204.3 358.0 L202.9 360.2 L202.4 362.8 L201.1 365.0 L202.3 365.5 L204.8 365.7 L207.3 365.8 L209.8 366.1 L212.3 365.8 L214.8 366.7 L217.3 366.8 L219.8 366.6 L222.3 366.7 L227.0 367.9 L237.6 367.3 M191.7 362.6 L193.5 365.7 L195.8 368.5 M170.5 372.0 L172.9 373.3 L174.8 375.3 L177.2 376.5 L179.4 378.2 L181.5 379.8 L184.0 380.9 L186.0 382.8 L188.6 383.8 L190.9 385.1 L193.0 387.0 L195.2 388.5 M167.0 380.2 L169.3 381.4 L171.8 382.2 L174.2 383.1 L176.8 383.5 L179.1 384.7 L181.7 385.3 L184.3 385.7 L186.6 387.0 L189.0 388.0 L191.5 388.5 L193.9 389.5 L196.4 390.2 M180.0 390.2 L243.5 390.2 L245.6 392.2 L247.6 394.4 L249.4 396.7 L251.9 395.8 L254.4 395.0 L256.9 394.1 L259.3 393.0 L261.8 392.1 L264.4 391.5 L267.0 390.8 M205.8 366.1 L205.2 368.6 L204.8 371.2 L204.9 373.8 L204.5 376.3 L203.9 378.8 L203.5 381.4 L204.5 384.1 L204.9 386.9 L205.8 389.6 M221.7 345.0 L221.7 392.0 M222.3 348.5 L237.6 348.5 L237.6 367.3 M222.3 358.5 L237.6 358.5 M237.6 335.5 L232.9 335.5 L232.2 338.4 L232.6 341.4 L231.9 344.3 L231.7 347.3 M232.9 336.7 L255.2 337.3 L258.1 338.4 L261.1 339.1 L262.9 340.8 L264.9 342.4 L267.0 343.8 M237.6 319.1 L237.6 334.9 M224.6 326.1 L227.5 328.0 L230.5 329.6 L231.3 332.5 L231.7 335.5 M217.6 312.0 L216.7 315.5 L216.4 319.1 L217.3 321.6 L218.8 323.8 L221.8 324.0 L224.6 324.9 L226.7 322.2 L228.2 319.1 L228.7 315.5 L229.4 312.0 M228.2 319.1 L237.6 319.1 L240.2 319.1 L242.8 319.5 L245.2 320.5 L247.8 320.8 L250.4 320.7 L252.9 321.4 L253.3 324.1 L253.6 326.9 L254.1 329.6 L255.7 331.9 L258.1 333.4 L259.9 335.5 L263.4 336.3 L267.0 336.7 M237.6 349.6 L240.6 350.6 L243.5 352.0 L246.5 352.3 L249.4 353.2 L251.9 353.8 L254.1 354.9 L256.4 355.9 L258.8 356.7 L260.1 359.0 L261.1 361.4 L262.3 363.6 L263.1 366.0 L264.1 368.3 L264.6 370.8 L262.7 372.5 L260.6 373.9 L258.4 375.2 L256.4 376.7 L253.5 376.3 L250.8 375.3 L247.9 374.7 L245.2 373.5 L242.3 373.2 L240.7 371.2 L239.5 369.0 L237.6 367.3 M259.9 349.6 L263.4 348.4 L267.0 347.3 M227.0 368.5 L227.9 372.0 L228.2 375.5 L229.3 379.1 L230.5 382.6 L228.3 384.6 L225.8 386.1 L222.3 387.3 M214.1 390.8 L214.8 393.9 L215.2 397.0 L215.2 400.2 L216.8 403.2 L218.8 406.1 L220.2 409.3 L222.3 412.0 M224.6 390.8 L224.1 393.8 L223.5 396.7 L224.8 399.0 L225.9 401.4 L227.1 403.7 L228.2 406.1 L228.2 412.0 M205.8 390.2 L205.8 412.0 M170.5 392.0 L170.5 412.0 M181.7 392.0 L181.7 412.0 M190.5 390.8 L190.5 412.0 M167.0 396.7 L169.7 396.6 L172.3 396.0 L175.0 395.4 L177.7 395.8 L180.4 395.2 L183.0 394.3 L185.7 394.8 L188.4 394.4 L191.0 393.7 L193.7 393.6 L196.4 393.2 M167.0 409.6 L190.5 409.6 M167.0 401.4 L181.7 401.4 M244.6 399.1 L244.6 412.0 M249.4 396.7 L250.2 399.2 L251.8 401.4 L253.0 403.7 L254.1 406.1 L256.7 406.9 L259.2 408.0 L261.8 409.1 L264.3 410.1 L267.0 410.8 M127.6 239.1 L131.0 240.6 L134.6 241.4 L134.4 244.4 L133.5 247.3 L131.1 250.8 L132.3 254.4 L138.2 254.9 L140.5 257.3 L145.2 257.3 L148.8 258.1 L152.3 259.1 L153.5 261.4 L150.5 262.0 L147.6 263.2 L144.1 266.1 L140.9 266.2 L137.8 266.8 L134.6 267.3 L137.0 269.6 L137.0 275.5 M152.3 261.4 L154.5 263.9 L157.0 266.1 L157.6 273.2 M140.5 267.3 L143.0 269.9 L145.2 272.6 M140.5 273.2 L171.1 273.2 M140.5 273.2 L138.8 275.2 L137.8 277.6 L136.6 279.8 L135.4 282.1 L134.2 284.4 L132.2 286.2 L131.0 288.5 L129.9 290.8 L115.8 290.8 L112.3 290.8 L112.3 288.0 L112.9 285.3 L113.5 282.6 L110.5 281.1 L107.6 279.6 L105.2 282.6 L102.9 284.1 L100.5 285.5 L97.0 282.6 L95.7 280.3 L95.0 277.7 L93.5 275.5 L89.9 274.4 M98.8 260.2 L102.1 261.6 L105.2 263.2 L105.8 279.1 M129.9 290.8 L131.1 293.2 L132.3 295.5 L132.2 298.1 L132.7 300.7 L133.0 303.3 L133.4 305.9 L133.5 308.5 M84.1 287.3 L85.3 290.2 L86.4 293.2 L84.6 295.5 L82.9 297.9 L79.8 299.4 L77.0 301.4 M86.4 295.5 L107.6 296.1 L109.2 293.9 L111.1 292.0 M107.6 296.1 L109.4 298.2 L111.2 300.4 L112.9 302.6 L114.6 304.9 L116.1 308.0 L118.2 310.8 L116.7 312.9 L115.4 315.1 L113.9 317.1 L112.3 319.1 M114.6 303.2 L132.9 303.2 M120.5 309.6 L122.6 312.2 L125.2 314.4 L122.0 316.0 L121.0 312.9 L120.5 309.6 M111.1 319.1 L113.7 318.5 L116.1 317.1 L118.7 316.5 L121.2 315.6 L123.9 315.4 L126.4 314.4 L128.6 312.2 L131.0 310.3 L133.5 308.5 L135.9 307.5 L138.5 307.1 L141.1 306.7 L143.2 308.9 L145.4 310.9 L147.4 313.1 L149.9 314.9 L167.6 314.9 M87.6 332.0 L90.0 330.7 L91.9 328.8 L94.2 327.4 L95.9 325.1 L98.2 323.8 L100.8 323.7 L103.3 322.8 L105.9 322.1 L108.6 322.1 L111.1 321.4 L112.6 323.4 L114.7 324.9 L116.7 326.5 L118.2 328.5 L157.0 328.5 M171.1 246.1 L170.2 248.7 L169.7 251.4 L169.3 254.0 L168.8 256.7 L169.0 259.4 L170.4 261.9 L170.9 264.6 L171.1 267.3 L170.8 270.9 L169.9 274.4 L168.7 277.3 L166.6 279.8 L165.2 282.6 L165.2 300.2 L165.6 302.8 L166.5 305.3 L166.9 307.9 L167.4 310.5 L167.6 313.2 L167.1 315.9 L166.6 318.6 L166.4 321.4 L163.8 322.6 L161.8 324.6 L159.4 326.1 L157.8 328.9 L157.0 332.0 M168.8 260.2 L177.0 260.2 M167.6 280.2 L170.0 281.6 L172.4 283.1 L174.8 284.4 L177.0 286.1 M167.6 301.4 L177.0 301.4 M167.6 315.5 L170.7 314.9 L173.9 315.2 L177.0 314.4 M166.4 321.4 L168.5 323.5 L171.1 324.9 L172.1 328.5 L173.5 332.0 M121.7 278.5 L126.4 278.5 L126.4 281.4 L121.7 281.4 L121.7 278.5 M80.2 336.1 L82.1 334.5 L84.2 333.1 L86.3 331.7 L88.5 330.5 L90.8 329.4 L92.6 327.6 L94.9 326.6 L97.1 325.3 L99.1 323.8 L101.9 323.1 L104.7 323.3 L107.6 323.3 L110.4 322.9 L113.2 322.6 L115.0 324.7 L116.5 327.2 L118.5 329.1 L156.7 329.1 L158.0 326.8 L159.1 324.4 M156.7 329.1 L155.4 331.3 L153.9 333.4 L152.1 335.2 L150.8 337.3 L149.6 339.6 L135.5 339.6 L133.2 343.2 L127.3 343.8 L126.1 346.7 L123.8 347.3 L123.2 353.8 M80.2 353.8 L144.9 353.8 M149.6 339.6 L148.9 342.7 L148.8 345.9 L148.5 349.1 L147.0 351.6 L144.9 353.8 L146.4 357.2 L147.3 360.8 L146.2 363.8 L144.9 366.7 L146.1 371.4 L148.8 372.7 L151.8 373.3 L154.4 374.9 L157.6 374.8 L160.7 374.4 L163.8 373.8 L166.5 372.6 L169.1 371.0 L172.0 370.2 L173.9 367.6 L175.3 364.7 L177.0 362.0 L177.6 359.5 L178.1 357.0 L178.7 354.5 L179.0 352.0 L178.1 349.6 L177.8 347.1 L177.0 344.7 L176.2 342.3 L175.0 340.0 L173.5 337.9 L171.7 336.1 L170.1 334.1 L168.4 332.1 L167.0 330.0 L164.6 327.8 L161.9 326.1 L159.1 324.4 M121.4 353.8 L121.4 360.2 L118.6 361.0 L115.8 361.9 L113.2 363.2 L110.5 365.2 L108.3 367.7 L106.1 370.2 M87.3 366.7 L89.6 369.1 L92.6 369.5 L95.5 370.2 L106.1 370.2 L108.7 370.8 L111.3 370.7 L113.9 371.4 L116.5 371.3 L119.1 372.0 L134.4 372.0 L137.2 372.9 L140.2 373.2 L142.5 372.3 L144.9 371.4 M77.9 366.7 L87.3 366.7 L90.2 369.1 L90.2 379.6 L75.5 379.6 M106.1 370.2 L104.7 372.3 L102.7 373.9 L101.4 376.1 L100.8 384.4 L102.2 387.4 L102.4 390.8 L103.8 393.8 L101.9 395.7 L100.5 398.1 L98.3 399.8 L96.7 402.0 L95.5 406.7 L94.6 409.3 L93.4 411.9 L92.8 414.6 L92.0 417.3 M72.0 397.3 L95.5 397.9 L96.7 402.0 M140.2 373.2 L141.5 375.7 L142.2 378.4 L143.8 380.8 L143.6 383.8 L142.6 386.7 L140.4 388.9 L138.9 391.7 L136.7 393.8 L135.1 396.8 L133.2 399.6 L130.5 402.0 L127.3 403.8 M103.8 393.8 L105.8 391.6 L107.3 389.1 L109.2 386.9 L110.8 384.4 L113.5 385.1 L115.9 386.4 L118.5 387.2 L121.3 387.6 L123.8 388.8 L126.3 389.9 L129.0 390.3 L131.5 391.6 L134.2 392.1 L136.7 393.2 M104.9 393.8 L107.4 394.8 L109.7 396.4 L112.2 397.5 L114.7 398.7 L117.4 399.3 L119.8 400.5 L122.2 401.8 L124.7 402.9 L127.3 403.8 L130.0 404.3 L132.7 405.3 L135.5 405.5 L153.2 405.5 M142.6 386.7 L161.4 386.1 L162.9 383.9 L164.9 382.0 L166.1 379.6 L169.0 379.0 L172.0 378.5 M137.9 392.6 L172.0 392.6 M135.5 402.0 L154.4 402.0 L157.2 401.9 L159.9 402.6 L162.6 402.3 L165.3 403.0 L168.1 402.6 L170.8 403.2 M154.4 391.4 L154.4 407.9 L156.9 408.5 L159.4 408.3 L161.9 408.6 L164.5 408.3 L167.0 408.9 L169.5 408.8 L172.0 409.1 M163.8 397.3 L163.8 409.1 M166.1 390.2 L167.1 387.8 L168.7 385.7 L169.6 383.2 M257.0 277.9 L260.5 276.9 L264.1 276.7 L266.4 275.7 L268.6 274.4 L271.1 273.8 L273.3 275.5 L275.8 276.7 L277.9 278.7 L280.5 280.2 L283.4 280.4 L286.0 281.4 L288.8 282.0 L292.3 280.2 L299.4 279.6 L304.1 280.8 L306.4 276.7 L312.3 276.7 L314.6 279.6 L318.2 280.2 L318.2 304.4 L298.2 304.4 L295.8 302.9 L293.5 301.4 L291.8 299.5 L289.9 297.9 L293.0 296.0 L295.8 293.8 L292.3 292.7 L288.8 291.4 L287.1 289.3 L284.7 288.1 L282.9 286.1 L281.1 283.9 L280.0 281.3 L278.2 279.1 L275.8 276.7 M275.8 272.0 L275.8 276.7 M318.2 283.2 L382.3 283.2 M257.0 290.8 L261.7 292.0 L264.8 293.1 L267.6 294.9 L274.6 294.4 L276.7 295.7 L278.5 297.5 L280.5 299.1 L282.9 300.7 L285.2 302.6 L286.7 304.8 L287.6 307.3 L289.8 308.8 L292.3 309.6 M257.0 303.8 L268.8 303.8 L271.9 304.1 L275.0 304.8 L278.2 304.9 L280.9 304.3 L283.7 304.5 L286.4 303.8 L289.2 302.1 L292.3 300.8 M257.0 310.8 L259.8 312.3 L262.9 313.2 L265.9 312.7 L268.8 312.0 L272.3 309.6 L275.3 309.7 L278.2 309.3 L281.2 308.9 L284.1 308.5 L286.4 306.1 M286.4 307.3 L286.4 319.1 L283.4 320.2 L280.5 321.4 L272.3 321.4 L270.5 319.4 L268.2 317.9 L265.9 316.4 L264.1 314.4 M286.4 315.5 L289.1 315.6 L291.7 315.2 L294.4 314.8 L297.0 314.4 L299.4 317.9 L302.9 321.4 L302.1 324.3 L301.7 327.3 L306.4 328.5 L306.4 334.4 L303.8 335.8 L301.1 336.8 L298.3 337.7 L295.8 339.1 L293.2 340.3 L290.9 341.9 L288.8 343.8 L291.1 346.1 L288.9 347.6 L286.4 348.5 L284.2 346.6 L281.7 344.9 L279.4 344.0 L277.0 343.2 L274.5 342.6 L272.3 341.4 L270.1 340.1 L268.3 338.3 L266.4 336.7 L264.0 335.5 L261.6 334.5 L259.3 333.3 L257.0 332.0 M302.9 321.4 L305.9 320.0 L308.8 318.5 L319.4 317.9 L319.0 315.2 L318.2 312.6 L321.3 312.3 L324.4 311.5 L327.6 311.4 L328.2 308.9 L328.1 306.4 L328.9 303.9 L328.8 301.4 L333.5 300.2 L334.6 297.3 L373.9 297.4 L373.9 311.2 L371.2 311.0 L368.6 312.1 L365.9 312.0 L363.3 312.3 L363.3 326.7 L349.5 326.0 L349.4 322.8 L348.4 319.7 M295.8 339.6 L298.5 339.6 L301.1 339.9 L303.8 339.9 L306.4 339.8 L309.1 340.1 L311.7 340.2 L314.4 340.5 L317.0 340.8 L318.2 343.8 L328.8 344.4 L328.5 341.4 L328.1 338.5 L327.6 335.5 L326.3 333.3 L324.6 331.5 L322.9 329.6 L325.2 326.1 L328.0 325.0 L331.0 324.6 L333.8 323.4 L336.6 322.4 L339.4 321.4 L342.6 321.1 L345.7 320.4 L348.8 319.6 L349.5 322.8 L349.9 326.1 L357.0 326.7 M322.9 344.9 L322.2 347.8 L321.7 350.8 L316.4 350.8 L316.4 389.6 L307.0 389.6 M257.0 337.9 L260.6 338.9 L264.1 340.2 L261.5 342.3 L259.4 344.9 L262.4 347.1 L265.2 349.6 L263.0 350.9 L261.6 353.1 L259.4 354.4 L260.6 357.4 L260.9 360.7 L261.7 363.8 L263.5 366.4 L264.8 369.3 L266.4 372.0 M316.4 356.7 L313.5 357.4 L310.5 357.2 L307.6 357.9 L304.7 357.2 L301.7 356.7 L292.3 356.7 L289.3 358.3 L286.4 360.2 L283.3 359.5 L280.2 359.0 L277.0 359.1 L275.7 361.9 L274.6 364.9 L277.5 366.3 L280.5 367.3 L283.7 367.6 L286.9 368.4 L289.9 369.6 L291.1 372.0 M266.4 368.5 L269.0 368.6 L271.6 369.2 L274.2 368.7 L276.8 369.1 L279.5 368.7 L282.1 369.2 L284.7 369.7 L287.3 369.6 L289.9 369.6 M317.0 362.0 L327.6 362.0 L328.8 364.9 L331.9 365.6 L335.1 365.3 L338.2 366.1 L339.4 369.6 L390.8 369.5 L390.8 383.2 L422.6 383.2 L425.4 382.8 L428.2 382.6 L431.1 383.0 L433.8 382.2 L436.7 382.8 L439.5 382.2 L441.4 384.9 L442.7 388.0 L444.8 390.6 L442.3 392.7 L440.0 395.0 L437.4 397.0 L439.3 398.8 L441.7 399.8 L443.7 401.4 L446.1 402.3 L447.8 404.3 L450.1 405.5 L450.1 408.1 L451.3 410.5 L451.2 413.2 L452.1 415.6 L452.3 418.2 L449.7 419.0 L447.0 419.4 L444.3 419.6 L441.6 419.9 L438.9 420.4 L436.2 420.9 L433.6 421.8 L431.0 422.4 L428.8 424.5 L426.8 426.7 L428.6 428.6 L429.8 431.0 L431.6 433.0 L433.2 435.1 M382.2 321.8 L384.7 321.0 L387.3 320.7 L389.6 319.5 L392.1 318.7 L394.6 318.0 L397.2 317.6 L399.9 318.3 L402.2 319.8 L404.7 321.0 L407.5 321.5 L409.9 322.8 L412.0 324.7 L414.1 326.6 L416.2 328.5 L418.4 330.3 L420.9 330.6 L423.4 331.2 L426.0 331.1 L428.5 331.6 L431.0 332.4 L433.0 330.6 L435.1 329.0 L437.5 327.7 L440.2 327.0 L442.5 325.4 L445.2 324.8 L447.4 323.2 L450.0 322.3 L452.9 321.7 L456.0 321.8 L458.9 321.4 L461.9 321.1 L464.9 321.0 L466.9 318.9 L468.3 316.3 L470.3 314.2 L473.1 313.3 L475.8 312.3 L478.4 310.9 L481.1 309.9 L483.8 308.8 L486.4 308.7 L488.8 308.0 L491.2 307.2 L493.7 306.6 L496.1 306.2 L498.7 306.1 M427.0 346.6 L428.9 344.2 L430.8 341.7 L433.2 339.6 L435.1 337.2 L437.2 335.6 L439.3 334.0 L441.5 332.6 L443.8 331.3 L445.6 329.3 L447.7 327.7 L450.0 326.4 L452.3 325.2 L454.7 324.2 L457.3 323.7 L459.5 322.3 M459.5 322.3 L459.5 367.0 L456.9 366.9 L454.4 367.2 L451.8 367.6 L449.2 367.8 L446.7 367.8 L444.1 367.2 L441.5 367.5 L439.0 368.0 L436.4 367.7 L433.8 368.3 L431.2 368.0 L428.7 368.2 L426.1 368.5 L423.5 368.0 L421.0 368.1 L418.4 368.4 L416.3 365.7 L414.1 363.1 L415.3 360.8 L417.1 359.0 L418.3 356.7 L419.9 354.7 L420.9 352.3 L422.6 350.4 L425.0 348.8 L427.0 346.6 M459.5 350.2 L475.7 350.7 L479.8 353.4 L479.8 367.0 L482.6 366.9 L485.2 367.4 L487.9 367.9 L490.6 368.3 L491.0 370.8 L491.3 373.3 L491.0 375.9 L490.9 378.5 L491.6 381.0 L491.9 383.5 L491.7 386.1 L492.0 388.6 L493.1 391.2 L493.8 394.0 L494.6 396.7 L490.6 398.0 L490.6 446.8 M490.6 398.0 L493.1 398.8 L495.6 399.1 L498.2 399.5 L500.7 400.0 L503.2 401.0 L505.6 401.9 L508.2 402.1 L509.9 399.6 L510.9 396.7 L513.4 395.0 L516.3 394.0 L519.0 394.9 L521.7 395.8 L524.4 396.7 L536.6 396.7 L536.6 402.1 L533.5 402.8 L530.2 402.9 L527.1 403.5 L524.4 405.5 L521.7 407.5 L519.1 405.9 L516.2 405.0 L513.6 403.5 L511.0 402.4 L508.2 402.1 M523.0 323.6 L523.0 357.5 L513.6 357.5 L513.1 360.0 L513.3 362.6 L513.4 365.1 L512.9 367.7 L513.1 370.2 L512.4 372.7 L512.2 375.3 L512.2 377.8 L514.9 379.2 L517.6 380.5 L518.6 383.4 L520.7 385.7 L521.7 388.6 L525.8 389.9 L526.3 393.3 L527.1 396.7 M427.0 381.8 L429.7 382.4 L432.4 382.2 L435.1 382.7 L437.8 383.2 L439.8 385.0 L441.1 387.3 L442.7 389.4 L444.6 391.3 L442.4 393.2 L440.0 394.8 L437.8 396.7 L440.1 398.4 L442.2 400.4 L444.7 401.9 L446.6 404.2 L449.2 405.7 L451.4 407.5 L452.5 410.1 L453.1 412.8 L453.2 415.6 L454.0 418.3 L451.2 418.7 L448.6 419.5 L446.0 420.6 L443.2 421.0 L440.4 421.8 L437.7 423.0 L435.2 424.6 L432.4 425.5 L429.7 426.5 L431.4 429.3 L433.7 431.7 L435.1 434.6 M287.0 418.2 L318.8 418.2 L321.2 416.6 L323.8 415.5 L326.6 414.7 L329.2 413.5 L331.5 411.8 L334.4 412.3 L337.0 413.6 L339.9 414.1 L342.7 414.9 L345.6 415.4 L348.4 416.0 L351.4 416.2 L354.4 415.7 L357.4 415.8 L360.3 415.3 L363.3 415.0 L365.6 416.2 L367.5 417.8 L369.7 419.2 L371.8 420.5 L373.9 422.0 L376.0 423.5 L378.6 423.6 L381.3 423.8 L384.0 423.6 L386.6 423.8 L389.2 424.1 L391.9 424.3 L394.6 424.3 L397.2 424.5 L399.5 425.8 L402.2 426.7 L404.4 428.2 L406.9 429.2 L409.2 430.8 L411.6 431.9 L414.1 433.0 L433.2 433.0 M363.5 414.3 L365.3 416.1 L367.3 417.5 L369.4 419.0 L370.9 421.1 L373.1 422.4 L375.0 424.0 L376.9 425.8 L378.8 427.6 L380.6 429.6 L382.2 431.7 L384.0 433.6 L386.1 435.3 L387.9 437.2 L389.3 439.8 L391.2 442.0 L392.6 444.6 L394.2 447.0 L395.6 449.5 L395.6 475.5 M171.7 402.0 L171.7 425.5 M181.7 402.0 L181.7 433.8 M189.9 402.0 L189.9 433.8 M205.8 402.0 L205.8 433.8 M167.0 409.1 L189.9 409.1 M189.9 412.0 L229.4 412.0 M189.9 423.2 L205.8 423.2 M178.8 433.8 L221.1 433.8 M167.0 430.2 L169.9 430.2 L170.5 436.7 L172.9 438.0 L175.2 439.6 L177.6 441.5 L179.8 443.7 L182.3 445.5 L183.5 448.5 M178.8 425.5 L179.0 428.3 L179.8 431.0 L179.9 433.8 M200.5 434.4 L199.6 437.1 L198.2 439.6 L195.2 440.8 L192.9 443.2 L190.2 443.6 L187.6 444.4 L187.6 449.1 M167.0 455.5 L174.1 454.9 L174.1 449.6 L189.9 449.6 L189.9 453.8 L181.1 453.8 L180.5 458.5 L182.3 460.8 L198.8 460.2 L202.3 459.6 L204.6 462.0 L204.6 466.1 L207.0 465.4 L209.4 464.4 L214.1 466.1 L215.8 470.2 L225.8 470.2 L243.5 469.6 L243.5 440.8 L253.5 440.2 L253.5 426.7 L267.0 426.7 M181.7 460.8 L181.7 472.6 L186.4 473.8 L186.4 479.1 L176.4 479.1 L176.4 492.6 M225.8 470.2 L225.2 443.2 L228.2 439.6 L228.8 437.3 L225.3 436.2 L221.7 435.5 L221.1 433.8 L220.1 431.4 L218.8 429.1 L218.6 426.1 L217.8 423.2 L217.6 420.2 L222.3 419.1 L223.3 421.7 L223.5 424.4 L225.9 425.9 L228.4 427.2 L230.5 429.1 L234.1 432.0 L236.7 430.6 L238.8 428.5 L241.1 426.7 L243.3 425.0 L245.5 423.5 L247.5 421.6 L249.4 419.6 L257.6 419.6 L257.0 421.4 L254.6 423.2 L252.0 424.7 L249.4 426.1 M224.6 414.9 L224.6 409.1 L221.7 407.8 L219.3 405.7 L216.4 404.4 L216.4 402.0 M227.0 402.0 L227.4 404.5 L228.2 407.0 L228.9 409.5 L229.4 412.0 M244.6 402.0 L244.4 404.8 L243.9 407.5 L243.5 410.2 L244.5 412.7 L245.5 415.1 L247.0 417.3 L249.4 419.6 M251.7 402.0 L253.9 403.7 L256.4 404.9 L257.0 405.8 L259.1 407.4 L261.6 408.4 L263.9 409.7 L266.2 411.1 L269.2 410.7 L272.3 411.0 L275.3 410.3 L278.5 411.6 L281.5 413.4 L284.0 413.7 L286.5 414.4 L288.8 415.5 L291.4 415.7 L291.4 426.4 L257.0 426.4 M291.4 418.8 L296.8 418.8 L300.0 417.5 L302.9 415.7 L305.5 416.1 L307.9 417.0 L310.5 417.6 L313.1 417.7 L315.7 418.0 L318.2 418.8 L320.8 417.5 L323.0 415.6 L325.3 413.9 L328.2 412.9 L330.4 411.1 L333.0 411.7 L335.7 412.3 L338.2 413.2 L340.9 413.5 L343.6 414.0 L346.1 414.9 L348.7 415.7 L357.0 416.5 M264.1 437.3 L264.1 455.5 L267.0 455.5 M253.5 437.3 L264.1 437.3 M221.7 470.2 L221.7 490.2 L235.8 490.2 L235.8 499.6 L231.1 499.6 L231.1 512.0 M275.3 426.4 L275.3 447.8 L278.4 447.9 L281.5 447.8 L284.5 448.3 L287.6 448.6 L287.6 457.0 L273.8 457.0 L273.8 455.5 L263.9 454.7 M300.6 454.7 L394.0 455.3 M300.6 454.7 L300.3 457.3 L300.7 459.8 L300.3 462.4 L300.3 465.0 L300.7 467.5 L300.8 470.1 L300.1 472.7 L300.1 475.2 L300.4 477.8 L300.4 480.4 L299.8 482.9 L299.7 485.5 L300.3 488.1 L299.9 490.7 L299.9 493.2 L300.1 495.8 L300.3 498.4 L300.0 500.9 L299.6 503.5 L299.6 506.1 L299.7 508.6 L300.0 511.2 L299.8 513.8 L299.7 516.3 L299.5 518.9 M231.0 513.6 L299.0 513.6 M106.1 370.2 L108.2 368.5 L110.3 366.8 L112.7 365.6 L114.4 363.4 L116.7 362.0 M96.7 406.7 L101.4 406.1 L104.0 407.1 L106.8 407.0 L109.3 408.2 L112.0 408.2 L114.6 409.1 L117.3 409.6 L116.4 412.1 L115.6 414.8 L114.0 417.0 L113.2 419.6 L110.7 421.4 L108.6 423.7 L106.1 425.5 L105.1 428.6 L104.6 431.8 L103.8 435.0 L106.3 434.2 L108.3 432.2 L110.8 431.4 L113.4 431.1 L116.0 430.7 L118.6 430.8 L121.2 430.7 L123.8 430.2 L123.2 423.2 L119.1 422.0 L120.9 420.2 L122.3 418.1 L123.8 416.1 L126.9 415.6 L130.1 415.6 L133.2 414.9 L136.7 417.3 L137.3 423.8 L135.5 426.1 L139.1 425.5 L141.7 423.6 L144.5 422.2 L147.3 420.8 L149.6 423.2 L152.3 423.8 L155.1 423.9 L157.9 424.4 L158.1 427.1 L159.1 429.6 L163.8 429.1 L163.8 423.2 L167.4 423.4 L170.8 424.4 L170.8 437.3 M136.1 405.5 L135.2 408.3 L134.4 411.1 L133.2 413.8 M147.3 405.5 L146.8 408.4 L145.7 411.2 L144.4 413.8 L145.6 416.6 L146.1 419.6 L147.9 421.3 L149.6 423.2 M161.4 409.1 L162.1 412.6 L162.6 416.1 L155.5 416.1 L153.5 417.7 L151.7 419.4 L149.6 420.8 M170.8 394.9 L170.8 437.3 M139.1 462.0 L140.1 459.7 L140.9 457.3 L142.1 455.1 L142.6 452.6 L145.5 451.7 L148.5 451.4 L151.4 453.2 L154.4 454.9 L172.0 454.9 M648.9 375.0 L648.9 399.4 L616.4 399.4 L616.4 406.2 L613.7 406.5 L611.0 407.0 L608.3 406.9 L605.6 407.5 L605.6 421.0 L589.3 421.0 L589.3 427.8 L586.4 428.2 L583.4 427.8 L580.4 428.4 L577.5 428.6 L574.5 428.6 L574.5 444.0 L554.2 444.0 L554.2 476.0 M574.5 444.0 L577.1 444.0 L579.7 443.9 L582.4 443.6 L585.0 443.3 L587.6 444.0 L590.2 443.4 L592.8 443.1 L595.5 443.5 L598.1 443.3 L600.7 443.0 L603.3 443.0 L605.9 443.3 L608.5 442.8 L611.2 442.8 L613.8 443.2 L616.4 442.7 L615.4 440.0 L614.5 437.3 L613.7 434.6 L610.9 433.8 L608.4 432.3 L605.7 431.2 L602.9 430.3 L600.2 429.2 L598.3 427.5 L596.4 425.8 L594.8 423.8 L591.9 425.6 L589.3 427.8 M539.0 406.0 L542.0 407.0 L541.0 409.0 L538.0 408.0 L539.0 406.0 M671.9 457.6 L674.6 459.0 L674.6 461.6 L672.0 460.5 L671.9 457.6 M776.5 450.0 L776.6 452.6 L776.3 455.1 L776.7 457.7 L776.5 460.3 L777.1 462.8 L777.0 465.4 L776.4 467.9 L776.7 470.5 L776.7 473.1 L776.9 475.6 L777.0 478.2 L777.3 480.8 L777.4 483.3 L777.0 485.9 L777.0 488.4 L777.4 491.0 L777.1 493.6 L777.6 496.1 L777.2 498.7 L777.7 501.3 L777.4 503.8 L777.6 506.4 L777.5 508.9 L777.9 511.5 L777.6 514.1 L777.6 516.6 L777.7 519.2" fill="none" stroke="#3a262c" stroke-width="1" stroke-linejoin="round"/></svg>
</div>
<div class="a" style="left:313px;top:168px;width:816px;height:653px;border:1px solid #a0a0a0;border-right-color:#e0e0e0;border-bottom-color:#e0e0e0"></div>
<div class="a" style="left:1px;top:821px;width:1128px;height:28px;background:#f0f0f0"></div>
<div class="a" style="left:5px;top:824px;width:200px;height:22px;background:#fff;border:1px solid #c4c4c4;border-radius:3px"></div>
<svg style="left:13px;top:828px" width="14" height="14" viewBox="0 0 14 14"><circle cx="6" cy="6" r="4.8" fill="none" stroke="#888" stroke-width="1.3"/><path d="M9.5 9.5L13.5 13.5" stroke="#888" stroke-width="1.6"/></svg>
<div class="a" style="left:33.5px;top:829px;font-size:12px;font-weight:400;letter-spacing:-0.336px;white-space:nowrap;color:#666;line-height:14px;">Type to locate (Ctrl+K)</div>
<div class="a" style="left:213px;top:829px;font-size:12px;font-weight:400;letter-spacing:-0.594px;white-space:nowrap;color:#000;line-height:14px;">1 legend entrie</div>
<div class="a" style="left:293.5px;top:829px;font-size:12px;font-weight:400;letter-spacing:-0.572px;white-space:nowrap;color:#000;line-height:14px;">Coordinate</div>
<div class="a" style="left:351px;top:824px;width:96px;height:22px;background:#fff;border:1px solid #c4c4c4"></div>
<div class="a" style="left:357px;top:829px;font-size:12px;font-weight:400;letter-spacing:-0.369px;white-space:nowrap;color:#000;line-height:14px;">-121.911,48.756</div>
<svg style="left:450px;top:826px" width="16" height="16" viewBox="0 0 16 16"><path d="M2 3L6 1L9 4L12 2L14 5L11 7L13 11L10 14L6 13L4 9L1 7Z" fill="none" stroke="#444" stroke-width="1.3"/><circle cx="8" cy="8" r="2" fill="#444"/></svg>
<div class="a" style="left:479.5px;top:829px;font-size:12px;font-weight:400;letter-spacing:-1.166px;white-space:nowrap;color:#000;line-height:14px;">Scale</div>
<div class="a" style="left:509px;top:824px;width:80px;height:22px;background:#fff;border:1px solid #c4c4c4"></div>
<div class="a" style="left:568px;top:824px;width:1px;height:22px;background:#d8d8d8"></div>
<svg style="left:573px;top:833px" width="8" height="5" viewBox="0 0 8 5"><path d="M0 0H8L4 4.5Z" fill="#555"/></svg>
<div class="a" style="left:512px;top:829px;font-size:12px;font-weight:400;letter-spacing:-0.508px;white-space:nowrap;color:#000;line-height:14px;">1:796404</div>
<svg style="left:599px;top:827px" width="14" height="16" viewBox="0 0 14 16"><path d="M3.5 7V4.5A3.5 3.5 0 0 1 10.5 4.5V7" fill="none" stroke="#777" stroke-width="1.6"/><rect x="1.5" y="7" width="11" height="8" rx="1" fill="#777"/></svg>
<div class="a" style="left:621.5px;top:829px;font-size:12px;font-weight:400;letter-spacing:-0.651px;white-space:nowrap;color:#000;line-height:14px;">Magnifier</div>
<div class="a" style="left:670px;top:824px;width:87px;height:22px;background:#fff;border:1px solid #c4c4c4"></div>
<div class="a" style="left:673.5px;top:829px;font-size:12px;font-weight:400;letter-spacing:-0.926px;white-space:nowrap;color:#000;line-height:14px;">100%</div>
<svg style="left:745px;top:826px" width="9" height="17" viewBox="0 0 9 17"><path d="M0.5 5H8.5L4.5 1Z M0.5 12H8.5L4.5 16Z" fill="#666"/><path d="M0 8.5H9" stroke="#ddd"/></svg>
<div class="a" style="left:765.5px;top:829px;font-size:12px;font-weight:400;letter-spacing:-0.550px;white-space:nowrap;color:#000;line-height:14px;">Rotation</div>
<div class="a" style="left:816px;top:824px;width:83px;height:22px;background:#fff;border:1px solid #c4c4c4"></div>
<div class="a" style="left:821px;top:829px;font-size:12px;font-weight:400;letter-spacing:-0.166px;white-space:nowrap;color:#000;line-height:14px;">0.0 °</div>
<svg style="left:887px;top:826px" width="9" height="17" viewBox="0 0 9 17"><path d="M0.5 5H8.5L4.5 1Z M0.5 12H8.5L4.5 16Z" fill="#666"/><path d="M0 8.5H9" stroke="#ddd"/></svg>
<svg style="left:907px;top:829px" width="13" height="13" viewBox="0 0 13 13"><rect x="0.5" y="0.5" width="12" height="12" fill="#fff" stroke="#b0b0b0"/><path d="M2.8 6.2L5.2 9.6L10.2 2.6" fill="none" stroke="#000" stroke-width="1.6"/></svg>
<div class="a" style="left:924.5px;top:829px;font-size:12px;font-weight:400;letter-spacing:-0.843px;white-space:nowrap;color:#000;line-height:14px;">Render</div>
<svg style="left:977px;top:827px" width="16" height="16" viewBox="0 0 16 16"><circle cx="8" cy="8" r="6.5" fill="#f4f4f4" stroke="#777"/><ellipse cx="8" cy="8" rx="2.8" ry="6.5" fill="none" stroke="#777" stroke-width="0.8"/><path d="M1.5 8H14.5M2.5 5H13.5M2.5 11H13.5" stroke="#777" stroke-width="0.8"/></svg>
<div class="a" style="left:996px;top:829px;font-size:12px;font-weight:400;letter-spacing:-1.028px;white-space:nowrap;color:#000;line-height:14px;">Unknown CRS</div>
<svg style="left:1082px;top:827px" width="18" height="16" viewBox="0 0 18 16"><path d="M9 1.5C4.5 1.5 1 4 1 7.5C1 9.5 2 11 4 12L3 15L7 13C7.7 13.2 8.3 13.3 9 13.3C13.5 13.3 17 10.8 17 7.5S13.5 1.5 9 1.5Z" fill="#666"/><circle cx="5.5" cy="7.5" r="1.1" fill="#fff"/><circle cx="9" cy="7.5" r="1.1" fill="#fff"/><circle cx="12.5" cy="7.5" r="1.1" fill="#fff"/></svg>
<div class="a" style="left:1112px;top:838px;width:12px;height:10px;background-image:radial-gradient(circle at 1px 1px,#bbb 0.8px,transparent 1px);background-size:3px 3px"></div>
<div class="a" style="left:0;top:849px;width:1130px;height:1px;background:#0063b1"></div>

</body></html>
